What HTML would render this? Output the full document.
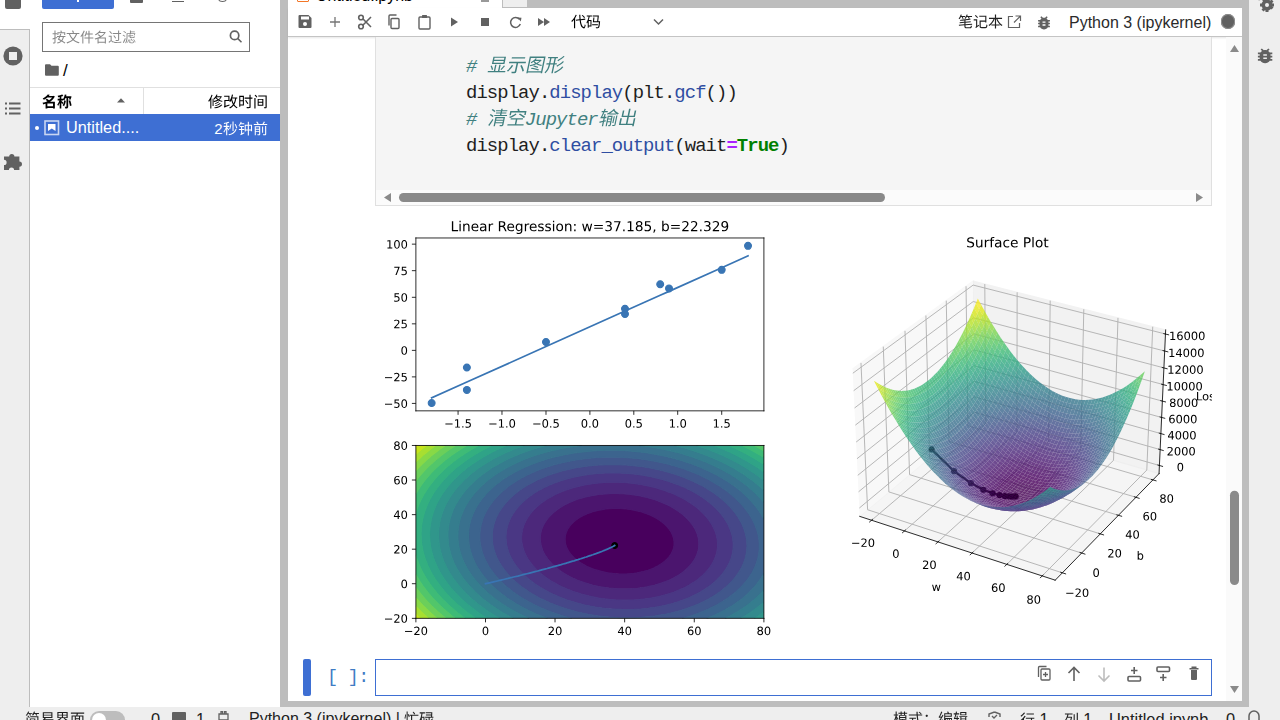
<!DOCTYPE html>
<html><head><meta charset="utf-8">
<style>
*{box-sizing:border-box}
html,body{margin:0;padding:0;width:1280px;height:720px;overflow:hidden;background:#fff;font-family:"Liberation Sans",sans-serif;color:#212121}
.a{position:absolute}
.t{position:absolute;white-space:nowrap;line-height:1}
svg{display:block}
.fig *{stroke-linejoin:round;stroke-linecap:butt}
.cj{display:inline-block;height:1em;vertical-align:-0.12em;fill:currentColor;overflow:visible}
.code{position:absolute;left:466px;font-family:"Liberation Mono",monospace;font-size:18.9px;letter-spacing:-0.92px;line-height:26.45px;white-space:pre;color:#1e1e1e}
.code .cj{font-size:19px}
.cm{color:#408080;font-style:italic}
.pr{color:#2f4ea2}
.op{color:#aa22ff;font-weight:bold}
.kw{color:#008000;font-weight:bold}
</style></head><body>
<svg width="0" height="0" style="position:absolute"><defs><path id="gb540d" d="M236 -503C274 -473 320 -435 359 -400C256 -350 143 -313 28 -290C50 -264 78 -213 90 -180C140 -192 189 -206 238 -222V89H358V46H735V89H859V-361H534C672 -449 787 -564 857 -709L774 -757L754 -751H460C480 -776 499 -801 517 -827L382 -855C322 -761 211 -660 47 -588C74 -568 112 -522 130 -493C218 -538 292 -588 355 -643H675C623 -574 553 -513 471 -461C427 -499 373 -540 329 -571ZM735 -63H358V-252H735Z"/><path id="gb79f0" d="M481 -447C463 -328 427 -206 375 -130C402 -117 450 -88 471 -70C525 -156 568 -292 592 -427ZM774 -427C813 -317 851 -172 862 -77L972 -112C958 -208 920 -348 877 -459ZM519 -847C496 -733 455 -618 400 -539V-567H287V-708C335 -719 381 -733 422 -748L356 -844C276 -810 153 -780 43 -762C55 -736 70 -696 74 -671C107 -675 143 -680 178 -686V-567H43V-455H164C129 -357 74 -250 19 -185C37 -158 62 -111 73 -79C110 -129 147 -199 178 -275V90H287V-314C312 -275 337 -233 350 -205L415 -301C398 -324 314 -409 287 -433V-455H400V-504C428 -488 463 -465 481 -451C513 -495 543 -552 569 -616H629V-42C629 -28 624 -24 611 -24C597 -24 553 -24 513 -26C529 4 548 54 553 86C618 86 667 82 701 65C737 46 747 16 747 -41V-616H829C816 -584 802 -551 788 -522L892 -496C919 -562 949 -640 973 -712L898 -731L881 -727H608C617 -759 626 -791 633 -824Z"/><path id="g663e" d="M244 -570H757V-466H244ZM244 -731H757V-628H244ZM171 -791V-405H833V-791ZM820 -330C787 -266 727 -180 682 -126L740 -97C786 -151 842 -230 885 -300ZM124 -297C165 -233 213 -145 236 -93L297 -123C275 -174 224 -260 183 -322ZM571 -365V-39H423V-365H352V-39H40V33H960V-39H643V-365Z"/><path id="g793a" d="M234 -351C191 -238 117 -127 35 -56C54 -46 88 -24 104 -11C183 -88 262 -207 311 -330ZM684 -320C756 -224 832 -94 859 -10L934 -44C904 -129 826 -255 753 -349ZM149 -766V-692H853V-766ZM60 -523V-449H461V-19C461 -3 455 1 437 2C418 3 352 3 284 0C296 23 308 56 311 79C400 79 459 78 494 66C530 53 542 31 542 -18V-449H941V-523Z"/><path id="g56fe" d="M375 -279C455 -262 557 -227 613 -199L644 -250C588 -276 487 -309 407 -325ZM275 -152C413 -135 586 -95 682 -61L715 -117C618 -149 445 -188 310 -203ZM84 -796V80H156V38H842V80H917V-796ZM156 -29V-728H842V-29ZM414 -708C364 -626 278 -548 192 -497C208 -487 234 -464 245 -452C275 -472 306 -496 337 -523C367 -491 404 -461 444 -434C359 -394 263 -364 174 -346C187 -332 203 -303 210 -285C308 -308 413 -345 508 -396C591 -351 686 -317 781 -296C790 -314 809 -340 823 -353C735 -369 647 -396 569 -432C644 -481 707 -538 749 -606L706 -631L695 -628H436C451 -647 465 -666 477 -686ZM378 -563 385 -570H644C608 -531 560 -496 506 -465C455 -494 411 -527 378 -563Z"/><path id="g5f62" d="M846 -824C784 -743 670 -658 574 -610C593 -596 615 -574 628 -557C730 -613 842 -703 916 -795ZM875 -548C808 -461 687 -371 584 -319C603 -304 625 -281 638 -266C745 -325 866 -422 943 -520ZM898 -278C823 -153 681 -42 532 19C552 35 574 61 586 79C740 8 883 -111 968 -250ZM404 -708V-449H243V-708ZM41 -449V-379H171C167 -230 145 -83 37 36C55 46 81 70 93 86C213 -45 238 -211 242 -379H404V79H478V-379H586V-449H478V-708H573V-778H58V-708H172V-449Z"/><path id="g6e05" d="M82 -772C137 -742 207 -695 241 -662L287 -721C252 -752 181 -796 126 -823ZM35 -506C93 -475 166 -427 201 -394L246 -453C209 -486 135 -531 78 -559ZM66 21 134 66C182 -28 240 -154 282 -261L222 -305C175 -190 111 -57 66 21ZM431 -212H793V-134H431ZM431 -268V-342H793V-268ZM575 -840V-762H319V-704H575V-640H343V-585H575V-516H281V-458H950V-516H649V-585H888V-640H649V-704H913V-762H649V-840ZM361 -400V79H431V-77H793V-5C793 7 788 11 774 12C760 13 712 13 662 11C671 29 680 57 684 76C755 76 800 76 828 64C856 53 864 33 864 -4V-400Z"/><path id="g7a7a" d="M564 -537C666 -484 802 -405 869 -357L919 -415C848 -462 710 -537 611 -587ZM384 -590C307 -523 203 -455 85 -413L129 -348C246 -398 356 -474 436 -544ZM77 -22V46H927V-22H538V-275H825V-343H182V-275H459V-22ZM424 -824C440 -792 459 -752 473 -718H76V-492H150V-649H849V-517H926V-718H565C550 -755 524 -807 502 -846Z"/><path id="g8f93" d="M734 -447V-85H793V-447ZM861 -484V-5C861 6 857 9 846 10C833 10 793 10 747 9C757 27 765 54 767 71C826 71 866 70 890 60C915 49 922 31 922 -5V-484ZM71 -330C79 -338 108 -344 140 -344H219V-206C152 -190 90 -176 42 -167L59 -96L219 -137V79H285V-154L368 -176L362 -239L285 -221V-344H365V-413H285V-565H219V-413H132C158 -483 183 -566 203 -652H367V-720H217C225 -756 231 -792 236 -827L166 -839C162 -800 157 -759 150 -720H47V-652H137C119 -569 100 -501 91 -475C77 -430 65 -398 48 -393C56 -376 67 -344 71 -330ZM659 -843C593 -738 469 -639 348 -583C366 -568 386 -545 397 -527C424 -541 451 -557 477 -574V-532H847V-581C872 -566 899 -551 926 -537C935 -557 956 -581 974 -596C869 -641 774 -698 698 -783L720 -816ZM506 -594C562 -635 615 -683 659 -734C710 -678 765 -633 826 -594ZM614 -406V-327H477V-406ZM415 -466V76H477V-130H614V1C614 10 612 12 604 13C594 13 568 13 537 12C546 30 554 57 556 74C599 74 630 74 651 63C672 52 677 33 677 1V-466ZM477 -269H614V-187H477Z"/><path id="g51fa" d="M104 -341V21H814V78H895V-341H814V-54H539V-404H855V-750H774V-477H539V-839H457V-477H228V-749H150V-404H457V-54H187V-341Z"/><path id="g6309" d="M772 -379C755 -284 723 -210 675 -151C621 -180 567 -209 516 -234C538 -277 562 -327 584 -379ZM417 -210C482 -178 553 -139 623 -99C557 -45 470 -9 358 16C371 32 389 64 395 81C519 49 615 4 688 -61C773 -10 850 41 900 82L954 24C901 -16 824 -65 739 -114C794 -182 831 -269 853 -379H959V-447H612C631 -497 649 -547 663 -594L587 -605C573 -556 553 -501 531 -447H355V-379H502C474 -315 444 -256 417 -210ZM383 -712V-517H454V-645H873V-518H945V-712H711C701 -752 684 -803 668 -845L593 -831C606 -795 620 -750 630 -712ZM177 -840V-639H42V-568H177V-319L30 -277L48 -204L177 -244V-7C177 8 171 12 158 12C145 13 104 13 58 12C68 32 79 62 81 80C147 80 188 78 214 67C240 55 249 35 249 -7V-267L377 -309L367 -376L249 -340V-568H357V-639H249V-840Z"/><path id="g6587" d="M423 -823C453 -774 485 -707 497 -666L580 -693C566 -734 531 -799 501 -847ZM50 -664V-590H206C265 -438 344 -307 447 -200C337 -108 202 -40 36 7C51 25 75 60 83 78C250 24 389 -48 502 -146C615 -46 751 28 915 73C928 52 950 20 967 4C807 -36 671 -107 560 -201C661 -304 738 -432 796 -590H954V-664ZM504 -253C410 -348 336 -462 284 -590H711C661 -455 592 -344 504 -253Z"/><path id="g4ef6" d="M317 -341V-268H604V80H679V-268H953V-341H679V-562H909V-635H679V-828H604V-635H470C483 -680 494 -728 504 -775L432 -790C409 -659 367 -530 309 -447C327 -438 359 -420 373 -409C400 -451 425 -504 446 -562H604V-341ZM268 -836C214 -685 126 -535 32 -437C45 -420 67 -381 75 -363C107 -397 137 -437 167 -480V78H239V-597C277 -667 311 -741 339 -815Z"/><path id="g540d" d="M263 -529C314 -494 373 -446 417 -406C300 -344 171 -299 47 -273C61 -256 79 -224 86 -204C141 -217 197 -233 252 -253V79H327V27H773V79H849V-340H451C617 -429 762 -553 844 -713L794 -744L781 -740H427C451 -768 473 -797 492 -826L406 -843C347 -747 233 -636 69 -559C87 -546 111 -519 122 -501C217 -550 296 -609 361 -671H733C674 -583 587 -508 487 -445C440 -486 374 -536 321 -572ZM773 -42H327V-271H773Z"/><path id="g8fc7" d="M79 -774C135 -722 199 -649 227 -602L290 -646C259 -693 193 -763 137 -813ZM381 -477C432 -415 493 -327 521 -275L584 -313C555 -365 492 -449 441 -510ZM262 -465H50V-395H188V-133C143 -117 91 -72 37 -14L89 57C140 -12 189 -71 222 -71C245 -71 277 -37 319 -11C389 33 473 43 597 43C693 43 870 38 941 34C942 11 955 -27 964 -47C867 -37 716 -28 599 -28C487 -28 402 -36 336 -76C302 -96 281 -116 262 -128ZM720 -837V-660H332V-589H720V-192C720 -174 713 -169 693 -168C673 -167 603 -167 530 -170C541 -148 553 -115 557 -93C651 -93 712 -94 747 -107C783 -119 796 -141 796 -192V-589H935V-660H796V-837Z"/><path id="g6ee4" d="M528 -198V-18C528 46 548 62 627 62C643 62 752 62 768 62C833 62 851 35 857 -74C840 -79 815 -87 803 -97C799 -4 794 8 762 8C738 8 649 8 633 8C596 8 590 4 590 -19V-198ZM448 -197C433 -130 406 -41 369 12L421 35C457 -20 483 -111 499 -180ZM616 -240C655 -193 699 -128 717 -85L765 -114C747 -156 703 -220 662 -266ZM803 -197C852 -130 899 -37 916 21L968 -4C950 -63 900 -152 852 -219ZM88 -767C144 -733 212 -681 246 -645L292 -697C258 -731 189 -780 133 -813ZM42 -500C99 -469 170 -422 205 -390L249 -443C213 -475 140 -519 85 -548ZM63 10 127 51C173 -39 227 -158 268 -259L211 -300C167 -192 105 -65 63 10ZM326 -651V-440C326 -300 316 -103 228 38C242 46 272 71 282 85C378 -67 395 -290 395 -439V-592H874C862 -557 849 -522 835 -498L890 -483C913 -522 937 -586 958 -642L912 -654L901 -651H639V-714H915V-772H639V-840H567V-651ZM540 -578V-490L432 -481L437 -424L540 -433V-394C540 -326 563 -309 652 -309C671 -309 797 -309 816 -309C884 -309 904 -331 911 -420C893 -424 866 -433 852 -443C848 -376 842 -367 809 -367C782 -367 678 -367 657 -367C614 -367 607 -372 607 -395V-439L795 -456L790 -510L607 -495V-578Z"/><path id="g4fee" d="M698 -386C644 -334 543 -287 454 -260C468 -248 486 -230 496 -215C591 -247 694 -299 755 -362ZM794 -287C726 -216 594 -159 467 -130C482 -116 497 -95 506 -80C641 -117 774 -179 850 -263ZM887 -179C798 -76 614 -12 413 17C428 33 444 59 452 77C664 40 852 -32 952 -151ZM306 -561V-78H370V-561ZM553 -668H832C798 -613 749 -566 692 -528C630 -570 584 -619 553 -668ZM565 -841C523 -733 451 -629 370 -562C387 -552 415 -530 428 -518C458 -546 488 -579 517 -616C545 -574 584 -532 633 -494C554 -452 462 -424 371 -407C384 -393 400 -366 407 -350C507 -371 605 -404 690 -454C756 -412 836 -378 930 -356C939 -373 958 -402 972 -416C887 -432 813 -459 750 -492C827 -548 890 -620 928 -712L885 -734L871 -731H590C607 -761 621 -792 634 -823ZM235 -834C187 -679 107 -526 20 -426C33 -407 53 -367 59 -349C92 -388 123 -432 153 -481V80H224V-614C255 -678 282 -747 304 -815Z"/><path id="g6539" d="M602 -585H808C787 -454 755 -343 706 -251C657 -345 622 -455 598 -574ZM76 -770V-696H357V-484H89V-103C89 -66 73 -53 58 -46C71 -27 83 10 88 32C111 13 148 -6 439 -117C436 -134 431 -166 430 -188L165 -93V-410H429L424 -404C440 -392 470 -363 482 -350C508 -385 532 -425 553 -469C581 -362 616 -264 662 -181C602 -97 522 -32 416 16C431 32 453 66 461 84C563 33 643 -31 706 -111C761 -32 830 32 915 75C927 55 950 27 968 12C879 -29 808 -94 751 -177C817 -286 859 -420 886 -585H952V-655H626C643 -710 658 -768 670 -827L596 -840C565 -676 510 -517 431 -413V-770Z"/><path id="g65f6" d="M474 -452C527 -375 595 -269 627 -208L693 -246C659 -307 590 -409 536 -485ZM324 -402V-174H153V-402ZM324 -469H153V-688H324ZM81 -756V-25H153V-106H394V-756ZM764 -835V-640H440V-566H764V-33C764 -13 756 -6 736 -6C714 -4 640 -4 562 -7C573 15 585 49 590 70C690 70 754 69 790 56C826 44 840 22 840 -33V-566H962V-640H840V-835Z"/><path id="g95f4" d="M91 -615V80H168V-615ZM106 -791C152 -747 204 -684 227 -644L289 -684C265 -726 211 -785 164 -827ZM379 -295H619V-160H379ZM379 -491H619V-358H379ZM311 -554V-98H690V-554ZM352 -784V-713H836V-11C836 2 832 6 819 7C806 7 765 8 723 6C733 25 743 57 747 75C808 75 851 75 878 63C904 50 913 31 913 -11V-784Z"/><path id="g79d2" d="M493 -670C478 -561 452 -445 416 -368C433 -362 465 -347 479 -337C515 -418 545 -540 563 -657ZM775 -662C822 -576 869 -462 887 -387L955 -412C936 -487 889 -598 839 -684ZM839 -351C766 -154 609 -41 360 11C376 28 393 57 401 77C664 14 830 -112 909 -329ZM633 -840V-221H705V-840ZM372 -826C297 -793 165 -763 53 -745C61 -729 71 -704 74 -687C117 -693 164 -700 210 -709V-558H43V-488H201C161 -373 93 -243 30 -172C42 -154 60 -124 68 -103C118 -164 170 -263 210 -363V78H284V-385C317 -336 355 -274 371 -242L416 -301C397 -328 311 -439 284 -468V-488H425V-558H284V-725C333 -737 380 -751 418 -766Z"/><path id="g949f" d="M653 -556V-318H516V-556ZM727 -556H865V-318H727ZM653 -838V-629H448V-184H516V-245H653V81H727V-245H865V-190H937V-629H727V-838ZM180 -837C150 -744 96 -654 36 -595C48 -579 68 -541 75 -525C110 -561 143 -606 173 -656H415V-725H210C224 -755 237 -787 248 -818ZM60 -344V-275H205V-73C205 -26 171 4 152 17C165 30 184 57 192 73C208 57 237 40 427 -59C421 -75 415 -104 413 -124L277 -56V-275H418V-344H277V-479H394V-547H112V-479H205V-344Z"/><path id="g524d" d="M604 -514V-104H674V-514ZM807 -544V-14C807 1 802 5 786 5C769 6 715 6 654 4C665 24 677 56 681 76C758 77 809 75 839 63C870 51 881 30 881 -13V-544ZM723 -845C701 -796 663 -730 629 -682H329L378 -700C359 -740 316 -799 278 -841L208 -816C244 -775 281 -721 300 -682H53V-613H947V-682H714C743 -723 775 -773 803 -819ZM409 -301V-200H187V-301ZM409 -360H187V-459H409ZM116 -523V75H187V-141H409V-7C409 6 405 10 391 10C378 11 332 11 281 9C291 28 302 57 307 76C374 76 419 75 446 63C474 52 482 32 482 -6V-523Z"/><path id="g4ee3" d="M715 -783C774 -733 844 -663 877 -618L935 -658C901 -703 829 -771 769 -819ZM548 -826C552 -720 559 -620 568 -528L324 -497L335 -426L576 -456C614 -142 694 67 860 79C913 82 953 30 975 -143C960 -150 927 -168 912 -183C902 -67 886 -8 857 -9C750 -20 684 -200 650 -466L955 -504L944 -575L642 -537C632 -626 626 -724 623 -826ZM313 -830C247 -671 136 -518 21 -420C34 -403 57 -365 65 -348C111 -389 156 -439 199 -494V78H276V-604C317 -668 354 -737 384 -807Z"/><path id="g7801" d="M410 -205V-137H792V-205ZM491 -650C484 -551 471 -417 458 -337H478L863 -336C844 -117 822 -28 796 -2C786 8 776 10 758 9C740 9 695 9 647 4C659 23 666 52 668 73C716 76 762 76 788 74C818 72 837 65 856 43C892 7 915 -98 938 -368C939 -379 940 -401 940 -401H816C832 -525 848 -675 856 -779L803 -785L791 -781H443V-712H778C770 -624 757 -502 745 -401H537C546 -475 556 -569 561 -645ZM51 -787V-718H173C145 -565 100 -423 29 -328C41 -308 58 -266 63 -247C82 -272 100 -299 116 -329V34H181V-46H365V-479H182C208 -554 229 -635 245 -718H394V-787ZM181 -411H299V-113H181Z"/><path id="g7b14" d="M58 -159 65 -93 426 -124V-44C426 47 457 71 570 71C595 71 773 71 799 71C894 71 917 38 928 -78C906 -83 876 -94 859 -106C852 -14 844 4 795 4C756 4 604 4 574 4C512 4 501 -5 501 -44V-131L944 -169L937 -234L501 -197V-302L853 -332L846 -394L501 -365V-456C630 -470 753 -489 849 -512L807 -573C646 -533 367 -503 127 -488C134 -471 143 -444 145 -426C235 -431 332 -439 426 -448V-358L107 -331L114 -268L426 -295V-190ZM184 -845C153 -744 99 -645 36 -579C54 -569 85 -549 100 -538C133 -577 165 -626 194 -681H245C271 -634 297 -577 308 -541L374 -566C364 -597 343 -641 321 -681H476V-745H224C236 -772 247 -799 257 -827ZM578 -845C549 -746 495 -653 429 -592C447 -582 479 -561 493 -549C527 -584 560 -630 589 -681H661C683 -643 706 -599 715 -568L781 -592C773 -617 756 -650 737 -681H935V-745H620C632 -772 642 -799 651 -827Z"/><path id="g8bb0" d="M124 -769C179 -720 249 -652 280 -608L335 -661C300 -703 230 -769 176 -815ZM200 61V60C214 41 242 20 408 -98C400 -113 389 -143 384 -163L280 -92V-526H46V-453H206V-93C206 -44 175 -10 157 4C171 17 192 45 200 61ZM419 -770V-695H816V-442H438V-57C438 41 474 65 586 65C611 65 790 65 816 65C925 65 951 20 962 -143C940 -148 908 -161 889 -175C884 -33 874 -7 812 -7C773 -7 621 -7 591 -7C527 -7 515 -16 515 -56V-370H816V-318H891V-770Z"/><path id="g672c" d="M460 -839V-629H65V-553H367C294 -383 170 -221 37 -140C55 -125 80 -98 92 -79C237 -178 366 -357 444 -553H460V-183H226V-107H460V80H539V-107H772V-183H539V-553H553C629 -357 758 -177 906 -81C920 -102 946 -131 965 -146C826 -226 700 -384 628 -553H937V-629H539V-839Z"/><path id="g7b80" d="M107 -454V78H180V-454ZM152 -539C194 -502 242 -448 264 -413L322 -454C299 -489 250 -540 207 -577ZM320 -387V-41H688V-387ZM207 -843C174 -748 116 -657 49 -598C66 -589 96 -568 111 -556C147 -592 183 -638 214 -689H274C297 -648 320 -599 330 -566L396 -593C387 -619 369 -655 350 -689H493V-752H248C259 -776 269 -800 278 -825ZM596 -841C571 -755 525 -673 468 -618C487 -609 517 -588 530 -576C558 -606 586 -645 610 -688H687C717 -646 746 -595 758 -561L823 -590C812 -617 790 -653 767 -688H930V-751H641C651 -775 660 -800 668 -825ZM620 -189V-99H385V-189ZM385 -329H620V-245H385ZM350 -538V-470H820V-11C820 4 816 8 800 9C785 10 732 10 676 8C686 26 696 55 700 74C775 74 824 73 855 63C885 51 894 32 894 -10V-538Z"/><path id="g6613" d="M260 -573H754V-473H260ZM260 -731H754V-633H260ZM186 -794V-410H297C233 -318 137 -235 39 -179C56 -167 85 -140 98 -126C152 -161 208 -206 260 -257H399C332 -150 232 -55 124 6C141 18 169 45 181 60C295 -15 408 -127 483 -257H618C570 -137 493 -31 402 38C418 49 449 73 461 85C557 6 642 -116 696 -257H817C801 -85 784 -13 763 7C753 17 744 19 726 19C708 19 662 19 613 13C625 32 632 60 633 79C683 82 732 82 757 80C786 78 806 71 826 52C856 20 876 -66 895 -291C897 -302 898 -325 898 -325H322C345 -352 366 -381 384 -410H829V-794Z"/><path id="g754c" d="M311 -271V-212C311 -137 294 -40 118 26C134 40 159 67 169 86C364 8 388 -114 388 -210V-271ZM231 -578H461V-469H231ZM536 -578H768V-469H536ZM231 -744H461V-637H231ZM536 -744H768V-637H536ZM629 -271V78H706V-269C769 -226 840 -191 911 -169C922 -188 945 -217 962 -233C843 -264 723 -328 646 -406H845V-808H157V-406H357C280 -327 160 -260 45 -227C62 -211 84 -184 95 -164C227 -211 366 -301 449 -406H559C597 -356 647 -310 703 -271Z"/><path id="g9762" d="M389 -334H601V-221H389ZM389 -395V-506H601V-395ZM389 -160H601V-43H389ZM58 -774V-702H444C437 -661 426 -614 416 -576H104V80H176V27H820V80H896V-576H493L532 -702H945V-774ZM176 -43V-506H320V-43ZM820 -43H670V-506H820Z"/><path id="g5fd9" d="M175 -840V79H243V-840ZM80 -647C73 -566 55 -456 28 -390L87 -369C113 -442 132 -558 137 -639ZM251 -654C281 -594 312 -513 323 -464L380 -492C368 -539 336 -617 305 -676ZM573 -806C613 -760 658 -696 677 -655L743 -691C722 -733 676 -794 635 -838ZM372 -633V-561H469V16H935V-51H545V-561H961V-633Z"/><path id="g788c" d="M418 -347C465 -308 518 -253 542 -216L594 -257C570 -294 515 -348 468 -384ZM441 -800V-735H815L811 -648H462V-588H808L803 -494H409V-427H641V-237C544 -172 441 -106 374 -67L416 -8C481 -52 563 -110 641 -167V-2C641 9 638 12 626 12C614 12 577 13 535 11C544 31 554 59 557 78C615 78 654 76 679 66C704 54 711 35 711 -2V-186C766 -104 840 -36 925 1C936 -18 956 -43 972 -56C894 -84 823 -137 770 -202C828 -242 896 -296 949 -345L890 -382C852 -341 792 -287 739 -246C728 -262 719 -279 711 -296V-427H959V-494H875C881 -590 886 -711 888 -799L835 -803L826 -800ZM46 -789V-720H162C139 -547 100 -384 28 -278C42 -262 66 -228 74 -212C92 -240 109 -270 124 -303V19H188V-60H364V-496H191C209 -567 224 -642 235 -720H395V-789ZM188 -430H300V-127H188Z"/><path id="g6a21" d="M472 -417H820V-345H472ZM472 -542H820V-472H472ZM732 -840V-757H578V-840H507V-757H360V-693H507V-618H578V-693H732V-618H805V-693H945V-757H805V-840ZM402 -599V-289H606C602 -259 598 -232 591 -206H340V-142H569C531 -65 459 -12 312 20C326 35 345 63 352 80C526 38 607 -34 647 -140C697 -30 790 45 920 80C930 61 950 33 966 18C853 -6 767 -61 719 -142H943V-206H666C671 -232 676 -260 679 -289H893V-599ZM175 -840V-647H50V-577H175V-576C148 -440 90 -281 32 -197C45 -179 63 -146 72 -124C110 -183 146 -274 175 -372V79H247V-436C274 -383 305 -319 318 -286L366 -340C349 -371 273 -496 247 -535V-577H350V-647H247V-840Z"/><path id="g5f0f" d="M709 -791C761 -755 823 -701 853 -665L905 -712C875 -747 811 -798 760 -833ZM565 -836C565 -774 567 -713 570 -653H55V-580H575C601 -208 685 82 849 82C926 82 954 31 967 -144C946 -152 918 -169 901 -186C894 -52 883 4 855 4C756 4 678 -241 653 -580H947V-653H649C646 -712 645 -773 645 -836ZM59 -24 83 50C211 22 395 -20 565 -60L559 -128L345 -82V-358H532V-431H90V-358H270V-67Z"/><path id="gff1a" d="M250 -486C290 -486 326 -515 326 -560C326 -606 290 -636 250 -636C210 -636 174 -606 174 -560C174 -515 210 -486 250 -486ZM250 4C290 4 326 -26 326 -71C326 -117 290 -146 250 -146C210 -146 174 -117 174 -71C174 -26 210 4 250 4Z"/><path id="g7f16" d="M40 -54 58 15C140 -18 245 -61 346 -103L332 -163C223 -121 114 -79 40 -54ZM61 -423C75 -430 98 -435 205 -450C167 -386 132 -335 116 -316C87 -278 66 -252 45 -248C53 -230 64 -196 68 -182C87 -194 118 -204 339 -255C336 -271 333 -298 334 -317L167 -282C238 -374 307 -486 364 -597L303 -632C286 -593 265 -554 245 -517L133 -505C190 -593 246 -706 287 -815L215 -840C179 -719 112 -587 91 -554C71 -520 55 -496 38 -491C46 -473 57 -438 61 -423ZM624 -350V-202H541V-350ZM675 -350H746V-202H675ZM481 -412V72H541V-143H624V47H675V-143H746V46H797V-143H871V7C871 14 868 16 861 17C854 17 836 17 814 16C822 32 829 56 831 73C867 73 890 71 908 62C926 52 930 35 930 8V-413L871 -412ZM797 -350H871V-202H797ZM605 -826C621 -798 637 -762 648 -732H414V-515C414 -361 405 -139 314 21C329 28 360 50 372 63C465 -99 482 -335 483 -498H920V-732H729C717 -765 697 -811 675 -846ZM483 -668H850V-561H483Z"/><path id="g8f91" d="M551 -751H819V-650H551ZM482 -808V-594H892V-808ZM81 -332C89 -340 119 -346 153 -346H244V-202L40 -167L56 -94L244 -132V76H313V-146L427 -169L423 -234L313 -214V-346H405V-414H313V-568H244V-414H148C176 -483 204 -565 228 -650H412V-722H247C255 -756 263 -791 269 -825L196 -840C191 -801 183 -761 174 -722H47V-650H157C136 -570 115 -504 105 -479C88 -435 75 -403 58 -398C66 -380 77 -346 81 -332ZM815 -472V-386H560V-472ZM400 -76 412 -8 815 -40V80H885V-46L959 -52L960 -115L885 -110V-472H953V-535H423V-472H491V-82ZM815 -329V-242H560V-329ZM815 -185V-105L560 -86V-185Z"/><path id="g884c" d="M435 -780V-708H927V-780ZM267 -841C216 -768 119 -679 35 -622C48 -608 69 -579 79 -562C169 -626 272 -724 339 -811ZM391 -504V-432H728V-17C728 -1 721 4 702 5C684 6 616 6 545 3C556 25 567 56 570 77C668 77 725 77 759 66C792 53 804 30 804 -16V-432H955V-504ZM307 -626C238 -512 128 -396 25 -322C40 -307 67 -274 78 -259C115 -289 154 -325 192 -364V83H266V-446C308 -496 346 -548 378 -600Z"/><path id="gff0c" d="M157 107C262 70 330 -12 330 -120C330 -190 300 -235 245 -235C204 -235 169 -210 169 -163C169 -116 203 -92 244 -92L261 -94C256 -25 212 22 135 54Z"/><path id="g5217" d="M642 -724V-164H716V-724ZM848 -835V-17C848 -1 842 4 826 4C810 5 758 5 703 3C713 24 725 56 728 76C805 76 853 74 882 63C912 51 924 29 924 -18V-835ZM181 -302C232 -267 294 -218 333 -181C265 -85 178 -17 79 22C95 37 115 66 124 85C336 -10 491 -205 541 -552L495 -566L482 -563H257C273 -611 287 -662 299 -714H571V-786H61V-714H224C189 -561 133 -419 53 -326C70 -315 99 -290 111 -276C158 -335 198 -409 232 -494H459C440 -400 411 -317 373 -247C334 -281 273 -326 224 -357Z"/></defs></svg>
<!-- left tab bar -->
<div class="a" style="left:0;top:0;width:30px;height:707px;background:#eeeeee;border-right:1px solid #bdbdbd"></div>
<div class="a" style="left:0;top:0;width:30px;height:30px;background:#fff;border-bottom:1px solid #bdbdbd"></div>
<div class="a" style="left:0;top:29px;width:30px;height:1px;background:#bdbdbd"></div>
<svg class="a" style="left:0;top:0" width="29" height="180" viewBox="0 0 29 180">
  <path d="M5 -4h16v11a2 2 0 0 1-2 2h-12a2 2 0 0 1-2-2z" fill="#616161"/>
  <circle cx="13" cy="56" r="9.6" fill="#616161"/>
  <rect x="9" y="52" width="8" height="8" fill="#eeeeee"/>
  <g fill="#616161"><rect x="5" y="102.5" width="2" height="2"/><rect x="5" y="107.5" width="2" height="2"/><rect x="5" y="112.5" width="2" height="2"/>
  <rect x="9" y="102.5" width="11.5" height="2"/><rect x="9" y="107.5" width="11.5" height="2"/><rect x="9" y="112.5" width="11.5" height="2"/></g>
  <path d="M4 156.5h5.2a2.6 2.6 0 1 1 5.2 0h5v5a2.6 2.6 0 1 1 0 5.2v3.3h-5.3a2.6 2.6 0 1 0-5.2 0h-4.9v-5a2.6 2.6 0 1 0 0-5.2z" fill="#616161"/>
</svg>

<!-- file browser panel -->
<div class="a" style="left:30px;top:0;width:250px;height:707px;background:#fff"></div>
<div class="a" style="left:42px;top:-4px;width:72px;height:13px;background:#3e6fd3;border-radius:2px"></div>
<div class="a" style="left:129.5px;top:0;width:13px;height:2.5px;background:#616161;border-radius:0 0 1px 1px"></div>
<div class="a" style="left:172px;top:0.8px;width:11.5px;height:1.6px;background:#616161"></div>
<div class="a" style="left:77px;top:0;width:1.6px;height:1.6px;background:#fff"></div>
<div class="a" style="left:217.5px;top:-5px;width:9px;height:7px;border:1.6px solid #616161;border-radius:50%"></div>
<div class="a" style="left:42px;top:22px;width:208px;height:30px;border:1px solid #757575;background:#fff"></div>
<div class="t" style="left:52px;top:30px;font-size:14px;color:#888"><svg class="cj" viewBox="0 -880 6000 1000" style="width:6.000em"><use href="#g6309" x="0"/><use href="#g6587" x="1000"/><use href="#g4ef6" x="2000"/><use href="#g540d" x="3000"/><use href="#g8fc7" x="4000"/><use href="#g6ee4" x="5000"/></svg></div>
<svg class="a" style="left:229px;top:29px" width="15" height="15" viewBox="0 0 15 15"><circle cx="5.6" cy="6.4" r="4.2" fill="none" stroke="#616161" stroke-width="1.7"/><path d="M8.6 9.4l3.9 3.9" stroke="#616161" stroke-width="1.5"/></svg>
<svg class="a" style="left:45px;top:64px" width="14" height="12" viewBox="0 0 14 12"><path d="M0 1.2a1 1 0 0 1 1-1h4l1.5 1.6h6.3a1 1 0 0 1 1 1v7.9a1 1 0 0 1-1 1h-11.8a1 1 0 0 1-1-1z" fill="#616161"/></svg>
<div class="t" style="left:63px;top:62px;font-size:17px;color:#000">/</div>
<div class="a" style="left:30px;top:87px;width:250px;height:1px;background:#e0e0e0"></div>
<div class="a" style="left:143px;top:88px;width:1px;height:26px;background:#e0e0e0"></div>
<div class="t" style="left:42px;top:94px;font-size:15px;font-weight:bold;color:#000"><svg class="cj" viewBox="0 -880 2000 1000" style="width:2.000em"><use href="#gb540d" x="0"/><use href="#gb79f0" x="1000"/></svg></div>
<svg class="a" style="left:116px;top:97px" width="10" height="6" viewBox="0 0 10 6"><path d="M1 5.5L5 1.2L9 5.5z" fill="#616161"/></svg>
<div class="t" style="right:1012.5px;top:94px;font-size:15px;color:#000"><svg class="cj" viewBox="0 -880 4000 1000" style="width:4.000em"><use href="#g4fee" x="0"/><use href="#g6539" x="1000"/><use href="#g65f6" x="2000"/><use href="#g95f4" x="3000"/></svg></div>
<div class="a" style="left:30px;top:114px;width:250px;height:27px;background:#3e6fd3"></div>
<div class="a" style="left:34.5px;top:125.5px;width:4.5px;height:4.5px;border-radius:50%;background:#fff"></div>
<svg class="a" style="left:44px;top:120px" width="16" height="16" viewBox="0 0 16 16"><rect x="1" y="1" width="13.5" height="13.5" fill="none" stroke="#c9d6f2" stroke-width="1.6"/><path d="M4 4h7.5v7l-3.7-2.6L4 11z" fill="#fff"/></svg>
<div class="t" style="left:66px;top:119.3px;font-size:16.3px;color:#fff">Untitled....</div>
<div class="t" style="right:1012.5px;top:120.5px;font-size:15px;color:#fff">2<svg class="cj" viewBox="0 -880 3000 1000" style="width:3.000em"><use href="#g79d2" x="0"/><use href="#g949f" x="1000"/><use href="#g524d" x="2000"/></svg></div>

<!-- splitter -->
<div class="a" style="left:280px;top:0;width:8px;height:707px;background:#bdbdbd"></div>

<!-- tab bar -->
<div class="a" style="left:288px;top:0;width:954px;height:8px;background:#bdbdbd"></div>
<div class="a" style="left:288px;top:0;width:214px;height:8px;background:#fff"></div>
<div class="a" style="left:502px;top:0;width:26px;height:8px;background:#bdbdbd"></div>
<div class="a" style="left:503px;top:0;width:24px;height:7px;background:#eeeeee"></div>
<div class="a" style="left:297px;top:-10px;width:12px;height:12px;border:1.5px solid #f37626;border-radius:1px"></div>
<div class="t" style="left:316px;top:-12px;font-size:16px;color:#000">Untitled.ipynb</div>
<div class="a" style="left:481px;top:0;width:8px;height:2px;background:#999"></div>

<!-- toolbar -->
<div class="a" style="left:288px;top:8px;width:954px;height:29px;background:#fff;border-bottom:1px solid #c4c4c4;box-shadow:0 1px 2px rgba(0,0,0,0.10)"></div>
<svg class="a" style="left:288px;top:7.4px" width="420" height="28" viewBox="0 0 420 28">
  <g fill="#616161">
    <path d="M11.5 8h9l3 3v9a1 1 0 0 1-1 1h-11a1 1 0 0 1-1-1v-11a1 1 0 0 1 1-1z"/>
  </g>
  <rect x="13" y="9.5" width="8" height="3" fill="#fff"/>
  <circle cx="17" cy="17" r="2" fill="#fff"/>
  <path d="M47 10v10M42 15h10" stroke="#757575" stroke-width="1.3"/>
  <g stroke="#616161" fill="none" stroke-width="1.6">
    <circle cx="73" cy="10.5" r="2.3"/><circle cx="73" cy="19.5" r="2.3"/>
    <path d="M74.8 11.8L83 20M74.8 18.2L83 10"/>
  </g>
  <g fill="none" stroke="#616161" stroke-width="1.4">
    <rect x="103" y="11.5" width="8" height="10" rx="1"/>
    <path d="M101 18.5v-9.5a1 1 0 0 1 1-1h6.5"/>
    <rect x="131" y="10" width="11" height="12" rx="1"/>
  </g>
  <rect x="134" y="8" width="5" height="3" rx="0.5" fill="#616161"/>
  <path d="M163 10.5v9l7-4.5z" fill="#616161"/>
  <rect x="193" y="11" width="8" height="8" fill="#616161"/>
  <path d="M231.5 12.3a5 5 0 1 0 0.8 4.8" fill="none" stroke="#616161" stroke-width="1.5"/>
  <path d="M229.5 10.5l4 0.3l-0.7 3.8z" fill="#616161"/>
  <path d="M250 11v8l6-4z M256 11v8l6-4z" fill="#616161"/>
  <path d="M366 12.5l4.5 4.5l4.5-4.5" fill="none" stroke="#616161" stroke-width="1.5"/>
</svg>
<div class="t" style="left:571px;top:14px;font-size:15px;color:#000"><svg class="cj" viewBox="0 -880 2000 1000" style="width:2.000em"><use href="#g4ee3" x="0"/><use href="#g7801" x="1000"/></svg></div>
<div class="t" style="left:958px;top:14px;font-size:15px;color:#212121"><svg class="cj" viewBox="0 -880 3000 1000" style="width:3.000em"><use href="#g7b14" x="0"/><use href="#g8bb0" x="1000"/><use href="#g672c" x="2000"/></svg></div>
<svg class="a" style="left:1007px;top:15px" width="15" height="14" viewBox="0 0 15 14"><path d="M6 1.5H1.5v11h11V8" fill="none" stroke="#616161" stroke-width="1.2"/><path d="M8.5 1H13.5v5M13.5 1L7 7.5" fill="none" stroke="#616161" stroke-width="1.2"/></svg>
<svg class="a" style="left:1035px;top:13.5px" width="18" height="17" viewBox="0 0 24 23"><path d="M20 8h-2.81c-.45-.78-1.07-1.45-1.82-1.96L17 4.41 15.59 3l-2.17 2.17C12.96 5.06 12.49 5 12 5c-.49 0-.96.06-1.41.17L8.41 3 7 4.41l1.62 1.63C7.88 6.55 7.26 7.22 6.81 8H4v2h2.09c-.05.33-.09.66-.09 1v1H4v2h2v1c0 .34.04.67.09 1H4v2h2.81c1.04 1.79 2.97 3 5.19 3s4.15-1.21 5.19-3H20v-2h-2.09c.05-.33.09-.66.09-1v-1h2v-2h-2v-1c0-.34-.04-.67-.09-1H20V8zm-6 8h-4v-2h4v2zm0-4h-4v-2h4v2z" fill="#616161"/></svg>
<div class="t" style="left:1069px;top:15px;font-size:16px;color:#2a2a2a">Python 3 (ipykernel)</div>
<div class="a" style="left:1220.8px;top:14.4px;width:14.4px;height:14.4px;border-radius:50%;background:#616161;box-shadow:inset 0 0 0 1px #8e8e8e"></div>

<!-- notebook scroll area -->
<div class="a" style="left:1226px;top:37px;width:16px;height:664px;background:#fafafa"></div>
<svg class="a" style="left:1226px;top:37px" width="16" height="664" viewBox="0 0 16 664">
  <path d="M4 15L8.5 8L13 15z" fill="#8a8a8a"/>
  <rect x="4" y="453.7" width="9" height="94.3" rx="4.5" fill="#8a8a8a"/>
  <path d="M4 649L8.5 656L13 649z" fill="#8a8a8a"/>
</svg>

<!-- code editor -->
<div class="a" style="left:375px;top:37px;width:837px;height:169px;background:#f5f5f5;border:1px solid #e0e0e0;border-top:none"></div>
<div class="a" style="left:376px;top:190px;width:835px;height:15px;background:#fbfbfb"></div>
<svg class="a" style="left:376px;top:190px" width="835" height="15" viewBox="0 0 835 15">
  <path d="M8 7.5L15 3v9z" fill="#8a8a8a"/>
  <rect x="23" y="3" width="486" height="9" rx="4.5" fill="#8a8a8a"/>
  <path d="M827 7.5L820 3v9z" fill="#8a8a8a"/>
</svg>
<div class="code" style="top:53.7px"><span class="cm"># <svg class="cj" viewBox="0 -880 4000 1000" style="width:4.000em"><g transform="skewX(-12)"><use href="#g663e" x="0"/><use href="#g793a" x="1000"/><use href="#g56fe" x="2000"/><use href="#g5f62" x="3000"/></g></svg></span></div>
<div class="code" style="top:80.1px">display.<span class="pr">display</span>(plt.<span class="pr">gcf</span>())</div>
<div class="code" style="top:106.6px"><span class="cm"># <svg class="cj" viewBox="0 -880 2000 1000" style="width:2.000em"><g transform="skewX(-12)"><use href="#g6e05" x="0"/><use href="#g7a7a" x="1000"/></g></svg>Jupyter<svg class="cj" viewBox="0 -880 2000 1000" style="width:2.000em"><g transform="skewX(-12)"><use href="#g8f93" x="0"/><use href="#g51fa" x="1000"/></g></svg></span></div>
<div class="code" style="top:133px">display.<span class="pr">clear_output</span>(wait<span class="op">=</span><span class="kw">True</span>)</div>

<!-- figure -->
<div class="a" style="left:375px;top:206px;width:837px;height:444px;overflow:hidden;background:#fff">
<div class="a fig" style="left:0;top:0;transform:translate(-82.6px,-27.25px);width:987.84px;height:493.92px"><svg width="987.84" height="493.92" viewBox="0 0 864 432"><defs></defs><g><g><path d="M0 432L864 432L864 0L0 0z" style="fill: #ffffff"/></g><g><g><path d="M108 203L412.4 203L412.4 51.8L108 51.8z" style="fill: #ffffff"/></g><g><defs><path id="md227ce05fe" d="M0 3C0.8 3 1.6 2.7 2.1 2.1C2.7 1.6 3 0.8 3 0C3 -0.8 2.7 -1.6 2.1 -2.1C1.6 -2.7 0.8 -3 0 -3C-0.8 -3 -1.6 -2.7 -2.1 -2.1C-2.7 -1.6 -3 -0.8 -3 0C-3 0.8 -2.7 1.6 -2.1 2.1C-1.6 2.7 -0.8 3 0 3z" style="stroke: #3975b4"/></defs><g clip-path="url(#p1d80104ca5)"><use href="#md227ce05fe" x="121.8" y="196.2" style="fill: #3975b4; stroke: #3975b4"/><use href="#md227ce05fe" x="152.6" y="165.1" style="fill: #3975b4; stroke: #3975b4"/><use href="#md227ce05fe" x="152.6" y="184.7" style="fill: #3975b4; stroke: #3975b4"/><use href="#md227ce05fe" x="221.8" y="142.8" style="fill: #3975b4; stroke: #3975b4"/><use href="#md227ce05fe" x="290.9" y="113.7" style="fill: #3975b4; stroke: #3975b4"/><use href="#md227ce05fe" x="290.9" y="118.3" style="fill: #3975b4; stroke: #3975b4"/><use href="#md227ce05fe" x="321.7" y="92.3" style="fill: #3975b4; stroke: #3975b4"/><use href="#md227ce05fe" x="329.4" y="95.9" style="fill: #3975b4; stroke: #3975b4"/><use href="#md227ce05fe" x="375.5" y="79.7" style="fill: #3975b4; stroke: #3975b4"/><use href="#md227ce05fe" x="398.5" y="58.7" style="fill: #3975b4; stroke: #3975b4"/></g></g><g><g><g><defs><path id="maeb5e95414" d="M0 0L0 3.5" style="stroke: #000000; stroke-width: 0.72"/></defs><g><use href="#maeb5e95414" x="144.9" y="203" style="stroke: #000000; stroke-width: 0.72"/></g></g><g><!-- −1.5 --><g transform="translate(132.751156 217.638437) scale(0.1 -0.1)"><defs><path id="DejaVuSans-2212" d="M678 2272L4684 2272L4684 1741L678 1741L678 2272z" transform="scale(0.015625)"/><path id="DejaVuSans-31" d="M794 531L1825 531L1825 4091L703 3866L703 4441L1819 4666L2450 4666L2450 531L3481 531L3481 0L794 0L794 531z" transform="scale(0.015625)"/><path id="DejaVuSans-2e" d="M684 794L1344 794L1344 0L684 0L684 794z" transform="scale(0.015625)"/><path id="DejaVuSans-35" d="M691 4666L3169 4666L3169 4134L1269 4134L1269 2991Q1406 3038 1543 3061Q1681 3084 1819 3084Q2600 3084 3056 2656Q3513 2228 3513 1497Q3513 744 3044 326Q2575 -91 1722 -91Q1428 -91 1123 -41Q819 9 494 109L494 744Q775 591 1075 516Q1375 441 1709 441Q2250 441 2565 725Q2881 1009 2881 1497Q2881 1984 2565 2268Q2250 2553 1709 2553Q1456 2553 1204 2497Q953 2441 691 2322L691 4666z" transform="scale(0.015625)"/></defs><use href="#DejaVuSans-2212"/><use href="#DejaVuSans-31" transform="translate(83.789062 0)"/><use href="#DejaVuSans-2e" transform="translate(147.412109 0)"/><use href="#DejaVuSans-35" transform="translate(179.199219 0)"/></g></g></g><g><g><g><use href="#maeb5e95414" x="183.3" y="203" style="stroke: #000000; stroke-width: 0.72"/></g></g><g><!-- −1.0 --><g transform="translate(171.180908 217.638437) scale(0.1 -0.1)"><defs><path id="DejaVuSans-30" d="M2034 4250Q1547 4250 1301 3770Q1056 3291 1056 2328Q1056 1369 1301 889Q1547 409 2034 409Q2525 409 2770 889Q3016 1369 3016 2328Q3016 3291 2770 3770Q2525 4250 2034 4250zM2034 4750Q2819 4750 3233 4129Q3647 3509 3647 2328Q3647 1150 3233 529Q2819 -91 2034 -91Q1250 -91 836 529Q422 1150 422 2328Q422 3509 836 4129Q1250 4750 2034 4750z" transform="scale(0.015625)"/></defs><use href="#DejaVuSans-2212"/><use href="#DejaVuSans-31" transform="translate(83.789062 0)"/><use href="#DejaVuSans-2e" transform="translate(147.412109 0)"/><use href="#DejaVuSans-30" transform="translate(179.199219 0)"/></g></g></g><g><g><g><use href="#maeb5e95414" x="221.8" y="203" style="stroke: #000000; stroke-width: 0.72"/></g></g><g><!-- −0.5 --><g transform="translate(209.61066 217.638437) scale(0.1 -0.1)"><use href="#DejaVuSans-2212"/><use href="#DejaVuSans-30" transform="translate(83.789062 0)"/><use href="#DejaVuSans-2e" transform="translate(147.412109 0)"/><use href="#DejaVuSans-35" transform="translate(179.199219 0)"/></g></g></g><g><g><g><use href="#maeb5e95414" x="260.2" y="203" style="stroke: #000000; stroke-width: 0.72"/></g></g><g><!-- 0.0 --><g transform="translate(252.230256 217.638437) scale(0.1 -0.1)"><use href="#DejaVuSans-30"/><use href="#DejaVuSans-2e" transform="translate(63.623047 0)"/><use href="#DejaVuSans-30" transform="translate(95.410156 0)"/></g></g></g><g><g><g><use href="#maeb5e95414" x="298.6" y="203" style="stroke: #000000; stroke-width: 0.72"/></g></g><g><!-- 0.5 --><g transform="translate(290.660008 217.638437) scale(0.1 -0.1)"><use href="#DejaVuSans-30"/><use href="#DejaVuSans-2e" transform="translate(63.623047 0)"/><use href="#DejaVuSans-35" transform="translate(95.410156 0)"/></g></g></g><g><g><g><use href="#maeb5e95414" x="337" y="203" style="stroke: #000000; stroke-width: 0.72"/></g></g><g><!-- 1.0 --><g transform="translate(329.08976 217.638437) scale(0.1 -0.1)"><use href="#DejaVuSans-31"/><use href="#DejaVuSans-2e" transform="translate(63.623047 0)"/><use href="#DejaVuSans-30" transform="translate(95.410156 0)"/></g></g></g><g><g><g><use href="#maeb5e95414" x="375.5" y="203" style="stroke: #000000; stroke-width: 0.72"/></g></g><g><!-- 1.5 --><g transform="translate(367.519512 217.638437) scale(0.1 -0.1)"><use href="#DejaVuSans-31"/><use href="#DejaVuSans-2e" transform="translate(63.623047 0)"/><use href="#DejaVuSans-35" transform="translate(95.410156 0)"/></g></g></g></g><g><g><g><defs><path id="m084f3fd2f2" d="M0 0L-3.5 0" style="stroke: #000000; stroke-width: 0.72"/></defs><g><use href="#m084f3fd2f2" x="108" y="196.5" style="stroke: #000000; stroke-width: 0.72"/></g></g><g><!-- −50 --><g transform="translate(79.895313 200.33799) scale(0.1 -0.1)"><use href="#DejaVuSans-2212"/><use href="#DejaVuSans-35" transform="translate(83.789062 0)"/><use href="#DejaVuSans-30" transform="translate(147.412109 0)"/></g></g></g><g><g><g><use href="#m084f3fd2f2" x="108" y="173.3" style="stroke: #000000; stroke-width: 0.72"/></g></g><g><!-- −25 --><g transform="translate(79.895313 177.119317) scale(0.1 -0.1)"><defs><path id="DejaVuSans-32" d="M1228 531L3431 531L3431 0L469 0L469 531Q828 903 1448 1529Q2069 2156 2228 2338Q2531 2678 2651 2914Q2772 3150 2772 3378Q2772 3750 2511 3984Q2250 4219 1831 4219Q1534 4219 1204 4116Q875 4013 500 3803L500 4441Q881 4594 1212 4672Q1544 4750 1819 4750Q2544 4750 2975 4387Q3406 4025 3406 3419Q3406 3131 3298 2873Q3191 2616 2906 2266Q2828 2175 2409 1742Q1991 1309 1228 531z" transform="scale(0.015625)"/></defs><use href="#DejaVuSans-2212"/><use href="#DejaVuSans-32" transform="translate(83.789062 0)"/><use href="#DejaVuSans-35" transform="translate(147.412109 0)"/></g></g></g><g><g><g><use href="#m084f3fd2f2" x="108" y="150.1" style="stroke: #000000; stroke-width: 0.72"/></g></g><g><!-- 0 --><g transform="translate(94.6375 153.900644) scale(0.1 -0.1)"><use href="#DejaVuSans-30"/></g></g></g><g><g><g><use href="#m084f3fd2f2" x="108" y="126.9" style="stroke: #000000; stroke-width: 0.72"/></g></g><g><!-- 25 --><g transform="translate(88.275 130.681971) scale(0.1 -0.1)"><use href="#DejaVuSans-32"/><use href="#DejaVuSans-35" transform="translate(63.623047 0)"/></g></g></g><g><g><g><use href="#m084f3fd2f2" x="108" y="103.7" style="stroke: #000000; stroke-width: 0.72"/></g></g><g><!-- 50 --><g transform="translate(88.275 107.463297) scale(0.1 -0.1)"><use href="#DejaVuSans-35"/><use href="#DejaVuSans-30" transform="translate(63.623047 0)"/></g></g></g><g><g><g><use href="#m084f3fd2f2" x="108" y="80.4" style="stroke: #000000; stroke-width: 0.72"/></g></g><g><!-- 75 --><g transform="translate(88.275 84.244624) scale(0.1 -0.1)"><defs><path id="DejaVuSans-37" d="M525 4666L3525 4666L3525 4397L1831 0L1172 0L2766 4134L525 4134L525 4666z" transform="scale(0.015625)"/></defs><use href="#DejaVuSans-37"/><use href="#DejaVuSans-35" transform="translate(63.623047 0)"/></g></g></g><g><g><g><use href="#m084f3fd2f2" x="108" y="57.2" style="stroke: #000000; stroke-width: 0.72"/></g></g><g><!-- 100 --><g transform="translate(81.9125 61.025951) scale(0.1 -0.1)"><use href="#DejaVuSans-31"/><use href="#DejaVuSans-30" transform="translate(63.623047 0)"/><use href="#DejaVuSans-30" transform="translate(127.246094 0)"/></g></g></g></g><g><path d="M121.8 191.6L152.6 177.8L152.6 177.8L221.8 146.8L290.9 115.7L290.9 115.7L321.7 101.9L329.4 98.5L375.5 77.8L398.5 67.4" clip-path="url(#p1d80104ca5)" style="fill: none; stroke: #3975b4; stroke-width: 1.5; stroke-linecap: square"/></g><g><path d="M108 203L108 51.8" style="fill: none; stroke: #000000; stroke-width: 0.72; stroke-linejoin: miter; stroke-linecap: square"/></g><g><path d="M412.4 203L412.4 51.8" style="fill: none; stroke: #000000; stroke-width: 0.72; stroke-linejoin: miter; stroke-linecap: square"/></g><g><path d="M108 203L412.4 203" style="fill: none; stroke: #000000; stroke-width: 0.72; stroke-linejoin: miter; stroke-linecap: square"/></g><g><path d="M108 51.8L412.4 51.8" style="fill: none; stroke: #000000; stroke-width: 0.72; stroke-linejoin: miter; stroke-linecap: square"/></g><g><!-- Linear Regression: w=37.185, b=22.329 --><g transform="translate(138.309631 45.84) scale(0.12 -0.12)"><defs><path id="DejaVuSans-4c" d="M628 4666L1259 4666L1259 531L3531 531L3531 0L628 0L628 4666z" transform="scale(0.015625)"/><path id="DejaVuSans-69" d="M603 3500L1178 3500L1178 0L603 0L603 3500zM603 4863L1178 4863L1178 4134L603 4134L603 4863z" transform="scale(0.015625)"/><path id="DejaVuSans-6e" d="M3513 2113L3513 0L2938 0L2938 2094Q2938 2591 2744 2837Q2550 3084 2163 3084Q1697 3084 1428 2787Q1159 2491 1159 1978L1159 0L581 0L581 3500L1159 3500L1159 2956Q1366 3272 1645 3428Q1925 3584 2291 3584Q2894 3584 3203 3211Q3513 2838 3513 2113z" transform="scale(0.015625)"/><path id="DejaVuSans-65" d="M3597 1894L3597 1613L953 1613Q991 1019 1311 708Q1631 397 2203 397Q2534 397 2845 478Q3156 559 3463 722L3463 178Q3153 47 2828 -22Q2503 -91 2169 -91Q1331 -91 842 396Q353 884 353 1716Q353 2575 817 3079Q1281 3584 2069 3584Q2775 3584 3186 3129Q3597 2675 3597 1894zM3022 2063Q3016 2534 2758 2815Q2500 3097 2075 3097Q1594 3097 1305 2825Q1016 2553 972 2059L3022 2063z" transform="scale(0.015625)"/><path id="DejaVuSans-61" d="M2194 1759Q1497 1759 1228 1600Q959 1441 959 1056Q959 750 1161 570Q1363 391 1709 391Q2188 391 2477 730Q2766 1069 2766 1631L2766 1759L2194 1759zM3341 1997L3341 0L2766 0L2766 531Q2569 213 2275 61Q1981 -91 1556 -91Q1019 -91 701 211Q384 513 384 1019Q384 1609 779 1909Q1175 2209 1959 2209L2766 2209L2766 2266Q2766 2663 2505 2880Q2244 3097 1772 3097Q1472 3097 1187 3025Q903 2953 641 2809L641 3341Q956 3463 1253 3523Q1550 3584 1831 3584Q2591 3584 2966 3190Q3341 2797 3341 1997z" transform="scale(0.015625)"/><path id="DejaVuSans-72" d="M2631 2963Q2534 3019 2420 3045Q2306 3072 2169 3072Q1681 3072 1420 2755Q1159 2438 1159 1844L1159 0L581 0L581 3500L1159 3500L1159 2956Q1341 3275 1631 3429Q1922 3584 2338 3584Q2397 3584 2469 3576Q2541 3569 2628 3553L2631 2963z" transform="scale(0.015625)"/><path id="DejaVuSans-20" transform="scale(0.015625)"/><path id="DejaVuSans-52" d="M2841 2188Q3044 2119 3236 1894Q3428 1669 3622 1275L4263 0L3584 0L2988 1197Q2756 1666 2539 1819Q2322 1972 1947 1972L1259 1972L1259 0L628 0L628 4666L2053 4666Q2853 4666 3247 4331Q3641 3997 3641 3322Q3641 2881 3436 2590Q3231 2300 2841 2188zM1259 4147L1259 2491L2053 2491Q2509 2491 2742 2702Q2975 2913 2975 3322Q2975 3731 2742 3939Q2509 4147 2053 4147L1259 4147z" transform="scale(0.015625)"/><path id="DejaVuSans-67" d="M2906 1791Q2906 2416 2648 2759Q2391 3103 1925 3103Q1463 3103 1205 2759Q947 2416 947 1791Q947 1169 1205 825Q1463 481 1925 481Q2391 481 2648 825Q2906 1169 2906 1791zM3481 434Q3481 -459 3084 -895Q2688 -1331 1869 -1331Q1566 -1331 1297 -1286Q1028 -1241 775 -1147L775 -588Q1028 -725 1275 -790Q1522 -856 1778 -856Q2344 -856 2625 -561Q2906 -266 2906 331L2906 616Q2728 306 2450 153Q2172 0 1784 0Q1141 0 747 490Q353 981 353 1791Q353 2603 747 3093Q1141 3584 1784 3584Q2172 3584 2450 3431Q2728 3278 2906 2969L2906 3500L3481 3500L3481 434z" transform="scale(0.015625)"/><path id="DejaVuSans-73" d="M2834 3397L2834 2853Q2591 2978 2328 3040Q2066 3103 1784 3103Q1356 3103 1142 2972Q928 2841 928 2578Q928 2378 1081 2264Q1234 2150 1697 2047L1894 2003Q2506 1872 2764 1633Q3022 1394 3022 966Q3022 478 2636 193Q2250 -91 1575 -91Q1294 -91 989 -36Q684 19 347 128L347 722Q666 556 975 473Q1284 391 1588 391Q1994 391 2212 530Q2431 669 2431 922Q2431 1156 2273 1281Q2116 1406 1581 1522L1381 1569Q847 1681 609 1914Q372 2147 372 2553Q372 3047 722 3315Q1072 3584 1716 3584Q2034 3584 2315 3537Q2597 3491 2834 3397z" transform="scale(0.015625)"/><path id="DejaVuSans-6f" d="M1959 3097Q1497 3097 1228 2736Q959 2375 959 1747Q959 1119 1226 758Q1494 397 1959 397Q2419 397 2687 759Q2956 1122 2956 1747Q2956 2369 2687 2733Q2419 3097 1959 3097zM1959 3584Q2709 3584 3137 3096Q3566 2609 3566 1747Q3566 888 3137 398Q2709 -91 1959 -91Q1206 -91 779 398Q353 888 353 1747Q353 2609 779 3096Q1206 3584 1959 3584z" transform="scale(0.015625)"/><path id="DejaVuSans-3a" d="M750 794L1409 794L1409 0L750 0L750 794zM750 3309L1409 3309L1409 2516L750 2516L750 3309z" transform="scale(0.015625)"/><path id="DejaVuSans-77" d="M269 3500L844 3500L1563 769L2278 3500L2956 3500L3675 769L4391 3500L4966 3500L4050 0L3372 0L2619 2869L1863 0L1184 0L269 3500z" transform="scale(0.015625)"/><path id="DejaVuSans-3d" d="M678 2906L4684 2906L4684 2381L678 2381L678 2906zM678 1631L4684 1631L4684 1100L678 1100L678 1631z" transform="scale(0.015625)"/><path id="DejaVuSans-33" d="M2597 2516Q3050 2419 3304 2112Q3559 1806 3559 1356Q3559 666 3084 287Q2609 -91 1734 -91Q1441 -91 1130 -33Q819 25 488 141L488 750Q750 597 1062 519Q1375 441 1716 441Q2309 441 2620 675Q2931 909 2931 1356Q2931 1769 2642 2001Q2353 2234 1838 2234L1294 2234L1294 2753L1863 2753Q2328 2753 2575 2939Q2822 3125 2822 3475Q2822 3834 2567 4026Q2313 4219 1838 4219Q1578 4219 1281 4162Q984 4106 628 3988L628 4550Q988 4650 1302 4700Q1616 4750 1894 4750Q2613 4750 3031 4423Q3450 4097 3450 3541Q3450 3153 3228 2886Q3006 2619 2597 2516z" transform="scale(0.015625)"/><path id="DejaVuSans-38" d="M2034 2216Q1584 2216 1326 1975Q1069 1734 1069 1313Q1069 891 1326 650Q1584 409 2034 409Q2484 409 2743 651Q3003 894 3003 1313Q3003 1734 2745 1975Q2488 2216 2034 2216zM1403 2484Q997 2584 770 2862Q544 3141 544 3541Q544 4100 942 4425Q1341 4750 2034 4750Q2731 4750 3128 4425Q3525 4100 3525 3541Q3525 3141 3298 2862Q3072 2584 2669 2484Q3125 2378 3379 2068Q3634 1759 3634 1313Q3634 634 3220 271Q2806 -91 2034 -91Q1263 -91 848 271Q434 634 434 1313Q434 1759 690 2068Q947 2378 1403 2484zM1172 3481Q1172 3119 1398 2916Q1625 2713 2034 2713Q2441 2713 2670 2916Q2900 3119 2900 3481Q2900 3844 2670 4047Q2441 4250 2034 4250Q1625 4250 1398 4047Q1172 3844 1172 3481z" transform="scale(0.015625)"/><path id="DejaVuSans-2c" d="M750 794L1409 794L1409 256L897 -744L494 -744L750 256L750 794z" transform="scale(0.015625)"/><path id="DejaVuSans-62" d="M3116 1747Q3116 2381 2855 2742Q2594 3103 2138 3103Q1681 3103 1420 2742Q1159 2381 1159 1747Q1159 1113 1420 752Q1681 391 2138 391Q2594 391 2855 752Q3116 1113 3116 1747zM1159 2969Q1341 3281 1617 3432Q1894 3584 2278 3584Q2916 3584 3314 3078Q3713 2572 3713 1747Q3713 922 3314 415Q2916 -91 2278 -91Q1894 -91 1617 61Q1341 213 1159 525L1159 0L581 0L581 4863L1159 4863L1159 2969z" transform="scale(0.015625)"/><path id="DejaVuSans-39" d="M703 97L703 672Q941 559 1184 500Q1428 441 1663 441Q2288 441 2617 861Q2947 1281 2994 2138Q2813 1869 2534 1725Q2256 1581 1919 1581Q1219 1581 811 2004Q403 2428 403 3163Q403 3881 828 4315Q1253 4750 1959 4750Q2769 4750 3195 4129Q3622 3509 3622 2328Q3622 1225 3098 567Q2575 -91 1691 -91Q1453 -91 1209 -44Q966 3 703 97zM1959 2075Q2384 2075 2632 2365Q2881 2656 2881 3163Q2881 3666 2632 3958Q2384 4250 1959 4250Q1534 4250 1286 3958Q1038 3666 1038 3163Q1038 2656 1286 2365Q1534 2075 1959 2075z" transform="scale(0.015625)"/></defs><use href="#DejaVuSans-4c"/><use href="#DejaVuSans-69" transform="translate(55.712891 0)"/><use href="#DejaVuSans-6e" transform="translate(83.496094 0)"/><use href="#DejaVuSans-65" transform="translate(146.875 0)"/><use href="#DejaVuSans-61" transform="translate(208.398438 0)"/><use href="#DejaVuSans-72" transform="translate(269.677734 0)"/><use href="#DejaVuSans-20" transform="translate(310.791016 0)"/><use href="#DejaVuSans-52" transform="translate(342.578125 0)"/><use href="#DejaVuSans-65" transform="translate(407.560547 0)"/><use href="#DejaVuSans-67" transform="translate(469.083984 0)"/><use href="#DejaVuSans-72" transform="translate(532.560547 0)"/><use href="#DejaVuSans-65" transform="translate(571.423828 0)"/><use href="#DejaVuSans-73" transform="translate(632.947266 0)"/><use href="#DejaVuSans-73" transform="translate(685.046875 0)"/><use href="#DejaVuSans-69" transform="translate(737.146484 0)"/><use href="#DejaVuSans-6f" transform="translate(764.929688 0)"/><use href="#DejaVuSans-6e" transform="translate(826.111328 0)"/><use href="#DejaVuSans-3a" transform="translate(889.490234 0)"/><use href="#DejaVuSans-20" transform="translate(923.181641 0)"/><use href="#DejaVuSans-77" transform="translate(954.96875 0)"/><use href="#DejaVuSans-3d" transform="translate(1036.755859 0)"/><use href="#DejaVuSans-33" transform="translate(1120.544922 0)"/><use href="#DejaVuSans-37" transform="translate(1184.167969 0)"/><use href="#DejaVuSans-2e" transform="translate(1247.791016 0)"/><use href="#DejaVuSans-31" transform="translate(1279.578125 0)"/><use href="#DejaVuSans-38" transform="translate(1343.201172 0)"/><use href="#DejaVuSans-35" transform="translate(1406.824219 0)"/><use href="#DejaVuSans-2c" transform="translate(1470.447266 0)"/><use href="#DejaVuSans-20" transform="translate(1502.234375 0)"/><use href="#DejaVuSans-62" transform="translate(1534.021484 0)"/><use href="#DejaVuSans-3d" transform="translate(1597.498047 0)"/><use href="#DejaVuSans-32" transform="translate(1681.287109 0)"/><use href="#DejaVuSans-32" transform="translate(1744.910156 0)"/><use href="#DejaVuSans-2e" transform="translate(1808.533203 0)"/><use href="#DejaVuSans-33" transform="translate(1840.320312 0)"/><use href="#DejaVuSans-32" transform="translate(1903.943359 0)"/><use href="#DejaVuSans-39" transform="translate(1967.566406 0)"/></g></g></g><g><g><path d="M108 384.5L412.4 384.5L412.4 233.3L108 233.3z" style="fill: #ffffff"/></g><g><path d="M277.1 344.8L280.2 345.2L283.2 345.5L286.3 345.7L289.4 345.7L292.5 345.6L295.5 345.4L298.6 345.1L301 344.8L301.7 344.7L304.8 344L307.8 343.3L308 343.2L310.9 342.4L312.8 341.7L314 341.3L316.5 340.2L317.1 339.9L319.5 338.7L320.1 338.3L322 337.1L323.2 336.4L324.2 335.6L326.1 334.1L326.3 333.9L327.7 332.6L329.1 331L329.4 330.7L330.2 329.5L331.2 328L332 326.4L332.4 325.6L332.7 324.9L333.2 323.4L333.6 321.9L333.8 320.3L333.8 318.8L333.8 317.3L333.6 315.8L333.3 314.2L332.8 312.7L332.4 311.7L332.2 311.2L331.5 309.6L330.6 308.1L329.5 306.6L329.4 306.4L328.3 305.1L326.9 303.5L326.3 302.9L325.3 302L323.5 300.5L323.2 300.3L321.4 299L320.1 298.1L319 297.4L317.1 296.3L316.3 295.9L314 294.7L313.2 294.4L310.9 293.4L309.4 292.8L307.8 292.3L304.9 291.3L304.8 291.3L301.7 290.5L298.6 289.8L298.6 289.8L295.5 289.3L292.5 288.9L289.4 288.6L286.3 288.4L283.2 288.3L280.2 288.4L277.1 288.6L274 288.9L270.9 289.4L268.6 289.8L267.9 289.9L264.8 290.7L262.6 291.3L261.7 291.6L258.6 292.7L258.2 292.8L255.6 294L254.8 294.4L252.5 295.6L251.9 295.9L249.5 297.4L249.4 297.5L247.5 299L246.3 299.9L245.7 300.5L244.2 302L243.3 303L242.9 303.5L241.8 305.1L240.8 306.6L240.2 307.8L240.1 308.1L239.5 309.6L239 311.2L238.7 312.7L238.5 314.2L238.5 315.8L238.6 317.3L238.8 318.8L239.2 320.3L239.7 321.9L240.2 323L240.4 323.4L241.2 324.9L242.1 326.4L243.2 328L243.3 328.1L244.5 329.5L246 331L246.3 331.4L247.6 332.6L249.4 334L249.5 334.1L251.7 335.6L252.5 336.1L254.2 337.1L255.6 337.9L257 338.7L258.6 339.5L260.3 340.2L261.7 340.8L264.3 341.7L264.8 341.9L267.9 342.8L269.4 343.2L270.9 343.6L274 344.3L276.7 344.8z" clip-path="url(#p754749531e)" style="fill: #48005d; stroke: #48005d; stroke-width: 1"/><path d="M283.2 358.5L286.3 358.7L289.4 358.7L292.5 358.7L295.5 358.6L297.4 358.5L298.6 358.4L301.7 358.2L304.8 357.8L307.8 357.3L309.9 357L310.9 356.8L314 356.1L316.8 355.5L317.1 355.4L320.1 354.5L322 353.9L323.2 353.5L326.3 352.4L326.3 352.4L329.4 351.1L329.9 350.9L332.4 349.7L333 349.4L335.5 348L335.8 347.8L338.3 346.3L338.6 346.1L340.5 344.8L341.7 343.9L342.5 343.2L344.3 341.7L344.7 341.4L346 340.2L347.4 338.7L347.8 338.3L348.8 337.1L349.9 335.6L350.9 334.3L351 334.1L351.9 332.6L352.7 331L353.4 329.5L354 328.2L354 328L354.5 326.4L354.9 324.9L355.2 323.4L355.4 321.9L355.5 320.3L355.5 318.8L355.4 317.3L355.2 315.8L355 314.2L354.6 312.7L354.2 311.2L354 310.6L353.6 309.6L352.9 308.1L352.2 306.6L351.3 305.1L350.9 304.3L350.4 303.5L349.3 302L348.1 300.5L347.8 300.1L346.8 299L345.4 297.4L344.7 296.8L343.8 295.9L342.1 294.4L341.7 294L340.3 292.8L338.6 291.6L338.2 291.3L336 289.8L335.5 289.5L333.5 288.3L332.4 287.6L330.9 286.7L329.4 285.9L327.9 285.2L326.3 284.4L324.6 283.7L323.2 283.1L320.8 282.2L320.1 281.9L317.1 280.8L316.5 280.6L314 279.8L311.4 279.1L310.9 279L307.8 278.2L304.9 277.6L304.8 277.5L301.7 277L298.6 276.5L295.5 276.1L295.2 276L292.5 275.8L289.4 275.5L286.3 275.4L283.2 275.3L280.2 275.3L277.1 275.4L274 275.6L270.9 275.9L269.3 276L267.9 276.2L264.8 276.7L261.7 277.2L259.9 277.6L258.6 277.8L255.6 278.6L253.7 279.1L252.5 279.4L249.4 280.4L248.8 280.6L246.3 281.5L244.8 282.2L243.3 282.8L241.4 283.7L240.2 284.2L238.3 285.2L237.1 285.9L235.7 286.7L234 287.7L233.3 288.3L231.1 289.8L231 289.9L229.2 291.3L227.9 292.4L227.4 292.8L225.9 294.4L224.8 295.5L224.4 295.9L223.2 297.4L222 299L221.8 299.4L221 300.5L220.2 302L219.4 303.5L218.7 305.1L218.7 305.1L218.1 306.6L217.7 308.1L217.3 309.6L217.1 311.2L216.9 312.7L216.8 314.2L216.9 315.8L217 317.3L217.2 318.8L217.5 320.3L217.9 321.9L218.4 323.4L218.7 324.2L218.9 324.9L219.6 326.4L220.4 328L221.3 329.5L221.8 330.2L222.3 331L223.4 332.6L224.6 334.1L224.8 334.3L226 335.6L227.4 337.1L227.9 337.6L229.1 338.7L230.8 340.2L231 340.3L232.7 341.7L234 342.7L234.8 343.2L237.1 344.8L237.1 344.8L239.7 346.3L240.2 346.6L242.4 347.8L243.3 348.3L245.5 349.4L246.3 349.7L249 350.9L249.4 351.1L252.5 352.3L252.9 352.4L255.6 353.3L257.4 353.9L258.6 354.3L261.7 355.2L262.9 355.5L264.8 355.9L267.9 356.6L270.1 357L270.9 357.1L274 357.6L277.1 358L280.2 358.3L282.8 358.5zM276.7 344.8L274 344.3L270.9 343.6L269.4 343.2L267.9 342.8L264.8 341.9L264.3 341.7L261.7 340.8L260.3 340.2L258.6 339.5L257 338.7L255.6 337.9L254.2 337.1L252.5 336.1L251.7 335.6L249.5 334.1L249.4 334L247.6 332.6L246.3 331.4L246 331L244.5 329.5L243.3 328.1L243.2 328L242.1 326.4L241.2 324.9L240.4 323.4L240.2 323L239.7 321.9L239.2 320.3L238.8 318.8L238.6 317.3L238.5 315.8L238.5 314.2L238.7 312.7L239 311.2L239.5 309.6L240.1 308.1L240.2 307.8L240.8 306.6L241.8 305.1L242.9 303.5L243.3 303L244.2 302L245.7 300.5L246.3 299.9L247.5 299L249.4 297.5L249.5 297.4L251.9 295.9L252.5 295.6L254.8 294.4L255.6 294L258.2 292.8L258.6 292.7L261.7 291.6L262.6 291.3L264.8 290.7L267.9 289.9L268.6 289.8L270.9 289.4L274 288.9L277.1 288.6L280.2 288.4L283.2 288.3L286.3 288.4L289.4 288.6L292.5 288.9L295.5 289.3L298.6 289.8L298.6 289.8L301.7 290.5L304.8 291.3L304.9 291.3L307.8 292.3L309.4 292.8L310.9 293.4L313.2 294.4L314 294.7L316.3 295.9L317.1 296.3L319 297.4L320.1 298.1L321.4 299L323.2 300.3L323.5 300.5L325.3 302L326.3 302.9L326.9 303.5L328.3 305.1L329.4 306.4L329.5 306.6L330.6 308.1L331.5 309.6L332.2 311.2L332.4 311.7L332.8 312.7L333.3 314.2L333.6 315.8L333.8 317.3L333.8 318.8L333.8 320.3L333.6 321.9L333.2 323.4L332.7 324.9L332.4 325.6L332 326.4L331.2 328L330.2 329.5L329.4 330.7L329.1 331L327.7 332.6L326.3 333.9L326.1 334.1L324.2 335.6L323.2 336.4L322 337.1L320.1 338.3L319.5 338.7L317.1 339.9L316.5 340.2L314 341.3L312.8 341.7L310.9 342.4L308 343.2L307.8 343.3L304.8 344L301.7 344.7L301 344.8L298.6 345.1L295.5 345.4L292.5 345.6L289.4 345.7L286.3 345.7L283.2 345.5L280.2 345.2L277.1 344.8z" clip-path="url(#p754749531e)" style="fill: #4b156e; stroke: #4b156e; stroke-width: 1"/><path d="M277.1 367.9L280.2 368.2L283.2 368.4L286.3 368.5L289.4 368.6L292.5 368.6L295.5 368.5L298.6 368.4L301.7 368.2L304.8 367.9L307 367.7L307.8 367.6L310.9 367.2L314 366.7L316.9 366.2L317.1 366.1L320.1 365.5L323.2 364.7L323.6 364.6L326.3 363.9L329 363.1L329.4 363L332.4 362L333.5 361.6L335.5 360.8L337.5 360L338.6 359.6L340.9 358.5L341.7 358.2L344.1 357L344.7 356.6L346.9 355.5L347.8 354.9L349.4 353.9L350.9 353L351.8 352.4L354 350.9L354 350.9L355.9 349.4L357 348.4L357.7 347.8L359.4 346.3L360.1 345.6L360.9 344.8L362.3 343.2L363.2 342.3L363.6 341.7L364.8 340.2L365.9 338.7L366.2 338.1L366.9 337.1L367.7 335.6L368.5 334.1L369.2 332.6L369.3 332.4L369.8 331L370.4 329.5L370.8 328L371.2 326.4L371.5 324.9L371.7 323.4L371.8 321.9L371.9 320.3L371.8 318.8L371.7 317.3L371.6 315.8L371.3 314.2L371 312.7L370.6 311.2L370.1 309.6L369.6 308.1L369.3 307.5L368.9 306.6L368.2 305.1L367.4 303.5L366.6 302L366.2 301.5L365.6 300.5L364.5 299L363.4 297.4L363.2 297.1L362.2 295.9L360.8 294.4L360.1 293.6L359.4 292.8L357.8 291.3L357 290.5L356.2 289.8L354.4 288.3L354 287.9L352.5 286.7L350.9 285.5L350.4 285.2L348.2 283.7L347.8 283.4L345.8 282.2L344.7 281.5L343.2 280.6L341.7 279.7L340.5 279.1L338.6 278.1L337.4 277.6L335.5 276.7L334.1 276L332.4 275.3L330.5 274.5L329.4 274.1L326.4 273L326.3 272.9L323.2 271.9L321.8 271.5L320.1 271L317.1 270.1L316.5 269.9L314 269.3L310.9 268.6L310 268.4L307.8 268L304.8 267.4L301.7 266.9L301.2 266.9L298.6 266.5L295.5 266.2L292.5 265.9L289.4 265.7L286.3 265.6L283.2 265.5L280.2 265.5L277.1 265.5L274 265.7L270.9 265.8L267.9 266.1L264.8 266.4L261.7 266.8L261.5 266.9L258.6 267.3L255.6 267.9L253 268.4L252.5 268.5L249.4 269.3L246.8 269.9L246.3 270.1L243.3 271L241.8 271.5L240.2 272L237.4 273L237.1 273.1L234 274.4L233.7 274.5L231 275.7L230.3 276L227.9 277.3L227.3 277.6L224.8 279L224.6 279.1L222.1 280.6L221.8 280.8L219.8 282.2L218.7 283L217.7 283.7L215.8 285.2L215.6 285.4L214 286.7L212.5 288.1L212.4 288.3L210.9 289.8L209.5 291.3L209.5 291.4L208.3 292.8L207.2 294.4L206.4 295.5L206.1 295.9L205.2 297.4L204.3 299L203.6 300.5L203.3 301L202.9 302L202.3 303.5L201.8 305.1L201.4 306.6L201.1 308.1L200.8 309.6L200.6 311.2L200.5 312.7L200.5 314.2L200.5 315.8L200.6 317.3L200.8 318.8L201.1 320.3L201.5 321.9L201.9 323.4L202.4 324.9L203 326.4L203.3 327.2L203.6 328L204.4 329.5L205.2 331L206.1 332.6L206.4 333L207.1 334.1L208.2 335.6L209.3 337.1L209.5 337.3L210.6 338.7L212 340.2L212.5 340.8L213.4 341.7L215 343.2L215.6 343.8L216.7 344.8L218.6 346.3L218.7 346.4L220.5 347.8L221.8 348.7L222.6 349.4L224.8 350.8L224.9 350.9L227.3 352.4L227.9 352.7L230 353.9L231 354.5L232.9 355.5L234 356.1L236 357L237.1 357.5L239.4 358.5L240.2 358.9L243.1 360L243.3 360.1L246.3 361.2L247.4 361.6L249.4 362.2L252.2 363.1L252.5 363.2L255.6 364L257.9 364.6L258.6 364.8L261.7 365.5L264.8 366.1L264.9 366.2L267.9 366.7L270.9 367.1L274 367.6L275.1 367.7zM282.8 358.5L280.2 358.3L277.1 358L274 357.6L270.9 357.1L270.1 357L267.9 356.6L264.8 355.9L262.9 355.5L261.7 355.2L258.6 354.3L257.4 353.9L255.6 353.3L252.9 352.4L252.5 352.3L249.4 351.1L249 350.9L246.3 349.7L245.5 349.4L243.3 348.3L242.4 347.8L240.2 346.6L239.7 346.3L237.1 344.8L237.1 344.8L234.8 343.2L234 342.7L232.7 341.7L231 340.3L230.8 340.2L229.1 338.7L227.9 337.6L227.4 337.1L226 335.6L224.8 334.3L224.6 334.1L223.4 332.6L222.3 331L221.8 330.2L221.3 329.5L220.4 328L219.6 326.4L218.9 324.9L218.7 324.2L218.4 323.4L217.9 321.9L217.5 320.3L217.2 318.8L217 317.3L216.9 315.8L216.8 314.2L216.9 312.7L217.1 311.2L217.3 309.6L217.7 308.1L218.1 306.6L218.7 305.1L218.7 305.1L219.4 303.5L220.2 302L221 300.5L221.8 299.4L222 299L223.2 297.4L224.4 295.9L224.8 295.5L225.9 294.4L227.4 292.8L227.9 292.4L229.2 291.3L231 289.9L231.1 289.8L233.3 288.3L234 287.7L235.7 286.7L237.1 285.9L238.3 285.2L240.2 284.2L241.4 283.7L243.3 282.8L244.8 282.2L246.3 281.5L248.8 280.6L249.4 280.4L252.5 279.4L253.7 279.1L255.6 278.6L258.6 277.8L259.9 277.6L261.7 277.2L264.8 276.7L267.9 276.2L269.3 276L270.9 275.9L274 275.6L277.1 275.4L280.2 275.3L283.2 275.3L286.3 275.4L289.4 275.5L292.5 275.8L295.2 276L295.5 276.1L298.6 276.5L301.7 277L304.8 277.5L304.9 277.6L307.8 278.2L310.9 279L311.4 279.1L314 279.8L316.5 280.6L317.1 280.8L320.1 281.9L320.8 282.2L323.2 283.1L324.6 283.7L326.3 284.4L327.9 285.2L329.4 285.9L330.9 286.7L332.4 287.6L333.5 288.3L335.5 289.5L336 289.8L338.2 291.3L338.6 291.6L340.3 292.8L341.7 294L342.1 294.4L343.8 295.9L344.7 296.8L345.4 297.4L346.8 299L347.8 300.1L348.1 300.5L349.3 302L350.4 303.5L350.9 304.3L351.3 305.1L352.2 306.6L352.9 308.1L353.6 309.6L354 310.6L354.2 311.2L354.6 312.7L355 314.2L355.2 315.8L355.4 317.3L355.5 318.8L355.5 320.3L355.4 321.9L355.2 323.4L354.9 324.9L354.5 326.4L354 328L354 328.2L353.4 329.5L352.7 331L351.9 332.6L351 334.1L350.9 334.3L349.9 335.6L348.8 337.1L347.8 338.3L347.4 338.7L346 340.2L344.7 341.4L344.3 341.7L342.5 343.2L341.7 343.9L340.5 344.8L338.6 346.1L338.3 346.3L335.8 347.8L335.5 348L333 349.4L332.4 349.7L329.9 350.9L329.4 351.1L326.3 352.4L326.3 352.4L323.2 353.5L322 353.9L320.1 354.5L317.1 355.4L316.8 355.5L314 356.1L310.9 356.8L309.9 357L307.8 357.3L304.8 357.8L301.7 358.2L298.6 358.4L297.4 358.5L295.5 358.6L292.5 358.7L289.4 358.7L286.3 358.7L283.2 358.5z" clip-path="url(#p754749531e)" style="fill: #4c287b; stroke: #4c287b; stroke-width: 1"/><path d="M270.9 375.5L274 375.9L277.1 376.2L280.2 376.4L283.2 376.6L286.3 376.7L289.4 376.8L292.5 376.8L295.5 376.8L298.6 376.7L301.7 376.5L304.8 376.3L307.8 376L310.9 375.7L313.9 375.3L314 375.3L317.1 374.8L320.1 374.3L322.8 373.8L323.2 373.7L326.3 373L329.4 372.3L329.5 372.3L332.4 371.5L335 370.7L335.5 370.6L338.6 369.6L339.6 369.2L341.7 368.5L343.8 367.7L344.7 367.3L347.5 366.2L347.8 366L350.8 364.6L350.9 364.6L353.9 363.1L354 363L356.6 361.6L357 361.4L359.2 360L360.1 359.5L361.6 358.5L363.2 357.4L363.8 357L365.9 355.5L366.2 355.2L367.8 353.9L369.3 352.6L369.6 352.4L371.2 350.9L372.4 349.7L372.7 349.4L374.2 347.8L375.5 346.3L375.5 346.3L376.7 344.8L377.9 343.2L378.5 342.3L378.9 341.7L379.9 340.2L380.7 338.7L381.5 337.1L381.6 337L382.3 335.6L382.9 334.1L383.5 332.6L384 331L384.4 329.5L384.7 328.3L384.8 328L385.1 326.4L385.3 324.9L385.4 323.4L385.5 321.9L385.6 320.3L385.5 318.8L385.4 317.3L385.2 315.8L385 314.2L384.7 312.7L384.7 312.6L384.4 311.2L383.9 309.6L383.4 308.1L382.9 306.6L382.2 305.1L381.6 303.7L381.5 303.5L380.8 302L379.9 300.5L379 299L378.5 298.2L378 297.4L377 295.9L375.8 294.4L375.5 293.9L374.6 292.8L373.3 291.3L372.4 290.3L371.9 289.8L370.4 288.3L369.3 287.2L368.8 286.7L367.1 285.2L366.2 284.5L365.3 283.7L363.4 282.2L363.2 282L361.4 280.6L360.1 279.7L359.2 279.1L357 277.6L356.9 277.6L354.5 276L354 275.7L351.9 274.5L350.9 274L349.1 273L347.8 272.3L346 271.5L344.7 270.8L342.8 269.9L341.7 269.4L339.3 268.4L338.6 268.1L335.5 266.9L335.4 266.9L332.4 265.8L331.1 265.4L329.4 264.8L326.4 263.8L326.3 263.8L323.2 262.9L320.9 262.3L320.1 262.1L317.1 261.4L314.4 260.8L314 260.7L310.9 260.1L307.8 259.5L306.1 259.2L304.8 259L301.7 258.6L298.6 258.2L295.5 257.9L293.1 257.7L292.5 257.7L289.4 257.5L286.3 257.3L283.2 257.3L280.2 257.2L277.1 257.3L274 257.4L270.9 257.5L267.9 257.7L267.8 257.7L264.8 258L261.7 258.3L258.6 258.7L255.6 259.2L255.1 259.2L252.5 259.7L249.4 260.3L247.1 260.8L246.3 260.9L243.3 261.7L240.9 262.3L240.2 262.5L237.1 263.4L235.8 263.8L234 264.4L231.3 265.4L231 265.5L227.9 266.6L227.3 266.9L224.8 267.9L223.7 268.4L221.8 269.3L220.5 269.9L218.7 270.9L217.5 271.5L215.6 272.5L214.8 273L212.5 274.4L212.3 274.5L210 276L209.5 276.4L207.8 277.6L206.4 278.7L205.8 279.1L204 280.6L203.3 281.2L202.2 282.2L200.6 283.7L200.2 284.1L199.1 285.2L197.7 286.7L197.2 287.4L196.4 288.3L195.2 289.8L194.1 291.3L194.1 291.4L193.1 292.8L192.2 294.4L191.3 295.9L191 296.5L190.6 297.4L189.9 299L189.2 300.5L188.7 302L188.2 303.5L187.9 304.6L187.8 305.1L187.5 306.6L187.2 308.1L187 309.6L186.9 311.2L186.8 312.7L186.8 314.2L186.9 315.8L187 317.3L187.2 318.8L187.4 320.3L187.7 321.9L187.9 322.6L188.1 323.4L188.6 324.9L189.1 326.4L189.7 328L190.3 329.5L191 330.9L191 331L191.9 332.6L192.7 334.1L193.6 335.6L194.1 336.3L194.7 337.1L195.8 338.7L196.9 340.2L197.2 340.5L198.2 341.7L199.5 343.2L200.2 344L200.9 344.8L202.5 346.3L203.3 347.1L204.1 347.8L205.8 349.4L206.4 349.8L207.6 350.9L209.5 352.3L209.6 352.4L211.7 353.9L212.5 354.6L213.9 355.5L215.6 356.6L216.2 357L218.7 358.5L218.7 358.5L221.4 360L221.8 360.2L224.3 361.6L224.8 361.9L227.3 363.1L227.9 363.4L230.7 364.6L231 364.8L234 366L234.3 366.2L237.1 367.2L238.3 367.7L240.2 368.4L242.7 369.2L243.3 369.4L246.3 370.3L247.7 370.7L249.4 371.2L252.5 372L253.5 372.3L255.6 372.8L258.6 373.4L260.4 373.8L261.7 374L264.8 374.6L267.9 375.1L269.7 375.3zM275.1 367.7L274 367.6L270.9 367.1L267.9 366.7L264.9 366.2L264.8 366.1L261.7 365.5L258.6 364.8L257.9 364.6L255.6 364L252.5 363.2L252.2 363.1L249.4 362.2L247.4 361.6L246.3 361.2L243.3 360.1L243.1 360L240.2 358.9L239.4 358.5L237.1 357.5L236 357L234 356.1L232.9 355.5L231 354.5L230 353.9L227.9 352.7L227.3 352.4L224.9 350.9L224.8 350.8L222.6 349.4L221.8 348.7L220.5 347.8L218.7 346.4L218.6 346.3L216.7 344.8L215.6 343.8L215 343.2L213.4 341.7L212.5 340.8L212 340.2L210.6 338.7L209.5 337.3L209.3 337.1L208.2 335.6L207.1 334.1L206.4 333L206.1 332.6L205.2 331L204.4 329.5L203.6 328L203.3 327.2L203 326.4L202.4 324.9L201.9 323.4L201.5 321.9L201.1 320.3L200.8 318.8L200.6 317.3L200.5 315.8L200.5 314.2L200.5 312.7L200.6 311.2L200.8 309.6L201.1 308.1L201.4 306.6L201.8 305.1L202.3 303.5L202.9 302L203.3 301L203.6 300.5L204.3 299L205.2 297.4L206.1 295.9L206.4 295.5L207.2 294.4L208.3 292.8L209.5 291.4L209.5 291.3L210.9 289.8L212.4 288.3L212.5 288.1L214 286.7L215.6 285.4L215.8 285.2L217.7 283.7L218.7 283L219.8 282.2L221.8 280.8L222.1 280.6L224.6 279.1L224.8 279L227.3 277.6L227.9 277.3L230.3 276L231 275.7L233.7 274.5L234 274.4L237.1 273.1L237.4 273L240.2 272L241.8 271.5L243.3 271L246.3 270.1L246.8 269.9L249.4 269.3L252.5 268.5L253 268.4L255.6 267.9L258.6 267.3L261.5 266.9L261.7 266.8L264.8 266.4L267.9 266.1L270.9 265.8L274 265.7L277.1 265.5L280.2 265.5L283.2 265.5L286.3 265.6L289.4 265.7L292.5 265.9L295.5 266.2L298.6 266.5L301.2 266.9L301.7 266.9L304.8 267.4L307.8 268L310 268.4L310.9 268.6L314 269.3L316.5 269.9L317.1 270.1L320.1 271L321.8 271.5L323.2 271.9L326.3 272.9L326.4 273L329.4 274.1L330.5 274.5L332.4 275.3L334.1 276L335.5 276.7L337.4 277.6L338.6 278.1L340.5 279.1L341.7 279.7L343.2 280.6L344.7 281.5L345.8 282.2L347.8 283.4L348.2 283.7L350.4 285.2L350.9 285.5L352.5 286.7L354 287.9L354.4 288.3L356.2 289.8L357 290.5L357.8 291.3L359.4 292.8L360.1 293.6L360.8 294.4L362.2 295.9L363.2 297.1L363.4 297.4L364.5 299L365.6 300.5L366.2 301.5L366.6 302L367.4 303.5L368.2 305.1L368.9 306.6L369.3 307.5L369.6 308.1L370.1 309.6L370.6 311.2L371 312.7L371.3 314.2L371.6 315.8L371.7 317.3L371.8 318.8L371.9 320.3L371.8 321.9L371.7 323.4L371.5 324.9L371.2 326.4L370.8 328L370.4 329.5L369.8 331L369.3 332.4L369.2 332.6L368.5 334.1L367.7 335.6L366.9 337.1L366.2 338.1L365.9 338.7L364.8 340.2L363.6 341.7L363.2 342.3L362.3 343.2L360.9 344.8L360.1 345.6L359.4 346.3L357.7 347.8L357 348.4L355.9 349.4L354 350.9L354 350.9L351.8 352.4L350.9 353L349.4 353.9L347.8 354.9L346.9 355.5L344.7 356.6L344.1 357L341.7 358.2L340.9 358.5L338.6 359.6L337.5 360L335.5 360.8L333.5 361.6L332.4 362L329.4 363L329 363.1L326.3 363.9L323.6 364.6L323.2 364.7L320.1 365.5L317.1 366.1L316.9 366.2L314 366.7L310.9 367.2L307.8 367.6L307 367.7L304.8 367.9L301.7 368.2L298.6 368.4L295.5 368.5L292.5 368.6L289.4 368.6L286.3 368.5L283.2 368.4L280.2 368.2L277.1 367.9z" clip-path="url(#p754749531e)" style="fill: #4a3784; stroke: #4a3784; stroke-width: 1"/><path d="M274 383.1L277.1 383.4L280.2 383.6L283.2 383.8L286.3 384L289.4 384L292.5 384.1L295.5 384L298.6 384L301.7 383.8L304.8 383.7L307.8 383.4L310.9 383.1L312.6 383L314 382.8L317.1 382.4L320.1 381.9L323.2 381.4L323.2 381.4L326.3 380.9L329.4 380.2L330.8 379.9L332.4 379.5L335.5 378.7L336.9 378.4L338.6 377.9L341.7 377L342.1 376.8L344.7 376L346.7 375.3L347.8 374.9L350.8 373.8L350.9 373.8L354 372.5L354.5 372.3L357 371.1L357.9 370.7L360.1 369.7L361 369.2L363.2 368.1L363.9 367.7L366.2 366.3L366.6 366.2L369.1 364.6L369.3 364.5L371.4 363.1L372.4 362.4L373.6 361.6L375.5 360.1L375.6 360L377.5 358.5L378.5 357.6L379.3 357L381 355.5L381.6 354.9L382.6 353.9L384 352.4L384.7 351.7L385.4 350.9L386.7 349.4L387.8 348L387.9 347.8L389 346.3L390.1 344.8L390.8 343.6L391.1 343.2L391.9 341.7L392.8 340.2L393.5 338.7L393.9 337.8L394.2 337.1L394.8 335.6L395.4 334.1L395.9 332.6L396.3 331L396.6 329.5L397 328L397 327.7L397.2 326.4L397.4 324.9L397.5 323.4L397.6 321.9L397.6 320.3L397.5 318.8L397.4 317.3L397.3 315.8L397 314.2L397 314L396.7 312.7L396.4 311.2L396 309.6L395.5 308.1L395 306.6L394.5 305.1L393.9 303.8L393.8 303.5L393.1 302L392.4 300.5L391.5 299L390.8 297.8L390.7 297.4L389.7 295.9L388.7 294.4L387.8 293.1L387.6 292.8L386.4 291.3L385.2 289.8L384.7 289.2L383.9 288.3L382.5 286.7L381.6 285.8L381 285.2L379.4 283.7L378.5 282.8L377.8 282.2L376.1 280.6L375.5 280.1L374.2 279.1L372.4 277.6L372.3 277.6L370.2 276L369.3 275.4L368.1 274.5L366.2 273.3L365.8 273L363.4 271.5L363.2 271.3L360.8 269.9L360.1 269.5L358.1 268.4L357 267.8L355.2 266.9L354 266.3L352 265.4L350.9 264.8L348.7 263.8L347.8 263.4L345.1 262.3L344.7 262.1L341.7 260.9L341.2 260.8L338.6 259.8L337 259.2L335.5 258.7L332.4 257.8L332.3 257.7L329.4 256.8L327 256.2L326.3 256L323.2 255.2L321 254.7L320.1 254.5L317.1 253.8L314 253.2L313.7 253.1L310.9 252.6L307.8 252.1L304.8 251.7L304.1 251.6L301.7 251.3L298.6 251L295.5 250.7L292.5 250.4L289.4 250.2L286.3 250.1L285.3 250.1L283.2 250L280.2 250L277.1 250L274 250.1L274 250.1L270.9 250.2L267.9 250.4L264.8 250.6L261.7 250.9L258.6 251.2L255.6 251.6L255.6 251.6L252.5 252.1L249.4 252.6L246.4 253.1L246.3 253.1L243.3 253.8L240.2 254.5L239.4 254.7L237.1 255.2L234 256.1L233.6 256.2L231 257L228.7 257.7L227.9 258L224.8 259L224.2 259.2L221.8 260.2L220.3 260.8L218.7 261.4L216.7 262.3L215.6 262.8L213.4 263.8L212.5 264.3L210.4 265.4L209.5 265.8L207.6 266.9L206.4 267.5L204.9 268.4L203.3 269.4L202.5 269.9L200.2 271.4L200.2 271.5L198.1 273L197.2 273.7L196.1 274.5L194.2 276L194.1 276.2L192.5 277.6L191 278.9L190.8 279.1L189.3 280.6L187.9 282L187.8 282.2L186.5 283.7L185.2 285.2L184.9 285.7L184 286.7L183 288.3L181.9 289.8L181.8 290L181 291.3L180.1 292.8L179.3 294.4L178.7 295.6L178.6 295.9L177.9 297.4L177.3 299L176.8 300.5L176.3 302L175.9 303.5L175.6 304.8L175.6 305.1L175.3 306.6L175.1 308.1L174.9 309.6L174.8 311.2L174.8 312.7L174.8 314.2L174.8 315.8L175 317.3L175.2 318.8L175.4 320.3L175.6 321.5L175.7 321.9L176.1 323.4L176.5 324.9L177 326.4L177.5 328L178.1 329.5L178.7 331L178.7 331L179.5 332.6L180.3 334.1L181.1 335.6L181.8 336.8L182 337.1L183 338.7L184 340.2L184.9 341.3L185.1 341.7L186.3 343.2L187.6 344.8L187.9 345.2L188.9 346.3L190.3 347.8L191 348.5L191.8 349.4L193.4 350.9L194.1 351.5L195.1 352.4L196.9 353.9L197.2 354.2L198.7 355.5L200.2 356.6L200.7 357L202.8 358.5L203.3 358.9L205 360L206.4 361L207.3 361.6L209.5 362.9L209.8 363.1L212.4 364.6L212.5 364.7L215.2 366.2L215.6 366.4L218.2 367.7L218.7 367.9L221.4 369.2L221.8 369.4L224.8 370.7L224.8 370.8L227.9 372L228.5 372.3L231 373.2L232.5 373.8L234 374.4L236.8 375.3L237.1 375.4L240.2 376.4L241.7 376.8L243.3 377.3L246.3 378.1L247.2 378.4L249.4 378.9L252.5 379.6L253.6 379.9L255.6 380.3L258.6 380.9L261.5 381.4L261.7 381.5L264.8 382L267.9 382.4L270.9 382.8L272.4 383zM269.7 375.3L267.9 375.1L264.8 374.6L261.7 374L260.4 373.8L258.6 373.4L255.6 372.8L253.5 372.3L252.5 372L249.4 371.2L247.7 370.7L246.3 370.3L243.3 369.4L242.7 369.2L240.2 368.4L238.3 367.7L237.1 367.2L234.3 366.2L234 366L231 364.8L230.7 364.6L227.9 363.4L227.3 363.1L224.8 361.9L224.3 361.6L221.8 360.2L221.4 360L218.7 358.5L218.7 358.5L216.2 357L215.6 356.6L213.9 355.5L212.5 354.6L211.7 353.9L209.6 352.4L209.5 352.3L207.6 350.9L206.4 349.8L205.8 349.4L204.1 347.8L203.3 347.1L202.5 346.3L200.9 344.8L200.2 344L199.5 343.2L198.2 341.7L197.2 340.5L196.9 340.2L195.8 338.7L194.7 337.1L194.1 336.3L193.6 335.6L192.7 334.1L191.9 332.6L191 331L191 330.9L190.3 329.5L189.7 328L189.1 326.4L188.6 324.9L188.1 323.4L187.9 322.6L187.7 321.9L187.4 320.3L187.2 318.8L187 317.3L186.9 315.8L186.8 314.2L186.8 312.7L186.9 311.2L187 309.6L187.2 308.1L187.5 306.6L187.8 305.1L187.9 304.6L188.2 303.5L188.7 302L189.2 300.5L189.9 299L190.6 297.4L191 296.5L191.3 295.9L192.2 294.4L193.1 292.8L194.1 291.4L194.1 291.3L195.2 289.8L196.4 288.3L197.2 287.4L197.7 286.7L199.1 285.2L200.2 284.1L200.6 283.7L202.2 282.2L203.3 281.2L204 280.6L205.8 279.1L206.4 278.7L207.8 277.6L209.5 276.4L210 276L212.3 274.5L212.5 274.4L214.8 273L215.6 272.5L217.5 271.5L218.7 270.9L220.5 269.9L221.8 269.3L223.7 268.4L224.8 267.9L227.3 266.9L227.9 266.6L231 265.5L231.3 265.4L234 264.4L235.8 263.8L237.1 263.4L240.2 262.5L240.9 262.3L243.3 261.7L246.3 260.9L247.1 260.8L249.4 260.3L252.5 259.7L255.1 259.2L255.6 259.2L258.6 258.7L261.7 258.3L264.8 258L267.8 257.7L267.9 257.7L270.9 257.5L274 257.4L277.1 257.3L280.2 257.2L283.2 257.3L286.3 257.3L289.4 257.5L292.5 257.7L293.1 257.7L295.5 257.9L298.6 258.2L301.7 258.6L304.8 259L306.1 259.2L307.8 259.5L310.9 260.1L314 260.7L314.4 260.8L317.1 261.4L320.1 262.1L320.9 262.3L323.2 262.9L326.3 263.8L326.4 263.8L329.4 264.8L331.1 265.4L332.4 265.8L335.4 266.9L335.5 266.9L338.6 268.1L339.3 268.4L341.7 269.4L342.8 269.9L344.7 270.8L346 271.5L347.8 272.3L349.1 273L350.9 274L351.9 274.5L354 275.7L354.5 276L356.9 277.6L357 277.6L359.2 279.1L360.1 279.7L361.4 280.6L363.2 282L363.4 282.2L365.3 283.7L366.2 284.5L367.1 285.2L368.8 286.7L369.3 287.2L370.4 288.3L371.9 289.8L372.4 290.3L373.3 291.3L374.6 292.8L375.5 293.9L375.8 294.4L377 295.9L378 297.4L378.5 298.2L379 299L379.9 300.5L380.8 302L381.5 303.5L381.6 303.7L382.2 305.1L382.9 306.6L383.4 308.1L383.9 309.6L384.4 311.2L384.7 312.6L384.7 312.7L385 314.2L385.2 315.8L385.4 317.3L385.5 318.8L385.6 320.3L385.5 321.9L385.4 323.4L385.3 324.9L385.1 326.4L384.8 328L384.7 328.3L384.4 329.5L384 331L383.5 332.6L382.9 334.1L382.3 335.6L381.6 337L381.5 337.1L380.7 338.7L379.9 340.2L378.9 341.7L378.5 342.3L377.9 343.2L376.7 344.8L375.5 346.3L375.5 346.3L374.2 347.8L372.7 349.4L372.4 349.7L371.2 350.9L369.6 352.4L369.3 352.6L367.8 353.9L366.2 355.2L365.9 355.5L363.8 357L363.2 357.4L361.6 358.5L360.1 359.5L359.2 360L357 361.4L356.6 361.6L354 363L353.9 363.1L350.9 364.6L350.8 364.6L347.8 366L347.5 366.2L344.7 367.3L343.8 367.7L341.7 368.5L339.6 369.2L338.6 369.6L335.5 370.6L335 370.7L332.4 371.5L329.5 372.3L329.4 372.3L326.3 373L323.2 373.7L322.8 373.8L320.1 374.3L317.1 374.8L314 375.3L313.9 375.3L310.9 375.7L307.8 376L304.8 376.3L301.7 376.5L298.6 376.7L295.5 376.8L292.5 376.8L289.4 376.8L286.3 376.7L283.2 376.6L280.2 376.4L277.1 376.2L274 375.9L270.9 375.5z" clip-path="url(#p754749531e)" style="fill: #464789; stroke: #464789; stroke-width: 1"/><path d="M240.2 383.5L243.3 384.3L244 384.5L246.3 384.5L249.4 384.5L252.5 384.5L255.6 384.5L258.6 384.5L261.7 384.5L264.8 384.5L267.9 384.5L270.9 384.5L274 384.5L277.1 384.5L280.2 384.5L283.2 384.5L286.3 384.5L289.4 384.5L292.5 384.5L295.5 384.5L298.6 384.5L301.7 384.5L304.8 384.5L307.8 384.5L310.9 384.5L314 384.5L317.1 384.5L320.1 384.5L323.2 384.5L326.3 384.5L329.4 384.5L332.4 384.5L335.5 384.5L338.6 384.5L341.3 384.5L341.7 384.4L344.7 383.5L346.6 383L347.8 382.6L350.9 381.6L351.3 381.4L354 380.5L355.6 379.9L357 379.3L359.4 378.4L360.1 378.1L363 376.8L363.2 376.7L366.2 375.3L366.2 375.3L369.3 373.8L369.3 373.8L372.1 372.3L372.4 372.1L374.7 370.7L375.5 370.3L377.2 369.2L378.5 368.3L379.5 367.7L381.6 366.2L381.7 366.2L383.8 364.6L384.7 363.9L385.7 363.1L387.6 361.6L387.8 361.4L389.3 360L390.8 358.6L390.9 358.5L392.5 357L393.9 355.5L393.9 355.5L395.3 353.9L396.6 352.4L397 351.9L397.8 350.9L398.9 349.4L400 347.8L400.1 347.7L400.9 346.3L401.9 344.8L402.7 343.2L403.1 342.4L403.5 341.7L404.2 340.2L404.9 338.7L405.5 337.1L406 335.6L406.2 335.1L406.5 334.1L407 332.6L407.3 331L407.6 329.5L407.9 328L408.1 326.4L408.3 324.9L408.4 323.4L408.4 321.9L408.4 320.3L408.4 318.8L408.2 317.3L408.1 315.8L407.9 314.2L407.6 312.7L407.3 311.2L406.9 309.6L406.5 308.1L406.2 307.3L406 306.6L405.4 305.1L404.8 303.5L404.2 302L403.5 300.5L403.1 299.7L402.7 299L401.9 297.4L401 295.9L400.1 294.4L400.1 294.3L399.1 292.8L398 291.3L397 289.9L396.9 289.8L395.7 288.3L394.5 286.7L393.9 286.1L393.2 285.2L391.8 283.7L390.8 282.7L390.3 282.2L388.7 280.6L387.8 279.7L387.1 279.1L385.4 277.6L384.7 277L383.6 276L381.7 274.5L381.6 274.5L379.7 273L378.5 272.1L377.6 271.5L375.5 270L375.4 269.9L373.1 268.4L372.4 268L370.6 266.9L369.3 266.1L368.1 265.4L366.2 264.3L365.3 263.8L363.2 262.7L362.5 262.3L360.1 261.1L359.4 260.8L357 259.6L356.1 259.2L354 258.3L352.7 257.7L350.9 257L348.9 256.2L347.8 255.7L344.9 254.7L344.7 254.6L341.7 253.5L340.5 253.1L338.6 252.5L335.7 251.6L335.5 251.5L332.4 250.7L330.3 250.1L329.4 249.8L326.3 249.1L324.2 248.6L323.2 248.3L320.1 247.7L317.1 247L317 247L314 246.5L310.9 246L307.8 245.5L307.8 245.5L304.8 245.1L301.7 244.7L298.6 244.4L295.5 244.1L293.4 244L292.5 243.9L289.4 243.7L286.3 243.6L283.2 243.5L280.2 243.5L277.1 243.5L274 243.5L270.9 243.6L267.9 243.8L264.9 244L264.8 244L261.7 244.2L258.6 244.5L255.6 244.9L252.5 245.3L250.8 245.5L249.4 245.7L246.3 246.2L243.3 246.8L242 247L240.2 247.4L237.1 248.1L235 248.6L234 248.8L231 249.6L229.2 250.1L227.9 250.4L224.8 251.4L224.1 251.6L221.8 252.4L219.6 253.1L218.7 253.4L215.6 254.6L215.5 254.7L212.5 255.8L211.7 256.2L209.5 257.2L208.3 257.7L206.4 258.6L205.1 259.2L203.3 260.2L202.1 260.8L200.2 261.8L199.4 262.3L197.2 263.6L196.8 263.8L194.3 265.4L194.1 265.5L192.1 266.9L191 267.6L189.9 268.4L187.9 269.9L187.9 269.9L186 271.5L184.9 272.4L184.2 273L182.5 274.5L181.8 275.2L180.9 276L179.4 277.6L178.7 278.3L178 279.1L176.6 280.6L175.6 281.8L175.4 282.2L174.2 283.7L173.1 285.2L172.6 286L172 286.7L171.1 288.3L170.2 289.8L169.5 291.1L169.3 291.3L168.6 292.8L167.9 294.4L167.2 295.9L166.6 297.4L166.4 298.1L166.1 299L165.7 300.5L165.3 302L164.9 303.5L164.6 305.1L164.4 306.6L164.2 308.1L164 309.6L163.9 311.2L163.9 312.7L163.9 314.2L164 315.8L164.1 317.3L164.3 318.8L164.6 320.3L164.9 321.9L165.2 323.4L165.6 324.9L166 326.4L166.4 327.6L166.5 328L167.1 329.5L167.7 331L168.4 332.6L169.1 334.1L169.5 334.9L169.9 335.6L170.7 337.1L171.6 338.7L172.5 340.2L172.6 340.2L173.6 341.7L174.7 343.2L175.6 344.6L175.8 344.8L177 346.3L178.3 347.8L178.7 348.3L179.6 349.4L181.1 350.9L181.8 351.6L182.6 352.4L184.1 353.9L184.9 354.6L185.8 355.5L187.5 357L187.9 357.3L189.4 358.5L191 359.8L191.3 360L193.3 361.6L194.1 362.1L195.5 363.1L197.2 364.3L197.7 364.6L200 366.2L200.2 366.3L202.5 367.7L203.3 368.1L205.2 369.2L206.4 369.9L207.9 370.7L209.5 371.5L210.9 372.3L212.5 373.1L214 373.8L215.6 374.5L217.3 375.3L218.7 375.9L220.9 376.8L221.8 377.2L224.7 378.4L224.8 378.4L227.9 379.6L228.9 379.9L231 380.6L233.4 381.4L234 381.6L237.1 382.6L238.4 383zM272.4 383L270.9 382.8L267.9 382.4L264.8 382L261.7 381.5L261.5 381.4L258.6 380.9L255.6 380.3L253.6 379.9L252.5 379.6L249.4 378.9L247.2 378.4L246.3 378.1L243.3 377.3L241.7 376.8L240.2 376.4L237.1 375.4L236.8 375.3L234 374.4L232.5 373.8L231 373.2L228.5 372.3L227.9 372L224.8 370.8L224.8 370.7L221.8 369.4L221.4 369.2L218.7 367.9L218.2 367.7L215.6 366.4L215.2 366.2L212.5 364.7L212.4 364.6L209.8 363.1L209.5 362.9L207.3 361.6L206.4 361L205 360L203.3 358.9L202.8 358.5L200.7 357L200.2 356.6L198.7 355.5L197.2 354.2L196.9 353.9L195.1 352.4L194.1 351.5L193.4 350.9L191.8 349.4L191 348.5L190.3 347.8L188.9 346.3L187.9 345.2L187.6 344.8L186.3 343.2L185.1 341.7L184.9 341.3L184 340.2L183 338.7L182 337.1L181.8 336.8L181.1 335.6L180.3 334.1L179.5 332.6L178.7 331L178.7 331L178.1 329.5L177.5 328L177 326.4L176.5 324.9L176.1 323.4L175.7 321.9L175.6 321.5L175.4 320.3L175.2 318.8L175 317.3L174.8 315.8L174.8 314.2L174.8 312.7L174.8 311.2L174.9 309.6L175.1 308.1L175.3 306.6L175.6 305.1L175.6 304.8L175.9 303.5L176.3 302L176.8 300.5L177.3 299L177.9 297.4L178.6 295.9L178.7 295.6L179.3 294.4L180.1 292.8L181 291.3L181.8 290L181.9 289.8L183 288.3L184 286.7L184.9 285.7L185.2 285.2L186.5 283.7L187.8 282.2L187.9 282L189.3 280.6L190.8 279.1L191 278.9L192.5 277.6L194.1 276.2L194.2 276L196.1 274.5L197.2 273.7L198.1 273L200.2 271.5L200.2 271.4L202.5 269.9L203.3 269.4L204.9 268.4L206.4 267.5L207.6 266.9L209.5 265.8L210.4 265.4L212.5 264.3L213.4 263.8L215.6 262.8L216.7 262.3L218.7 261.4L220.3 260.8L221.8 260.2L224.2 259.2L224.8 259L227.9 258L228.7 257.7L231 257L233.6 256.2L234 256.1L237.1 255.2L239.4 254.7L240.2 254.5L243.3 253.8L246.3 253.1L246.4 253.1L249.4 252.6L252.5 252.1L255.6 251.6L255.6 251.6L258.6 251.2L261.7 250.9L264.8 250.6L267.9 250.4L270.9 250.2L274 250.1L274 250.1L277.1 250L280.2 250L283.2 250L285.3 250.1L286.3 250.1L289.4 250.2L292.5 250.4L295.5 250.7L298.6 251L301.7 251.3L304.1 251.6L304.8 251.7L307.8 252.1L310.9 252.6L313.7 253.1L314 253.2L317.1 253.8L320.1 254.5L321 254.7L323.2 255.2L326.3 256L327 256.2L329.4 256.8L332.3 257.7L332.4 257.8L335.5 258.7L337 259.2L338.6 259.8L341.2 260.8L341.7 260.9L344.7 262.1L345.1 262.3L347.8 263.4L348.7 263.8L350.9 264.8L352 265.4L354 266.3L355.2 266.9L357 267.8L358.1 268.4L360.1 269.5L360.8 269.9L363.2 271.3L363.4 271.5L365.8 273L366.2 273.3L368.1 274.5L369.3 275.4L370.2 276L372.3 277.6L372.4 277.6L374.2 279.1L375.5 280.1L376.1 280.6L377.8 282.2L378.5 282.8L379.4 283.7L381 285.2L381.6 285.8L382.5 286.7L383.9 288.3L384.7 289.2L385.2 289.8L386.4 291.3L387.6 292.8L387.8 293.1L388.7 294.4L389.7 295.9L390.7 297.4L390.8 297.8L391.5 299L392.4 300.5L393.1 302L393.8 303.5L393.9 303.8L394.5 305.1L395 306.6L395.5 308.1L396 309.6L396.4 311.2L396.7 312.7L397 314L397 314.2L397.3 315.8L397.4 317.3L397.5 318.8L397.6 320.3L397.6 321.9L397.5 323.4L397.4 324.9L397.2 326.4L397 327.7L397 328L396.6 329.5L396.3 331L395.9 332.6L395.4 334.1L394.8 335.6L394.2 337.1L393.9 337.8L393.5 338.7L392.8 340.2L391.9 341.7L391.1 343.2L390.8 343.6L390.1 344.8L389 346.3L387.9 347.8L387.8 348L386.7 349.4L385.4 350.9L384.7 351.7L384 352.4L382.6 353.9L381.6 354.9L381 355.5L379.3 357L378.5 357.6L377.5 358.5L375.6 360L375.5 360.1L373.6 361.6L372.4 362.4L371.4 363.1L369.3 364.5L369.1 364.6L366.6 366.2L366.2 366.3L363.9 367.7L363.2 368.1L361 369.2L360.1 369.7L357.9 370.7L357 371.1L354.5 372.3L354 372.5L350.9 373.8L350.8 373.8L347.8 374.9L346.7 375.3L344.7 376L342.1 376.8L341.7 377L338.6 377.9L336.9 378.4L335.5 378.7L332.4 379.5L330.8 379.9L329.4 380.2L326.3 380.9L323.2 381.4L323.2 381.4L320.1 381.9L317.1 382.4L314 382.8L312.6 383L310.9 383.1L307.8 383.4L304.8 383.7L301.7 383.8L298.6 384L295.5 384L292.5 384.1L289.4 384L286.3 384L283.2 383.8L280.2 383.6L277.1 383.4L274 383.1z" clip-path="url(#p754749531e)" style="fill: #41578c; stroke: #41578c; stroke-width: 1"/><path d="M218.7 383L221.8 384.1L222.7 384.5L224.8 384.5L227.9 384.5L231 384.5L234 384.5L237.1 384.5L240.2 384.5L243.3 384.5L244 384.5L243.3 384.3L240.2 383.5L238.4 383L237.1 382.6L234 381.6L233.4 381.4L231 380.6L228.9 379.9L227.9 379.6L224.8 378.4L224.7 378.4L221.8 377.2L220.9 376.8L218.7 375.9L217.3 375.3L215.6 374.5L214 373.8L212.5 373.1L210.9 372.3L209.5 371.5L207.9 370.7L206.4 369.9L205.2 369.2L203.3 368.1L202.5 367.7L200.2 366.3L200 366.2L197.7 364.6L197.2 364.3L195.5 363.1L194.1 362.1L193.3 361.6L191.3 360L191 359.8L189.4 358.5L187.9 357.3L187.5 357L185.8 355.5L184.9 354.6L184.1 353.9L182.6 352.4L181.8 351.6L181.1 350.9L179.6 349.4L178.7 348.3L178.3 347.8L177 346.3L175.8 344.8L175.6 344.6L174.7 343.2L173.6 341.7L172.6 340.2L172.5 340.2L171.6 338.7L170.7 337.1L169.9 335.6L169.5 334.9L169.1 334.1L168.4 332.6L167.7 331L167.1 329.5L166.5 328L166.4 327.6L166 326.4L165.6 324.9L165.2 323.4L164.9 321.9L164.6 320.3L164.3 318.8L164.1 317.3L164 315.8L163.9 314.2L163.9 312.7L163.9 311.2L164 309.6L164.2 308.1L164.4 306.6L164.6 305.1L164.9 303.5L165.3 302L165.7 300.5L166.1 299L166.4 298.1L166.6 297.4L167.2 295.9L167.9 294.4L168.6 292.8L169.3 291.3L169.5 291.1L170.2 289.8L171.1 288.3L172 286.7L172.6 286L173.1 285.2L174.2 283.7L175.4 282.2L175.6 281.8L176.6 280.6L178 279.1L178.7 278.3L179.4 277.6L180.9 276L181.8 275.2L182.5 274.5L184.2 273L184.9 272.4L186 271.5L187.9 269.9L187.9 269.9L189.9 268.4L191 267.6L192.1 266.9L194.1 265.5L194.3 265.4L196.8 263.8L197.2 263.6L199.4 262.3L200.2 261.8L202.1 260.8L203.3 260.2L205.1 259.2L206.4 258.6L208.3 257.7L209.5 257.2L211.7 256.2L212.5 255.8L215.5 254.7L215.6 254.6L218.7 253.4L219.6 253.1L221.8 252.4L224.1 251.6L224.8 251.4L227.9 250.4L229.2 250.1L231 249.6L234 248.8L235 248.6L237.1 248.1L240.2 247.4L242 247L243.3 246.8L246.3 246.2L249.4 245.7L250.8 245.5L252.5 245.3L255.6 244.9L258.6 244.5L261.7 244.2L264.8 244L264.9 244L267.9 243.8L270.9 243.6L274 243.5L277.1 243.5L280.2 243.5L283.2 243.5L286.3 243.6L289.4 243.7L292.5 243.9L293.4 244L295.5 244.1L298.6 244.4L301.7 244.7L304.8 245.1L307.8 245.5L307.8 245.5L310.9 246L314 246.5L317 247L317.1 247L320.1 247.7L323.2 248.3L324.2 248.6L326.3 249.1L329.4 249.8L330.3 250.1L332.4 250.7L335.5 251.5L335.7 251.6L338.6 252.5L340.5 253.1L341.7 253.5L344.7 254.6L344.9 254.7L347.8 255.7L348.9 256.2L350.9 257L352.7 257.7L354 258.3L356.1 259.2L357 259.6L359.4 260.8L360.1 261.1L362.5 262.3L363.2 262.7L365.3 263.8L366.2 264.3L368.1 265.4L369.3 266.1L370.6 266.9L372.4 268L373.1 268.4L375.4 269.9L375.5 270L377.6 271.5L378.5 272.1L379.7 273L381.6 274.5L381.7 274.5L383.6 276L384.7 277L385.4 277.6L387.1 279.1L387.8 279.7L388.7 280.6L390.3 282.2L390.8 282.7L391.8 283.7L393.2 285.2L393.9 286.1L394.5 286.7L395.7 288.3L396.9 289.8L397 289.9L398 291.3L399.1 292.8L400.1 294.3L400.1 294.4L401 295.9L401.9 297.4L402.7 299L403.1 299.7L403.5 300.5L404.2 302L404.8 303.5L405.4 305.1L406 306.6L406.2 307.3L406.5 308.1L406.9 309.6L407.3 311.2L407.6 312.7L407.9 314.2L408.1 315.8L408.2 317.3L408.4 318.8L408.4 320.3L408.4 321.9L408.4 323.4L408.3 324.9L408.1 326.4L407.9 328L407.6 329.5L407.3 331L407 332.6L406.5 334.1L406.2 335.1L406 335.6L405.5 337.1L404.9 338.7L404.2 340.2L403.5 341.7L403.1 342.4L402.7 343.2L401.9 344.8L400.9 346.3L400.1 347.7L400 347.8L398.9 349.4L397.8 350.9L397 351.9L396.6 352.4L395.3 353.9L393.9 355.5L393.9 355.5L392.5 357L390.9 358.5L390.8 358.6L389.3 360L387.8 361.4L387.6 361.6L385.7 363.1L384.7 363.9L383.8 364.6L381.7 366.2L381.6 366.2L379.5 367.7L378.5 368.3L377.2 369.2L375.5 370.3L374.7 370.7L372.4 372.1L372.1 372.3L369.3 373.8L369.3 373.8L366.2 375.3L366.2 375.3L363.2 376.7L363 376.8L360.1 378.1L359.4 378.4L357 379.3L355.6 379.9L354 380.5L351.3 381.4L350.9 381.6L347.8 382.6L346.6 383L344.7 383.5L341.7 384.4L341.3 384.5L341.7 384.5L344.7 384.5L347.8 384.5L350.9 384.5L354 384.5L357 384.5L360.1 384.5L362.6 384.5L363.2 384.3L366.2 383L366.4 383L369.3 381.7L369.8 381.4L372.4 380.2L373.1 379.9L375.5 378.7L376.1 378.4L378.5 377.1L378.9 376.8L381.6 375.3L381.6 375.3L384.1 373.8L384.7 373.4L386.5 372.3L387.8 371.4L388.7 370.7L390.8 369.2L390.8 369.2L392.8 367.7L393.9 366.8L394.7 366.2L396.5 364.6L397 364.2L398.2 363.1L399.8 361.6L400.1 361.3L401.3 360L402.8 358.5L403.1 358.1L404.1 357L405.4 355.5L406.2 354.5L406.6 353.9L407.8 352.4L408.9 350.9L409.3 350.3L409.9 349.4L410.8 347.8L411.7 346.3L412.4 345.1L412.4 344.8L412.4 343.2L412.4 341.7L412.4 340.2L412.4 338.7L412.4 337.1L412.4 335.6L412.4 334.1L412.4 332.6L412.4 331L412.4 329.5L412.4 328L412.4 326.4L412.4 324.9L412.4 323.4L412.4 321.9L412.4 320.3L412.4 318.8L412.4 317.3L412.4 315.8L412.4 314.2L412.4 312.7L412.4 311.2L412.4 309.6L412.4 308.1L412.4 306.6L412.4 305.1L412.4 303.5L412.4 302L412.4 300.5L412.4 299L412.4 297.7L412.2 297.4L411.4 295.9L410.5 294.4L409.6 292.8L409.3 292.4L408.6 291.3L407.6 289.8L406.5 288.3L406.2 287.9L405.3 286.7L404.1 285.2L403.1 284.1L402.8 283.7L401.4 282.2L400.1 280.7L400 280.6L398.5 279.1L397 277.6L397 277.6L395.4 276L393.9 274.7L393.7 274.5L391.9 273L390.8 272.1L390 271.5L388 269.9L387.8 269.7L386 268.4L384.7 267.5L383.8 266.9L381.6 265.4L381.6 265.4L379.2 263.8L378.5 263.4L376.7 262.3L375.5 261.6L374.1 260.8L372.4 259.8L371.3 259.2L369.3 258.2L368.4 257.7L366.2 256.6L365.4 256.2L363.2 255.1L362.1 254.7L360.1 253.8L358.7 253.1L357 252.4L355 251.6L354 251.2L351 250.1L350.9 250L347.8 248.9L346.8 248.6L344.7 247.9L342.2 247L341.7 246.9L338.6 245.9L337.1 245.5L335.5 245.1L332.4 244.2L331.4 244L329.4 243.5L326.3 242.7L324.9 242.4L323.2 242.1L320.1 241.5L317.3 240.9L317.1 240.9L314 240.4L310.9 239.9L307.8 239.4L307.5 239.4L304.8 239L301.7 238.7L298.6 238.4L295.5 238.1L292.5 237.9L291.5 237.9L289.4 237.7L286.3 237.6L283.2 237.5L280.2 237.5L277.1 237.5L274 237.5L270.9 237.6L267.9 237.7L265.6 237.9L264.8 237.9L261.7 238.1L258.6 238.4L255.6 238.7L252.5 239.1L249.9 239.4L249.4 239.5L246.3 239.9L243.3 240.4L240.5 240.9L240.2 241L237.1 241.6L234 242.2L233.1 242.4L231 242.9L227.9 243.7L226.9 244L224.8 244.5L221.8 245.4L221.5 245.5L218.7 246.4L216.7 247L215.6 247.4L212.5 248.5L212.4 248.6L209.5 249.7L208.4 250.1L206.4 250.9L204.8 251.6L203.3 252.3L201.4 253.1L200.2 253.7L198.2 254.7L197.2 255.2L195.3 256.2L194.1 256.8L192.5 257.7L191 258.6L189.9 259.2L187.9 260.5L187.4 260.8L185.1 262.3L184.9 262.5L182.9 263.8L181.8 264.7L180.9 265.4L178.9 266.9L178.7 267L177 268.4L175.6 269.6L175.3 269.9L173.6 271.5L172.6 272.5L172 273L170.5 274.5L169.5 275.6L169.1 276L167.8 277.6L166.5 279.1L166.4 279.2L165.3 280.6L164.2 282.2L163.3 283.4L163.1 283.7L162.1 285.2L161.2 286.7L160.3 288.3L160.3 288.4L159.5 289.8L158.8 291.3L158.1 292.8L157.5 294.4L157.2 295.1L156.9 295.9L156.4 297.4L155.9 299L155.5 300.5L155.1 302L154.8 303.5L154.5 305.1L154.3 306.6L154.1 308.1L154.1 308.6L154 309.6L154 311.2L154 312.7L154 314.2L154.1 315.8L154.1 316.3L154.2 317.3L154.4 318.8L154.6 320.3L154.9 321.9L155.2 323.4L155.6 324.9L156 326.4L156.5 328L157 329.5L157.2 330L157.6 331L158.2 332.6L158.9 334.1L159.6 335.6L160.3 336.9L160.4 337.1L161.2 338.7L162.1 340.2L163.1 341.7L163.3 342.1L164.1 343.2L165.1 344.8L166.2 346.3L166.4 346.5L167.4 347.8L168.7 349.4L169.5 350.3L170 350.9L171.4 352.4L172.6 353.7L172.8 353.9L174.3 355.5L175.6 356.8L175.9 357L177.5 358.5L178.7 359.6L179.3 360L181.1 361.6L181.8 362.1L183 363.1L184.9 364.5L185 364.6L187.1 366.2L187.9 366.8L189.3 367.7L191 368.9L191.6 369.2L194 370.7L194.1 370.8L196.5 372.3L197.2 372.7L199.2 373.8L200.2 374.4L202 375.3L203.3 376L204.9 376.8L206.4 377.6L208 378.4L209.5 379L211.3 379.9L212.5 380.4L214.9 381.4L215.6 381.7L218.6 383z" clip-path="url(#p754749531e)" style="fill: #3c648e; stroke: #3c648e; stroke-width: 1"/><path d="M203.3 383L206.4 384.4L206.5 384.5L209.5 384.5L212.5 384.5L215.6 384.5L218.7 384.5L221.8 384.5L222.7 384.5L221.8 384.1L218.7 383L218.6 383L215.6 381.7L214.9 381.4L212.5 380.4L211.3 379.9L209.5 379L208 378.4L206.4 377.6L204.9 376.8L203.3 376L202 375.3L200.2 374.4L199.2 373.8L197.2 372.7L196.5 372.3L194.1 370.8L194 370.7L191.6 369.2L191 368.9L189.3 367.7L187.9 366.8L187.1 366.2L185 364.6L184.9 364.5L183 363.1L181.8 362.1L181.1 361.6L179.3 360L178.7 359.6L177.5 358.5L175.9 357L175.6 356.8L174.3 355.5L172.8 353.9L172.6 353.7L171.4 352.4L170 350.9L169.5 350.3L168.7 349.4L167.4 347.8L166.4 346.5L166.2 346.3L165.1 344.8L164.1 343.2L163.3 342.1L163.1 341.7L162.1 340.2L161.2 338.7L160.4 337.1L160.3 336.9L159.6 335.6L158.9 334.1L158.2 332.6L157.6 331L157.2 330L157 329.5L156.5 328L156 326.4L155.6 324.9L155.2 323.4L154.9 321.9L154.6 320.3L154.4 318.8L154.2 317.3L154.1 316.3L154.1 315.8L154 314.2L154 312.7L154 311.2L154 309.6L154.1 308.6L154.1 308.1L154.3 306.6L154.5 305.1L154.8 303.5L155.1 302L155.5 300.5L155.9 299L156.4 297.4L156.9 295.9L157.2 295.1L157.5 294.4L158.1 292.8L158.8 291.3L159.5 289.8L160.3 288.4L160.3 288.3L161.2 286.7L162.1 285.2L163.1 283.7L163.3 283.4L164.2 282.2L165.3 280.6L166.4 279.2L166.5 279.1L167.8 277.6L169.1 276L169.5 275.6L170.5 274.5L172 273L172.6 272.5L173.6 271.5L175.3 269.9L175.6 269.6L177 268.4L178.7 267L178.9 266.9L180.9 265.4L181.8 264.7L182.9 263.8L184.9 262.5L185.1 262.3L187.4 260.8L187.9 260.5L189.9 259.2L191 258.6L192.5 257.7L194.1 256.8L195.3 256.2L197.2 255.2L198.2 254.7L200.2 253.7L201.4 253.1L203.3 252.3L204.8 251.6L206.4 250.9L208.4 250.1L209.5 249.7L212.4 248.6L212.5 248.5L215.6 247.4L216.7 247L218.7 246.4L221.5 245.5L221.8 245.4L224.8 244.5L226.9 244L227.9 243.7L231 242.9L233.1 242.4L234 242.2L237.1 241.6L240.2 241L240.5 240.9L243.3 240.4L246.3 239.9L249.4 239.5L249.9 239.4L252.5 239.1L255.6 238.7L258.6 238.4L261.7 238.1L264.8 237.9L265.6 237.9L267.9 237.7L270.9 237.6L274 237.5L277.1 237.5L280.2 237.5L283.2 237.5L286.3 237.6L289.4 237.7L291.5 237.9L292.5 237.9L295.5 238.1L298.6 238.4L301.7 238.7L304.8 239L307.5 239.4L307.8 239.4L310.9 239.9L314 240.4L317.1 240.9L317.3 240.9L320.1 241.5L323.2 242.1L324.9 242.4L326.3 242.7L329.4 243.5L331.4 244L332.4 244.2L335.5 245.1L337.1 245.5L338.6 245.9L341.7 246.9L342.2 247L344.7 247.9L346.8 248.6L347.8 248.9L350.9 250L351 250.1L354 251.2L355 251.6L357 252.4L358.7 253.1L360.1 253.8L362.1 254.7L363.2 255.1L365.4 256.2L366.2 256.6L368.4 257.7L369.3 258.2L371.3 259.2L372.4 259.8L374.1 260.8L375.5 261.6L376.7 262.3L378.5 263.4L379.2 263.8L381.6 265.4L381.6 265.4L383.8 266.9L384.7 267.5L386 268.4L387.8 269.7L388 269.9L390 271.5L390.8 272.1L391.9 273L393.7 274.5L393.9 274.7L395.4 276L397 277.6L397 277.6L398.5 279.1L400 280.6L400.1 280.7L401.4 282.2L402.8 283.7L403.1 284.1L404.1 285.2L405.3 286.7L406.2 287.9L406.5 288.3L407.6 289.8L408.6 291.3L409.3 292.4L409.6 292.8L410.5 294.4L411.4 295.9L412.2 297.4L412.4 297.7L412.4 297.4L412.4 295.9L412.4 294.4L412.4 292.8L412.4 291.3L412.4 289.8L412.4 288.3L412.4 286.7L412.4 285.2L412.4 283.7L412.4 283L411.7 282.2L410.3 280.6L409.3 279.4L409 279.1L407.5 277.6L406.2 276.2L406 276L404.4 274.5L403.1 273.3L402.8 273L401.1 271.5L400.1 270.6L399.3 269.9L397.4 268.4L397 268.1L395.5 266.9L393.9 265.7L393.4 265.4L391.3 263.8L390.8 263.5L389.1 262.3L387.8 261.4L386.8 260.8L384.7 259.5L384.3 259.2L381.8 257.7L381.6 257.6L379.1 256.2L378.5 255.9L376.3 254.7L375.5 254.2L373.4 253.1L372.4 252.7L370.2 251.6L369.3 251.2L367 250.1L366.2 249.8L363.5 248.6L363.2 248.4L360.1 247.1L359.8 247L357 245.9L355.9 245.5L354 244.8L351.6 244L350.9 243.7L347.8 242.7L347.1 242.4L344.7 241.7L342.1 240.9L341.7 240.8L338.6 239.9L336.6 239.4L335.5 239.1L332.4 238.3L330.5 237.9L329.4 237.6L326.3 236.9L323.4 236.3L323.2 236.3L320.1 235.7L317.1 235.2L314.8 234.8L314 234.7L310.9 234.2L307.8 233.8L304.8 233.4L303.4 233.3L301.7 233.3L298.6 233.3L295.5 233.3L292.5 233.3L289.4 233.3L286.3 233.3L283.2 233.3L280.2 233.3L277.1 233.3L274 233.3L270.9 233.3L267.9 233.3L264.8 233.3L261.7 233.3L258.6 233.3L255.6 233.3L252.8 233.3L252.5 233.3L249.4 233.7L246.3 234.1L243.3 234.6L241.7 234.8L240.2 235.1L237.1 235.6L234 236.2L233.4 236.3L231 236.9L227.9 237.6L226.7 237.9L224.8 238.3L221.8 239.1L220.8 239.4L218.7 240L215.6 240.9L215.6 240.9L212.5 241.9L210.9 242.4L209.5 243L206.7 244L206.4 244.1L203.3 245.3L202.7 245.5L200.2 246.5L199.1 247L197.2 247.9L195.7 248.6L194.1 249.3L192.5 250.1L191 250.8L189.5 251.6L187.9 252.5L186.7 253.1L184.9 254.2L184.1 254.7L181.8 256L181.5 256.2L179.2 257.7L178.7 258L176.9 259.2L175.6 260.1L174.8 260.8L172.7 262.3L172.6 262.4L170.8 263.8L169.5 264.9L169 265.4L167.2 266.9L166.4 267.6L165.6 268.4L164 269.9L163.3 270.6L162.5 271.5L161.1 273L160.3 273.9L159.7 274.5L158.4 276L157.2 277.6L157.2 277.6L156.1 279.1L155 280.6L154.1 281.9L154 282.2L153 283.7L152.1 285.2L151.3 286.7L151 287.2L150.5 288.3L149.7 289.8L149.1 291.3L148.4 292.8L148 294.1L147.8 294.4L147.3 295.9L146.8 297.4L146.4 299L146 300.5L145.7 302L145.4 303.5L145.2 305.1L145 306.6L144.9 307.7L144.8 308.1L144.8 309.6L144.7 311.2L144.7 312.7L144.7 314.2L144.8 315.8L144.9 316.6L145 317.3L145.1 318.8L145.4 320.3L145.6 321.9L145.9 323.4L146.3 324.9L146.7 326.4L147.2 328L147.7 329.5L148 330.4L148.2 331L148.8 332.6L149.4 334.1L150.1 335.6L150.9 337.1L151 337.5L151.7 338.7L152.5 340.2L153.4 341.7L154.1 342.9L154.3 343.2L155.3 344.8L156.4 346.3L157.2 347.5L157.5 347.8L158.6 349.4L159.8 350.9L160.3 351.4L161.1 352.4L162.4 353.9L163.3 354.9L163.8 355.5L165.3 357L166.4 358.1L166.8 358.5L168.4 360L169.5 361L170.1 361.6L171.8 363.1L172.6 363.7L173.7 364.6L175.5 366.2L175.6 366.2L177.5 367.7L178.7 368.6L179.6 369.2L181.7 370.7L181.8 370.8L184 372.3L184.9 372.8L186.4 373.8L187.9 374.8L188.8 375.3L191 376.6L191.4 376.8L194.1 378.3L194.1 378.4L197 379.9L197.2 380L200 381.4L200.2 381.5L203.2 383zM363.2 384.5L366.2 384.5L369.3 384.5L372.4 384.5L375.5 384.5L378.5 384.5L378.8 384.5L381.6 383.1L381.9 383L384.7 381.4L384.7 381.4L387.4 379.9L387.8 379.7L390 378.4L390.8 377.8L392.4 376.8L393.9 375.8L394.7 375.3L396.9 373.8L397 373.7L398.9 372.3L400.1 371.4L400.9 370.7L402.8 369.2L403.1 368.9L404.5 367.7L406.2 366.2L406.2 366.2L407.8 364.6L409.3 363.2L409.4 363.1L410.8 361.6L412.2 360L412.4 359.8L412.4 358.5L412.4 357L412.4 355.5L412.4 353.9L412.4 352.4L412.4 350.9L412.4 349.4L412.4 347.8L412.4 346.3L412.4 345.1L411.7 346.3L410.8 347.8L409.9 349.4L409.3 350.3L408.9 350.9L407.8 352.4L406.6 353.9L406.2 354.5L405.4 355.5L404.1 357L403.1 358.1L402.8 358.5L401.3 360L400.1 361.3L399.8 361.6L398.2 363.1L397 364.2L396.5 364.6L394.7 366.2L393.9 366.8L392.8 367.7L390.8 369.2L390.8 369.2L388.7 370.7L387.8 371.4L386.5 372.3L384.7 373.4L384.1 373.8L381.6 375.3L381.6 375.3L378.9 376.8L378.5 377.1L376.1 378.4L375.5 378.7L373.1 379.9L372.4 380.2L369.8 381.4L369.3 381.7L366.4 383L366.2 383L363.2 384.3L362.6 384.5z" clip-path="url(#p754749531e)" style="fill: #39718e; stroke: #39718e; stroke-width: 1"/><path d="M191 383.5L192.9 384.5L194.1 384.5L197.2 384.5L200.2 384.5L203.3 384.5L206.4 384.5L206.5 384.5L206.4 384.4L203.3 383L203.2 383L200.2 381.5L200 381.4L197.2 380L197 379.9L194.1 378.4L194.1 378.3L191.4 376.8L191 376.6L188.8 375.3L187.9 374.8L186.4 373.8L184.9 372.8L184 372.3L181.8 370.8L181.7 370.7L179.6 369.2L178.7 368.6L177.5 367.7L175.6 366.2L175.5 366.2L173.7 364.6L172.6 363.7L171.8 363.1L170.1 361.6L169.5 361L168.4 360L166.8 358.5L166.4 358.1L165.3 357L163.8 355.5L163.3 354.9L162.4 353.9L161.1 352.4L160.3 351.4L159.8 350.9L158.6 349.4L157.5 347.8L157.2 347.5L156.4 346.3L155.3 344.8L154.3 343.2L154.1 342.9L153.4 341.7L152.5 340.2L151.7 338.7L151 337.5L150.9 337.1L150.1 335.6L149.4 334.1L148.8 332.6L148.2 331L148 330.4L147.7 329.5L147.2 328L146.7 326.4L146.3 324.9L145.9 323.4L145.6 321.9L145.4 320.3L145.1 318.8L145 317.3L144.9 316.6L144.8 315.8L144.7 314.2L144.7 312.7L144.7 311.2L144.8 309.6L144.8 308.1L144.9 307.7L145 306.6L145.2 305.1L145.4 303.5L145.7 302L146 300.5L146.4 299L146.8 297.4L147.3 295.9L147.8 294.4L148 294.1L148.4 292.8L149.1 291.3L149.7 289.8L150.5 288.3L151 287.2L151.3 286.7L152.1 285.2L153 283.7L154 282.2L154.1 281.9L155 280.6L156.1 279.1L157.2 277.6L157.2 277.6L158.4 276L159.7 274.5L160.3 273.9L161.1 273L162.5 271.5L163.3 270.6L164 269.9L165.6 268.4L166.4 267.6L167.2 266.9L169 265.4L169.5 264.9L170.8 263.8L172.6 262.4L172.7 262.3L174.8 260.8L175.6 260.1L176.9 259.2L178.7 258L179.2 257.7L181.5 256.2L181.8 256L184.1 254.7L184.9 254.2L186.7 253.1L187.9 252.5L189.5 251.6L191 250.8L192.5 250.1L194.1 249.3L195.7 248.6L197.2 247.9L199.1 247L200.2 246.5L202.7 245.5L203.3 245.3L206.4 244.1L206.7 244L209.5 243L210.9 242.4L212.5 241.9L215.6 240.9L215.6 240.9L218.7 240L220.8 239.4L221.8 239.1L224.8 238.3L226.7 237.9L227.9 237.6L231 236.9L233.4 236.3L234 236.2L237.1 235.6L240.2 235.1L241.7 234.8L243.3 234.6L246.3 234.1L249.4 233.7L252.5 233.3L252.8 233.3L252.5 233.3L249.4 233.3L246.3 233.3L243.3 233.3L240.2 233.3L237.1 233.3L234 233.3L231 233.3L227.9 233.3L224.8 233.3L221.9 233.3L221.8 233.3L218.7 234.1L216.1 234.8L215.6 235L212.5 235.9L211 236.3L209.5 236.8L206.4 237.8L206.3 237.9L203.3 238.9L202 239.4L200.2 240.1L198.1 240.9L197.2 241.3L194.4 242.4L194.1 242.6L191 243.9L190.9 244L187.9 245.4L187.7 245.5L184.9 246.9L184.7 247L181.8 248.6L181.8 248.6L179.1 250.1L178.7 250.3L176.5 251.6L175.6 252.1L174 253.1L172.6 254.1L171.7 254.7L169.5 256.2L169.5 256.2L167.4 257.7L166.4 258.4L165.4 259.2L163.5 260.8L163.3 260.9L161.6 262.3L160.3 263.5L159.9 263.8L158.2 265.4L157.2 266.4L156.7 266.9L155.1 268.4L154.1 269.5L153.7 269.9L152.3 271.5L151 273L151 273L149.8 274.5L148.6 276L148 276.9L147.5 277.6L146.5 279.1L145.5 280.6L144.9 281.5L144.5 282.2L143.6 283.7L142.8 285.2L142 286.7L141.8 287.2L141.3 288.3L140.6 289.8L140 291.3L139.4 292.8L138.9 294.4L138.7 294.8L138.4 295.9L137.9 297.4L137.6 299L137.2 300.5L136.9 302L136.6 303.5L136.4 305.1L136.3 306.6L136.1 308.1L136 309.6L136 311.2L136 312.7L136.1 314.2L136.2 315.8L136.3 317.3L136.5 318.8L136.7 320.3L136.9 321.9L137.2 323.4L137.6 324.9L138 326.4L138.4 328L138.7 329L138.9 329.5L139.4 331L140 332.6L140.6 334.1L141.2 335.6L141.8 336.9L141.9 337.1L142.7 338.7L143.5 340.2L144.3 341.7L144.9 342.7L145.2 343.2L146.2 344.8L147.2 346.3L148 347.5L148.2 347.8L149.3 349.4L150.4 350.9L151 351.7L151.6 352.4L152.9 353.9L154.1 355.4L154.2 355.5L155.6 357L157 358.5L157.2 358.7L158.5 360L160 361.6L160.3 361.8L161.6 363.1L163.3 364.6L163.3 364.6L165.1 366.2L166.4 367.3L166.9 367.7L168.8 369.2L169.5 369.7L170.8 370.7L172.6 372.1L172.8 372.3L175 373.8L175.6 374.2L177.2 375.3L178.7 376.3L179.6 376.8L181.8 378.2L182 378.4L184.5 379.9L184.9 380.1L187.2 381.4L187.9 381.8L190 383zM381.6 384.5L384.7 384.5L387.8 384.5L390.8 384.5L392.4 384.5L393.9 383.6L395 383L397 381.7L397.5 381.4L399.9 379.9L400.1 379.8L402.1 378.4L403.1 377.7L404.3 376.8L406.2 375.4L406.3 375.3L408.3 373.8L409.3 372.9L410.1 372.3L411.9 370.7L412.4 370.3L412.4 369.2L412.4 367.7L412.4 366.2L412.4 364.6L412.4 363.1L412.4 361.6L412.4 360L412.4 359.8L412.2 360L410.8 361.6L409.4 363.1L409.3 363.2L407.8 364.6L406.2 366.2L406.2 366.2L404.5 367.7L403.1 368.9L402.8 369.2L400.9 370.7L400.1 371.4L398.9 372.3L397 373.7L396.9 373.8L394.7 375.3L393.9 375.8L392.4 376.8L390.8 377.8L390 378.4L387.8 379.7L387.4 379.9L384.7 381.4L384.7 381.4L381.9 383L381.6 383.1L378.8 384.5zM412.4 283L412.4 282.2L412.4 280.6L412.4 279.1L412.4 277.6L412.4 276L412.4 274.5L412.4 273L412.4 272.5L411.2 271.5L409.6 269.9L409.3 269.7L407.9 268.4L406.2 267L406.1 266.9L404.2 265.4L403.1 264.5L402.2 263.8L400.2 262.3L400.1 262.2L398.1 260.8L397 260L395.9 259.2L393.9 257.9L393.6 257.7L391.2 256.2L390.8 256L388.7 254.7L387.8 254.1L386 253.1L384.7 252.4L383.3 251.6L381.6 250.7L380.4 250.1L378.5 249.1L377.4 248.6L375.5 247.6L374.2 247L372.4 246.2L370.9 245.5L369.3 244.8L367.4 244L366.2 243.5L363.6 242.4L363.2 242.3L360.1 241.1L359.6 240.9L357 240L355.4 239.4L354 238.9L350.9 237.9L350.8 237.9L347.8 236.9L345.9 236.3L344.7 236L341.7 235.1L340.4 234.8L338.6 234.3L335.5 233.5L334.4 233.3L332.4 233.3L329.4 233.3L326.3 233.3L323.2 233.3L320.1 233.3L317.1 233.3L314 233.3L310.9 233.3L307.8 233.3L304.8 233.3L303.4 233.3L304.8 233.4L307.8 233.8L310.9 234.2L314 234.7L314.8 234.8L317.1 235.2L320.1 235.7L323.2 236.3L323.4 236.3L326.3 236.9L329.4 237.6L330.5 237.9L332.4 238.3L335.5 239.1L336.6 239.4L338.6 239.9L341.7 240.8L342.1 240.9L344.7 241.7L347.1 242.4L347.8 242.7L350.9 243.7L351.6 244L354 244.8L355.9 245.5L357 245.9L359.8 247L360.1 247.1L363.2 248.4L363.5 248.6L366.2 249.8L367 250.1L369.3 251.2L370.2 251.6L372.4 252.7L373.4 253.1L375.5 254.2L376.3 254.7L378.5 255.9L379.1 256.2L381.6 257.6L381.8 257.7L384.3 259.2L384.7 259.5L386.8 260.8L387.8 261.4L389.1 262.3L390.8 263.5L391.3 263.8L393.4 265.4L393.9 265.7L395.5 266.9L397 268.1L397.4 268.4L399.3 269.9L400.1 270.6L401.1 271.5L402.8 273L403.1 273.3L404.4 274.5L406 276L406.2 276.2L407.5 277.6L409 279.1L409.3 279.4L410.3 280.6L411.7 282.2z" clip-path="url(#p754749531e)" style="fill: #357d8e; stroke: #357d8e; stroke-width: 1"/><path d="M178.7 383.2L181 384.5L181.8 384.5L184.9 384.5L187.9 384.5L191 384.5L192.9 384.5L191 383.5L190 383L187.9 381.8L187.2 381.4L184.9 380.1L184.5 379.9L182 378.4L181.8 378.2L179.6 376.8L178.7 376.3L177.2 375.3L175.6 374.2L175 373.8L172.8 372.3L172.6 372.1L170.8 370.7L169.5 369.7L168.8 369.2L166.9 367.7L166.4 367.3L165.1 366.2L163.3 364.6L163.3 364.6L161.6 363.1L160.3 361.8L160 361.6L158.5 360L157.2 358.7L157 358.5L155.6 357L154.2 355.5L154.1 355.4L152.9 353.9L151.6 352.4L151 351.7L150.4 350.9L149.3 349.4L148.2 347.8L148 347.5L147.2 346.3L146.2 344.8L145.2 343.2L144.9 342.7L144.3 341.7L143.5 340.2L142.7 338.7L141.9 337.1L141.8 336.9L141.2 335.6L140.6 334.1L140 332.6L139.4 331L138.9 329.5L138.7 329L138.4 328L138 326.4L137.6 324.9L137.2 323.4L136.9 321.9L136.7 320.3L136.5 318.8L136.3 317.3L136.2 315.8L136.1 314.2L136 312.7L136 311.2L136 309.6L136.1 308.1L136.3 306.6L136.4 305.1L136.6 303.5L136.9 302L137.2 300.5L137.6 299L137.9 297.4L138.4 295.9L138.7 294.8L138.9 294.4L139.4 292.8L140 291.3L140.6 289.8L141.3 288.3L141.8 287.2L142 286.7L142.8 285.2L143.6 283.7L144.5 282.2L144.9 281.5L145.5 280.6L146.5 279.1L147.5 277.6L148 276.9L148.6 276L149.8 274.5L151 273L151 273L152.3 271.5L153.7 269.9L154.1 269.5L155.1 268.4L156.7 266.9L157.2 266.4L158.2 265.4L159.9 263.8L160.3 263.5L161.6 262.3L163.3 260.9L163.5 260.8L165.4 259.2L166.4 258.4L167.4 257.7L169.5 256.2L169.5 256.2L171.7 254.7L172.6 254.1L174 253.1L175.6 252.1L176.5 251.6L178.7 250.3L179.1 250.1L181.8 248.6L181.8 248.6L184.7 247L184.9 246.9L187.7 245.5L187.9 245.4L190.9 244L191 243.9L194.1 242.6L194.4 242.4L197.2 241.3L198.1 240.9L200.2 240.1L202 239.4L203.3 238.9L206.3 237.9L206.4 237.8L209.5 236.8L211 236.3L212.5 235.9L215.6 235L216.1 234.8L218.7 234.1L221.8 233.3L221.9 233.3L221.8 233.3L218.7 233.3L215.6 233.3L212.5 233.3L209.5 233.3L206.4 233.3L203.3 233.3L202.7 233.3L200.2 234.1L198.3 234.8L197.2 235.2L194.3 236.3L194.1 236.4L191 237.7L190.6 237.9L187.9 239L187 239.4L184.9 240.4L183.7 240.9L181.8 241.8L180.6 242.4L178.7 243.4L177.6 244L175.6 245L174.8 245.5L172.6 246.8L172.2 247L169.6 248.6L169.5 248.6L167.2 250.1L166.4 250.6L164.9 251.6L163.3 252.7L162.7 253.1L160.6 254.7L160.3 254.9L158.6 256.2L157.2 257.3L156.7 257.7L154.9 259.2L154.1 259.9L153.1 260.8L151.5 262.3L151 262.7L149.9 263.8L148.4 265.4L148 265.8L146.9 266.9L145.5 268.4L144.9 269.1L144.2 269.9L142.9 271.5L141.8 272.9L141.7 273L140.6 274.5L139.5 276L138.7 277.1L138.5 277.6L137.5 279.1L136.6 280.6L135.7 282.2L135.7 282.2L134.9 283.7L134.1 285.2L133.4 286.7L132.7 288.3L132.6 288.4L132 289.8L131.5 291.3L130.9 292.8L130.4 294.4L130 295.9L129.6 297.4L129.5 297.6L129.2 299L128.9 300.5L128.6 302L128.4 303.5L128.2 305.1L128 306.6L127.9 308.1L127.8 309.6L127.8 311.2L127.8 312.7L127.9 314.2L128 315.8L128.1 317.3L128.3 318.8L128.5 320.3L128.7 321.9L129 323.4L129.4 324.9L129.5 325.6L129.7 326.4L130.2 328L130.6 329.5L131.1 331L131.7 332.6L132.2 334.1L132.6 334.9L132.9 335.6L133.6 337.1L134.3 338.7L135 340.2L135.7 341.4L135.8 341.7L136.7 343.2L137.6 344.8L138.5 346.3L138.7 346.7L139.5 347.8L140.5 349.4L141.6 350.9L141.8 351.1L142.8 352.4L143.9 353.9L144.9 355.1L145.2 355.5L146.5 357L147.8 358.5L148 358.7L149.2 360L150.7 361.6L151 361.9L152.2 363.1L153.8 364.6L154.1 365L155.4 366.2L157.1 367.7L157.2 367.8L158.9 369.2L160.3 370.4L160.7 370.7L162.6 372.3L163.3 372.8L164.6 373.8L166.4 375.1L166.7 375.3L168.8 376.8L169.5 377.3L171.1 378.4L172.6 379.4L173.4 379.9L175.6 381.3L175.8 381.4L178.3 383zM393.9 384.5L397 384.5L400.1 384.5L403.1 384.5L404.3 384.5L406.2 383.3L406.7 383L408.9 381.4L409.3 381.2L411 379.9L412.4 378.9L412.4 378.4L412.4 376.8L412.4 375.3L412.4 373.8L412.4 372.3L412.4 370.7L412.4 370.3L411.9 370.7L410.1 372.3L409.3 372.9L408.3 373.8L406.3 375.3L406.2 375.4L404.3 376.8L403.1 377.7L402.1 378.4L400.1 379.8L399.9 379.9L397.5 381.4L397 381.7L395 383L393.9 383.6L392.4 384.5zM412.4 272.5L412.4 271.5L412.4 269.9L412.4 268.4L412.4 266.9L412.4 265.4L412.4 263.9L412.2 263.8L410.3 262.3L409.3 261.5L408.4 260.8L406.4 259.2L406.2 259.1L404.2 257.7L403.1 257L402 256.2L400.1 254.9L399.7 254.7L397.3 253.1L397 252.9L394.9 251.6L393.9 251L392.3 250.1L390.8 249.3L389.6 248.6L387.8 247.6L386.7 247L384.7 246L383.8 245.5L381.6 244.4L380.7 244L378.5 243L377.4 242.4L375.5 241.6L374 240.9L372.4 240.2L370.4 239.4L369.3 238.9L366.6 237.9L366.2 237.7L363.2 236.6L362.5 236.3L360.1 235.5L358.2 234.8L357 234.4L354 233.4L353.6 233.3L350.9 233.3L347.8 233.3L344.7 233.3L341.7 233.3L338.6 233.3L335.5 233.3L334.4 233.3L335.5 233.5L338.6 234.3L340.4 234.8L341.7 235.1L344.7 236L345.9 236.3L347.8 236.9L350.8 237.9L350.9 237.9L354 238.9L355.4 239.4L357 240L359.6 240.9L360.1 241.1L363.2 242.3L363.6 242.4L366.2 243.5L367.4 244L369.3 244.8L370.9 245.5L372.4 246.2L374.2 247L375.5 247.6L377.4 248.6L378.5 249.1L380.4 250.1L381.6 250.7L383.3 251.6L384.7 252.4L386 253.1L387.8 254.1L388.7 254.7L390.8 256L391.2 256.2L393.6 257.7L393.9 257.9L395.9 259.2L397 260L398.1 260.8L400.1 262.2L400.2 262.3L402.2 263.8L403.1 264.5L404.2 265.4L406.1 266.9L406.2 267L407.9 268.4L409.3 269.7L409.6 269.9L411.2 271.5z" clip-path="url(#p754749531e)" style="fill: #338a8d; stroke: #338a8d; stroke-width: 1"/><path d="M169.5 384L170.2 384.5L172.6 384.5L175.6 384.5L178.7 384.5L181 384.5L178.7 383.2L178.3 383L175.8 381.4L175.6 381.3L173.4 379.9L172.6 379.4L171.1 378.4L169.5 377.3L168.8 376.8L166.7 375.3L166.4 375.1L164.6 373.8L163.3 372.8L162.6 372.3L160.7 370.7L160.3 370.4L158.9 369.2L157.2 367.8L157.1 367.7L155.4 366.2L154.1 365L153.8 364.6L152.2 363.1L151 361.9L150.7 361.6L149.2 360L148 358.7L147.8 358.5L146.5 357L145.2 355.5L144.9 355.1L143.9 353.9L142.8 352.4L141.8 351.1L141.6 350.9L140.5 349.4L139.5 347.8L138.7 346.7L138.5 346.3L137.6 344.8L136.7 343.2L135.8 341.7L135.7 341.4L135 340.2L134.3 338.7L133.6 337.1L132.9 335.6L132.6 334.9L132.2 334.1L131.7 332.6L131.1 331L130.6 329.5L130.2 328L129.7 326.4L129.5 325.6L129.4 324.9L129 323.4L128.7 321.9L128.5 320.3L128.3 318.8L128.1 317.3L128 315.8L127.9 314.2L127.8 312.7L127.8 311.2L127.8 309.6L127.9 308.1L128 306.6L128.2 305.1L128.4 303.5L128.6 302L128.9 300.5L129.2 299L129.5 297.6L129.6 297.4L130 295.9L130.4 294.4L130.9 292.8L131.5 291.3L132 289.8L132.6 288.4L132.7 288.3L133.4 286.7L134.1 285.2L134.9 283.7L135.7 282.2L135.7 282.2L136.6 280.6L137.5 279.1L138.5 277.6L138.7 277.1L139.5 276L140.6 274.5L141.7 273L141.8 272.9L142.9 271.5L144.2 269.9L144.9 269.1L145.5 268.4L146.9 266.9L148 265.8L148.4 265.4L149.9 263.8L151 262.7L151.5 262.3L153.1 260.8L154.1 259.9L154.9 259.2L156.7 257.7L157.2 257.3L158.6 256.2L160.3 254.9L160.6 254.7L162.7 253.1L163.3 252.7L164.9 251.6L166.4 250.6L167.2 250.1L169.5 248.6L169.6 248.6L172.2 247L172.6 246.8L174.8 245.5L175.6 245L177.6 244L178.7 243.4L180.6 242.4L181.8 241.8L183.7 240.9L184.9 240.4L187 239.4L187.9 239L190.6 237.9L191 237.7L194.1 236.4L194.3 236.3L197.2 235.2L198.3 234.8L200.2 234.1L202.7 233.3L200.2 233.3L197.2 233.3L194.1 233.3L191 233.3L187.9 233.3L187.5 233.3L184.9 234.4L183.9 234.8L181.8 235.7L180.4 236.3L178.7 237.1L177.2 237.9L175.6 238.6L174.2 239.4L172.6 240.2L171.3 240.9L169.5 241.9L168.5 242.4L166.4 243.6L165.9 244L163.4 245.5L163.3 245.5L161 247L160.3 247.5L158.7 248.6L157.2 249.6L156.5 250.1L154.4 251.6L154.1 251.8L152.4 253.1L151 254.2L150.5 254.7L148.7 256.2L148 256.8L146.9 257.7L145.2 259.2L144.9 259.5L143.6 260.8L142.1 262.3L141.8 262.5L140.6 263.8L139.2 265.4L138.7 265.8L137.8 266.9L136.5 268.4L135.7 269.5L135.3 269.9L134.1 271.5L133 273L132.6 273.5L131.9 274.5L130.9 276L129.9 277.6L129.5 278.3L129 279.1L128.2 280.6L127.3 282.2L126.6 283.7L126.4 283.9L125.8 285.2L125.2 286.7L124.5 288.3L123.9 289.8L123.4 291.3L123.4 291.3L122.9 292.8L122.4 294.4L122 295.9L121.6 297.4L121.3 299L121 300.5L120.7 302L120.5 303.5L120.3 305.1L120.3 305.1L120.2 306.6L120.1 308.1L120 309.6L120 311.2L120 312.7L120.1 314.2L120.2 315.8L120.3 317.3L120.3 317.4L120.5 318.8L120.7 320.3L120.9 321.9L121.2 323.4L121.5 324.9L121.9 326.4L122.3 328L122.8 329.5L123.2 331L123.4 331.4L123.8 332.6L124.3 334.1L124.9 335.6L125.6 337.1L126.3 338.7L126.4 339L127 340.2L127.8 341.7L128.6 343.2L129.4 344.8L129.5 344.9L130.3 346.3L131.3 347.8L132.3 349.4L132.6 349.8L133.3 350.9L134.4 352.4L135.5 353.9L135.7 354.1L136.7 355.5L137.9 357L138.7 358L139.2 358.5L140.5 360L141.8 361.5L141.9 361.6L143.4 363.1L144.8 364.6L144.9 364.7L146.4 366.2L148 367.7L148 367.7L149.7 369.2L151 370.4L151.4 370.7L153.2 372.3L154.1 373L155 373.8L157 375.3L157.2 375.5L159 376.8L160.3 377.8L161 378.4L163.2 379.9L163.3 380L165.4 381.4L166.4 382.1L167.8 383zM406.2 384.5L409.3 384.5L412.4 384.5L412.4 383L412.4 381.4L412.4 379.9L412.4 378.9L411 379.9L409.3 381.2L408.9 381.4L406.7 383L406.2 383.3L404.3 384.5zM412.4 263.9L412.4 263.8L412.4 262.3L412.4 260.8L412.4 259.2L412.4 257.7L412.4 256.5L412 256.2L409.9 254.7L409.3 254.3L407.7 253.1L406.2 252.2L405.4 251.6L403.1 250.2L403 250.1L400.5 248.6L400.1 248.3L397.9 247L397 246.5L395.2 245.5L393.9 244.8L392.4 244L390.8 243.1L389.5 242.4L387.8 241.6L386.5 240.9L384.7 240.1L383.3 239.4L381.6 238.6L379.9 237.9L378.5 237.3L376.4 236.3L375.5 235.9L372.7 234.8L372.4 234.7L369.3 233.5L368.8 233.3L366.2 233.3L363.2 233.3L360.1 233.3L357 233.3L354 233.3L353.6 233.3L354 233.4L357 234.4L358.2 234.8L360.1 235.5L362.5 236.3L363.2 236.6L366.2 237.7L366.6 237.9L369.3 238.9L370.4 239.4L372.4 240.2L374 240.9L375.5 241.6L377.4 242.4L378.5 243L380.7 244L381.6 244.4L383.8 245.5L384.7 246L386.7 247L387.8 247.6L389.6 248.6L390.8 249.3L392.3 250.1L393.9 251L394.9 251.6L397 252.9L397.3 253.1L399.7 254.7L400.1 254.9L402 256.2L403.1 257L404.2 257.7L406.2 259.1L406.4 259.2L408.4 260.8L409.3 261.5L410.3 262.3L412.2 263.8z" clip-path="url(#p754749531e)" style="fill: #30968b; stroke: #30968b; stroke-width: 1"/><path d="M160.3 384.5L163.3 384.5L166.4 384.5L169.5 384.5L170.2 384.5L169.5 384L167.8 383L166.4 382.1L165.4 381.4L163.3 380L163.2 379.9L161 378.4L160.3 377.8L159 376.8L157.2 375.5L157 375.3L155 373.8L154.1 373L153.2 372.3L151.4 370.7L151 370.4L149.7 369.2L148 367.7L148 367.7L146.4 366.2L144.9 364.7L144.8 364.6L143.4 363.1L141.9 361.6L141.8 361.5L140.5 360L139.2 358.5L138.7 358L137.9 357L136.7 355.5L135.7 354.1L135.5 353.9L134.4 352.4L133.3 350.9L132.6 349.8L132.3 349.4L131.3 347.8L130.3 346.3L129.5 344.9L129.4 344.8L128.6 343.2L127.8 341.7L127 340.2L126.4 339L126.3 338.7L125.6 337.1L124.9 335.6L124.3 334.1L123.8 332.6L123.4 331.4L123.2 331L122.8 329.5L122.3 328L121.9 326.4L121.5 324.9L121.2 323.4L120.9 321.9L120.7 320.3L120.5 318.8L120.3 317.4L120.3 317.3L120.2 315.8L120.1 314.2L120 312.7L120 311.2L120 309.6L120.1 308.1L120.2 306.6L120.3 305.1L120.3 305.1L120.5 303.5L120.7 302L121 300.5L121.3 299L121.6 297.4L122 295.9L122.4 294.4L122.9 292.8L123.4 291.3L123.4 291.3L123.9 289.8L124.5 288.3L125.2 286.7L125.8 285.2L126.4 283.9L126.6 283.7L127.3 282.2L128.2 280.6L129 279.1L129.5 278.3L129.9 277.6L130.9 276L131.9 274.5L132.6 273.5L133 273L134.1 271.5L135.3 269.9L135.7 269.5L136.5 268.4L137.8 266.9L138.7 265.8L139.2 265.4L140.6 263.8L141.8 262.5L142.1 262.3L143.6 260.8L144.9 259.5L145.2 259.2L146.9 257.7L148 256.8L148.7 256.2L150.5 254.7L151 254.2L152.4 253.1L154.1 251.8L154.4 251.6L156.5 250.1L157.2 249.6L158.7 248.6L160.3 247.5L161 247L163.3 245.5L163.4 245.5L165.9 244L166.4 243.6L168.5 242.4L169.5 241.9L171.3 240.9L172.6 240.2L174.2 239.4L175.6 238.6L177.2 237.9L178.7 237.1L180.4 236.3L181.8 235.7L183.9 234.8L184.9 234.4L187.5 233.3L184.9 233.3L181.8 233.3L178.7 233.3L175.6 233.3L174.5 233.3L172.6 234.2L171.3 234.8L169.5 235.7L168.3 236.3L166.4 237.3L165.4 237.9L163.3 239L162.7 239.4L160.3 240.8L160.1 240.9L157.6 242.4L157.2 242.7L155.2 244L154.1 244.7L152.9 245.5L151 246.8L150.8 247L148.7 248.6L148 249.1L146.7 250.1L144.9 251.5L144.7 251.6L142.9 253.1L141.8 254L141.1 254.7L139.4 256.2L138.7 256.8L137.8 257.7L136.2 259.2L135.7 259.8L134.7 260.8L133.2 262.3L132.6 263L131.9 263.8L130.5 265.4L129.5 266.6L129.3 266.9L128.1 268.4L126.9 269.9L126.4 270.6L125.8 271.5L124.7 273L123.7 274.5L123.4 275.1L122.8 276L121.9 277.6L121 279.1L120.3 280.4L120.2 280.6L119.4 282.2L118.7 283.7L118 285.2L117.4 286.7L117.2 287.1L116.8 288.3L116.2 289.8L115.7 291.3L115.2 292.8L114.8 294.4L114.4 295.9L114.1 296.8L114 297.4L113.7 299L113.4 300.5L113.2 302L113 303.5L112.8 305.1L112.7 306.6L112.6 308.1L112.5 309.6L112.5 311.2L112.6 312.7L112.6 314.2L112.7 315.8L112.8 317.3L113 318.8L113.2 320.3L113.5 321.9L113.7 323.4L114.1 324.9L114.1 325.3L114.4 326.4L114.8 328L115.3 329.5L115.7 331L116.2 332.6L116.8 334.1L117.2 335.2L117.4 335.6L118 337.1L118.7 338.7L119.4 340.2L120.1 341.7L120.3 342.1L120.9 343.2L121.7 344.8L122.6 346.3L123.4 347.7L123.5 347.8L124.4 349.4L125.4 350.9L126.4 352.4L126.5 352.4L127.5 353.9L128.7 355.5L129.5 356.6L129.8 357L131.1 358.5L132.3 360L132.6 360.4L133.6 361.6L135 363.1L135.7 363.8L136.4 364.6L137.9 366.2L138.7 367L139.4 367.7L141 369.2L141.8 370L142.6 370.7L144.3 372.3L144.9 372.8L146.1 373.8L147.9 375.3L148 375.4L149.8 376.8L151 377.8L151.7 378.4L153.8 379.9L154.1 380.2L155.9 381.4L157.2 382.4L158 383L160.3 384.5zM412.4 256.5L412.4 256.2L412.4 254.7L412.4 253.1L412.4 251.6L412.4 250.1L412.4 249.8L410.5 248.6L409.3 247.8L408.1 247L406.2 245.8L405.7 245.5L403.1 244L403.1 244L400.4 242.4L400.1 242.3L397.6 240.9L397 240.6L394.7 239.4L393.9 239L391.7 237.9L390.8 237.4L388.5 236.3L387.8 236L385.2 234.8L384.7 234.6L381.8 233.3L381.6 233.3L378.5 233.3L375.5 233.3L372.4 233.3L369.3 233.3L368.8 233.3L369.3 233.5L372.4 234.7L372.7 234.8L375.5 235.9L376.4 236.3L378.5 237.3L379.9 237.9L381.6 238.6L383.3 239.4L384.7 240.1L386.5 240.9L387.8 241.6L389.5 242.4L390.8 243.1L392.4 244L393.9 244.8L395.2 245.5L397 246.5L397.9 247L400.1 248.3L400.5 248.6L403 250.1L403.1 250.2L405.4 251.6L406.2 252.2L407.7 253.1L409.3 254.3L409.9 254.7L412 256.2z" clip-path="url(#p754749531e)" style="fill: #2fa387; stroke: #2fa387; stroke-width: 1"/><path d="M151 384.5L151 384.5L154.1 384.5L157.2 384.5L160.3 384.5L158 383L157.2 382.4L155.9 381.4L154.1 380.2L153.8 379.9L151.7 378.4L151 377.8L149.8 376.8L148 375.4L147.9 375.3L146.1 373.8L144.9 372.8L144.3 372.3L142.6 370.7L141.8 370L141 369.2L139.4 367.7L138.7 367L137.9 366.2L136.4 364.6L135.7 363.8L135 363.1L133.6 361.6L132.6 360.4L132.3 360L131.1 358.5L129.8 357L129.5 356.6L128.7 355.5L127.5 353.9L126.5 352.4L126.4 352.4L125.4 350.9L124.4 349.4L123.5 347.8L123.4 347.7L122.6 346.3L121.7 344.8L120.9 343.2L120.3 342.1L120.1 341.7L119.4 340.2L118.7 338.7L118 337.1L117.4 335.6L117.2 335.2L116.8 334.1L116.2 332.6L115.7 331L115.3 329.5L114.8 328L114.4 326.4L114.1 325.3L114.1 324.9L113.7 323.4L113.5 321.9L113.2 320.3L113 318.8L112.8 317.3L112.7 315.8L112.6 314.2L112.6 312.7L112.5 311.2L112.5 309.6L112.6 308.1L112.7 306.6L112.8 305.1L113 303.5L113.2 302L113.4 300.5L113.7 299L114 297.4L114.1 296.8L114.4 295.9L114.8 294.4L115.2 292.8L115.7 291.3L116.2 289.8L116.8 288.3L117.2 287.1L117.4 286.7L118 285.2L118.7 283.7L119.4 282.2L120.2 280.6L120.3 280.4L121 279.1L121.9 277.6L122.8 276L123.4 275.1L123.7 274.5L124.7 273L125.8 271.5L126.4 270.6L126.9 269.9L128.1 268.4L129.3 266.9L129.5 266.6L130.5 265.4L131.9 263.8L132.6 263L133.2 262.3L134.7 260.8L135.7 259.8L136.2 259.2L137.8 257.7L138.7 256.8L139.4 256.2L141.1 254.7L141.8 254L142.9 253.1L144.7 251.6L144.9 251.5L146.7 250.1L148 249.1L148.7 248.6L150.8 247L151 246.8L152.9 245.5L154.1 244.7L155.2 244L157.2 242.7L157.6 242.4L160.1 240.9L160.3 240.8L162.7 239.4L163.3 239L165.4 237.9L166.4 237.3L168.3 236.3L169.5 235.7L171.3 234.8L172.6 234.2L174.5 233.3L172.6 233.3L169.5 233.3L166.4 233.3L163.3 233.3L162.9 233.3L160.3 234.7L160.1 234.8L157.4 236.3L157.2 236.4L154.8 237.9L154.1 238.3L152.3 239.4L151 240.2L149.9 240.9L148 242.2L147.6 242.4L145.4 244L144.9 244.3L143.3 245.5L141.8 246.6L141.3 247L139.3 248.6L138.7 249L137.5 250.1L135.7 251.6L135.7 251.6L134 253.1L132.6 254.4L132.3 254.7L130.7 256.2L129.5 257.4L129.2 257.7L127.7 259.2L126.4 260.6L126.3 260.8L124.9 262.3L123.6 263.8L123.4 264.1L122.4 265.4L121.2 266.9L120.3 268.1L120 268.4L118.9 269.9L117.9 271.5L117.2 272.5L116.9 273L116 274.5L115 276L114.2 277.6L114.1 277.6L113.4 279.1L112.6 280.6L111.9 282.2L111.2 283.7L111.1 283.9L110.5 285.2L109.9 286.7L109.3 288.3L108.8 289.8L108.3 291.3L108 292.4L108 292.8L108 294.4L108 295.9L108 297.4L108 299L108 300.5L108 302L108 303.5L108 305.1L108 306.6L108 308.1L108 309.6L108 311.2L108 312.7L108 314.2L108 315.8L108 317.3L108 318.8L108 320.3L108 321.9L108 323.4L108 324.9L108 326.4L108 328L108 329.3L108.1 329.5L108.5 331L109 332.6L109.6 334.1L110.1 335.6L110.7 337.1L111.1 338L111.4 338.7L112 340.2L112.8 341.7L113.5 343.2L114.1 344.5L114.3 344.8L115.2 346.3L116 347.8L116.9 349.4L117.2 349.8L117.9 350.9L118.9 352.4L119.9 353.9L120.3 354.5L121 355.5L122.1 357L123.3 358.5L123.4 358.6L124.5 360L125.8 361.6L126.4 362.4L127.1 363.1L128.4 364.6L129.5 365.8L129.9 366.2L131.3 367.7L132.6 369L132.8 369.2L134.4 370.7L135.7 372L136 372.3L137.7 373.8L138.7 374.8L139.4 375.3L141.2 376.8L141.8 377.4L143 378.4L144.9 379.9L144.9 379.9L146.9 381.4L148 382.2L148.9 383zM412.4 249.8L412.4 248.6L412.4 247L412.4 245.5L412.4 244L412.4 243.6L410.4 242.4L409.3 241.8L407.8 240.9L406.2 240L405.1 239.4L403.1 238.3L402.4 237.9L400.1 236.6L399.5 236.3L397 235.1L396.5 234.8L393.9 233.6L393.3 233.3L390.8 233.3L387.8 233.3L384.7 233.3L381.8 233.3L384.7 234.6L385.2 234.8L387.8 236L388.5 236.3L390.8 237.4L391.7 237.9L393.9 239L394.7 239.4L397 240.6L397.6 240.9L400.1 242.3L400.4 242.4L403.1 244L403.1 244L405.7 245.5L406.2 245.8L408.1 247L409.3 247.8L410.5 248.6z" clip-path="url(#p754749531e)" style="fill: #33af80; stroke: #33af80; stroke-width: 1"/><path d="M141.8 384L142.4 384.5L144.9 384.5L148 384.5L151 384.5L151 384.5L151 384.5L148.9 383L148 382.2L146.9 381.4L144.9 379.9L144.9 379.9L143 378.4L141.8 377.4L141.2 376.8L139.4 375.3L138.7 374.8L137.7 373.8L136 372.3L135.7 372L134.4 370.7L132.8 369.2L132.6 369L131.3 367.7L129.9 366.2L129.5 365.8L128.4 364.6L127.1 363.1L126.4 362.4L125.8 361.6L124.5 360L123.4 358.6L123.3 358.5L122.1 357L121 355.5L120.3 354.5L119.9 353.9L118.9 352.4L117.9 350.9L117.2 349.8L116.9 349.4L116 347.8L115.2 346.3L114.3 344.8L114.1 344.5L113.5 343.2L112.8 341.7L112 340.2L111.4 338.7L111.1 338L110.7 337.1L110.1 335.6L109.6 334.1L109 332.6L108.5 331L108.1 329.5L108 329.3L108 329.5L108 331L108 332.6L108 334.1L108 335.6L108 337.1L108 338.7L108 340.2L108 341.7L108 343.2L108 344.8L108 346.3L108 346.3L108.9 347.8L109.8 349.4L110.7 350.9L111.1 351.5L111.6 352.4L112.7 353.9L113.7 355.5L114.1 356.1L114.8 357L115.9 358.5L117.1 360L117.2 360.2L118.3 361.6L119.5 363.1L120.3 364L120.8 364.6L122.2 366.2L123.4 367.5L123.6 367.7L125 369.2L126.4 370.7L126.5 370.7L128.1 372.3L129.5 373.7L129.7 373.8L131.3 375.3L132.6 376.5L133 376.8L134.8 378.4L135.7 379.1L136.6 379.9L138.5 381.4L138.7 381.7L140.4 383zM108.3 291.3L108.8 289.8L109.3 288.3L109.9 286.7L110.5 285.2L111.1 283.9L111.2 283.7L111.9 282.2L112.6 280.6L113.4 279.1L114.1 277.6L114.2 277.6L115 276L116 274.5L116.9 273L117.2 272.5L117.9 271.5L118.9 269.9L120 268.4L120.3 268.1L121.2 266.9L122.4 265.4L123.4 264.1L123.6 263.8L124.9 262.3L126.3 260.8L126.4 260.6L127.7 259.2L129.2 257.7L129.5 257.4L130.7 256.2L132.3 254.7L132.6 254.4L134 253.1L135.7 251.6L135.7 251.6L137.5 250.1L138.7 249L139.3 248.6L141.3 247L141.8 246.6L143.3 245.5L144.9 244.3L145.4 244L147.6 242.4L148 242.2L149.9 240.9L151 240.2L152.3 239.4L154.1 238.3L154.8 237.9L157.2 236.4L157.4 236.3L160.1 234.8L160.3 234.7L162.9 233.3L160.3 233.3L157.2 233.3L154.1 233.3L152.5 233.3L151 234.1L149.9 234.8L148 236L147.4 236.3L145 237.9L144.9 237.9L142.7 239.4L141.8 240L140.5 240.9L138.7 242.1L138.3 242.4L136.3 244L135.7 244.4L134.3 245.5L132.6 246.9L132.4 247L130.6 248.6L129.5 249.5L128.9 250.1L127.2 251.6L126.4 252.3L125.6 253.1L124 254.7L123.4 255.3L122.5 256.2L121 257.7L120.3 258.5L119.7 259.2L118.3 260.8L117.2 262.1L117 262.3L115.8 263.8L114.6 265.4L114.1 266L113.5 266.9L112.4 268.4L111.4 269.9L111.1 270.4L110.4 271.5L109.4 273L108.5 274.5L108 275.4L108 276L108 277.6L108 279.1L108 280.6L108 282.2L108 283.7L108 285.2L108 286.7L108 288.3L108 289.8L108 291.3L108 292.4zM412.4 243.6L412.4 242.4L412.4 240.9L412.4 239.4L412.4 238L412.2 237.9L409.5 236.3L409.3 236.2L406.7 234.8L406.2 234.5L403.8 233.3L403.1 233.3L400.1 233.3L397 233.3L393.9 233.3L393.3 233.3L393.9 233.6L396.5 234.8L397 235.1L399.5 236.3L400.1 236.6L402.4 237.9L403.1 238.3L405.1 239.4L406.2 240L407.8 240.9L409.3 241.8L410.4 242.4z" clip-path="url(#p754749531e)" style="fill: #3ebb77; stroke: #3ebb77; stroke-width: 1"/><path d="M132.6 383.2L134.2 384.5L135.7 384.5L138.7 384.5L141.8 384.5L142.4 384.5L141.8 384L140.4 383L138.7 381.7L138.5 381.4L136.6 379.9L135.7 379.1L134.8 378.4L133 376.8L132.6 376.5L131.3 375.3L129.7 373.8L129.5 373.7L128.1 372.3L126.5 370.7L126.4 370.7L125 369.2L123.6 367.7L123.4 367.5L122.2 366.2L120.8 364.6L120.3 364L119.5 363.1L118.3 361.6L117.2 360.2L117.1 360L115.9 358.5L114.8 357L114.1 356.1L113.7 355.5L112.7 353.9L111.6 352.4L111.1 351.5L110.7 350.9L109.8 349.4L108.9 347.8L108 346.3L108 346.3L108 346.3L108 347.8L108 349.4L108 350.9L108 352.4L108 353.9L108 355.5L108 357L108 357.4L108.8 358.5L109.9 360L111.1 361.5L111.1 361.6L112.3 363.1L113.6 364.6L114.1 365.3L114.9 366.2L116.2 367.7L117.2 368.8L117.6 369.2L119 370.7L120.3 372L120.5 372.3L122 373.8L123.4 375.1L123.6 375.3L125.2 376.8L126.4 377.9L126.9 378.4L128.7 379.9L129.5 380.6L130.5 381.4L132.3 383zM108.5 274.5L109.4 273L110.4 271.5L111.1 270.4L111.4 269.9L112.4 268.4L113.5 266.9L114.1 266L114.6 265.4L115.8 263.8L117 262.3L117.2 262.1L118.3 260.8L119.7 259.2L120.3 258.5L121 257.7L122.5 256.2L123.4 255.3L124 254.7L125.6 253.1L126.4 252.3L127.2 251.6L128.9 250.1L129.5 249.5L130.6 248.6L132.4 247L132.6 246.9L134.3 245.5L135.7 244.4L136.3 244L138.3 242.4L138.7 242.1L140.5 240.9L141.8 240L142.7 239.4L144.9 237.9L145 237.9L147.4 236.3L148 236L149.9 234.8L151 234.1L152.5 233.3L151 233.3L148 233.3L144.9 233.3L142.8 233.3L141.8 233.9L140.4 234.8L138.7 235.9L138 236.3L135.8 237.9L135.7 238L133.7 239.4L132.6 240.2L131.6 240.9L129.6 242.4L129.5 242.5L127.7 244L126.4 245L125.9 245.5L124.1 247L123.4 247.6L122.4 248.6L120.7 250.1L120.3 250.5L119.1 251.6L117.6 253.1L117.2 253.5L116.1 254.7L114.7 256.2L114.1 256.8L113.3 257.7L112 259.2L111.1 260.3L110.7 260.8L109.5 262.3L108.3 263.8L108 264.3L108 265.4L108 266.9L108 268.4L108 269.9L108 271.5L108 273L108 274.5L108 275.4zM412.4 238L412.4 237.9L412.4 236.3L412.4 234.8L412.4 233.3L409.3 233.3L406.2 233.3L403.8 233.3L406.2 234.5L406.7 234.8L409.3 236.2L409.5 236.3L412.2 237.9z" clip-path="url(#p754749531e)" style="fill: #52c66a; stroke: #52c66a; stroke-width: 1"/><path d="M126.4 384.5L129.5 384.5L132.6 384.5L134.2 384.5L132.6 383.2L132.3 383L130.5 381.4L129.5 380.6L128.7 379.9L126.9 378.4L126.4 377.9L125.2 376.8L123.6 375.3L123.4 375.1L122 373.8L120.5 372.3L120.3 372L119 370.7L117.6 369.2L117.2 368.8L116.2 367.7L114.9 366.2L114.1 365.3L113.6 364.6L112.3 363.1L111.1 361.6L111.1 361.5L109.9 360L108.8 358.5L108 357.4L108 358.5L108 360L108 361.6L108 363.1L108 364.6L108 366.2L108 366.4L109.1 367.7L110.5 369.2L111.1 369.9L111.8 370.7L113.3 372.3L114.1 373.2L114.7 373.8L116.3 375.3L117.2 376.3L117.8 376.8L119.5 378.4L120.3 379.2L121.1 379.9L122.8 381.4L123.4 381.9L124.6 383L126.4 384.5zM108.3 263.8L109.5 262.3L110.7 260.8L111.1 260.3L112 259.2L113.3 257.7L114.1 256.8L114.7 256.2L116.1 254.7L117.2 253.5L117.6 253.1L119.1 251.6L120.3 250.5L120.7 250.1L122.4 248.6L123.4 247.6L124.1 247L125.9 245.5L126.4 245L127.7 244L129.5 242.5L129.6 242.4L131.6 240.9L132.6 240.2L133.7 239.4L135.7 238L135.8 237.9L138 236.3L138.7 235.9L140.4 234.8L141.8 233.9L142.8 233.3L141.8 233.3L138.7 233.3L135.7 233.3L133.7 233.3L132.6 234.1L131.5 234.8L129.5 236.2L129.3 236.3L127.2 237.9L126.4 238.5L125.2 239.4L123.4 240.8L123.3 240.9L121.4 242.4L120.3 243.4L119.6 244L117.8 245.5L117.2 246L116.2 247L114.5 248.6L114.1 248.9L113 250.1L111.4 251.6L111.1 252L110 253.1L108.6 254.7L108 255.3L108 256.2L108 257.7L108 259.2L108 260.8L108 262.3L108 263.8L108 264.3z" clip-path="url(#p754749531e)" style="fill: #6bcf5a; stroke: #6bcf5a; stroke-width: 1"/><path d="M120.3 384.5L123.4 384.5L126.4 384.5L124.6 383L123.4 381.9L122.8 381.4L121.1 379.9L120.3 379.2L119.5 378.4L117.8 376.8L117.2 376.3L116.3 375.3L114.7 373.8L114.1 373.2L113.3 372.3L111.8 370.7L111.1 369.9L110.5 369.2L109.1 367.7L108 366.4L108 367.7L108 369.2L108 370.7L108 372.3L108 373.8L108 374.1L109.2 375.3L110.7 376.8L111.1 377.2L112.3 378.4L113.9 379.9L114.1 380.1L115.5 381.4L117.2 382.9L117.2 383L119 384.5zM108.6 254.7L110 253.1L111.1 252L111.4 251.6L113 250.1L114.1 248.9L114.5 248.6L116.2 247L117.2 246L117.8 245.5L119.6 244L120.3 243.4L121.4 242.4L123.3 240.9L123.4 240.8L125.2 239.4L126.4 238.5L127.2 237.9L129.3 236.3L129.5 236.2L131.5 234.8L132.6 234.1L133.7 233.3L132.6 233.3L129.5 233.3L126.4 233.3L125.2 233.3L123.4 234.6L123.1 234.8L121.1 236.3L120.3 236.9L119.1 237.9L117.2 239.4L117.2 239.4L115.4 240.9L114.1 241.9L113.6 242.4L111.9 244L111.1 244.7L110.2 245.5L108.6 247L108 247.6L108 248.6L108 250.1L108 251.6L108 253.1L108 254.7L108 255.3z" clip-path="url(#p754749531e)" style="fill: #88d946; stroke: #88d946; stroke-width: 1"/><path d="M111.1 383.8L111.9 384.5L114.1 384.5L117.2 384.5L119 384.5L117.2 383L117.2 382.9L115.5 381.4L114.1 380.1L113.9 379.9L112.3 378.4L111.1 377.2L110.7 376.8L109.2 375.3L108 374.1L108 375.3L108 376.8L108 378.4L108 379.9L108 380.9L108.5 381.4L110.2 383zM108.6 247L110.2 245.5L111.1 244.7L111.9 244L113.6 242.4L114.1 241.9L115.4 240.9L117.2 239.4L117.2 239.4L119.1 237.9L120.3 236.9L121.1 236.3L123.1 234.8L123.4 234.6L125.2 233.3L123.4 233.3L120.3 233.3L117.2 233.3L117.2 233.3L115.2 234.8L114.1 235.6L113.2 236.3L111.4 237.9L111.1 238.1L109.6 239.4L108 240.7L108 240.9L108 242.4L108 244L108 245.5L108 247L108 247.6z" clip-path="url(#p754749531e)" style="fill: #a8df30; stroke: #a8df30; stroke-width: 1"/><path d="M111.1 384.5L111.9 384.5L111.1 383.8L110.2 383L108.5 381.4L108 380.9L108 381.4L108 383L108 384.5zM109.6 239.4L111.1 238.1L111.4 237.9L113.2 236.3L114.1 235.6L115.2 234.8L117.2 233.3L114.1 233.3L111.1 233.3L109.5 233.3L108 234.5L108 234.8L108 236.3L108 237.9L108 239.4L108 240.7z" clip-path="url(#p754749531e)" style="fill: #c7e41d; stroke: #c7e41d; stroke-width: 1"/><path d="M109.5 233.3L108 233.3L108 234.5z" clip-path="url(#p754749531e)" style="fill: #e8e81c; stroke: #e8e81c; stroke-width: 1"/></g><g><defs><path id="mefebf7f937" d="M0 2.5C0.7 2.5 1.3 2.2 1.8 1.8C2.2 1.3 2.5 0.7 2.5 0C2.5 -0.7 2.2 -1.3 1.8 -1.8C1.3 -2.2 0.7 -2.5 0 -2.5C-0.7 -2.5 -1.3 -2.2 -1.8 -1.8C-2.2 -1.3 -2.5 -0.7 -2.5 0C-2.5 0.7 -2.2 1.3 -1.8 1.8C-1.3 2.2 -0.7 2.5 0 2.5z" style="stroke: #000000"/></defs><g clip-path="url(#p754749531e)"><use href="#mefebf7f937" x="281.9" y="320.8" style="stroke: #000000"/></g></g><g><g><g><g><use href="#maeb5e95414" x="108" y="384.5" style="stroke: #000000; stroke-width: 0.72"/></g></g><g><!-- −20 --><g transform="translate(97.447656 399.078438) scale(0.1 -0.1)"><use href="#DejaVuSans-2212"/><use href="#DejaVuSans-32" transform="translate(83.789062 0)"/><use href="#DejaVuSans-30" transform="translate(147.412109 0)"/></g></g></g><g><g><g><use href="#maeb5e95414" x="168.9" y="384.5" style="stroke: #000000; stroke-width: 0.72"/></g></g><g><!-- 0 --><g transform="translate(165.691477 399.078438) scale(0.1 -0.1)"><use href="#DejaVuSans-30"/></g></g></g><g><g><g><use href="#maeb5e95414" x="229.7" y="384.5" style="stroke: #000000; stroke-width: 0.72"/></g></g><g><!-- 20 --><g transform="translate(223.382955 399.078438) scale(0.1 -0.1)"><use href="#DejaVuSans-32"/><use href="#DejaVuSans-30" transform="translate(63.623047 0)"/></g></g></g><g><g><g><use href="#maeb5e95414" x="290.6" y="384.5" style="stroke: #000000; stroke-width: 0.72"/></g></g><g><!-- 40 --><g transform="translate(284.255682 399.078438) scale(0.1 -0.1)"><defs><path id="DejaVuSans-34" d="M2419 4116L825 1625L2419 1625L2419 4116zM2253 4666L3047 4666L3047 1625L3713 1625L3713 1100L3047 1100L3047 0L2419 0L2419 1100L313 1100L313 1709L2253 4666z" transform="scale(0.015625)"/></defs><use href="#DejaVuSans-34"/><use href="#DejaVuSans-30" transform="translate(63.623047 0)"/></g></g></g><g><g><g><use href="#maeb5e95414" x="351.5" y="384.5" style="stroke: #000000; stroke-width: 0.72"/></g></g><g><!-- 60 --><g transform="translate(345.128409 399.078438) scale(0.1 -0.1)"><defs><path id="DejaVuSans-36" d="M2113 2584Q1688 2584 1439 2293Q1191 2003 1191 1497Q1191 994 1439 701Q1688 409 2113 409Q2538 409 2786 701Q3034 994 3034 1497Q3034 2003 2786 2293Q2538 2584 2113 2584zM3366 4563L3366 3988Q3128 4100 2886 4159Q2644 4219 2406 4219Q1781 4219 1451 3797Q1122 3375 1075 2522Q1259 2794 1537 2939Q1816 3084 2150 3084Q2853 3084 3261 2657Q3669 2231 3669 1497Q3669 778 3244 343Q2819 -91 2113 -91Q1303 -91 875 529Q447 1150 447 2328Q447 3434 972 4092Q1497 4750 2381 4750Q2619 4750 2861 4703Q3103 4656 3366 4563z" transform="scale(0.015625)"/></defs><use href="#DejaVuSans-36"/><use href="#DejaVuSans-30" transform="translate(63.623047 0)"/></g></g></g><g><g><g><use href="#maeb5e95414" x="412.4" y="384.5" style="stroke: #000000; stroke-width: 0.72"/></g></g><g><!-- 80 --><g transform="translate(406.001136 399.078438) scale(0.1 -0.1)"><use href="#DejaVuSans-38"/><use href="#DejaVuSans-30" transform="translate(63.623047 0)"/></g></g></g></g><g><g><g><g><use href="#m084f3fd2f2" x="108" y="384.5" style="stroke: #000000; stroke-width: 0.72"/></g></g><g><!-- −20 --><g transform="translate(79.895313 388.279219) scale(0.1 -0.1)"><use href="#DejaVuSans-2212"/><use href="#DejaVuSans-32" transform="translate(83.789062 0)"/><use href="#DejaVuSans-30" transform="translate(147.412109 0)"/></g></g></g><g><g><g><use href="#m084f3fd2f2" x="108" y="354.2" style="stroke: #000000; stroke-width: 0.72"/></g></g><g><!-- 0 --><g transform="translate(94.6375 358.039219) scale(0.1 -0.1)"><use href="#DejaVuSans-30"/></g></g></g><g><g><g><use href="#m084f3fd2f2" x="108" y="324" style="stroke: #000000; stroke-width: 0.72"/></g></g><g><!-- 20 --><g transform="translate(88.275 327.799219) scale(0.1 -0.1)"><use href="#DejaVuSans-32"/><use href="#DejaVuSans-30" transform="translate(63.623047 0)"/></g></g></g><g><g><g><use href="#m084f3fd2f2" x="108" y="293.8" style="stroke: #000000; stroke-width: 0.72"/></g></g><g><!-- 40 --><g transform="translate(88.275 297.559219) scale(0.1 -0.1)"><use href="#DejaVuSans-34"/><use href="#DejaVuSans-30" transform="translate(63.623047 0)"/></g></g></g><g><g><g><use href="#m084f3fd2f2" x="108" y="263.5" style="stroke: #000000; stroke-width: 0.72"/></g></g><g><!-- 60 --><g transform="translate(88.275 267.319219) scale(0.1 -0.1)"><use href="#DejaVuSans-36"/><use href="#DejaVuSans-30" transform="translate(63.623047 0)"/></g></g></g><g><g><g><use href="#m084f3fd2f2" x="108" y="233.3" style="stroke: #000000; stroke-width: 0.72"/></g></g><g><!-- 80 --><g transform="translate(88.275 237.079219) scale(0.1 -0.1)"><use href="#DejaVuSans-38"/><use href="#DejaVuSans-30" transform="translate(63.623047 0)"/></g></g></g></g><g><path d="M168.9 354.2L172.4 353.4L175.9 352.6L179.2 351.8L182.4 351L185.6 350.3L188.6 349.6L191.6 348.8L194.4 348.1L197.2 347.5L199.9 346.8L202.5 346.1L205.1 345.5L207.5 344.9L209.9 344.3L212.2 343.7L214.5 343.1L216.6 342.5L218.8 341.9L220.8 341.4L222.8 340.9L224.7 340.3L226.6 339.8L228.4 339.3L230.2 338.8L231.9 338.4L233.5 337.9L235.1 337.5L236.7 337L238.2 336.6L239.6 336.2L241.1 335.7L242.4 335.3L243.8 334.9L245.1 334.5L246.3 334.2L247.5 333.8L248.7 333.4L249.9 333.1L251 332.7L252.1 332.4L253.1 332.1L254.1 331.7L255.1 331.4L256 331.1L257 330.8L257.9 330.5L258.7 330.2L259.6 329.9L260.4 329.7L261.2 329.4L262 329.1L262.7 328.9L263.4 328.6L264.1 328.4L264.8 328.1L265.5 327.9L266.1 327.7L266.7 327.4L267.3 327.2L267.9 327L268.5 326.8L269 326.6L269.5 326.4L270.1 326.2L270.6 326L271 325.8L271.5 325.6L272 325.4L272.4 325.2L272.8 325.1L273.2 324.9L273.6 324.7L274 324.6L274.4 324.4L274.8 324.3L275.1 324.1L275.5 324L275.8 323.8L276.1 323.7L276.4 323.5L276.7 323.4L277 323.3L277.3 323.1L277.6 323L277.9 322.9L278.1 322.7L278.4 322.6L278.6 322.5L278.9 322.4L279.1 322.3L279.3 322.2L279.5 322.1L279.7 322L279.9 321.9L280.1 321.8L280.3 321.7L280.5 321.6L280.7 321.5L280.9 321.4L281 321.3L281.2 321.2L281.4 321.1L281.5 321L281.7 320.9L281.8 320.9L281.9 320.8" clip-path="url(#p754749531e)" style="fill: none; stroke: #3975b4; stroke-width: 1.5; stroke-linecap: square"/></g><g><path d="M108 384.5L108 233.3" style="fill: none; stroke: #000000; stroke-width: 0.72; stroke-linejoin: miter; stroke-linecap: square"/></g><g><path d="M412.4 384.5L412.4 233.3" style="fill: none; stroke: #000000; stroke-width: 0.72; stroke-linejoin: miter; stroke-linecap: square"/></g><g><path d="M108 384.5L412.4 384.5" style="fill: none; stroke: #000000; stroke-width: 0.72; stroke-linejoin: miter; stroke-linecap: square"/></g><g><path d="M108 233.3L412.4 233.3" style="fill: none; stroke: #000000; stroke-width: 0.72; stroke-linejoin: miter; stroke-linecap: square"/></g></g><g><path d="M473.2 370.3L777.6 370.3L777.6 66L473.2 66z" style="fill: #ffffff"/></g><g><g><path d="M496.2 295.3L596.7 211L595.3 89.5L490 166.4" style="fill: #f2f2f2; opacity: 0.5; stroke: #f2f2f2; stroke-linejoin: miter"/></g></g><g><g><path d="M596.7 211L758 257.9L763.8 132.2L595.3 89.5" style="fill: #e6e6e6; opacity: 0.5; stroke: #e6e6e6; stroke-linejoin: miter"/></g></g><g><g><path d="M496.2 295.3L667.2 351.1L758 257.9L596.7 211" style="fill: #ececec; opacity: 0.5; stroke: #ececec; stroke-linejoin: miter"/></g></g><g id="grid3d_1"><g><path d="M506.6 298.7L606.5 213.9L605.6 92.1" style="fill: none; stroke: #b0b0b0; stroke-width: 0.8"/><path d="M535.3 308.1L633.7 221.8L633.9 99.3" style="fill: none; stroke: #b0b0b0; stroke-width: 0.8"/><path d="M564.6 317.6L661.4 229.8L662.8 106.6" style="fill: none; stroke: #b0b0b0; stroke-width: 0.8"/><path d="M594.4 327.4L689.5 238L692.2 114.1" style="fill: none; stroke: #b0b0b0; stroke-width: 0.8"/><path d="M624.8 337.3L718.2 246.3L722.1 121.7" style="fill: none; stroke: #b0b0b0; stroke-width: 0.8"/><path d="M655.8 347.4L747.3 254.8L752.5 129.4" style="fill: none; stroke: #b0b0b0; stroke-width: 0.8"/></g></g><g id="grid3d_2"><g><path d="M497.3 161.1L503.1 289.5L673.5 344.7" style="fill: none; stroke: #b0b0b0; stroke-width: 0.8"/><path d="M516.8 146.8L521.7 273.9L690.3 327.4" style="fill: none; stroke: #b0b0b0; stroke-width: 0.8"/><path d="M535.8 133L539.8 258.8L706.7 310.6" style="fill: none; stroke: #b0b0b0; stroke-width: 0.8"/><path d="M554.1 119.6L557.3 244.1L722.5 294.4" style="fill: none; stroke: #b0b0b0; stroke-width: 0.8"/><path d="M571.9 106.6L574.3 229.8L737.8 278.6" style="fill: none; stroke: #b0b0b0; stroke-width: 0.8"/><path d="M589.2 94L590.8 216L752.7 263.4" style="fill: none; stroke: #b0b0b0; stroke-width: 0.8"/></g></g><g id="grid3d_3"><g><path d="M758.3 250.8L596.6 204.2L495.9 288" style="fill: none; stroke: #b0b0b0; stroke-width: 0.8"/><path d="M759 236.9L596.5 190.7L495.2 273.8" style="fill: none; stroke: #b0b0b0; stroke-width: 0.8"/><path d="M759.6 222.9L596.3 177.2L494.5 259.4" style="fill: none; stroke: #b0b0b0; stroke-width: 0.8"/><path d="M760.3 208.8L596.2 163.5L493.8 244.9" style="fill: none; stroke: #b0b0b0; stroke-width: 0.8"/><path d="M760.9 194.5L596 149.6L493.1 230.3" style="fill: none; stroke: #b0b0b0; stroke-width: 0.8"/><path d="M761.6 180L595.9 135.7L492.4 215.5" style="fill: none; stroke: #b0b0b0; stroke-width: 0.8"/><path d="M762.2 165.4L595.7 121.6L491.7 200.5" style="fill: none; stroke: #b0b0b0; stroke-width: 0.8"/><path d="M762.9 150.7L595.5 107.4L490.9 185.4" style="fill: none; stroke: #b0b0b0; stroke-width: 0.8"/><path d="M763.6 135.8L595.4 93L490.2 170.1" style="fill: none; stroke: #b0b0b0; stroke-width: 0.8"/></g></g><g><g><path d="M496.2 295.3L667.2 351.1" style="fill: none; stroke: #000000; stroke-width: 0.72; stroke-linecap: square"/></g><g><g><path d="M507.4 297.9L504.8 300.2" style="fill: none; stroke: #000000; stroke-width: 0.72; stroke-linecap: square"/></g><g><!-- −20 --><g transform="translate(488.494814 321.979182) scale(0.1 -0.1)"><use href="#DejaVuSans-2212"/><use href="#DejaVuSans-32" transform="translate(83.789062 0)"/><use href="#DejaVuSans-30" transform="translate(147.412109 0)"/></g></g></g><g><g><path d="M536.2 307.3L533.6 309.6" style="fill: none; stroke: #000000; stroke-width: 0.72; stroke-linecap: square"/></g><g><!-- 0 --><g transform="translate(524.645116 331.543875) scale(0.1 -0.1)"><use href="#DejaVuSans-30"/></g></g></g><g><g><path d="M565.5 316.9L562.9 319.2" style="fill: none; stroke: #000000; stroke-width: 0.72; stroke-linecap: square"/></g><g><!-- 20 --><g transform="translate(550.772108 341.284391) scale(0.1 -0.1)"><use href="#DejaVuSans-32"/><use href="#DejaVuSans-30" transform="translate(63.623047 0)"/></g></g></g><g><g><path d="M595.3 326.6L592.8 328.9" style="fill: none; stroke: #000000; stroke-width: 0.72; stroke-linecap: square"/></g><g><!-- 40 --><g transform="translate(580.624106 351.205623) scale(0.1 -0.1)"><use href="#DejaVuSans-34"/><use href="#DejaVuSans-30" transform="translate(63.623047 0)"/></g></g></g><g><g><path d="M625.6 336.5L623.2 338.9" style="fill: none; stroke: #000000; stroke-width: 0.72; stroke-linecap: square"/></g><g><!-- 60 --><g transform="translate(611.035134 361.312648) scale(0.1 -0.1)"><use href="#DejaVuSans-36"/><use href="#DejaVuSans-30" transform="translate(63.623047 0)"/></g></g></g><g><g><path d="M656.6 346.6L654.2 349" style="fill: none; stroke: #000000; stroke-width: 0.72; stroke-linecap: square"/></g><g><!-- 80 --><g transform="translate(642.021045 371.610732) scale(0.1 -0.1)"><use href="#DejaVuSans-38"/><use href="#DejaVuSans-30" transform="translate(63.623047 0)"/></g></g></g><g><!-- w --><g transform="translate(559.085213 360.473318) scale(0.1 -0.1)"><use href="#DejaVuSans-77"/></g></g></g><g><g><path d="M758 257.9L667.2 351.1" style="fill: none; stroke: #000000; stroke-width: 0.72; stroke-linecap: square"/></g><g><g><path d="M672 344.2L676.3 345.6" style="fill: none; stroke: #000000; stroke-width: 0.72; stroke-linecap: square"/></g><g><!-- −20 --><g transform="translate(675.798596 365.705274) scale(0.1 -0.1)"><use href="#DejaVuSans-2212"/><use href="#DejaVuSans-32" transform="translate(83.789062 0)"/><use href="#DejaVuSans-30" transform="translate(147.412109 0)"/></g></g></g><g><g><path d="M688.9 326.9L693.2 328.3" style="fill: none; stroke: #000000; stroke-width: 0.72; stroke-linecap: square"/></g><g><!-- 0 --><g transform="translate(699.832679 348.178114) scale(0.1 -0.1)"><use href="#DejaVuSans-30"/></g></g></g><g><g><path d="M705.3 310.2L709.5 311.5" style="fill: none; stroke: #000000; stroke-width: 0.72; stroke-linecap: square"/></g><g><!-- 20 --><g transform="translate(712.788879 331.203748) scale(0.1 -0.1)"><use href="#DejaVuSans-32"/><use href="#DejaVuSans-30" transform="translate(63.623047 0)"/></g></g></g><g><g><path d="M721.1 294L725.3 295.2" style="fill: none; stroke: #000000; stroke-width: 0.72; stroke-linecap: square"/></g><g><!-- 40 --><g transform="translate(728.425267 314.756431) scale(0.1 -0.1)"><use href="#DejaVuSans-34"/><use href="#DejaVuSans-30" transform="translate(63.623047 0)"/></g></g></g><g><g><path d="M736.4 278.2L740.6 279.5" style="fill: none; stroke: #000000; stroke-width: 0.72; stroke-linecap: square"/></g><g><!-- 60 --><g transform="translate(743.583572 298.81199) scale(0.1 -0.1)"><use href="#DejaVuSans-36"/><use href="#DejaVuSans-30" transform="translate(63.623047 0)"/></g></g></g><g><g><path d="M751.3 263L755.4 264.2" style="fill: none; stroke: #000000; stroke-width: 0.72; stroke-linecap: square"/></g><g><!-- 80 --><g transform="translate(758.28539 283.34771) scale(0.1 -0.1)"><use href="#DejaVuSans-38"/><use href="#DejaVuSans-30" transform="translate(63.623047 0)"/></g></g></g><g><!-- b --><g transform="translate(738.424938 333.208548) scale(0.1 -0.1)"><use href="#DejaVuSans-62"/></g></g></g><g><g><path d="M758 257.9L763.8 132.2" style="fill: none; stroke: #000000; stroke-width: 0.72; stroke-linecap: square"/></g><g><g><path d="M757 250.4L761.1 251.6" style="fill: none; stroke: #000000; stroke-width: 0.72; stroke-linecap: square"/></g><g><!-- 0 --><g transform="translate(773.457766 255.820636) scale(0.1 -0.1)"><use href="#DejaVuSans-30"/></g></g></g><g><g><path d="M757.6 236.5L761.7 237.7" style="fill: none; stroke: #000000; stroke-width: 0.72; stroke-linecap: square"/></g><g><!-- 2000 --><g transform="translate(764.637933 241.965999) scale(0.1 -0.1)"><use href="#DejaVuSans-32"/><use href="#DejaVuSans-30" transform="translate(63.623047 0)"/><use href="#DejaVuSans-30" transform="translate(127.246094 0)"/><use href="#DejaVuSans-30" transform="translate(190.869141 0)"/></g></g></g><g><g><path d="M758.2 222.5L762.4 223.7" style="fill: none; stroke: #000000; stroke-width: 0.72; stroke-linecap: square"/></g><g><!-- 4000 --><g transform="translate(765.369011 227.974331) scale(0.1 -0.1)"><use href="#DejaVuSans-34"/><use href="#DejaVuSans-30" transform="translate(63.623047 0)"/><use href="#DejaVuSans-30" transform="translate(127.246094 0)"/><use href="#DejaVuSans-30" transform="translate(190.869141 0)"/></g></g></g><g><g><path d="M758.9 208.4L763 209.5" style="fill: none; stroke: #000000; stroke-width: 0.72; stroke-linecap: square"/></g><g><!-- 6000 --><g transform="translate(766.107356 213.843587) scale(0.1 -0.1)"><use href="#DejaVuSans-36"/><use href="#DejaVuSans-30" transform="translate(63.623047 0)"/><use href="#DejaVuSans-30" transform="translate(127.246094 0)"/><use href="#DejaVuSans-30" transform="translate(190.869141 0)"/></g></g></g><g><g><path d="M759.5 194.1L763.7 195.2" style="fill: none; stroke: #000000; stroke-width: 0.72; stroke-linecap: square"/></g><g><!-- 8000 --><g transform="translate(766.853076 199.571685) scale(0.1 -0.1)"><use href="#DejaVuSans-38"/><use href="#DejaVuSans-30" transform="translate(63.623047 0)"/><use href="#DejaVuSans-30" transform="translate(127.246094 0)"/><use href="#DejaVuSans-30" transform="translate(190.869141 0)"/></g></g></g><g><g><path d="M760.2 179.7L764.4 180.8" style="fill: none; stroke: #000000; stroke-width: 0.72; stroke-linecap: square"/></g><g><!-- 10000 --><g transform="translate(764.425033 185.156498) scale(0.1 -0.1)"><use href="#DejaVuSans-31"/><use href="#DejaVuSans-30" transform="translate(63.623047 0)"/><use href="#DejaVuSans-30" transform="translate(127.246094 0)"/><use href="#DejaVuSans-30" transform="translate(190.869141 0)"/><use href="#DejaVuSans-30" transform="translate(254.492188 0)"/></g></g></g><g><g><path d="M760.8 165.1L765.1 166.2" style="fill: none; stroke: #000000; stroke-width: 0.72; stroke-linecap: square"/></g><g><!-- 12000 --><g transform="translate(765.18584 170.595858) scale(0.1 -0.1)"><use href="#DejaVuSans-31"/><use href="#DejaVuSans-32" transform="translate(63.623047 0)"/><use href="#DejaVuSans-30" transform="translate(127.246094 0)"/><use href="#DejaVuSans-30" transform="translate(190.869141 0)"/><use href="#DejaVuSans-30" transform="translate(254.492188 0)"/></g></g></g><g><g><path d="M761.5 150.3L765.7 151.4" style="fill: none; stroke: #000000; stroke-width: 0.72; stroke-linecap: square"/></g><g><!-- 14000 --><g transform="translate(765.954363 155.887553) scale(0.1 -0.1)"><use href="#DejaVuSans-31"/><use href="#DejaVuSans-34" transform="translate(63.623047 0)"/><use href="#DejaVuSans-30" transform="translate(127.246094 0)"/><use href="#DejaVuSans-30" transform="translate(190.869141 0)"/><use href="#DejaVuSans-30" transform="translate(254.492188 0)"/></g></g></g><g><g><path d="M762.2 135.5L766.4 136.5" style="fill: none; stroke: #000000; stroke-width: 0.72; stroke-linecap: square"/></g><g><!-- 16000 --><g transform="translate(766.730719 141.029323) scale(0.1 -0.1)"><use href="#DejaVuSans-31"/><use href="#DejaVuSans-36" transform="translate(63.623047 0)"/><use href="#DejaVuSans-30" transform="translate(127.246094 0)"/><use href="#DejaVuSans-30" transform="translate(190.869141 0)"/><use href="#DejaVuSans-30" transform="translate(254.492188 0)"/></g></g></g><g><!-- Loss --><g transform="translate(790.269821 193.802137) scale(0.1 -0.1)"><use href="#DejaVuSans-4c"/><use href="#DejaVuSans-6f" transform="translate(53.962891 0)"/><use href="#DejaVuSans-73" transform="translate(115.144531 0)"/><use href="#DejaVuSans-73" transform="translate(167.244141 0)"/></g></g></g><g><g><path d="M559.1 236.7L578.8 255.8L593.4 266.2L604.3 272L612.4 275.1L618.5 276.7L623.1 277.5L626.6 277.8L629.2 277.9L631.1 277.9L632.6 277.7" clip-path="url(#p0b21c5838a)" style="fill: none; stroke: #000000; stroke-width: 2; stroke-linecap: square"/><defs><path id="m7854f9b8ad" d="M0 2.2C0.6 2.2 1.2 2 1.6 1.6C2 1.2 2.2 0.6 2.2 0C2.2 -0.6 2 -1.2 1.6 -1.6C1.2 -2 0.6 -2.2 0 -2.2C-0.6 -2.2 -1.2 -2 -1.6 -1.6C-2 -1.2 -2.2 -0.6 -2.2 0C-2.2 0.6 -2 1.2 -1.6 1.6C-1.2 2 -0.6 2.2 0 2.2z" style="stroke: #000000"/></defs><g clip-path="url(#p0b21c5838a)"><use href="#m7854f9b8ad" x="559.1" y="236.7" style="stroke: #000000"/><use href="#m7854f9b8ad" x="578.8" y="255.8" style="stroke: #000000"/><use href="#m7854f9b8ad" x="593.4" y="266.2" style="stroke: #000000"/><use href="#m7854f9b8ad" x="604.3" y="272" style="stroke: #000000"/><use href="#m7854f9b8ad" x="612.4" y="275.1" style="stroke: #000000"/><use href="#m7854f9b8ad" x="618.5" y="276.7" style="stroke: #000000"/><use href="#m7854f9b8ad" x="623.1" y="277.5" style="stroke: #000000"/><use href="#m7854f9b8ad" x="626.6" y="277.8" style="stroke: #000000"/><use href="#m7854f9b8ad" x="629.2" y="277.9" style="stroke: #000000"/><use href="#m7854f9b8ad" x="631.1" y="277.9" style="stroke: #000000"/><use href="#m7854f9b8ad" x="632.6" y="277.7" style="stroke: #000000"/></g></g><g clip-path="url(#p0b21c5838a)" fill-opacity="0.8"><path d="M632 162.2l2.8 3.4 1.6-4.3-2.8-3.3z" fill="#30a785"/><path d="M634.8 165.6l2.8 3.2 1.6-4.3-2.8-3.2z" fill="#2fa188"/><path d="M629.1 158.7l2.9 3.5 1.6-4.2-2.8-3.5z" fill="#32ad82"/><path d="M637.6 168.8l2.8 3 1.7-4.3-2.9-3z" fill="#2f9b8a"/><path d="M626.3 155.1l2.8 3.6 1.7-4.2-2.9-3.7z" fill="#36b37d"/><path d="M640.4 171.8l2.9 2.8 1.6-4.3-2.8-2.8z" fill="#30958b"/><path d="M623.5 151.2l2.8 3.9 1.6-4.3-2.8-3.8z" fill="#3eb978"/><path d="M643.3 174.6l2.8 2.7 1.6-4.3-2.8-2.7z" fill="#30928c"/><path d="M630.3 166.4l2.9 3.4 1.6-4.2-2.8-3.4z" fill="#2fa088"/><path d="M633.2 169.8l2.8 3.1 1.6-4.1-2.8-3.2z" fill="#2f998a"/><path d="M627.5 162.9l2.8 3.5 1.7-4.2-2.9-3.5z" fill="#30a685"/><path d="M636 172.9l2.8 3.1 1.6-4.2-2.8-3z" fill="#30948c"/><path d="M620.6 147.2l2.9 4 1.6-4.2-2.8-4z" fill="#48c170"/><path d="M646.1 177.3l2.8 2.5 1.7-4.3-2.9-2.5z" fill="#328d8d"/><path d="M624.7 159.2l2.8 3.7 1.6-4.2-2.8-3.6z" fill="#32ad82"/><path d="M638.8 176l2.8 2.8 1.7-4.2-2.9-2.8z" fill="#318f8d"/><path d="M621.8 155.3l2.9 3.9 1.6-4.1-2.8-3.9z" fill="#36b37d"/><path d="M617.8 143l2.8 4.2 1.7-4.2-2.9-4.2z" fill="#55c768"/><path d="M641.6 178.8l2.9 2.7 1.6-4.2-2.8-2.7z" fill="#338a8d"/><path d="M648.9 179.8l2.9 2.4 1.6-4.4-2.8-2.3z" fill="#33898e"/><path d="M631.5 173.8l2.9 3.2 1.6-4.1-2.8-3.1z" fill="#30938c"/><path d="M628.7 170.5l2.8 3.3 1.7-4-2.9-3.4z" fill="#2f998a"/><path d="M619 151.3l2.8 4 1.7-4.1-2.9-4z" fill="#3ebb77"/><path d="M644.5 181.5l2.8 2.5 1.6-4.2-2.8-2.5z" fill="#33868e"/><path d="M634.4 177l2.8 3.1 1.6-4.1-2.8-3.1z" fill="#318e8d"/><path d="M625.9 166.9l2.8 3.6 1.6-4.1-2.8-3.5z" fill="#2fa088"/><path d="M615 138.7l2.8 4.3 1.6-4.2-2.8-4.4z" fill="#66ce5c"/><path d="M637.2 180.1l2.8 2.8 1.6-4.1-2.8-2.8z" fill="#33888e"/><path d="M623 163.2l2.9 3.7 1.6-4-2.8-3.7z" fill="#30a685"/><path d="M651.8 182.2l2.8 2.2 1.6-4.4-2.8-2.2z" fill="#34858e"/><path d="M616.2 147.1l2.8 4.2 1.6-4.1-2.8-4.2z" fill="#49c26f"/><path d="M647.3 184l2.9 2.4 1.6-4.2-2.9-2.4z" fill="#35828e"/><path d="M640 182.9l2.9 2.7 1.6-4.1-2.9-2.7z" fill="#34848e"/><path d="M620.2 159.4l2.8 3.8 1.7-4-2.9-3.9z" fill="#32ae81"/><path d="M612.1 134.1l2.9 4.6 1.6-4.3-2.8-4.5z" fill="#7ad450"/><path d="M642.9 185.6l2.8 2.6 1.6-4.2-2.8-2.5z" fill="#35808e"/><path d="M629.9 177.8l2.8 3.2 1.7-4-2.9-3.2z" fill="#328d8d"/><path d="M627 174.4l2.9 3.4 1.6-4-2.8-3.3z" fill="#30928c"/><path d="M617.3 155.3l2.9 4.1 1.6-4.1-2.8-4z" fill="#37b47c"/><path d="M654.6 184.4l2.9 2 1.6-4.4-2.9-2z" fill="#35828e"/><path d="M632.7 181l2.9 3 1.6-3.9-2.8-3.1z" fill="#33878e"/><path d="M624.2 170.9l2.8 3.5 1.7-3.9-2.8-3.6z" fill="#2f998a"/><path d="M613.3 142.8l2.9 4.3 1.6-4.1-2.8-4.3z" fill="#59c965"/><path d="M650.2 186.4l2.8 2.2 1.6-4.2-2.8-2.2z" fill="#357f8e"/><path d="M635.6 184l2.8 2.9 1.6-4-2.8-2.8z" fill="#35828e"/><path d="M621.4 167.2l2.8 3.7 1.7-4-2.9-3.7z" fill="#2fa188"/><path d="M645.7 188.2l2.8 2.3 1.7-4.1-2.9-2.4z" fill="#367b8e"/><path d="M614.5 151.1l2.8 4.2 1.7-4-2.8-4.2z" fill="#40bc76"/><path d="M638.4 186.9l2.8 2.7 1.7-4-2.9-2.7z" fill="#357d8e"/><path d="M618.5 163.3l2.9 3.9 1.6-4-2.8-3.8z" fill="#30a785"/><path d="M609.3 129.4l2.8 4.7 1.7-4.2-2.9-4.7z" fill="#8fda41"/><path d="M610.5 138.2l2.8 4.6 1.7-4.1-2.9-4.6z" fill="#6bcf5a"/><path d="M657.5 186.4l2.8 1.9 1.6-4.4-2.8-1.9z" fill="#35808e"/><path d="M653 188.6l2.8 2.1 1.7-4.3-2.9-2z" fill="#367b8e"/><path d="M641.2 189.6l2.9 2.6 1.6-4-2.8-2.6z" fill="#37788e"/><path d="M615.7 159.3l2.8 4 1.7-3.9-2.9-4.1z" fill="#33ae81"/><path d="M628.2 181.6l2.9 3.2 1.6-3.8-2.8-3.2z" fill="#33878e"/><path d="M625.4 178.2l2.8 3.4 1.7-3.8-2.9-3.4z" fill="#328d8d"/><path d="M648.5 190.5l2.9 2.3 1.6-4.2-2.8-2.2z" fill="#37778e"/><path d="M611.7 146.8l2.8 4.3 1.7-4-2.9-4.3z" fill="#4dc36d"/><path d="M631.1 184.8l2.8 3.1 1.7-3.9-2.9-3z" fill="#35828e"/><path d="M622.6 174.7l2.8 3.5 1.6-3.8-2.8-3.5z" fill="#30928c"/><path d="M633.9 187.9l2.9 2.9 1.6-3.9-2.8-2.9z" fill="#367c8e"/><path d="M619.7 171l2.9 3.7 1.6-3.8-2.8-3.7z" fill="#2f998a"/><path d="M644.1 192.2l2.8 2.4 1.6-4.1-2.8-2.3z" fill="#38748e"/><path d="M612.9 155l2.8 4.3 1.6-4-2.8-4.2z" fill="#39b67b"/><path d="M636.8 190.8l2.8 2.7 1.6-3.9-2.8-2.7z" fill="#37778e"/><path d="M606.4 124.6l2.9 4.8 1.6-4.2-2.8-4.8z" fill="#a8df30"/><path d="M607.6 133.5l2.9 4.7 1.6-4.1-2.8-4.7z" fill="#7ed54d"/><path d="M655.8 190.7l2.9 1.8 1.6-4.2-2.8-1.9z" fill="#37788e"/><path d="M616.9 167.1l2.8 3.9 1.7-3.8-2.9-3.9z" fill="#2fa288"/><path d="M660.3 188.3l2.9 1.7 1.6-4.4-2.9-1.7z" fill="#357d8e"/><path d="M651.4 192.8l2.8 2 1.6-4.1-2.8-2.1z" fill="#38748e"/><path d="M608.8 142.2l2.9 4.6 1.6-4-2.8-4.6z" fill="#5cca63"/><path d="M639.6 193.5l2.8 2.6 1.7-3.9-2.9-2.6z" fill="#39728e"/><path d="M646.9 194.6l2.8 2.2 1.7-4-2.9-2.3z" fill="#39718e"/><path d="M614.1 163.1l2.8 4 1.6-3.8-2.8-4z" fill="#30a984"/><path d="M610 150.7l2.9 4.3 1.6-3.9-2.8-4.3z" fill="#44be73"/><path d="M626.6 185.4l2.8 3.2 1.7-3.8-2.9-3.2z" fill="#35828e"/><path d="M623.8 182l2.8 3.4 1.6-3.8-2.8-3.4z" fill="#33878e"/><path d="M629.4 188.6l2.9 3.1 1.6-3.8-2.8-3.1z" fill="#367b8e"/><path d="M620.9 178.4l2.9 3.6 1.6-3.8-2.8-3.5z" fill="#318e8d"/><path d="M632.3 191.7l2.8 2.9 1.7-3.8-2.9-2.9z" fill="#37768e"/><path d="M642.4 196.1l2.9 2.4 1.6-3.9-2.8-2.4z" fill="#3a6f8e"/><path d="M618.1 174.7l2.8 3.7 1.7-3.7-2.9-3.7z" fill="#30948c"/><path d="M604.8 128.7l2.8 4.8 1.7-4.1-2.9-4.8z" fill="#97dc3c"/><path d="M654.2 194.8l2.9 1.9 1.6-4.2-2.9-1.8z" fill="#39718e"/><path d="M658.7 192.5l2.8 1.7 1.7-4.2-2.9-1.7z" fill="#37768e"/><path d="M606 137.5l2.8 4.7 1.7-4-2.9-4.7z" fill="#6fd157"/><path d="M611.2 158.8l2.9 4.3 1.6-3.8-2.8-4.3z" fill="#34b07f"/><path d="M603.6 119.5l2.8 5.1 1.7-4.2-2.9-5.1z" fill="#c2e320"/><path d="M635.1 194.6l2.9 2.7 1.6-3.8-2.8-2.7z" fill="#39718e"/><path d="M649.7 196.8l2.9 2 1.6-4-2.8-2z" fill="#3a6e8e"/><path d="M663.2 190l2.8 1.5 1.7-4.4-2.9-1.5z" fill="#367b8e"/><path d="M607.2 146.1l2.8 4.6 1.7-3.9-2.9-4.6z" fill="#52c66a"/><path d="M615.3 170.8l2.8 3.9 1.6-3.7-2.8-3.9z" fill="#2f9b8a"/><path d="M645.3 198.5l2.8 2.2 1.6-3.9-2.8-2.2z" fill="#3b6b8e"/><path d="M638 197.3l2.8 2.6 1.6-3.8-2.8-2.6z" fill="#3a6d8e"/><path d="M608.4 154.4l2.8 4.4 1.7-3.8-2.9-4.3z" fill="#3bb779"/><path d="M612.4 166.7l2.9 4.1 1.6-3.7-2.8-4z" fill="#2fa387"/><path d="M625 189l2.8 3.2 1.6-3.6-2.8-3.2z" fill="#367b8e"/><path d="M622.1 185.6l2.9 3.4 1.6-3.6-2.8-3.4z" fill="#35828e"/><path d="M627.8 192.2l2.8 3.1 1.7-3.6-2.9-3.1z" fill="#37758e"/><path d="M657.1 196.7l2.8 1.7 1.6-4.2-2.8-1.7z" fill="#3a708e"/><path d="M603.1 132.6l2.9 4.9 1.6-4-2.8-4.8z" fill="#86d848"/><path d="M652.6 198.8l2.8 1.9 1.7-4-2.9-1.9z" fill="#3b6b8e"/><path d="M619.3 182l2.8 3.6 1.7-3.6-2.9-3.6z" fill="#33888e"/><path d="M601.9 123.6l2.9 5.1 1.6-4.1-2.8-5.1z" fill="#b0e12b"/><path d="M661.5 194.2l2.9 1.6 1.6-4.3-2.8-1.5z" fill="#38748e"/><path d="M640.8 199.9l2.8 2.4 1.7-3.8-2.9-2.4z" fill="#3c698e"/><path d="M630.6 195.3l2.9 2.9 1.6-3.6-2.8-2.9z" fill="#39708e"/><path d="M604.3 141.4l2.9 4.7 1.6-3.9-2.8-4.7z" fill="#63cd5f"/><path d="M600.7 114.3l2.9 5.2 1.6-4.2-2.8-5.2z" fill="#dfe719"/><path d="M616.4 178.3l2.9 3.7 1.6-3.6-2.8-3.7z" fill="#318f8d"/><path d="M648.1 200.7l2.9 2.1 1.6-4-2.9-2z" fill="#3c688e"/><path d="M609.6 162.5l2.8 4.2 1.7-3.6-2.9-4.3z" fill="#31ab83"/><path d="M666 191.5l2.9 1.4 1.6-4.4-2.8-1.4z" fill="#37798e"/><path d="M633.5 198.2l2.8 2.8 1.7-3.7-2.9-2.7z" fill="#3a6c8e"/><path d="M605.5 149.9l2.9 4.5 1.6-3.7-2.8-4.6z" fill="#48c170"/><path d="M613.6 174.4l2.8 3.9 1.7-3.6-2.8-3.9z" fill="#30958b"/><path d="M643.6 202.3l2.9 2.2 1.6-3.8-2.8-2.2z" fill="#3c648e"/><path d="M636.3 201l2.9 2.6 1.6-3.7-2.8-2.6z" fill="#3c678e"/><path d="M606.7 158.1l2.9 4.4 1.6-3.7-2.8-4.4z" fill="#36b37d"/><path d="M655.4 200.7l2.9 1.8 1.6-4.1-2.8-1.7z" fill="#3c698e"/><path d="M659.9 198.4l2.9 1.6 1.6-4.2-2.9-1.6z" fill="#3a6e8e"/><path d="M610.8 170.3l2.8 4.1 1.7-3.6-2.9-4.1z" fill="#2f9e89"/><path d="M600.3 127.6l2.8 5 1.7-3.9-2.9-5.1z" fill="#9edd37"/><path d="M651 202.8l2.8 1.9 1.6-4-2.8-1.9z" fill="#3c648e"/><path d="M601.5 136.5l2.8 4.9 1.7-3.9-2.9-4.9z" fill="#78d351"/><path d="M599.1 118.4l2.8 5.2 1.7-4.1-2.9-5.2z" fill="#cce51b"/><path d="M623.3 192.5l2.9 3.3 1.6-3.6-2.8-3.2z" fill="#37768e"/><path d="M620.5 189.1l2.8 3.4 1.7-3.5-2.9-3.4z" fill="#367c8e"/><path d="M664.4 195.8l2.9 1.4 1.6-4.3-2.9-1.4z" fill="#39728e"/><path d="M626.2 195.8l2.8 3.1 1.6-3.6-2.8-3.1z" fill="#39708e"/><path d="M602.7 145.2l2.8 4.7 1.7-3.8-2.9-4.7z" fill="#57c867"/><path d="M639.2 203.6l2.8 2.4 1.6-3.7-2.8-2.4z" fill="#3d628e"/><path d="M617.6 185.5l2.9 3.6 1.6-3.5-2.8-3.6z" fill="#35828e"/><path d="M646.5 204.5l2.8 2.1 1.7-3.8-2.9-2.1z" fill="#3e618d"/><path d="M629 198.9l2.8 2.9 1.7-3.6-2.9-2.9z" fill="#3b6b8e"/><path d="M597.9 108.9l2.8 5.4 1.7-4.2-2.9-5.4z" fill="#f6ea25"/><path d="M607.9 166.1l2.9 4.2 1.6-3.6-2.8-4.2z" fill="#2fa586"/><path d="M614.8 181.8l2.8 3.7 1.7-3.5-2.9-3.7z" fill="#33898e"/><path d="M668.9 192.9l2.9 1.2 1.6-4.4-2.9-1.2z" fill="#37788e"/><path d="M603.9 153.6l2.8 4.5 1.7-3.7-2.9-4.5z" fill="#40bc76"/><path d="M631.8 201.8l2.9 2.7 1.6-3.5-2.8-2.8z" fill="#3c668e"/><path d="M642 206l2.9 2.2 1.6-3.7-2.9-2.2z" fill="#3f5e8d"/><path d="M611.9 177.9l2.9 3.9 1.6-3.5-2.8-3.9z" fill="#31918c"/><path d="M658.3 202.5l2.9 1.6 1.6-4.1-2.9-1.6z" fill="#3c678e"/><path d="M653.8 204.7l2.9 1.7 1.6-3.9-2.9-1.8z" fill="#3e618d"/><path d="M634.7 204.5l2.8 2.6 1.7-3.5-2.9-2.6z" fill="#3e618d"/><path d="M662.8 200l2.9 1.4 1.6-4.2-2.9-1.4z" fill="#3a6c8e"/><path d="M598.6 131.4l2.9 5.1 1.6-3.9-2.8-5z" fill="#8fda41"/><path d="M597.4 122.3l2.9 5.3 1.6-4-2.8-5.2z" fill="#bbe225"/><path d="M605.1 161.7l2.8 4.4 1.7-3.6-2.9-4.4z" fill="#32ae81"/><path d="M649.3 206.6l2.9 1.9 1.6-3.8-2.8-1.9z" fill="#3f5e8d"/><path d="M599.8 140.3l2.9 4.9 1.6-3.8-2.8-4.9z" fill="#6bcf5a"/><path d="M609.1 173.8l2.8 4.1 1.7-3.5-2.8-4.1z" fill="#30988b"/><path d="M596.2 113l2.9 5.4 1.6-4.1-2.8-5.4z" fill="#e8e81c"/><path d="M667.3 197.2l2.8 1.2 1.7-4.3-2.9-1.2z" fill="#39718e"/><path d="M601 148.8l2.9 4.8 1.6-3.7-2.8-4.7z" fill="#4dc36d"/><path d="M621.7 196l2.8 3.2 1.7-3.4-2.9-3.3z" fill="#39708e"/><path d="M637.5 207.1l2.9 2.5 1.6-3.6-2.8-2.4z" fill="#3f5c8d"/><path d="M618.8 192.5l2.9 3.5 1.6-3.5-2.8-3.4z" fill="#37778e"/><path d="M644.9 208.2l2.8 2.1 1.6-3.7-2.8-2.1z" fill="#405b8d"/><path d="M624.5 199.2l2.9 3.1 1.6-3.4-2.8-3.1z" fill="#3a6c8e"/><path d="M616 188.9l2.8 3.6 1.7-3.4-2.9-3.6z" fill="#357d8e"/><path d="M627.4 202.3l2.8 2.9 1.6-3.4-2.8-2.9z" fill="#3c668e"/><path d="M606.2 169.6l2.9 4.2 1.7-3.5-2.9-4.2z" fill="#2fa188"/><path d="M602.2 157.1l2.9 4.6 1.6-3.6-2.8-4.5z" fill="#39b67b"/><path d="M613.1 185.2l2.9 3.7 1.6-3.4-2.8-3.7z" fill="#34848e"/><path d="M671.8 194.1l2.8 1 1.7-4.4-2.9-1z" fill="#37778e"/><path d="M656.7 206.4l2.8 1.6 1.7-3.9-2.9-1.6z" fill="#3f5f8d"/><path d="M630.2 205.2l2.9 2.8 1.6-3.5-2.9-2.7z" fill="#3e608d"/><path d="M661.2 204.1l2.8 1.4 1.7-4.1-2.9-1.4z" fill="#3c648e"/><path d="M652.2 208.5l2.9 1.8 1.6-3.9-2.9-1.7z" fill="#405b8d"/><path d="M640.4 209.6l2.8 2.2 1.7-3.6-2.9-2.2z" fill="#41598d"/><path d="M595.7 126.2l2.9 5.2 1.7-3.8-2.9-5.3z" fill="#abe02f"/><path d="M596.9 135.2l2.9 5.1 1.7-3.8-2.9-5.1z" fill="#81d74b"/><path d="M610.3 181.3l2.8 3.9 1.7-3.4-2.9-3.9z" fill="#328c8d"/><path d="M665.7 201.4l2.8 1.2 1.6-4.2-2.8-1.2z" fill="#3b6b8e"/><path d="M647.7 210.3l2.9 2 1.6-3.8-2.9-1.9z" fill="#41588c"/><path d="M594.5 116.9l2.9 5.4 1.7-3.9-2.9-5.4z" fill="#d7e618"/><path d="M598.1 143.9l2.9 4.9 1.7-3.6-2.9-4.9z" fill="#5ecb62"/><path d="M633.1 208l2.8 2.6 1.6-3.5-2.8-2.6z" fill="#405b8d"/><path d="M603.4 165.1l2.8 4.5 1.7-3.5-2.8-4.4z" fill="#30a984"/><path d="M607.4 177.2l2.9 4.1 1.6-3.4-2.8-4.1z" fill="#30938c"/><path d="M670.1 198.4l2.9 1.1 1.6-4.4-2.8-1z" fill="#39708e"/><path d="M599.3 152.4l2.9 4.7 1.7-3.5-2.9-4.8z" fill="#44bf72"/><path d="M643.2 211.8l2.9 2.1 1.6-3.6-2.8-2.1z" fill="#42548c"/><path d="M635.9 210.6l2.8 2.4 1.7-3.4-2.9-2.5z" fill="#41578c"/><path d="M620 199.3l2.9 3.2 1.6-3.3-2.8-3.2z" fill="#3a6d8e"/><path d="M617.2 195.8l2.8 3.5 1.7-3.3-2.9-3.5z" fill="#39728e"/><path d="M622.9 202.5l2.8 3.1 1.7-3.3-2.9-3.1z" fill="#3c678e"/><path d="M655.1 210.3l2.8 1.6 1.6-3.9-2.8-1.6z" fill="#41598d"/><path d="M659.5 208l2.9 1.4 1.6-3.9-2.8-1.4z" fill="#3f5e8d"/><path d="M614.3 192.2l2.9 3.6 1.6-3.3-2.8-3.6z" fill="#37788e"/><path d="M625.7 205.6l2.9 3 1.6-3.4-2.8-2.9z" fill="#3e608d"/><path d="M600.5 160.6l2.9 4.5 1.7-3.4-2.9-4.6z" fill="#35b17f"/><path d="M604.6 172.9l2.8 4.3 1.7-3.4-2.9-4.2z" fill="#2f9b8a"/><path d="M650.6 212.3l2.8 1.7 1.7-3.7-2.9-1.8z" fill="#42548c"/><path d="M664 205.5l2.9 1.2 1.6-4.1-2.8-1.2z" fill="#3d638e"/><path d="M674.6 195.1l2.9 .9 1.7-4.4-2.9-.9z" fill="#37778e"/><path d="M594.1 129.9l2.8 5.3 1.7-3.8-2.9-5.2z" fill="#9cdd39"/><path d="M611.5 188.5l2.8 3.7 1.7-3.3-2.9-3.7z" fill="#35818e"/><path d="M595.3 138.8l2.8 5.1 1.7-3.6-2.9-5.1z" fill="#73d254"/><path d="M628.6 208.6l2.8 2.8 1.7-3.4-2.9-2.8z" fill="#405b8d"/><path d="M592.9 120.8l2.8 5.4 1.7-3.9-2.9-5.4z" fill="#c7e41d"/><path d="M638.7 213l2.9 2.3 1.6-3.5-2.8-2.2z" fill="#43528c"/><path d="M646.1 213.9l2.8 2 1.7-3.6-2.9-2z" fill="#43518b"/><path d="M668.5 202.6l2.9 1.1 1.6-4.2-2.9-1.1z" fill="#3b6a8e"/><path d="M596.5 147.4l2.8 5 1.7-3.6-2.9-4.9z" fill="#54c769"/><path d="M608.6 184.5l2.9 4 1.6-3.3-2.8-3.9z" fill="#33878e"/><path d="M631.4 211.4l2.9 2.6 1.6-3.4-2.8-2.6z" fill="#41568c"/><path d="M601.7 168.5l2.9 4.4 1.6-3.3-2.8-4.5z" fill="#2fa486"/><path d="M597.7 155.8l2.8 4.8 1.7-3.5-2.9-4.7z" fill="#3eb978"/><path d="M641.6 215.3l2.9 2.1 1.6-3.5-2.9-2.1z" fill="#444e8b"/><path d="M605.8 180.4l2.8 4.1 1.7-3.2-2.9-4.1z" fill="#318f8d"/><path d="M673 199.5l2.9 .9 1.6-4.4-2.9-.9z" fill="#3a708e"/><path d="M657.9 211.9l2.9 1.4 1.6-3.9-2.9-1.4z" fill="#41578c"/><path d="M653.4 214l2.9 1.6 1.6-3.7-2.8-1.6z" fill="#43528c"/><path d="M662.4 209.4l2.9 1.3 1.6-4-2.9-1.2z" fill="#3f5c8d"/><path d="M634.3 214l2.8 2.4 1.6-3.4-2.8-2.4z" fill="#43518b"/><path d="M618.4 202.5l2.8 3.3 1.7-3.3-2.9-3.2z" fill="#3c688e"/><path d="M648.9 215.9l2.9 1.8 1.6-3.7-2.8-1.7z" fill="#444e8b"/><path d="M615.5 199l2.9 3.5 1.6-3.2-2.8-3.5z" fill="#3a6e8e"/><path d="M621.2 205.8l2.9 3.1 1.6-3.3-2.8-3.1z" fill="#3e618d"/><path d="M666.9 206.7l2.9 1.1 1.6-4.1-2.9-1.1z" fill="#3d628e"/><path d="M592.4 133.6l2.9 5.2 1.6-3.6-2.8-5.3z" fill="#8dda43"/><path d="M591.2 124.5l2.9 5.4 1.6-3.7-2.8-5.4z" fill="#b8e226"/><path d="M598.9 163.9l2.8 4.6 1.7-3.4-2.9-4.5z" fill="#32ad82"/><path d="M612.7 195.4l2.8 3.6 1.7-3.2-2.9-3.6z" fill="#38748e"/><path d="M624.1 208.9l2.8 2.9 1.7-3.2-2.9-3z" fill="#3f5c8d"/><path d="M602.9 176.2l2.9 4.2 1.6-3.2-2.8-4.3z" fill="#30968b"/><path d="M593.6 142.3l2.9 5.1 1.6-3.5-2.8-5.1z" fill="#68cf5b"/><path d="M637.1 216.4l2.9 2.3 1.6-3.4-2.9-2.3z" fill="#444c8a"/><path d="M609.8 191.7l2.9 3.7 1.6-3.2-2.8-3.7z" fill="#367b8e"/><path d="M677.5 196l2.9 .8 1.6-4.5-2.8-.7z" fill="#37778e"/><path d="M644.5 217.4l2.8 2 1.6-3.5-2.8-2z" fill="#454b8a"/><path d="M626.9 211.8l2.9 2.8 1.6-3.2-2.8-2.8z" fill="#41568c"/><path d="M594.8 150.9l2.9 4.9 1.6-3.4-2.8-5z" fill="#4bc36e"/><path d="M671.4 203.7l2.9 .9 1.6-4.2-2.9-.9z" fill="#3c698e"/><path d="M607 187.7l2.8 4 1.7-3.2-2.9-4z" fill="#34838e"/><path d="M629.8 214.6l2.8 2.6 1.7-3.2-2.9-2.6z" fill="#43518b"/><path d="M656.3 215.6l2.9 1.5 1.6-3.8-2.9-1.4z" fill="#43518b"/><path d="M600.1 171.7l2.8 4.5 1.7-3.3-2.9-4.4z" fill="#2fa088"/><path d="M660.8 213.3l2.9 1.3 1.6-3.9-2.9-1.3z" fill="#41568c"/><path d="M596 159.1l2.9 4.8 1.6-3.3-2.8-4.8z" fill="#38b57c"/><path d="M651.8 217.7l2.9 1.6 1.6-3.7-2.9-1.6z" fill="#444c8a"/><path d="M640 218.7l2.8 2.1 1.7-3.4-2.9-2.1z" fill="#46498a"/><path d="M665.3 210.7l2.9 1.1 1.6-4-2.9-1.1z" fill="#405b8d"/><path d="M604.1 183.6l2.9 4.1 1.6-3.2-2.8-4.1z" fill="#338a8d"/><path d="M675.9 200.4l2.9 .7 1.6-4.3-2.9-.8z" fill="#3a708e"/><path d="M632.6 217.2l2.9 2.5 1.6-3.3-2.8-2.4z" fill="#444c8a"/><path d="M647.3 219.4l2.9 1.8 1.6-3.5-2.9-1.8z" fill="#464789"/><path d="M589.5 128.1l2.9 5.5 1.7-3.7-2.9-5.4z" fill="#a8df30"/><path d="M590.7 137.1l2.9 5.2 1.7-3.5-2.9-5.2z" fill="#7ed54d"/><path d="M669.8 207.8l2.9 .9 1.6-4.1-2.9-.9z" fill="#3d628e"/><path d="M616.7 205.6l2.9 3.3 1.6-3.1-2.8-3.3z" fill="#3d638e"/><path d="M591.9 145.8l2.9 5.1 1.7-3.5-2.9-5.1z" fill="#5ecb62"/><path d="M613.9 202.1l2.8 3.5 1.7-3.1-2.9-3.5z" fill="#3b6a8e"/><path d="M619.6 208.9l2.8 3.1 1.7-3.1-2.9-3.1z" fill="#3f5d8d"/><path d="M597.2 167.1l2.9 4.6 1.6-3.2-2.8-4.6z" fill="#30a885"/><path d="M611 198.5l2.9 3.6 1.6-3.1-2.8-3.6z" fill="#39708e"/><path d="M601.2 179.3l2.9 4.3 1.7-3.2-2.9-4.2z" fill="#30928c"/><path d="M622.4 212l2.9 3 1.6-3.2-2.8-2.9z" fill="#41578c"/><path d="M642.8 220.8l2.9 2 1.6-3.4-2.8-2z" fill="#474589"/><path d="M635.5 219.7l2.8 2.3 1.7-3.3-2.9-2.3z" fill="#464789"/><path d="M593.1 154.2l2.9 4.9 1.7-3.3-2.9-4.9z" fill="#44be73"/><path d="M608.2 194.7l2.8 3.8 1.7-3.1-2.9-3.7z" fill="#37778e"/><path d="M625.3 215l2.8 2.8 1.7-3.2-2.9-2.8z" fill="#43518b"/><path d="M680.4 196.8l2.9 .5 1.6-4.4-2.9-.6z" fill="#37778e"/><path d="M659.2 217.1l2.8 1.3 1.7-3.8-2.9-1.3z" fill="#444e8b"/><path d="M674.3 204.6l2.9 .7 1.6-4.2-2.9-.7z" fill="#3c698e"/><path d="M654.7 219.3l2.8 1.4 1.7-3.6-2.9-1.5z" fill="#454a8a"/><path d="M663.7 214.6l2.8 1.1 1.7-3.9-2.9-1.1z" fill="#42548c"/><path d="M650.2 221.2l2.8 1.6 1.7-3.5-2.9-1.6z" fill="#474589"/><path d="M605.3 190.8l2.9 3.9 1.6-3-2.8-4z" fill="#357f8e"/><path d="M628.1 217.8l2.9 2.6 1.6-3.2-2.8-2.6z" fill="#454b8a"/><path d="M598.4 174.9l2.8 4.4 1.7-3.1-2.8-4.5z" fill="#2f9a8a"/><path d="M594.3 162.3l2.9 4.8 1.7-3.2-2.9-4.8z" fill="#35b17f"/><path d="M668.2 211.8l2.8 .9 1.7-4-2.9-.9z" fill="#405b8d"/><path d="M638.3 222l2.9 2.1 1.6-3.3-2.8-2.1z" fill="#474388"/><path d="M587.8 131.6l2.9 5.5 1.7-3.5-2.9-5.5z" fill="#9cdd39"/><path d="M645.7 222.8l2.8 1.8 1.7-3.4-2.9-1.8z" fill="#474288"/><path d="M589 140.5l2.9 5.3 1.7-3.5-2.9-5.2z" fill="#73d254"/><path d="M602.4 186.6l2.9 4.2 1.7-3.1-2.9-4.1z" fill="#33868e"/><path d="M631 220.4l2.8 2.5 1.7-3.2-2.9-2.5z" fill="#464689"/><path d="M678.8 201.1l2.9 .6 1.6-4.4-2.9-.5z" fill="#39708e"/><path d="M590.2 149.1l2.9 5.1 1.7-3.3-2.9-5.1z" fill="#55c768"/><path d="M672.7 208.7l2.9 .8 1.6-4.2-2.9-.7z" fill="#3d628e"/><path d="M595.5 170.2l2.9 4.7 1.7-3.2-2.9-4.6z" fill="#2fa486"/><path d="M615.1 208.6l2.8 3.3 1.7-3-2.9-3.3z" fill="#3f5f8d"/><path d="M617.9 211.9l2.9 3.1 1.6-3-2.8-3.1z" fill="#41598d"/><path d="M612.2 205.1l2.9 3.5 1.6-3-2.8-3.5z" fill="#3c668e"/><path d="M657.5 220.7l2.9 1.3 1.6-3.6-2.8-1.3z" fill="#46498a"/><path d="M641.2 224.1l2.8 2 1.7-3.3-2.9-2z" fill="#483e87"/><path d="M599.6 182.4l2.8 4.2 1.7-3-2.9-4.3z" fill="#318f8d"/><path d="M662 218.4l2.9 1.1 1.6-3.8-2.8-1.1z" fill="#444d8b"/><path d="M620.8 215l2.8 3 1.7-3-2.9-3z" fill="#43528c"/><path d="M609.3 201.5l2.9 3.6 1.7-3-2.9-3.6z" fill="#3a6d8e"/><path d="M633.8 222.9l2.9 2.3 1.6-3.2-2.8-2.3z" fill="#474288"/><path d="M653 222.8l2.9 1.5 1.6-3.6-2.8-1.4z" fill="#474388"/><path d="M591.4 157.4l2.9 4.9 1.7-3.2-2.9-4.9z" fill="#3ebb77"/><path d="M666.5 215.7l2.9 .9 1.6-3.9-2.8-.9z" fill="#42548c"/><path d="M623.6 218l2.9 2.8 1.6-3-2.8-2.8z" fill="#444c8a"/><path d="M606.5 197.7l2.8 3.8 1.7-3-2.8-3.8z" fill="#38738e"/><path d="M648.5 224.6l2.9 1.6 1.6-3.4-2.8-1.6z" fill="#483e87"/><path d="M677.2 205.3l2.9 .6 1.6-4.2-2.9-.6z" fill="#3b6a8e"/><path d="M683.3 197.3l2.9 .4 1.7-4.5-3-.3z" fill="#37788e"/><path d="M586.2 135l2.8 5.5 1.7-3.4-2.9-5.5z" fill="#8dda43"/><path d="M626.5 220.8l2.8 2.6 1.7-3-2.9-2.6z" fill="#464689"/><path d="M603.6 193.7l2.9 4 1.7-3-2.9-3.9z" fill="#377a8e"/><path d="M596.7 177.9l2.9 4.5 1.6-3.1-2.8-4.4z" fill="#30968b"/><path d="M592.6 165.5l2.9 4.7 1.7-3.1-2.9-4.8z" fill="#32ad82"/><path d="M671 212.7l2.9 .8 1.7-4-2.9-.8z" fill="#405b8d"/><path d="M636.7 225.2l2.8 2.1 1.7-3.2-2.9-2.1z" fill="#493d86"/><path d="M587.4 143.8l2.8 5.3 1.7-3.3-2.9-5.3z" fill="#68cf5b"/><path d="M644 226.1l2.9 1.8 1.6-3.3-2.8-1.8z" fill="#493c86"/><path d="M629.3 223.4l2.9 2.5 1.6-3-2.8-2.5z" fill="#474288"/><path d="M600.8 189.6l2.8 4.1 1.7-2.9-2.9-4.2z" fill="#35828e"/><path d="M588.6 152.3l2.8 5.1 1.7-3.2-2.9-5.1z" fill="#4dc36d"/><path d="M681.7 201.7l2.9 .4 1.6-4.4-2.9-.4z" fill="#39718e"/><path d="M660.4 222l2.9 1.2 1.6-3.7-2.9-1.1z" fill="#464789"/><path d="M655.9 224.3l2.9 1.3 1.6-3.6-2.9-1.3z" fill="#474288"/><path d="M675.6 209.5l2.9 .6 1.6-4.2-2.9-.6z" fill="#3d628e"/><path d="M664.9 219.5l2.9 .9 1.6-3.8-2.9-.9z" fill="#444d8b"/><path d="M593.8 173.3l2.9 4.6 1.7-3-2.9-4.7z" fill="#2fa088"/><path d="M651.4 226.2l2.9 1.5 1.6-3.4-2.9-1.5z" fill="#493c86"/><path d="M639.5 227.3l2.9 2 1.6-3.2-2.8-2z" fill="#493a85"/><path d="M613.4 211.5l2.8 3.3 1.7-2.9-2.8-3.3z" fill="#405b8d"/><path d="M616.2 214.8l2.9 3.1 1.7-2.9-2.9-3.1z" fill="#42548c"/><path d="M610.5 208l2.9 3.5 1.7-2.9-2.9-3.5z" fill="#3e618d"/><path d="M589.8 160.5l2.8 5 1.7-3.2-2.9-4.9z" fill="#39b67b"/><path d="M632.2 225.9l2.8 2.3 1.7-3-2.9-2.3z" fill="#493c86"/><path d="M597.9 185.3l2.9 4.3 1.6-3-2.8-4.2z" fill="#328b8d"/><path d="M619.1 217.9l2.9 3 1.6-2.9-2.8-3z" fill="#444d8b"/><path d="M607.7 204.3l2.8 3.7 1.7-2.9-2.9-3.6z" fill="#3c698e"/><path d="M669.4 216.6l2.9 .8 1.6-3.9-2.9-.8z" fill="#42548c"/><path d="M646.9 227.9l2.9 1.7 1.6-3.4-2.9-1.6z" fill="#493984"/><path d="M622 220.9l2.8 2.8 1.7-2.9-2.9-2.8z" fill="#464789"/><path d="M604.8 200.5l2.9 3.8 1.6-2.8-2.8-3.8z" fill="#3a708e"/><path d="M584.5 138.3l2.9 5.5 1.6-3.3-2.8-5.5z" fill="#81d74b"/><path d="M680.1 205.9l2.9 .5 1.6-4.3-2.9-.4z" fill="#3b6b8e"/><path d="M686.2 197.7l3 .2 1.6-4.4-2.9-.3z" fill="#37798e"/><path d="M591 168.5l2.8 4.8 1.7-3.1-2.9-4.7z" fill="#30a984"/><path d="M585.7 147l2.9 5.3 1.6-3.2-2.8-5.3z" fill="#60cc60"/><path d="M673.9 213.5l2.9 .6 1.7-4-2.9-.6z" fill="#405b8d"/><path d="M635 228.2l2.9 2.2 1.6-3.1-2.8-2.1z" fill="#493984"/><path d="M624.8 223.7l2.9 2.7 1.6-3-2.8-2.6z" fill="#474288"/><path d="M595 180.8l2.9 4.5 1.7-2.9-2.9-4.5z" fill="#30928c"/><path d="M642.4 229.3l2.9 1.8 1.6-3.2-2.9-1.8z" fill="#4a3683"/><path d="M601.9 196.6l2.9 3.9 1.7-2.8-2.9-4z" fill="#37778e"/><path d="M658.8 225.6l2.9 1.1 1.6-3.5-2.9-1.2z" fill="#484187"/><path d="M654.3 227.7l2.9 1.3 1.6-3.4-2.9-1.3z" fill="#493b85"/><path d="M663.3 223.2l2.9 .9 1.6-3.7-2.9-.9z" fill="#464689"/><path d="M586.9 155.4l2.9 5.1 1.6-3.1-2.8-5.1z" fill="#46c071"/><path d="M627.7 226.4l2.8 2.5 1.7-3-2.9-2.5z" fill="#493c86"/><path d="M599.1 192.4l2.8 4.2 1.7-2.9-2.8-4.1z" fill="#35808e"/><path d="M649.8 229.6l2.8 1.5 1.7-3.4-2.9-1.5z" fill="#4a3784"/><path d="M667.8 220.4l2.9 .8 1.6-3.8-2.9-.8z" fill="#444d8b"/><path d="M678.5 210.1l2.9 .4 1.6-4.1-2.9-.5z" fill="#3d638e"/><path d="M684.6 202.1l2.9 .2 1.7-4.4-3-.2z" fill="#39728e"/><path d="M637.9 230.4l2.9 2 1.6-3.1-2.9-2z" fill="#4a3583"/><path d="M592.1 176.2l2.9 4.6 1.7-2.9-2.9-4.6z" fill="#2f9d89"/><path d="M588.1 163.5l2.9 5 1.6-3-2.8-5z" fill="#36b27e"/><path d="M611.7 214.2l2.9 3.4 1.6-2.8-2.8-3.3z" fill="#41578c"/><path d="M645.3 231.1l2.8 1.7 1.7-3.2-2.9-1.7z" fill="#4b3482"/><path d="M630.5 228.9l2.9 2.3 1.6-3-2.8-2.3z" fill="#4a3784"/><path d="M614.6 217.6l2.8 3.1 1.7-2.8-2.9-3.1z" fill="#444f8b"/><path d="M672.3 217.4l2.9 .6 1.6-3.9-2.9-.6z" fill="#42548c"/><path d="M608.9 210.8l2.8 3.4 1.7-2.7-2.9-3.5z" fill="#3f5e8d"/><path d="M596.2 188.1l2.9 4.3 1.7-2.8-2.9-4.3z" fill="#33878e"/><path d="M617.4 220.7l2.9 3 1.7-2.8-2.9-3z" fill="#454a8a"/><path d="M606 207.1l2.9 3.7 1.6-2.8-2.8-3.7z" fill="#3c648e"/><path d="M582.8 141.5l2.9 5.5 1.7-3.2-2.9-5.5z" fill="#78d351"/><path d="M620.3 223.7l2.9 2.9 1.6-2.9-2.8-2.8z" fill="#464488"/><path d="M603.1 203.3l2.9 3.8 1.7-2.8-2.9-3.8z" fill="#3a6d8e"/><path d="M584 150l2.9 5.4 1.7-3.1-2.9-5.3z" fill="#57c867"/><path d="M657.2 229l2.8 1.2 1.7-3.5-2.9-1.1z" fill="#493a85"/><path d="M683 206.4l2.9 .2 1.6-4.3-2.9-.2z" fill="#3a6c8e"/><path d="M661.7 226.7l2.8 1 1.7-3.6-2.9-.9z" fill="#484187"/><path d="M640.8 232.4l2.8 1.8 1.7-3.1-2.9-1.8z" fill="#4b3081"/><path d="M589.3 171.4l2.8 4.8 1.7-2.9-2.8-4.8z" fill="#2fa586"/><path d="M633.4 231.2l2.9 2.2 1.6-3-2.9-2.2z" fill="#4b3482"/><path d="M676.8 214.1l2.9 .5 1.7-4.1-2.9-.4z" fill="#3f5c8d"/><path d="M652.6 231.1l2.9 1.3 1.7-3.4-2.9-1.3z" fill="#4a3583"/><path d="M593.3 183.6l2.9 4.5 1.7-2.8-2.9-4.5z" fill="#31908d"/><path d="M623.2 226.6l2.8 2.6 1.7-2.8-2.9-2.7z" fill="#493d86"/><path d="M666.2 224.1l2.9 .8 1.6-3.7-2.9-.8z" fill="#464689"/><path d="M600.3 199.3l2.8 4 1.7-2.8-2.9-3.9z" fill="#38738e"/><path d="M689.2 197.9l2.9 .1 1.6-4.5-2.9 0z" fill="#367b8e"/><path d="M585.2 158.3l2.9 5.2 1.7-3-2.9-5.1z" fill="#40bc76"/><path d="M648.1 232.8l2.9 1.5 1.6-3.2-2.8-1.5z" fill="#4b3081"/><path d="M670.7 221.2l2.9 .7 1.6-3.9-2.9-.6z" fill="#444d8b"/><path d="M626 229.2l2.9 2.5 1.6-2.8-2.8-2.5z" fill="#493984"/><path d="M597.4 195.1l2.9 4.2 1.6-2.7-2.8-4.2z" fill="#367b8e"/><path d="M636.3 233.4l2.8 2 1.7-3-2.9-2z" fill="#4b2f80"/><path d="M590.5 179l2.8 4.6 1.7-2.8-2.9-4.6z" fill="#30988b"/><path d="M681.4 210.5l2.9 .3 1.6-4.2-2.9-.2z" fill="#3c648e"/><path d="M643.6 234.2l2.9 1.7 1.6-3.1-2.8-1.7z" fill="#4b2e7f"/><path d="M586.4 166.4l2.9 5 1.7-2.9-2.9-5z" fill="#33ae81"/><path d="M687.5 202.3l3 .1 1.6-4.4-2.9-.1z" fill="#38748e"/><path d="M628.9 231.7l2.8 2.4 1.7-2.9-2.9-2.3z" fill="#4b3482"/><path d="M675.2 218l2.9 .5 1.6-3.9-2.9-.5z" fill="#41568c"/><path d="M581.1 144.6l2.9 5.4 1.7-3-2.9-5.5z" fill="#6dd058"/><path d="M610.1 216.9l2.8 3.4 1.7-2.7-2.9-3.4z" fill="#42538c"/><path d="M612.9 220.3l2.9 3.1 1.6-2.7-2.8-3.1z" fill="#444c8a"/><path d="M594.5 190.8l2.9 4.3 1.7-2.7-2.9-4.3z" fill="#34848e"/><path d="M607.2 213.4l2.9 3.5 1.6-2.7-2.8-3.4z" fill="#405a8d"/><path d="M660 230.2l2.9 1 1.6-3.5-2.8-1z" fill="#493984"/><path d="M615.8 223.4l2.8 3 1.7-2.7-2.9-3z" fill="#474589"/><path d="M655.5 232.4l2.9 1.2 1.6-3.4-2.8-1.2z" fill="#4b3482"/><path d="M604.3 209.8l2.9 3.6 1.7-2.6-2.9-3.7z" fill="#3e618d"/><path d="M664.5 227.7l2.9 .8 1.7-3.6-2.9-.8z" fill="#483e87"/><path d="M582.3 153l2.9 5.3 1.7-2.9-2.9-5.4z" fill="#50c56b"/><path d="M651 234.3l2.9 1.3 1.6-3.2-2.9-1.3z" fill="#4b2f80"/><path d="M618.6 226.4l2.9 2.9 1.7-2.7-2.9-2.9z" fill="#483e87"/><path d="M639.1 235.4l2.9 1.8 1.6-3-2.8-1.8z" fill="#4b2b7e"/><path d="M601.5 205.9l2.8 3.9 1.7-2.7-2.9-3.8z" fill="#3c698e"/><path d="M587.6 174.1l2.9 4.9 1.6-2.8-2.8-4.8z" fill="#2fa287"/><path d="M631.7 234.1l2.9 2.2 1.7-2.9-2.9-2.2z" fill="#4b2e7f"/><path d="M669.1 224.9l2.9 .7 1.6-3.7-2.9-.7z" fill="#464689"/><path d="M679.7 214.6l3 .2 1.6-4-2.9-.3z" fill="#3f5d8d"/><path d="M685.9 206.6l2.9 .1 1.7-4.3-3-.1z" fill="#3a6d8e"/><path d="M591.6 186.3l2.9 4.5 1.7-2.7-2.9-4.5z" fill="#328c8d"/><path d="M621.5 229.3l2.9 2.7 1.6-2.8-2.8-2.6z" fill="#493a85"/><path d="M646.5 235.9l2.9 1.5 1.6-3.1-2.9-1.5z" fill="#4b2b7e"/><path d="M583.5 161.2l2.9 5.2 1.7-2.9-2.9-5.2z" fill="#3cb879"/><path d="M598.6 201.9l2.9 4 1.6-2.6-2.8-4z" fill="#39708e"/><path d="M673.6 221.9l2.9 .4 1.6-3.8-2.9-.5z" fill="#444e8b"/><path d="M692.1 198l2.9-.1 1.7-4.5-3 .1z" fill="#357d8e"/><path d="M624.4 232l2.8 2.5 1.7-2.8-2.9-2.5z" fill="#4b3482"/><path d="M634.6 236.3l2.9 2 1.6-2.9-2.8-2z" fill="#4c2a7d"/><path d="M595.7 197.8l2.9 4.1 1.7-2.6-2.9-4.2z" fill="#37788e"/><path d="M642 237.2l2.9 1.7 1.6-3-2.9-1.7z" fill="#4c297c"/><path d="M588.8 181.7l2.8 4.6 1.7-2.7-2.8-4.6z" fill="#30958b"/><path d="M584.7 169.1l2.9 5 1.7-2.7-2.9-5z" fill="#32ac82"/><path d="M658.4 233.6l2.9 1 1.6-3.4-2.9-1z" fill="#4b3482"/><path d="M579.4 147.5l2.9 5.5 1.7-3-2.9-5.4z" fill="#65cd5e"/><path d="M684.3 210.8l2.9 .1 1.6-4.2-2.9-.1z" fill="#3c668e"/><path d="M662.9 231.2l2.9 .8 1.6-3.5-2.9-.8z" fill="#493984"/><path d="M653.9 235.6l2.9 1.2 1.6-3.2-2.9-1.2z" fill="#4b2e7f"/><path d="M627.2 234.5l2.9 2.3 1.6-2.7-2.8-2.4z" fill="#4b2e7f"/><path d="M678.1 218.5l2.9 .3 1.7-4-3-.2z" fill="#41578c"/><path d="M667.4 228.5l2.9 .7 1.7-3.6-2.9-.7z" fill="#484187"/><path d="M690.5 202.4l2.9-.1 1.6-4.4-2.9 .1z" fill="#37768e"/><path d="M608.4 219.5l2.8 3.3 1.7-2.5-2.8-3.4z" fill="#444f8b"/><path d="M592.8 193.4l2.9 4.4 1.7-2.7-2.9-4.3z" fill="#35818e"/><path d="M611.2 222.8l2.9 3.2 1.7-2.6-2.9-3.1z" fill="#46498a"/><path d="M649.4 237.4l2.9 1.4 1.6-3.2-2.9-1.3z" fill="#4c297c"/><path d="M605.5 216l2.9 3.5 1.7-2.6-2.9-3.5z" fill="#41578c"/><path d="M580.6 155.9l2.9 5.3 1.7-2.9-2.9-5.3z" fill="#49c26f"/><path d="M614.1 226l2.9 3 1.6-2.6-2.8-3z" fill="#474288"/><path d="M602.6 212.3l2.9 3.7 1.7-2.6-2.9-3.6z" fill="#3f5e8d"/><path d="M637.5 238.3l2.9 1.8 1.6-2.9-2.9-1.8z" fill="#4b277a"/><path d="M672 225.6l2.9 .5 1.6-3.8-2.9-.4z" fill="#464789"/><path d="M617 229l2.8 2.9 1.7-2.6-2.9-2.9z" fill="#493b85"/><path d="M585.9 176.8l2.9 4.9 1.7-2.7-2.9-4.9z" fill="#2f9f89"/><path d="M630.1 236.8l2.9 2.2 1.6-2.7-2.9-2.2z" fill="#4c2a7d"/><path d="M599.8 208.5l2.8 3.8 1.7-2.5-2.8-3.9z" fill="#3c678e"/><path d="M644.9 238.9l2.8 1.5 1.7-3-2.9-1.5z" fill="#4b277a"/><path d="M682.7 214.8l2.9 .2 1.6-4.1-2.9-.1z" fill="#3f5f8d"/><path d="M581.8 164l2.9 5.1 1.7-2.7-2.9-5.2z" fill="#38b57c"/><path d="M589.9 188.9l2.9 4.5 1.7-2.6-2.9-4.5z" fill="#33898e"/><path d="M619.8 231.9l2.9 2.7 1.7-2.6-2.9-2.7z" fill="#4a3683"/><path d="M688.8 206.7l3-.1 1.6-4.3-2.9 .1z" fill="#3a6f8e"/><path d="M596.9 204.4l2.9 4.1 1.7-2.6-2.9-4z" fill="#3a6e8e"/><path d="M676.5 222.3l2.9 .3 1.6-3.8-2.9-.3z" fill="#444f8b"/><path d="M661.3 234.6l2.9 .8 1.6-3.4-2.9-.8z" fill="#4b3381"/><path d="M656.8 236.8l2.9 1 1.6-3.2-2.9-1z" fill="#4b2d7e"/><path d="M622.7 234.6l2.9 2.5 1.6-2.6-2.8-2.5z" fill="#4b2f80"/><path d="M633 239l2.8 2 1.7-2.7-2.9-2z" fill="#4b277a"/><path d="M640.4 240.1l2.8 1.7 1.7-2.9-2.9-1.7z" fill="#4c2379"/><path d="M665.8 232l2.9 .7 1.6-3.5-2.9-.7z" fill="#493a85"/><path d="M695 197.9l3-.3 1.6-4.5-2.9 .3z" fill="#35808e"/><path d="M652.3 238.8l2.8 1.2 1.7-3.2-2.9-1.2z" fill="#4c287b"/><path d="M577.7 150.4l2.9 5.5 1.7-2.9-2.9-5.5z" fill="#5ecb62"/><path d="M594 200.3l2.9 4.1 1.7-2.5-2.9-4.1z" fill="#37758e"/><path d="M583 171.8l2.9 5 1.7-2.7-2.9-5z" fill="#30a885"/><path d="M587.1 184.2l2.8 4.7 1.7-2.6-2.8-4.6z" fill="#30928c"/><path d="M670.3 229.2l3 .5 1.6-3.6-2.9-.5z" fill="#484187"/><path d="M625.6 237.1l2.8 2.4 1.7-2.7-2.9-2.3z" fill="#4c2a7d"/><path d="M687.2 210.9l3-.1 1.6-4.2-3 .1z" fill="#3c688e"/><path d="M647.7 240.4l2.9 1.4 1.7-3-2.9-1.4z" fill="#4c2379"/><path d="M681 218.8l3 .1 1.6-3.9-2.9-.2z" fill="#41588c"/><path d="M578.9 158.6l2.9 5.4 1.7-2.8-2.9-5.3z" fill="#44bf72"/><path d="M591.1 195.9l2.9 4.4 1.7-2.5-2.9-4.4z" fill="#357f8e"/><path d="M606.7 221.9l2.9 3.4 1.6-2.5-2.8-3.3z" fill="#444c8a"/><path d="M609.6 225.3l2.8 3.2 1.7-2.5-2.9-3.2z" fill="#474589"/><path d="M603.8 218.4l2.9 3.5 1.7-2.4-2.9-3.5z" fill="#42548c"/><path d="M635.8 241l2.9 1.9 1.7-2.8-2.9-1.8z" fill="#4c2278"/><path d="M693.4 202.3l2.9-.2 1.7-4.5-3 .3z" fill="#37788e"/><path d="M612.4 228.5l2.9 3 1.7-2.5-2.9-3z" fill="#483e87"/><path d="M674.9 226.1l2.9 .3 1.6-3.8-2.9-.3z" fill="#46498a"/><path d="M601 214.7l2.8 3.7 1.7-2.4-2.9-3.7z" fill="#3f5c8d"/><path d="M643.2 241.8l2.9 1.6 1.6-3-2.8-1.5z" fill="#4c2077"/><path d="M584.2 179.4l2.9 4.8 1.7-2.5-2.9-4.9z" fill="#2f9b8a"/><path d="M628.4 239.5l2.9 2.2 1.7-2.7-2.9-2.2z" fill="#4b277a"/><path d="M615.3 231.5l2.9 2.9 1.6-2.5-2.8-2.9z" fill="#493984"/><path d="M580.1 166.6l2.9 5.2 1.7-2.7-2.9-5.1z" fill="#36b27e"/><path d="M598.1 210.9l2.9 3.8 1.6-2.4-2.8-3.8z" fill="#3d638e"/><path d="M659.7 237.8l2.9 .9 1.6-3.3-2.9-.8z" fill="#4b2d7e"/><path d="M588.2 191.4l2.9 4.5 1.7-2.5-2.9-4.5z" fill="#33878e"/><path d="M618.2 234.4l2.8 2.7 1.7-2.5-2.9-2.7z" fill="#4b3381"/><path d="M685.6 215l2.9-.1 1.7-4.1-3 .1z" fill="#3e618d"/><path d="M664.2 235.4l2.9 .7 1.6-3.4-2.9-.7z" fill="#4b3482"/><path d="M655.1 240l2.9 1 1.7-3.2-2.9-1z" fill="#4c287b"/><path d="M679.4 222.6l2.9 .2 1.7-3.9-3-.1z" fill="#43518b"/><path d="M595.2 206.9l2.9 4 1.7-2.4-2.9-4.1z" fill="#3a6c8e"/><path d="M691.8 206.6l2.9-.2 1.6-4.3-2.9 .2z" fill="#39718e"/><path d="M668.7 232.7l2.9 .5 1.7-3.5-3-.5z" fill="#493a85"/><path d="M650.6 241.8l2.9 1.2 1.6-3-2.8-1.2z" fill="#4c2278"/><path d="M638.7 242.9l2.9 1.7 1.6-2.8-2.8-1.7z" fill="#4c1f76"/><path d="M631.3 241.7l2.9 2 1.6-2.7-2.8-2z" fill="#4c2077"/><path d="M621 237.1l2.9 2.5 1.7-2.5-2.9-2.5z" fill="#4b2b7e"/><path d="M576 153.1l2.9 5.5 1.7-2.7-2.9-5.5z" fill="#57c867"/><path d="M581.3 174.4l2.9 5 1.7-2.6-2.9-5z" fill="#2fa586"/><path d="M592.3 202.7l2.9 4.2 1.7-2.5-2.9-4.1z" fill="#38738e"/><path d="M585.4 186.7l2.8 4.7 1.7-2.5-2.8-4.7z" fill="#31908d"/><path d="M673.3 229.7l2.9 .3 1.6-3.6-2.9-.3z" fill="#474288"/><path d="M646.1 243.4l2.9 1.3 1.6-2.9-2.9-1.4z" fill="#4c1f76"/><path d="M698 197.6l2.9-.4 1.7-4.5-3 .4z" fill="#35828e"/><path d="M623.9 239.6l2.9 2.4 1.6-2.5-2.8-2.4z" fill="#4b277a"/><path d="M577.2 161.3l2.9 5.3 1.7-2.6-2.9-5.4z" fill="#41bd75"/><path d="M684 218.9l2.9 0 1.6-4-2.9 .1z" fill="#405a8d"/><path d="M690.2 210.8l2.9-.2 1.6-4.2-2.9 .2z" fill="#3b6b8e"/><path d="M634.2 243.7l2.9 1.9 1.6-2.7-2.9-1.9z" fill="#4c1e75"/><path d="M589.4 198.3l2.9 4.4 1.7-2.4-2.9-4.4z" fill="#367b8e"/><path d="M605 224.3l2.9 3.4 1.7-2.4-2.9-3.4z" fill="#454a8a"/><path d="M607.9 227.7l2.9 3.2 1.6-2.4-2.8-3.2z" fill="#474388"/><path d="M677.8 226.4l2.9 .1 1.6-3.7-2.9-.2z" fill="#454a8a"/><path d="M641.6 244.6l2.9 1.6 1.6-2.8-2.9-1.6z" fill="#4c1d74"/><path d="M602.1 220.8l2.9 3.5 1.7-2.4-2.9-3.5z" fill="#43518b"/><path d="M610.8 230.9l2.8 3 1.7-2.4-2.9-3z" fill="#493b85"/><path d="M658 241l2.9 .9 1.7-3.2-2.9-.9z" fill="#4b277a"/><path d="M662.6 238.7l2.9 .7 1.6-3.3-2.9-.7z" fill="#4b2d7e"/><path d="M626.8 242l2.9 2.2 1.6-2.5-2.9-2.2z" fill="#4c2278"/><path d="M599.3 217.1l2.8 3.7 1.7-2.4-2.8-3.7z" fill="#41598d"/><path d="M582.5 181.9l2.9 4.8 1.7-2.5-2.9-4.8z" fill="#30988b"/><path d="M696.3 202.1l3-.5 1.6-4.4-2.9 .4z" fill="#367b8e"/><path d="M653.5 243l2.9 1 1.6-3-2.9-1z" fill="#4c2278"/><path d="M667.1 236.1l2.9 .5 1.6-3.4-2.9-.5z" fill="#4b3482"/><path d="M613.6 233.9l2.9 2.9 1.7-2.4-2.9-2.9z" fill="#4a3583"/><path d="M578.4 169.2l2.9 5.2 1.7-2.6-2.9-5.2z" fill="#33af80"/><path d="M596.4 213.2l2.9 3.9 1.7-2.4-2.9-3.8z" fill="#3e618d"/><path d="M586.5 193.8l2.9 4.5 1.7-2.4-2.9-4.5z" fill="#34848e"/><path d="M649 244.7l2.9 1.2 1.6-2.9-2.9-1.2z" fill="#4c1e75"/><path d="M616.5 236.8l2.9 2.7 1.6-2.4-2.8-2.7z" fill="#4b2e7f"/><path d="M671.6 233.2l3 .3 1.6-3.5-2.9-.3z" fill="#493b85"/><path d="M688.5 214.9l3-.2 1.6-4.1-2.9 .2z" fill="#3d638e"/><path d="M682.3 222.8l3 0 1.6-3.9-2.9 0z" fill="#42538c"/><path d="M637.1 245.6l2.8 1.7 1.7-2.7-2.9-1.7z" fill="#4b1971"/><path d="M593.5 209.2l2.9 4 1.7-2.3-2.9-4z" fill="#3c698e"/><path d="M574.3 155.7l2.9 5.6 1.7-2.7-2.9-5.5z" fill="#52c66a"/><path d="M629.7 244.2l2.8 2.1 1.7-2.6-2.9-2z" fill="#4c1e75"/><path d="M619.4 239.5l2.8 2.6 1.7-2.5-2.9-2.5z" fill="#4c297c"/><path d="M694.7 206.4l3-.4 1.6-4.4-3 .5z" fill="#38748e"/><path d="M644.5 246.2l2.8 1.4 1.7-2.9-2.9-1.3z" fill="#4b1971"/><path d="M579.6 176.8l2.9 5.1 1.7-2.5-2.9-5z" fill="#2fa387"/><path d="M676.2 230l2.9 .2 1.6-3.7-2.9-.1z" fill="#464488"/><path d="M583.6 189.1l2.9 4.7 1.7-2.4-2.8-4.7z" fill="#328d8d"/><path d="M590.6 205l2.9 4.2 1.7-2.3-2.9-4.2z" fill="#39708e"/><path d="M575.4 163.8l3 5.4 1.7-2.6-2.9-5.3z" fill="#3eb978"/><path d="M622.2 242.1l2.9 2.3 1.7-2.4-2.9-2.4z" fill="#4c2379"/><path d="M660.9 241.9l2.9 .7 1.7-3.2-2.9-.7z" fill="#4c287b"/><path d="M656.4 244l2.9 .9 1.6-3-2.9-.9z" fill="#4c2077"/><path d="M686.9 218.9l3-.2 1.6-4-3 .2z" fill="#3f5d8d"/><path d="M632.5 246.3l2.9 1.9 1.7-2.6-2.9-1.9z" fill="#4b1971"/><path d="M665.5 239.4l2.9 .5 1.6-3.3-2.9-.5z" fill="#4b2e7f"/><path d="M700.9 197.2l3-.6 1.6-4.6-2.9 .7z" fill="#33868e"/><path d="M639.9 247.3l2.9 1.6 1.7-2.7-2.9-1.6z" fill="#4b166f"/><path d="M587.7 200.6l2.9 4.4 1.7-2.3-2.9-4.4z" fill="#37798e"/><path d="M651.9 245.9l2.9 1.1 1.6-3-2.9-1z" fill="#4c1d74"/><path d="M693.1 210.6l3-.4 1.6-4.2-3 .4z" fill="#3a6e8e"/><path d="M680.7 226.5l3 0 1.6-3.7-3 0z" fill="#444c8a"/><path d="M603.3 226.5l2.9 3.4 1.7-2.2-2.9-3.4z" fill="#464789"/><path d="M606.2 229.9l2.9 3.2 1.7-2.2-2.9-3.2z" fill="#484187"/><path d="M670 236.6l2.9 .4 1.7-3.5-3-.3z" fill="#4a3583"/><path d="M600.4 223l2.9 3.5 1.7-2.2-2.9-3.5z" fill="#444e8b"/><path d="M609.1 233.1l2.8 3.1 1.7-2.3-2.8-3z" fill="#493984"/><path d="M625.1 244.4l2.9 2.3 1.7-2.5-2.9-2.2z" fill="#4c1e75"/><path d="M580.7 184.2l2.9 4.9 1.8-2.4-2.9-4.8z" fill="#30968b"/><path d="M576.6 171.6l3 5.2 1.7-2.4-2.9-5.2z" fill="#32ad82"/><path d="M597.6 219.3l2.8 3.7 1.7-2.2-2.8-3.7z" fill="#41578c"/><path d="M647.3 247.6l2.9 1.2 1.7-2.9-2.9-1.2z" fill="#4b1870"/><path d="M611.9 236.2l2.9 2.9 1.7-2.3-2.9-2.9z" fill="#4b3381"/><path d="M699.3 201.6l3-.5 1.6-4.5-3 .6z" fill="#357f8e"/><path d="M674.6 233.5l2.9 .2 1.6-3.5-2.9-.2z" fill="#493d86"/><path d="M594.7 215.4l2.9 3.9 1.7-2.2-2.9-3.9z" fill="#3f5f8d"/><path d="M584.8 196l2.9 4.6 1.7-2.3-2.9-4.5z" fill="#35828e"/><path d="M635.4 248.2l2.9 1.7 1.6-2.6-2.8-1.7z" fill="#4b166f"/><path d="M614.8 239.1l2.9 2.7 1.7-2.3-2.9-2.7z" fill="#4b2b7e"/><path d="M572.5 158.3l2.9 5.5 1.8-2.5-2.9-5.6z" fill="#4dc36d"/><path d="M685.3 222.8l2.9-.2 1.7-3.9-3 .2z" fill="#41578c"/><path d="M691.5 214.7l2.9-.4 1.7-4.1-3 .4z" fill="#3c678e"/><path d="M628 246.7l2.9 2 1.6-2.4-2.8-2.1z" fill="#4b1971"/><path d="M642.8 248.9l2.9 1.4 1.6-2.7-2.8-1.4z" fill="#4b156e"/><path d="M591.8 211.4l2.9 4 1.7-2.2-2.9-4z" fill="#3c678e"/><path d="M617.7 241.8l2.9 2.6 1.6-2.3-2.8-2.6z" fill="#4b277a"/><path d="M577.8 179.2l2.9 5 1.8-2.3-2.9-5.1z" fill="#2fa188"/><path d="M679.1 230.2l2.9 0 1.7-3.7-3 0z" fill="#464689"/><path d="M659.3 244.9l2.9 .7 1.6-3-2.9-.7z" fill="#4c2278"/><path d="M663.8 242.6l3 .5 1.6-3.2-2.9-.5z" fill="#4c287b"/><path d="M697.7 206l3-.6 1.6-4.3-3 .5z" fill="#37778e"/><path d="M654.8 247l2.9 .9 1.6-3-2.9-.9z" fill="#4c1d74"/><path d="M581.9 191.3l2.9 4.7 1.7-2.2-2.9-4.7z" fill="#328b8d"/><path d="M573.7 166.2l2.9 5.4 1.8-2.4-3-5.4z" fill="#3ab77a"/><path d="M588.9 207.1l2.9 4.3 1.7-2.2-2.9-4.2z" fill="#3a6f8e"/><path d="M668.4 239.9l2.9 .4 1.6-3.3-2.9-.4z" fill="#4b2f80"/><path d="M620.6 244.4l2.8 2.4 1.7-2.4-2.9-2.3z" fill="#4c2077"/><path d="M650.2 248.8l2.9 1 1.7-2.8-2.9-1.1z" fill="#4b166f"/><path d="M638.3 249.9l2.9 1.6 1.6-2.6-2.9-1.6z" fill="#4b136d"/><path d="M630.9 248.7l2.8 1.9 1.7-2.4-2.9-1.9z" fill="#4b156e"/><path d="M672.9 237l3 .1 1.6-3.4-2.9-.2z" fill="#4a3784"/><path d="M689.9 218.7l2.9-.4 1.6-4-2.9 .4z" fill="#3f5f8d"/><path d="M683.7 226.5l2.9-.2 1.6-3.7-2.9 .2z" fill="#444f8b"/><path d="M586 202.8l2.9 4.3 1.7-2.1-2.9-4.4z" fill="#37778e"/><path d="M645.7 250.3l2.9 1.2 1.6-2.7-2.9-1.2z" fill="#4b136d"/><path d="M601.6 228.7l2.9 3.4 1.7-2.2-2.9-3.4z" fill="#474589"/><path d="M703.9 196.6l3-.8 1.6-4.5-3 .7z" fill="#33898e"/><path d="M604.5 232.1l2.9 3.2 1.7-2.2-2.9-3.2z" fill="#493d86"/><path d="M696.1 210.2l2.9-.6 1.7-4.2-3 .6z" fill="#39708e"/><path d="M623.4 246.8l2.9 2.2 1.7-2.3-2.9-2.3z" fill="#4c1a73"/><path d="M574.9 173.9l2.9 5.3 1.8-2.4-3-5.2z" fill="#31ab83"/><path d="M579 186.4l2.9 4.9 1.7-2.2-2.9-4.9z" fill="#30948c"/><path d="M598.7 225.1l2.9 3.6 1.7-2.2-2.9-3.5z" fill="#444d8b"/><path d="M607.4 235.3l2.9 3.1 1.6-2.2-2.8-3.1z" fill="#4a3683"/><path d="M595.9 221.4l2.8 3.7 1.7-2.1-2.8-3.7z" fill="#42548c"/><path d="M677.5 233.7l2.9 0 1.6-3.5-2.9 0z" fill="#484187"/><path d="M610.3 238.4l2.8 2.9 1.7-2.2-2.9-2.9z" fill="#4b2f80"/><path d="M633.7 250.6l2.9 1.8 1.7-2.5-2.9-1.7z" fill="#4b126c"/><path d="M570.8 160.7l2.9 5.5 1.7-2.4-2.9-5.5z" fill="#48c170"/><path d="M583.1 198.2l2.9 4.6 1.7-2.2-2.9-4.6z" fill="#35818e"/><path d="M593 217.5l2.9 3.9 1.7-2.1-2.9-3.9z" fill="#3f5d8d"/><path d="M641.2 251.5l2.9 1.4 1.6-2.6-2.9-1.4z" fill="#4b106a"/><path d="M613.1 241.3l2.9 2.7 1.7-2.2-2.9-2.7z" fill="#4c297c"/><path d="M662.2 245.6l2.9 .6 1.7-3.1-3-.5z" fill="#4c2278"/><path d="M657.7 247.9l2.9 .7 1.6-3-2.9-.7z" fill="#4c1d74"/><path d="M702.3 201.1l3-.8 1.6-4.5-3 .8z" fill="#35828e"/><path d="M626.3 249l2.9 2.1 1.7-2.4-2.9-2z" fill="#4b166f"/><path d="M688.2 222.6l3-.4 1.6-3.9-2.9 .4z" fill="#41598d"/><path d="M666.8 243.1l2.9 .4 1.6-3.2-2.9-.4z" fill="#4c297c"/><path d="M653.1 249.8l2.9 .9 1.7-2.8-2.9-.9z" fill="#4b166f"/><path d="M590.1 213.5l2.9 4 1.7-2.1-2.9-4z" fill="#3c648e"/><path d="M694.4 214.3l3-.5 1.6-4.2-2.9 .6z" fill="#3b6a8e"/><path d="M576.1 181.4l2.9 5 1.7-2.2-2.9-5z" fill="#2f9f89"/><path d="M616 244l2.9 2.6 1.7-2.2-2.9-2.6z" fill="#4c2379"/><path d="M682 230.2l3-.2 1.6-3.7-2.9 .2z" fill="#46498a"/><path d="M671.3 240.3l2.9 .2 1.7-3.4-3-.1z" fill="#4b3081"/><path d="M572 168.5l2.9 5.4 1.7-2.3-2.9-5.4z" fill="#37b47c"/><path d="M648.6 251.5l2.9 1.1 1.6-2.8-2.9-1z" fill="#4b126c"/><path d="M580.2 193.5l2.9 4.7 1.7-2.2-2.9-4.7z" fill="#33898e"/><path d="M587.2 209.2l2.9 4.3 1.7-2.1-2.9-4.3z" fill="#3a6e8e"/><path d="M636.6 252.4l2.9 1.6 1.7-2.5-2.9-1.6z" fill="#4b0f69"/><path d="M700.7 205.4l2.9-.7 1.7-4.4-3 .8z" fill="#377a8e"/><path d="M618.9 246.6l2.9 2.4 1.6-2.2-2.8-2.4z" fill="#4c1e75"/><path d="M629.2 251.1l2.9 1.9 1.6-2.4-2.8-1.9z" fill="#4b126c"/><path d="M675.9 237.1l2.9 .1 1.6-3.5-2.9 0z" fill="#493a85"/><path d="M644.1 252.9l2.9 1.2 1.6-2.6-2.9-1.2z" fill="#4b0f69"/><path d="M686.6 226.3l3-.3 1.6-3.8-3 .4z" fill="#43528c"/><path d="M692.8 218.3l3-.5 1.6-4-3 .5z" fill="#3d638e"/><path d="M584.3 204.8l2.9 4.4 1.7-2.1-2.9-4.3z" fill="#37758e"/><path d="M573.2 176.2l2.9 5.2 1.7-2.2-2.9-5.3z" fill="#30a885"/><path d="M621.8 249l2.9 2.3 1.6-2.3-2.9-2.2z" fill="#4b1870"/><path d="M577.3 188.6l2.9 4.9 1.7-2.2-2.9-4.9z" fill="#30928c"/><path d="M599.9 230.7l2.9 3.4 1.7-2-2.9-3.4z" fill="#464488"/><path d="M602.8 234.1l2.9 3.3 1.7-2.1-2.9-3.2z" fill="#493b85"/><path d="M597 227.2l2.9 3.5 1.7-2-2.9-3.6z" fill="#454b8a"/><path d="M605.7 237.4l2.9 3 1.7-2-2.9-3.1z" fill="#4a3583"/><path d="M660.6 248.6l2.9 .6 1.6-3-2.9-.6z" fill="#4c1d74"/><path d="M680.4 233.7l3-.1 1.6-3.6-3 .2z" fill="#474388"/><path d="M665.1 246.2l2.9 .4 1.7-3.1-2.9-.4z" fill="#4c2379"/><path d="M699 209.6l3-.7 1.6-4.2-2.9 .7z" fill="#38738e"/><path d="M656 250.7l2.9 .8 1.7-2.9-2.9-.7z" fill="#4b166f"/><path d="M632.1 253l2.9 1.8 1.6-2.4-2.9-1.8z" fill="#4b0f69"/><path d="M594.1 223.4l2.9 3.8 1.7-2.1-2.8-3.7z" fill="#42538c"/><path d="M706.9 195.8l3-.9 1.6-4.6-3 1z" fill="#328d8d"/><path d="M569.1 163l2.9 5.5 1.7-2.3-2.9-5.5z" fill="#44bf72"/><path d="M608.6 240.4l2.9 3 1.6-2.1-2.8-2.9z" fill="#4b2d7e"/><path d="M639.5 254l2.9 1.4 1.7-2.5-2.9-1.4z" fill="#4a0a67"/><path d="M669.7 243.5l2.9 .2 1.6-3.2-2.9-.2z" fill="#4b2b7e"/><path d="M581.4 200.3l2.9 4.5 1.7-2-2.9-4.6z" fill="#357f8e"/><path d="M651.5 252.6l2.9 .9 1.6-2.8-2.9-.9z" fill="#4b126c"/><path d="M591.3 219.5l2.8 3.9 1.8-2-2.9-3.9z" fill="#405b8d"/><path d="M611.5 243.4l2.8 2.7 1.7-2.1-2.9-2.7z" fill="#4c287b"/><path d="M624.7 251.3l2.8 2 1.7-2.2-2.9-2.1z" fill="#4b136d"/><path d="M691.2 222.2l3-.5 1.6-3.9-3 .5z" fill="#3f5c8d"/><path d="M674.2 240.5l3 0 1.6-3.3-2.9-.1z" fill="#4b3482"/><path d="M574.4 183.5l2.9 5.1 1.7-2.2-2.9-5z" fill="#2f9d89"/><path d="M647 254.1l2.9 1.1 1.6-2.6-2.9-1.1z" fill="#4b0d68"/><path d="M588.4 215.4l2.9 4.1 1.7-2-2.9-4z" fill="#3d638e"/><path d="M685 230l2.9-.3 1.7-3.7-3 .3z" fill="#444c8a"/><path d="M705.3 200.3l3-.9 1.6-4.5-3 .9z" fill="#33868e"/><path d="M614.3 246.1l2.9 2.6 1.7-2.1-2.9-2.6z" fill="#4c2077"/><path d="M570.3 170.7l2.9 5.5 1.7-2.3-2.9-5.4z" fill="#36b27e"/><path d="M697.4 213.8l3-.8 1.6-4.1-3 .7z" fill="#3a6e8e"/><path d="M578.5 195.5l2.9 4.8 1.7-2.1-2.9-4.7z" fill="#33878e"/><path d="M635 254.8l2.9 1.5 1.6-2.3-2.9-1.6z" fill="#4a0a67"/><path d="M585.5 211.2l2.9 4.2 1.7-1.9-2.9-4.3z" fill="#3a6c8e"/><path d="M627.5 253.3l2.9 2 1.7-2.3-2.9-1.9z" fill="#4b0f69"/><path d="M678.8 237.2l2.9-.2 1.7-3.4-3 .1z" fill="#493c86"/><path d="M617.2 248.7l2.9 2.4 1.7-2.1-2.9-2.4z" fill="#4c1a73"/><path d="M642.4 255.4l2.9 1.2 1.7-2.5-2.9-1.2z" fill="#490965"/><path d="M703.6 204.7l3-1 1.7-4.3-3 .9z" fill="#357f8e"/><path d="M658.9 251.5l3 .5 1.6-2.8-2.9-.6z" fill="#4b1870"/><path d="M663.5 249.2l2.9 .4 1.6-3-2.9-.4z" fill="#4c1e75"/><path d="M654.4 253.5l2.9 .7 1.6-2.7-2.9-.8z" fill="#4b126c"/><path d="M571.4 178.3l3 5.2 1.7-2.1-2.9-5.2z" fill="#30a685"/><path d="M689.6 226l2.9-.5 1.7-3.8-3 .5z" fill="#41578c"/><path d="M582.6 206.8l2.9 4.4 1.7-2-2.9-4.4z" fill="#38748e"/><path d="M668 246.6l3 .2 1.6-3.1-2.9-.2z" fill="#4b247a"/><path d="M620.1 251.1l2.9 2.3 1.7-2.1-2.9-2.3z" fill="#4b156e"/><path d="M575.5 190.6l3 4.9 1.7-2-2.9-4.9z" fill="#31918c"/><path d="M695.8 217.8l3-.7 1.6-4.1-3 .8z" fill="#3c678e"/><path d="M598.2 232.6l2.9 3.5 1.7-2-2.9-3.4z" fill="#474288"/><path d="M601.1 236.1l2.9 3.2 1.7-1.9-2.9-3.3z" fill="#493a85"/><path d="M683.4 233.6l2.9-.3 1.6-3.6-2.9 .3z" fill="#464689"/><path d="M567.3 165.2l3 5.5 1.7-2.2-2.9-5.5z" fill="#42be74"/><path d="M630.4 255.3l2.9 1.7 1.7-2.2-2.9-1.8z" fill="#4a0a67"/><path d="M595.3 229.1l2.9 3.5 1.7-1.9-2.9-3.5z" fill="#454a8a"/><path d="M604 239.3l2.9 3.1 1.7-2-2.9-3z" fill="#4b3381"/><path d="M649.9 255.2l2.9 .9 1.6-2.6-2.9-.9z" fill="#4b0d68"/><path d="M637.9 256.3l2.9 1.5 1.6-2.4-2.9-1.4z" fill="#490664"/><path d="M672.6 243.7l2.9 0 1.7-3.2-3 0z" fill="#4b2d7e"/><path d="M592.4 225.3l2.9 3.8 1.7-1.9-2.9-3.8z" fill="#43528c"/><path d="M606.9 242.4l2.9 2.9 1.7-1.9-2.9-3z" fill="#4b2b7e"/><path d="M702 208.9l3-.9 1.6-4.3-3 1z" fill="#37778e"/><path d="M579.6 202.2l3 4.6 1.7-2-2.9-4.5z" fill="#357d8e"/><path d="M623 253.4l2.9 2.1 1.6-2.2-2.8-2z" fill="#4b106a"/><path d="M589.5 221.4l2.9 3.9 1.7-1.9-2.8-3.9z" fill="#405a8d"/><path d="M709.9 194.9l3-1.1 1.6-4.6-3 1.1z" fill="#30928c"/><path d="M609.8 245.3l2.8 2.8 1.7-2-2.8-2.7z" fill="#4b247a"/><path d="M645.3 256.6l2.9 1.1 1.7-2.5-2.9-1.1z" fill="#490965"/><path d="M677.2 240.5l2.9-.1 1.6-3.4-2.9 .2z" fill="#4a3683"/><path d="M572.6 185.5l2.9 5.1 1.8-2-2.9-5.1z" fill="#2f9a8a"/><path d="M568.5 172.8l2.9 5.5 1.8-2.1-2.9-5.5z" fill="#34b07f"/><path d="M694.2 221.7l2.9-.7 1.7-3.9-3 .7z" fill="#3e608d"/><path d="M687.9 229.7l3-.5 1.6-3.7-2.9 .5z" fill="#444f8b"/><path d="M586.6 217.3l2.9 4.1 1.8-1.9-2.9-4.1z" fill="#3d628e"/><path d="M612.6 248.1l2.9 2.6 1.7-2-2.9-2.6z" fill="#4c1f76"/><path d="M633.3 257l2.9 1.6 1.7-2.3-2.9-1.5z" fill="#490664"/><path d="M576.7 197.5l2.9 4.7 1.8-1.9-2.9-4.8z" fill="#33868e"/><path d="M661.9 252l2.9 .5 1.6-2.9-2.9-.4z" fill="#4b1971"/><path d="M640.8 257.8l2.9 1.2 1.6-2.4-2.9-1.2z" fill="#490563"/><path d="M708.3 199.4l3-1.1 1.6-4.5-3 1.1z" fill="#338a8d"/><path d="M625.9 255.5l2.9 1.9 1.6-2.1-2.9-2z" fill="#4a0a67"/><path d="M700.4 213l3-.8 1.6-4.2-3 .9z" fill="#39718e"/><path d="M657.3 254.2l2.9 .6 1.7-2.8-3-.5z" fill="#4b126c"/><path d="M681.7 237l3-.3 1.6-3.4-2.9 .3z" fill="#484187"/><path d="M666.4 249.6l3 .2 1.6-3-3-.2z" fill="#4c2077"/><path d="M583.7 213.1l2.9 4.2 1.8-1.9-2.9-4.2z" fill="#3b6b8e"/><path d="M615.5 250.7l2.9 2.4 1.7-2-2.9-2.4z" fill="#4b1971"/><path d="M652.8 256.1l2.9 .8 1.6-2.7-2.9-.7z" fill="#4b0d68"/><path d="M671 246.8l2.9 .1 1.6-3.2-2.9 0z" fill="#4c287b"/><path d="M569.7 180.3l2.9 5.2 1.8-2-3-5.2z" fill="#2fa586"/><path d="M648.2 257.7l2.9 1 1.7-2.6-2.9-.9z" fill="#490664"/><path d="M580.8 208.6l2.9 4.5 1.8-1.9-2.9-4.4z" fill="#38738e"/><path d="M618.4 253.1l2.9 2.3 1.7-2-2.9-2.3z" fill="#4b136d"/><path d="M692.5 225.5l3-.7 1.6-3.8-2.9 .7z" fill="#405a8d"/><path d="M706.6 203.7l3.1-1 1.6-4.4-3 1.1z" fill="#34838e"/><path d="M573.8 192.5l2.9 5 1.8-2-3-4.9z" fill="#31908d"/><path d="M675.5 243.7l3-.1 1.6-3.2-2.9 .1z" fill="#4b3081"/><path d="M636.2 258.6l2.9 1.5 1.7-2.3-2.9-1.5z" fill="#490361"/><path d="M565.6 167.2l2.9 5.6 1.8-2.1-3-5.5z" fill="#40bc76"/><path d="M628.8 257.4l2.8 1.8 1.7-2.2-2.9-1.7z" fill="#490664"/><path d="M686.3 233.3l3-.5 1.6-3.6-3 .5z" fill="#454a8a"/><path d="M599.4 237.9l2.9 3.3 1.7-1.9-2.9-3.2z" fill="#493984"/><path d="M596.5 234.5l2.9 3.4 1.7-1.8-2.9-3.5z" fill="#484187"/><path d="M698.8 217.1l3-.9 1.6-4-3 .8z" fill="#3b6b8e"/><path d="M602.3 241.2l2.9 3.1 1.7-1.9-2.9-3.1z" fill="#4b3081"/><path d="M593.6 230.9l2.9 3.6 1.7-1.9-2.9-3.5z" fill="#46498a"/><path d="M605.2 244.3l2.9 2.9 1.7-1.9-2.9-2.9z" fill="#4c2a7d"/><path d="M643.7 259l2.9 1.1 1.6-2.4-2.9-1.1z" fill="#490361"/><path d="M590.7 227.1l2.9 3.8 1.7-1.8-2.9-3.8z" fill="#43518b"/><path d="M577.9 204l2.9 4.6 1.8-1.8-3-4.6z" fill="#367c8e"/><path d="M621.3 255.4l2.9 2.1 1.7-2-2.9-2.1z" fill="#4b0f69"/><path d="M680.1 240.4l3-.3 1.6-3.4-3 .3z" fill="#493a85"/><path d="M608.1 247.2l2.9 2.8 1.6-1.9-2.8-2.8z" fill="#4c2379"/><path d="M587.8 223.2l2.9 3.9 1.7-1.8-2.9-3.9z" fill="#41598d"/><path d="M705 208l3-1.1 1.7-4.2-3.1 1z" fill="#367c8e"/><path d="M660.2 254.8l3 .4 1.6-2.7-2.9-.5z" fill="#4b136d"/><path d="M570.9 187.4l2.9 5.1 1.7-1.9-2.9-5.1z" fill="#2f998a"/><path d="M664.8 252.5l2.9 .2 1.7-2.9-3-.2z" fill="#4c1a73"/><path d="M566.8 174.8l2.9 5.5 1.7-2-2.9-5.5z" fill="#33af80"/><path d="M655.7 256.9l2.9 .6 1.6-2.7-2.9-.6z" fill="#4b0d68"/><path d="M631.6 259.2l2.9 1.6 1.7-2.2-2.9-1.6z" fill="#490361"/><path d="M712.9 193.8l3-1.3 1.7-4.6-3.1 1.3z" fill="#30968b"/><path d="M611 250l2.8 2.6 1.7-1.9-2.9-2.6z" fill="#4c1e75"/><path d="M690.9 229.2l3-.7 1.6-3.7-3 .7z" fill="#42538c"/><path d="M669.4 249.8l2.9 .1 1.6-3-2.9-.1z" fill="#4c2278"/><path d="M584.9 219.1l2.9 4.1 1.7-1.8-2.9-4.1z" fill="#3e618d"/><path d="M639.1 260.1l2.9 1.2 1.7-2.3-2.9-1.2z" fill="#490260"/><path d="M697.1 221l3-.9 1.7-3.9-3 .9z" fill="#3c648e"/><path d="M651.1 258.7l2.9 .7 1.7-2.5-2.9-.8z" fill="#490664"/><path d="M575 199.3l2.9 4.7 1.7-1.8-2.9-4.7z" fill="#34858e"/><path d="M624.2 257.5l2.9 2 1.7-2.1-2.9-1.9z" fill="#490965"/><path d="M684.7 236.7l3-.5 1.6-3.4-3 .5z" fill="#464488"/><path d="M673.9 246.9l3-.2 1.6-3.1-3 .1z" fill="#4c2a7d"/><path d="M613.8 252.6l2.9 2.4 1.7-1.9-2.9-2.4z" fill="#4b1870"/><path d="M582 214.8l2.9 4.3 1.7-1.8-2.9-4.2z" fill="#3b6a8e"/><path d="M703.4 212.2l3-1.1 1.6-4.2-3 1.1z" fill="#37758e"/><path d="M711.3 198.3l3-1.3 1.6-4.5-3 1.3z" fill="#318f8d"/><path d="M646.6 260.1l2.9 1 1.6-2.4-2.9-1z" fill="#490361"/><path d="M567.9 182.2l3 5.2 1.7-1.9-2.9-5.2z" fill="#2fa486"/><path d="M678.5 243.6l3-.3 1.6-3.2-3 .3z" fill="#4b3482"/><path d="M634.5 260.8l2.9 1.5 1.7-2.2-2.9-1.5z" fill="#48005e"/><path d="M616.7 255l2.9 2.3 1.7-1.9-2.9-2.3z" fill="#4b126c"/><path d="M563.8 169.2l3 5.6 1.7-2-2.9-5.6z" fill="#3eb978"/><path d="M579.1 210.4l2.9 4.4 1.7-1.7-2.9-4.5z" fill="#39728e"/><path d="M572.1 194.3l2.9 5 1.7-1.8-2.9-5z" fill="#318f8d"/><path d="M627.1 259.5l2.9 1.7 1.6-2-2.8-1.8z" fill="#490361"/><path d="M695.5 224.8l3-.8 1.6-3.9-3 .9z" fill="#3f5e8d"/><path d="M689.3 232.8l3-.7 1.6-3.6-3 .7z" fill="#444d8b"/><path d="M642 261.3l2.9 1.2 1.7-2.4-2.9-1.1z" fill="#48005e"/><path d="M597.7 239.6l2.9 3.3 1.7-1.7-2.9-3.3z" fill="#4a3784"/><path d="M594.8 236.2l2.9 3.4 1.7-1.7-2.9-3.4z" fill="#484187"/><path d="M709.7 202.7l3-1.3 1.6-4.4-3 1.3z" fill="#33888e"/><path d="M600.6 242.9l2.9 3.1 1.7-1.7-2.9-3.1z" fill="#4b3081"/><path d="M591.9 232.6l2.9 3.6 1.7-1.7-2.9-3.6z" fill="#464789"/><path d="M663.2 255.2l2.9 .3 1.6-2.8-2.9-.2z" fill="#4b166f"/><path d="M701.8 216.2l3-1 1.6-4.1-3 1.1z" fill="#3a708e"/><path d="M658.6 257.5l2.9 .4 1.7-2.7-3-.4z" fill="#4b0f69"/><path d="M603.5 246l2.9 3 1.7-1.8-2.9-2.9z" fill="#4c297c"/><path d="M683.1 240.1l2.9-.5 1.7-3.4-3 .5z" fill="#493d86"/><path d="M667.7 252.7l3 .1 1.6-2.9-2.9-.1z" fill="#4c1e75"/><path d="M589 228.8l2.9 3.8 1.7-1.7-2.9-3.8z" fill="#444f8b"/><path d="M619.6 257.3l2.9 2.1 1.7-1.9-2.9-2.1z" fill="#4b0d68"/><path d="M576.2 205.8l2.9 4.6 1.7-1.8-2.9-4.6z" fill="#367b8e"/><path d="M654 259.4l3 .6 1.6-2.5-2.9-.6z" fill="#490965"/><path d="M606.4 249l2.9 2.7 1.7-1.7-2.9-2.8z" fill="#4c2278"/><path d="M672.3 249.9l2.9-.1 1.7-3.1-3 .2z" fill="#4b277a"/><path d="M586.1 224.8l2.9 4 1.7-1.7-2.9-3.9z" fill="#41588c"/><path d="M565 176.7l2.9 5.5 1.8-1.9-2.9-5.5z" fill="#33ae81"/><path d="M569.1 189.2l3 5.1 1.7-1.8-2.9-5.1z" fill="#30988b"/><path d="M630 261.2l2.9 1.7 1.6-2.1-2.9-1.6z" fill="#48005e"/><path d="M649.5 261.1l2.9 .8 1.6-2.5-2.9-.7z" fill="#490361"/><path d="M637.4 262.3l2.9 1.2 1.7-2.2-2.9-1.2z" fill="#48005d"/><path d="M708 206.9l3-1.2 1.7-4.3-3 1.3z" fill="#35828e"/><path d="M609.3 251.7l2.8 2.7 1.7-1.8-2.8-2.6z" fill="#4c1d74"/><path d="M583.2 220.7l2.9 4.1 1.7-1.6-2.9-4.1z" fill="#3e608d"/><path d="M693.9 228.5l3-.8 1.6-3.7-3 .8z" fill="#41588c"/><path d="M676.9 246.7l2.9-.2 1.7-3.2-3 .3z" fill="#4b2e7f"/><path d="M622.5 259.4l2.9 2 1.7-1.9-2.9-2z" fill="#490664"/><path d="M573.2 201l3 4.8 1.7-1.8-2.9-4.7z" fill="#34848e"/><path d="M687.7 236.2l3-.6 1.6-3.5-3 .7z" fill="#464789"/><path d="M700.1 220.1l3-1 1.7-3.9-3 1z" fill="#3c698e"/><path d="M715.9 192.5l3.1-1.4 1.6-4.7-3 1.5z" fill="#2f9b8a"/><path d="M644.9 262.5l2.9 .9 1.7-2.3-2.9-1z" fill="#48005e"/><path d="M612.1 254.4l2.9 2.4 1.7-1.8-2.9-2.4z" fill="#4b166f"/><path d="M580.2 216.5l3 4.2 1.7-1.6-2.9-4.3z" fill="#3c698e"/><path d="M681.5 243.3l2.9-.4 1.6-3.3-2.9 .5z" fill="#4a3784"/><path d="M566.2 183.9l2.9 5.3 1.8-1.8-3-5.2z" fill="#2fa287"/><path d="M632.9 262.9l2.9 1.4 1.6-2-2.9-1.5z" fill="#48005d"/><path d="M706.4 211.1l3-1.2 1.6-4.2-3 1.2z" fill="#377a8e"/><path d="M562 171.1l3 5.6 1.8-1.9-3-5.6z" fill="#3cb879"/><path d="M661.5 257.9l3 .3 1.6-2.7-2.9-.3z" fill="#4b126c"/><path d="M625.4 261.4l2.9 1.8 1.7-2-2.9-1.7z" fill="#490260"/><path d="M615 256.8l2.9 2.3 1.7-1.8-2.9-2.3z" fill="#4b106a"/><path d="M714.3 197l3.1-1.4 1.6-4.5-3.1 1.4z" fill="#30938c"/><path d="M666.1 255.5l2.9 .1 1.7-2.8-3-.1z" fill="#4b1870"/><path d="M570.3 196l2.9 5 1.8-1.7-2.9-5z" fill="#318e8d"/><path d="M640.3 263.5l3 1.2 1.6-2.2-2.9-1.2z" fill="#48005c"/><path d="M657 260l2.9 .5 1.6-2.6-2.9-.4z" fill="#4a0a67"/><path d="M577.3 212l2.9 4.5 1.8-1.7-2.9-4.4z" fill="#39718e"/><path d="M692.3 232.1l3-.8 1.6-3.6-3 .8z" fill="#43528c"/><path d="M670.7 252.8l2.9-.1 1.6-2.9-2.9 .1z" fill="#4c2077"/><path d="M698.5 224l3-1 1.6-3.9-3 1z" fill="#3d628e"/><path d="M652.4 261.9l2.9 .6 1.7-2.5-3-.6z" fill="#490361"/><path d="M596 241.2l2.9 3.3 1.7-1.6-2.9-3.3z" fill="#4a3784"/><path d="M593.1 237.8l2.9 3.4 1.7-1.6-2.9-3.4z" fill="#483e87"/><path d="M598.9 244.5l2.9 3.2 1.7-1.7-2.9-3.1z" fill="#4b2f80"/><path d="M590.2 234.2l2.9 3.6 1.7-1.6-2.9-3.6z" fill="#464789"/><path d="M686 239.6l3-.6 1.7-3.4-3 .6z" fill="#474288"/><path d="M617.9 259.1l2.9 2.2 1.7-1.9-2.9-2.1z" fill="#4a0a67"/><path d="M601.8 247.7l2.9 2.9 1.7-1.6-2.9-3z" fill="#4c297c"/><path d="M675.2 249.8l3-.3 1.6-3-2.9 .2z" fill="#4c297c"/><path d="M587.2 230.4l3 3.8 1.7-1.6-2.9-3.8z" fill="#444f8b"/><path d="M712.7 201.4l3-1.4 1.7-4.4-3.1 1.4z" fill="#328d8d"/><path d="M574.4 207.4l2.9 4.6 1.8-1.6-2.9-4.6z" fill="#377a8e"/><path d="M704.8 215.2l3-1.2 1.6-4.1-3 1.2z" fill="#38738e"/><path d="M647.8 263.4l2.9 .8 1.7-2.3-2.9-.8z" fill="#48005e"/><path d="M563.2 178.5l3 5.4 1.7-1.7-2.9-5.5z" fill="#32ad82"/><path d="M635.8 264.3l2.9 1.3 1.6-2.1-2.9-1.2z" fill="#48005c"/><path d="M628.3 263.2l2.9 1.6 1.7-1.9-2.9-1.7z" fill="#48005d"/><path d="M604.7 250.6l2.8 2.8 1.8-1.7-2.9-2.7z" fill="#4c2278"/><path d="M567.4 190.9l2.9 5.1 1.8-1.7-3-5.1z" fill="#30978b"/><path d="M584.3 226.4l2.9 4 1.8-1.6-2.9-4z" fill="#41588c"/><path d="M679.8 246.5l3-.5 1.6-3.1-2.9 .4z" fill="#4b3381"/><path d="M607.5 253.4l2.9 2.7 1.7-1.7-2.8-2.7z" fill="#4c1a73"/><path d="M643.3 264.7l2.9 .9 1.6-2.2-2.9-.9z" fill="#48005c"/><path d="M620.8 261.3l2.9 1.9 1.7-1.8-2.9-2z" fill="#490563"/><path d="M581.4 222.3l2.9 4.1 1.8-1.6-2.9-4.1z" fill="#3e608d"/><path d="M696.9 227.7l3-1 1.6-3.7-3 1z" fill="#3f5d8d"/><path d="M571.5 202.6l2.9 4.8 1.8-1.6-3-4.8z" fill="#34838e"/><path d="M690.7 235.6l2.9-.8 1.7-3.5-3 .8z" fill="#444c8a"/><path d="M711 205.7l3.1-1.4 1.6-4.3-3 1.4z" fill="#33868e"/><path d="M610.4 256.1l2.9 2.4 1.7-1.7-2.9-2.4z" fill="#4b156e"/><path d="M703.1 219.1l3.1-1.2 1.6-3.9-3 1.2z" fill="#3a6e8e"/><path d="M664.5 258.2l2.9 .1 1.6-2.7-2.9-.1z" fill="#4b136d"/><path d="M659.9 260.5l2.9 .3 1.7-2.6-3-.3z" fill="#4b0d68"/><path d="M578.5 218l2.9 4.3 1.8-1.6-3-4.2z" fill="#3c698e"/><path d="M669 255.6l3-.1 1.6-2.8-2.9 .1z" fill="#4c1d74"/><path d="M655.3 262.5l2.9 .4 1.7-2.4-2.9-.5z" fill="#490563"/><path d="M631.2 264.8l2.9 1.5 1.7-2-2.9-1.4z" fill="#48005c"/><path d="M684.4 242.9l3-.6 1.6-3.3-3 .6z" fill="#493c86"/><path d="M564.4 185.6l3 5.3 1.7-1.7-2.9-5.3z" fill="#2fa287"/><path d="M719 191.1l3-1.7 1.7-4.6-3.1 1.6z" fill="#2fa288"/><path d="M560.3 172.8l2.9 5.7 1.8-1.8-3-5.6z" fill="#3bb779"/><path d="M638.7 265.6l2.9 1.2 1.7-2.1-3-1.2z" fill="#47005a"/><path d="M623.7 263.2l2.9 1.8 1.7-1.8-2.9-1.8z" fill="#48005e"/><path d="M673.6 252.7l3-.2 1.6-3-3 .3z" fill="#4b247a"/><path d="M650.7 264.2l3 .6 1.6-2.3-2.9-.6z" fill="#48005e"/><path d="M613.3 258.5l2.9 2.3 1.7-1.7-2.9-2.3z" fill="#4b0f69"/><path d="M568.5 197.6l3 5 1.7-1.6-2.9-5z" fill="#328d8d"/><path d="M709.4 209.9l3.1-1.4 1.6-4.2-3.1 1.4z" fill="#35808e"/><path d="M575.6 213.5l2.9 4.5 1.7-1.5-2.9-4.5z" fill="#39718e"/><path d="M695.3 231.3l3-1 1.6-3.6-3 1z" fill="#41578c"/><path d="M717.4 195.6l3-1.6 1.6-4.6-3 1.7z" fill="#2f998a"/><path d="M678.2 249.5l3-.4 1.6-3.1-3 .5z" fill="#4b2d7e"/><path d="M646.2 265.6l2.9 .8 1.6-2.2-2.9-.8z" fill="#48005c"/><path d="M594.2 242.7l2.9 3.4 1.8-1.6-2.9-3.3z" fill="#4a3784"/><path d="M591.3 239.3l2.9 3.4 1.8-1.5-2.9-3.4z" fill="#483e87"/><path d="M701.5 223l3-1.2 1.7-3.9-3.1 1.2z" fill="#3c688e"/><path d="M689 239l3-.8 1.6-3.4-2.9 .8z" fill="#464689"/><path d="M597.1 246.1l2.9 3.1 1.8-1.5-2.9-3.2z" fill="#4b2f80"/><path d="M588.4 235.6l2.9 3.7 1.8-1.5-2.9-3.6z" fill="#464789"/><path d="M616.2 260.8l2.9 2.2 1.7-1.7-2.9-2.2z" fill="#490965"/><path d="M600 249.2l2.9 3 1.8-1.6-2.9-2.9z" fill="#4c297c"/><path d="M634.1 266.3l2.9 1.3 1.7-2-2.9-1.3z" fill="#460059"/><path d="M572.6 208.9l3 4.6 1.7-1.5-2.9-4.6z" fill="#377a8e"/><path d="M585.5 231.8l2.9 3.8 1.8-1.4-3-3.8z" fill="#444f8b"/><path d="M626.6 265l2.9 1.7 1.7-1.9-2.9-1.6z" fill="#48005c"/><path d="M561.5 180.1l2.9 5.5 1.8-1.7-3-5.4z" fill="#32ad82"/><path d="M565.6 192.5l2.9 5.1 1.8-1.6-2.9-5.1z" fill="#30978b"/><path d="M602.9 252.2l2.9 2.8 1.7-1.6-2.8-2.8z" fill="#4c2278"/><path d="M707.8 214l3-1.4 1.7-4.1-3.1 1.4z" fill="#37798e"/><path d="M682.8 246l3-.6 1.6-3.1-3 .6z" fill="#4a3784"/><path d="M582.6 227.9l2.9 3.9 1.7-1.4-2.9-4z" fill="#41588c"/><path d="M641.6 266.8l2.9 .9 1.7-2.1-2.9-.9z" fill="#460059"/><path d="M715.7 200l3.1-1.6 1.6-4.4-3 1.6z" fill="#30928c"/><path d="M662.8 260.8l3 .1 1.6-2.6-2.9-.1z" fill="#4b106a"/><path d="M658.2 262.9l3 .3 1.6-2.4-2.9-.3z" fill="#490664"/><path d="M667.4 258.3l3-.1 1.6-2.7-3 .1z" fill="#4b1870"/><path d="M605.8 255l2.9 2.6 1.7-1.5-2.9-2.7z" fill="#4c1a73"/><path d="M619.1 263l2.9 2 1.7-1.8-2.9-1.9z" fill="#490361"/><path d="M579.7 223.7l2.9 4.2 1.7-1.5-2.9-4.1z" fill="#3e608d"/><path d="M653.7 264.8l2.9 .5 1.6-2.4-2.9-.4z" fill="#490260"/><path d="M569.7 204.1l2.9 4.8 1.8-1.5-2.9-4.8z" fill="#34838e"/><path d="M693.6 234.8l3.1-1 1.6-3.5-3 1z" fill="#43518b"/><path d="M672 255.5l2.9-.2 1.7-2.8-3 .2z" fill="#4c1f76"/><path d="M699.9 226.7l3-1.2 1.6-3.7-3 1.2z" fill="#3d628e"/><path d="M608.7 257.6l2.9 2.5 1.7-1.6-2.9-2.4z" fill="#4b156e"/><path d="M629.5 266.7l2.9 1.5 1.7-1.9-2.9-1.5z" fill="#47005a"/><path d="M687.4 242.3l3-.8 1.6-3.3-3 .8z" fill="#474288"/><path d="M714.1 204.3l3-1.6 1.7-4.3-3.1 1.6z" fill="#328c8d"/><path d="M637 267.6l2.9 1.2 1.7-2-2.9-1.2z" fill="#460057"/><path d="M649.1 266.4l2.9 .7 1.7-2.3-3-.6z" fill="#48005c"/><path d="M576.7 219.4l3 4.3 1.7-1.4-2.9-4.3z" fill="#3c698e"/><path d="M562.6 187.2l3 5.3 1.8-1.6-3-5.3z" fill="#2fa288"/><path d="M676.6 252.5l2.9-.5 1.7-2.9-3 .4z" fill="#4c287b"/><path d="M706.2 217.9l3-1.4 1.6-3.9-3 1.4z" fill="#39728e"/><path d="M558.5 174.5l3 5.6 1.7-1.6-2.9-5.7z" fill="#3ab77a"/><path d="M622 265l2.9 1.8 1.7-1.8-2.9-1.8z" fill="#48005e"/><path d="M611.6 260.1l2.9 2.3 1.7-1.6-2.9-2.3z" fill="#4b0f69"/><path d="M566.8 199.1l2.9 5 1.8-1.5-3-5z" fill="#328d8d"/><path d="M644.5 267.7l2.9 .9 1.7-2.2-2.9-.8z" fill="#460059"/><path d="M722 189.4l3.1-1.8 1.7-4.6-3.1 1.8z" fill="#30a785"/><path d="M573.8 214.9l2.9 4.5 1.8-1.4-2.9-4.5z" fill="#39718e"/><path d="M681.2 249.1l3-.6 1.6-3.1-3 .6z" fill="#4b3381"/><path d="M712.5 208.5l3-1.6 1.6-4.2-3 1.6z" fill="#34858e"/><path d="M698.3 230.3l3-1.1 1.6-3.7-3 1.2z" fill="#3f5c8d"/><path d="M692 238.2l3-1 1.7-3.4-3.1 1z" fill="#454b8a"/><path d="M592.5 244.1l2.9 3.4 1.7-1.4-2.9-3.4z" fill="#4a3784"/><path d="M589.6 240.7l2.9 3.4 1.7-1.4-2.9-3.4z" fill="#483e87"/><path d="M632.4 268.2l3 1.3 1.6-1.9-2.9-1.3z" fill="#460057"/><path d="M614.5 262.4l2.9 2.2 1.7-1.6-2.9-2.2z" fill="#490965"/><path d="M595.4 247.5l2.9 3.1 1.7-1.4-2.9-3.1z" fill="#4b2f80"/><path d="M586.7 237l2.9 3.7 1.7-1.4-2.9-3.7z" fill="#464789"/><path d="M704.5 221.8l3.1-1.4 1.6-3.9-3 1.4z" fill="#3a6d8e"/><path d="M624.9 266.8l3 1.6 1.6-1.7-2.9-1.7z" fill="#48005c"/><path d="M661.2 263.2l2.9 .2 1.7-2.5-3-.1z" fill="#4a0a67"/><path d="M665.8 260.9l2.9-.1 1.7-2.6-3 .1z" fill="#4b136d"/><path d="M559.7 181.7l2.9 5.5 1.8-1.6-2.9-5.5z" fill="#32ac82"/><path d="M598.3 250.6l2.9 3 1.7-1.4-2.9-3z" fill="#4c297c"/><path d="M720.4 194l3.1-1.8 1.6-4.6-3.1 1.8z" fill="#2fa088"/><path d="M570.9 210.3l2.9 4.6 1.8-1.4-3-4.6z" fill="#377a8e"/><path d="M656.6 265.3l2.9 .3 1.7-2.4-3-.3z" fill="#490361"/><path d="M639.9 268.8l3 1 1.6-2.1-2.9-.9z" fill="#460057"/><path d="M583.8 233.2l2.9 3.8 1.7-1.4-2.9-3.8z" fill="#444f8b"/><path d="M670.4 258.2l2.9-.2 1.6-2.7-2.9 .2z" fill="#4c1a73"/><path d="M563.8 193.9l3 5.2 1.7-1.5-2.9-5.1z" fill="#30968b"/><path d="M685.8 245.4l3-.7 1.6-3.2-3 .8z" fill="#493b85"/><path d="M601.2 253.6l2.9 2.8 1.7-1.4-2.9-2.8z" fill="#4c2278"/><path d="M652 267.1l3 .5 1.6-2.3-2.9-.5z" fill="#48005d"/><path d="M580.8 229.2l3 4 1.7-1.4-2.9-3.9z" fill="#41588c"/><path d="M674.9 255.3l3-.4 1.6-2.9-2.9 .5z" fill="#4c2379"/><path d="M617.4 264.6l2.9 2 1.7-1.6-2.9-2z" fill="#490361"/><path d="M710.8 212.6l3.1-1.6 1.6-4.1-3 1.6z" fill="#357f8e"/><path d="M604.1 256.4l2.9 2.7 1.7-1.5-2.9-2.6z" fill="#4c1a73"/><path d="M718.8 198.4l3-1.8 1.7-4.4-3.1 1.8z" fill="#30988b"/><path d="M577.9 225.1l2.9 4.1 1.8-1.3-2.9-4.2z" fill="#3e608d"/><path d="M567.9 205.5l3 4.8 1.7-1.4-2.9-4.8z" fill="#34838e"/><path d="M647.4 268.6l3 .6 1.6-2.1-2.9-.7z" fill="#47005a"/><path d="M696.7 233.8l3-1.1 1.6-3.5-3 1.1z" fill="#41578c"/><path d="M627.9 268.4l2.9 1.5 1.6-1.7-2.9-1.5z" fill="#460059"/><path d="M635.4 269.5l2.9 1.2 1.6-1.9-2.9-1.2z" fill="#450056"/><path d="M679.5 252l3-.5 1.7-3-3 .6z" fill="#4b2d7e"/><path d="M702.9 225.5l3.1-1.3 1.6-3.8-3.1 1.4z" fill="#3c688e"/><path d="M607 259.1l2.9 2.5 1.7-1.5-2.9-2.5z" fill="#4b156e"/><path d="M690.4 241.5l3-1 1.6-3.3-3 1z" fill="#464689"/><path d="M556.7 176l3 5.7 1.8-1.6-3-5.6z" fill="#3ab77a"/><path d="M560.9 188.6l2.9 5.3 1.8-1.4-3-5.3z" fill="#2fa288"/><path d="M575 220.7l2.9 4.4 1.8-1.4-3-4.3z" fill="#3c698e"/><path d="M620.3 266.6l3 1.8 1.6-1.6-2.9-1.8z" fill="#48005d"/><path d="M642.9 269.8l2.9 .8 1.6-2-2.9-.9z" fill="#460057"/><path d="M709.2 216.5l3.1-1.5 1.6-4-3.1 1.6z" fill="#37788e"/><path d="M717.1 202.7l3.1-1.7 1.6-4.4-3 1.8z" fill="#30928c"/><path d="M609.9 261.6l2.9 2.3 1.7-1.5-2.9-2.3z" fill="#4b0f69"/><path d="M565 200.5l2.9 5 1.8-1.4-2.9-5z" fill="#328d8d"/><path d="M684.2 248.5l3-.8 1.6-3-3 .7z" fill="#4a3683"/><path d="M664.1 263.4l3-.1 1.6-2.5-2.9 .1z" fill="#4b0f69"/><path d="M659.5 265.6l3 .1 1.6-2.3-2.9-.2z" fill="#490664"/><path d="M572 216.2l3 4.5 1.7-1.3-2.9-4.5z" fill="#39718e"/><path d="M668.7 260.8l3-.2 1.6-2.6-2.9 .2z" fill="#4b166f"/><path d="M630.8 269.9l2.9 1.4 1.7-1.8-3-1.3z" fill="#460057"/><path d="M655 267.6l2.9 .3 1.6-2.3-2.9-.3z" fill="#48005e"/><path d="M612.8 263.9l2.9 2.2 1.7-1.5-2.9-2.2z" fill="#490965"/><path d="M695 237.2l3-1.1 1.7-3.4-3 1.1z" fill="#43518b"/><path d="M701.3 229.2l3-1.4 1.7-3.6-3.1 1.3z" fill="#3e618d"/><path d="M673.3 258l3-.4 1.6-2.7-3 .4z" fill="#4c1f76"/><path d="M725.1 187.6l3.1-2 1.7-4.6-3.1 2z" fill="#32ad82"/><path d="M590.8 245.4l2.9 3.4 1.7-1.3-2.9-3.4z" fill="#4a3784"/><path d="M623.3 268.4l2.9 1.7 1.7-1.7-3-1.6z" fill="#47005a"/><path d="M638.3 270.7l2.9 1 1.7-1.9-3-1z" fill="#450056"/><path d="M587.8 241.9l3 3.5 1.7-1.3-2.9-3.4z" fill="#483e87"/><path d="M593.7 248.8l2.9 3.1 1.7-1.3-2.9-3.1z" fill="#4b2f80"/><path d="M557.9 183.1l3 5.5 1.7-1.4-2.9-5.5z" fill="#32ac82"/><path d="M715.5 206.9l3.1-1.7 1.6-4.2-3.1 1.7z" fill="#328b8d"/><path d="M584.9 238.3l2.9 3.6 1.8-1.2-2.9-3.7z" fill="#464789"/><path d="M650.4 269.2l2.9 .5 1.7-2.1-3-.5z" fill="#47005a"/><path d="M596.6 251.9l2.9 3 1.7-1.3-2.9-3z" fill="#4c297c"/><path d="M569.1 211.6l2.9 4.6 1.8-1.3-2.9-4.6z" fill="#377a8e"/><path d="M688.8 244.7l3-1 1.6-3.2-3 1z" fill="#474288"/><path d="M707.6 220.4l3-1.5 1.7-3.9-3.1 1.5z" fill="#39728e"/><path d="M562 195.3l3 5.2 1.8-1.4-3-5.2z" fill="#30968b"/><path d="M582 234.4l2.9 3.9 1.8-1.3-2.9-3.8z" fill="#444f8b"/><path d="M677.9 254.9l3-.6 1.6-2.8-3 .5z" fill="#4c287b"/><path d="M599.5 254.9l2.9 2.9 1.7-1.4-2.9-2.8z" fill="#4c2278"/><path d="M723.5 192.2l3.1-2 1.6-4.6-3.1 2z" fill="#30a685"/><path d="M579.1 230.4l2.9 4 1.8-1.2-3-4z" fill="#41598d"/><path d="M615.7 266.1l2.9 2 1.7-1.5-2.9-2z" fill="#490361"/><path d="M645.8 270.6l2.9 .6 1.7-2-3-.6z" fill="#460057"/><path d="M602.4 257.8l2.9 2.6 1.7-1.3-2.9-2.7z" fill="#4c1a73"/><path d="M633.7 271.3l2.9 1.1 1.7-1.7-2.9-1.2z" fill="#450056"/><path d="M626.2 270.1l2.9 1.5 1.7-1.7-2.9-1.5z" fill="#460057"/><path d="M566.2 206.7l2.9 4.9 1.8-1.3-3-4.8z" fill="#34838e"/><path d="M682.5 251.5l3-.8 1.7-3-3 .8z" fill="#4b3381"/><path d="M576.1 226.3l3 4.1 1.7-1.2-2.9-4.1z" fill="#3e608d"/><path d="M713.9 211l3-1.7 1.7-4.1-3.1 1.7z" fill="#34848e"/><path d="M699.7 232.7l3-1.3 1.6-3.6-3 1.4z" fill="#3f5c8d"/><path d="M605.3 260.4l2.9 2.5 1.7-1.3-2.9-2.5z" fill="#4b156e"/><path d="M554.9 177.4l3 5.7 1.8-1.4-3-5.7z" fill="#39b67b"/><path d="M693.4 240.5l3-1.1 1.6-3.3-3 1.1z" fill="#444c8a"/><path d="M721.8 196.6l3.1-1.9 1.7-4.5-3.1 2z" fill="#2f9f89"/><path d="M559.1 189.9l2.9 5.4 1.8-1.4-2.9-5.3z" fill="#2fa288"/><path d="M641.2 271.7l2.9 .8 1.7-1.9-2.9-.8z" fill="#450056"/><path d="M706 224.2l3-1.5 1.6-3.8-3 1.5z" fill="#3a6d8e"/><path d="M662.5 265.7l2.9 0 1.7-2.4-3 .1z" fill="#4a0a67"/><path d="M618.6 268.1l3 1.8 1.7-1.5-3-1.8z" fill="#48005d"/><path d="M667.1 263.3l3-.2 1.6-2.5-3 .2z" fill="#4b136d"/><path d="M573.2 221.9l2.9 4.4 1.8-1.2-2.9-4.4z" fill="#3b6a8e"/><path d="M657.9 267.9l2.9 .1 1.7-2.3-3-.1z" fill="#490361"/><path d="M671.7 260.6l3-.4 1.6-2.6-3 .4z" fill="#4c1a73"/><path d="M608.2 262.9l2.9 2.4 1.7-1.4-2.9-2.3z" fill="#4b0f69"/><path d="M687.2 247.7l3-.9 1.6-3.1-3 1z" fill="#493c86"/><path d="M653.3 269.7l2.9 .3 1.7-2.1-2.9-.3z" fill="#48005d"/><path d="M563.2 201.7l3 5 1.7-1.2-2.9-5z" fill="#328d8d"/><path d="M712.3 215l3-1.7 1.6-4-3 1.7z" fill="#357f8e"/><path d="M629.1 271.6l2.9 1.3 1.7-1.6-2.9-1.4z" fill="#450056"/><path d="M676.3 257.6l3-.6 1.6-2.7-3 .6z" fill="#4c2379"/><path d="M570.3 217.4l2.9 4.5 1.8-1.2-3-4.5z" fill="#39718e"/><path d="M720.2 201l3.1-2 1.6-4.3-3.1 1.9z" fill="#30978b"/><path d="M636.6 272.4l2.9 1 1.7-1.7-2.9-1z" fill="#450054"/><path d="M648.7 271.2l3 .5 1.6-2-2.9-.5z" fill="#460059"/><path d="M621.6 269.9l2.9 1.7 1.7-1.5-2.9-1.7z" fill="#47005a"/><path d="M611.1 265.3l2.9 2.2 1.7-1.4-2.9-2.2z" fill="#490965"/><path d="M698 236.1l3.1-1.3 1.6-3.4-3 1.3z" fill="#41578c"/><path d="M556.1 184.4l3 5.5 1.8-1.3-3-5.5z" fill="#32ac82"/><path d="M589 246.6l2.9 3.4 1.8-1.2-2.9-3.4z" fill="#493984"/><path d="M586.1 243.1l2.9 3.5 1.8-1.2-3-3.5z" fill="#484187"/><path d="M704.3 227.8l3.1-1.5 1.6-3.6-3 1.5z" fill="#3c688e"/><path d="M591.9 250l2.9 3.1 1.8-1.2-2.9-3.1z" fill="#4b3081"/><path d="M680.9 254.3l3-.7 1.6-2.9-3 .8z" fill="#4b2d7e"/><path d="M583.2 239.4l2.9 3.7 1.7-1.2-2.9-3.6z" fill="#46498a"/><path d="M691.8 243.7l3-1.1 1.6-3.2-3 1.1z" fill="#464689"/><path d="M594.8 253.1l3 3.1 1.7-1.3-2.9-3z" fill="#4c2a7d"/><path d="M567.3 212.7l3 4.7 1.7-1.2-2.9-4.6z" fill="#367b8e"/><path d="M560.2 196.5l3 5.2 1.8-1.2-3-5.2z" fill="#30978b"/><path d="M644.1 272.5l3 .7 1.6-2-2.9-.6z" fill="#450056"/><path d="M580.2 235.6l3 3.8 1.7-1.1-2.9-3.9z" fill="#43518b"/><path d="M728.2 185.6l3.1-2.1 1.7-4.7-3.1 2.2z" fill="#36b37d"/><path d="M718.6 205.2l3.1-1.9 1.6-4.3-3.1 2z" fill="#31918c"/><path d="M597.8 256.2l2.9 2.8 1.7-1.2-2.9-2.9z" fill="#4c2379"/><path d="M710.6 218.9l3.1-1.7 1.6-3.9-3 1.7z" fill="#37788e"/><path d="M614 267.5l2.9 2 1.7-1.4-2.9-2z" fill="#490361"/><path d="M577.3 231.6l2.9 4 1.8-1.2-2.9-4z" fill="#41598d"/><path d="M632 272.9l2.9 1.2 1.7-1.7-2.9-1.1z" fill="#450054"/><path d="M600.7 259l2.9 2.7 1.7-1.3-2.9-2.6z" fill="#4c1d74"/><path d="M685.5 250.7l3-.9 1.7-3-3 .9z" fill="#4a3784"/><path d="M624.5 271.6l2.9 1.5 1.7-1.5-2.9-1.5z" fill="#460057"/><path d="M665.4 265.7l3-.2 1.7-2.4-3 .2z" fill="#4b0f69"/><path d="M660.8 268l3 0 1.6-2.3-2.9 0z" fill="#490664"/><path d="M670.1 263.1l2.9-.4 1.7-2.5-3 .4z" fill="#4b1870"/><path d="M564.4 207.9l2.9 4.8 1.8-1.1-2.9-4.9z" fill="#34848e"/><path d="M656.2 270l3 .2 1.6-2.2-2.9-.1z" fill="#48005e"/><path d="M726.6 190.2l3.1-2.1 1.6-4.6-3.1 2.1z" fill="#32ad82"/><path d="M574.4 227.4l2.9 4.2 1.8-1.2-3-4.1z" fill="#3e618d"/><path d="M639.5 273.4l3 .9 1.6-1.8-2.9-.8z" fill="#450054"/><path d="M553.1 178.7l3 5.7 1.8-1.3-3-5.7z" fill="#3ab77a"/><path d="M603.6 261.7l2.9 2.5 1.7-1.3-2.9-2.5z" fill="#4b166f"/><path d="M702.7 231.4l3.1-1.5 1.6-3.6-3.1 1.5z" fill="#3d628e"/><path d="M557.3 191.2l2.9 5.3 1.8-1.2-2.9-5.4z" fill="#2fa288"/><path d="M696.4 239.4l3.1-1.3 1.6-3.3-3.1 1.3z" fill="#43528c"/><path d="M674.7 260.2l2.9-.5 1.7-2.7-3 .6z" fill="#4c1f76"/><path d="M716.9 209.3l3.1-1.9 1.7-4.1-3.1 1.9z" fill="#328b8d"/><path d="M651.7 271.7l2.9 .4 1.6-2.1-2.9-.3z" fill="#47005a"/><path d="M616.9 269.5l3 1.8 1.7-1.4-3-1.8z" fill="#48005d"/><path d="M571.4 223l3 4.4 1.7-1.1-2.9-4.4z" fill="#3b6b8e"/><path d="M709 222.7l3.1-1.7 1.6-3.8-3.1 1.7z" fill="#39728e"/><path d="M690.2 246.8l3-1.1 1.6-3.1-3 1.1z" fill="#474288"/><path d="M606.5 264.2l2.9 2.4 1.7-1.3-2.9-2.4z" fill="#4b106a"/><path d="M724.9 194.7l3.1-2.2 1.7-4.4-3.1 2.1z" fill="#2fa586"/><path d="M679.3 257l3-.7 1.6-2.7-3 .7z" fill="#4c297c"/><path d="M561.4 202.9l3 5 1.8-1.2-3-5z" fill="#318e8d"/><path d="M647.1 273.2l2.9 .5 1.7-2-3-.5z" fill="#460057"/><path d="M627.4 273.1l2.9 1.4 1.7-1.6-2.9-1.3z" fill="#450056"/><path d="M634.9 274.1l2.9 1 1.7-1.7-2.9-1z" fill="#450054"/><path d="M568.5 218.5l2.9 4.5 1.8-1.1-2.9-4.5z" fill="#39728e"/><path d="M619.9 271.3l2.9 1.7 1.7-1.4-2.9-1.7z" fill="#47005a"/><path d="M715.3 213.3l3.1-1.9 1.6-4-3.1 1.9z" fill="#34848e"/><path d="M609.4 266.6l2.9 2.2 1.7-1.3-2.9-2.2z" fill="#4a0a67"/><path d="M554.3 185.6l3 5.6 1.8-1.3-3-5.5z" fill="#32ac82"/><path d="M683.9 253.6l3-.9 1.6-2.9-3 .9z" fill="#4b3381"/><path d="M642.5 274.3l2.9 .7 1.7-1.8-3-.7z" fill="#450056"/><path d="M723.3 199l3.1-2.1 1.6-4.4-3.1 2.2z" fill="#2f9f89"/><path d="M701.1 234.8l3-1.5 1.7-3.4-3.1 1.5z" fill="#3f5d8d"/><path d="M587.2 247.7l3 3.3 1.7-1-2.9-3.4z" fill="#493a85"/><path d="M584.3 244.2l2.9 3.5 1.8-1.1-2.9-3.5z" fill="#474288"/><path d="M590.2 251l2.9 3.2 1.7-1.1-2.9-3.1z" fill="#4b3381"/><path d="M694.8 242.6l3-1.3 1.7-3.2-3.1 1.3z" fill="#444c8a"/><path d="M581.4 240.5l2.9 3.7 1.8-1.1-2.9-3.7z" fill="#454a8a"/><path d="M707.4 226.3l3-1.7 1.7-3.6-3.1 1.7z" fill="#3a6e8e"/><path d="M663.8 268l3-.2 1.6-2.3-3 .2z" fill="#4a0a67"/><path d="M558.4 197.7l3 5.2 1.8-1.2-3-5.2z" fill="#30978b"/><path d="M565.5 213.8l3 4.7 1.8-1.1-3-4.7z" fill="#367b8e"/><path d="M593.1 254.2l2.9 3.1 1.8-1.1-3-3.1z" fill="#4c2a7d"/><path d="M659.2 270.2l3 0 1.6-2.2-3 0z" fill="#490361"/><path d="M668.4 265.5l3-.3 1.6-2.5-2.9 .4z" fill="#4b136d"/><path d="M578.5 236.6l2.9 3.9 1.8-1.1-3-3.8z" fill="#43528c"/><path d="M596 257.3l2.9 2.8 1.8-1.1-2.9-2.8z" fill="#4c2379"/><path d="M612.3 268.8l2.9 2 1.7-1.3-2.9-2z" fill="#490563"/><path d="M630.3 274.5l2.9 1.2 1.7-1.6-2.9-1.2z" fill="#450054"/><path d="M654.6 272.1l3 .1 1.6-2-3-.2z" fill="#48005d"/><path d="M673 262.7l3-.5 1.6-2.5-2.9 .5z" fill="#4c1d74"/><path d="M688.5 249.8l3.1-1.1 1.6-3-3 1.1z" fill="#493c86"/><path d="M622.8 273l2.9 1.6 1.7-1.5-2.9-1.5z" fill="#460059"/><path d="M575.5 232.6l3 4 1.7-1-2.9-4z" fill="#405a8d"/><path d="M713.7 217.2l3.1-1.9 1.6-3.9-3.1 1.9z" fill="#357f8e"/><path d="M637.8 275.1l3 .9 1.7-1.7-3-.9z" fill="#450054"/><path d="M721.7 203.3l3.1-2.1 1.6-4.3-3.1 2.1z" fill="#30978b"/><path d="M598.9 260.1l2.9 2.7 1.8-1.1-2.9-2.7z" fill="#4c1e75"/><path d="M731.3 183.5l3.2-2.3 1.6-4.8-3.1 2.4z" fill="#3ebb77"/><path d="M650 273.7l2.9 .3 1.7-1.9-2.9-.4z" fill="#460059"/><path d="M677.6 259.7l3-.7 1.7-2.7-3 .7z" fill="#4b247a"/><path d="M562.6 208.9l2.9 4.9 1.8-1.1-2.9-4.8z" fill="#34858e"/><path d="M551.3 179.9l3 5.7 1.8-1.2-3-5.7z" fill="#3ab77a"/><path d="M572.6 228.4l2.9 4.2 1.8-1-2.9-4.2z" fill="#3d628e"/><path d="M601.8 262.8l3 2.6 1.7-1.2-2.9-2.5z" fill="#4b1870"/><path d="M555.5 192.3l2.9 5.4 1.8-1.2-2.9-5.3z" fill="#2fa287"/><path d="M615.2 270.8l3 1.9 1.7-1.4-3-1.8z" fill="#48005e"/><path d="M699.5 238.1l3-1.4 1.6-3.4-3 1.5z" fill="#41588c"/><path d="M705.8 229.9l3-1.7 1.6-3.6-3 1.7z" fill="#3c698e"/><path d="M729.7 188.1l3.1-2.3 1.7-4.6-3.2 2.3z" fill="#36b37d"/><path d="M645.4 275l2.9 .5 1.7-1.8-2.9-.5z" fill="#450056"/><path d="M682.3 256.3l3-.9 1.6-2.7-3 .9z" fill="#4b2e7f"/><path d="M569.6 224l3 4.4 1.8-1-3-4.4z" fill="#3a6c8e"/><path d="M693.2 245.7l3-1.3 1.6-3.1-3 1.3z" fill="#464789"/><path d="M720 207.4l3.1-2.1 1.7-4.1-3.1 2.1z" fill="#30928c"/><path d="M625.7 274.6l2.9 1.3 1.7-1.4-2.9-1.4z" fill="#450056"/><path d="M604.8 265.4l2.9 2.3 1.7-1.1-2.9-2.4z" fill="#4b126c"/><path d="M633.2 275.7l3 1 1.6-1.6-2.9-1z" fill="#450054"/><path d="M559.6 203.9l3 5 1.8-1-3-5z" fill="#318f8d"/><path d="M712.1 221l3-1.9 1.7-3.8-3.1 1.9z" fill="#37798e"/><path d="M618.2 272.7l2.9 1.7 1.7-1.4-2.9-1.7z" fill="#48005c"/><path d="M566.7 219.5l2.9 4.5 1.8-1-2.9-4.5z" fill="#38738e"/><path d="M728 192.5l3.2-2.3 1.6-4.4-3.1 2.3z" fill="#32ad82"/><path d="M662.2 270.2l2.9-.2 1.7-2.2-3 .2z" fill="#490965"/><path d="M640.8 276l2.9 .7 1.7-1.7-2.9-.7z" fill="#450054"/><path d="M666.8 267.8l3-.3 1.6-2.3-3 .3z" fill="#4b106a"/><path d="M686.9 252.7l3-1.1 1.7-2.9-3.1 1.1z" fill="#493984"/><path d="M657.6 272.2l2.9 0 1.7-2-3 0z" fill="#490260"/><path d="M607.7 267.7l2.9 2.2 1.7-1.1-2.9-2.2z" fill="#4a0a67"/><path d="M552.5 186.7l3 5.6 1.8-1.1-3-5.6z" fill="#32ad82"/><path d="M671.4 265.2l3-.6 1.6-2.4-3 .5z" fill="#4b1971"/><path d="M718.4 211.4l3.1-2.1 1.6-4-3.1 2.1z" fill="#328b8d"/><path d="M652.9 274l3 .2 1.7-2-3-.1z" fill="#48005c"/><path d="M585.5 248.7l2.9 3.3 1.8-1-3-3.3z" fill="#493b85"/><path d="M704.1 233.3l3.1-1.6 1.6-3.5-3 1.7z" fill="#3d638e"/><path d="M582.5 245.1l3 3.6 1.7-1-2.9-3.5z" fill="#474388"/><path d="M588.4 252l2.9 3.2 1.8-1-2.9-3.2z" fill="#4b3482"/><path d="M697.8 241.3l3.1-1.4 1.6-3.2-3 1.4z" fill="#42538c"/><path d="M676 262.2l3-.7 1.6-2.5-3 .7z" fill="#4c2278"/><path d="M556.6 198.7l3 5.2 1.8-1-3-5.2z" fill="#30988b"/><path d="M579.6 241.4l2.9 3.7 1.8-.9-2.9-3.7z" fill="#454b8a"/><path d="M563.7 214.8l3 4.7 1.8-1-3-4.7z" fill="#367c8e"/><path d="M591.3 255.2l3 3.1 1.7-1-2.9-3.1z" fill="#4b2d7e"/><path d="M628.6 275.9l3 1.2 1.6-1.4-2.9-1.2z" fill="#450054"/><path d="M726.4 196.9l3.1-2.3 1.7-4.4-3.2 2.3z" fill="#2fa586"/><path d="M710.4 224.6l3.1-1.8 1.6-3.7-3 1.9z" fill="#38738e"/><path d="M610.6 269.9l2.9 2.1 1.7-1.2-2.9-2z" fill="#490563"/><path d="M576.7 237.5l2.9 3.9 1.8-.9-2.9-3.9z" fill="#42538c"/><path d="M636.2 276.7l2.9 .9 1.7-1.6-3-.9z" fill="#450054"/><path d="M594.3 258.3l2.9 2.8 1.7-1-2.9-2.8z" fill="#4b277a"/><path d="M648.3 275.5l3 .3 1.6-1.8-2.9-.3z" fill="#460057"/><path d="M621.1 274.4l2.9 1.5 1.7-1.3-2.9-1.6z" fill="#460059"/><path d="M691.6 248.7l3-1.2 1.6-3.1-3 1.3z" fill="#474388"/><path d="M680.6 259l3.1-.9 1.6-2.7-3 .9z" fill="#4c2a7d"/><path d="M573.7 233.5l3 4 1.8-.9-3-4z" fill="#3f5c8d"/><path d="M597.2 261.1l2.9 2.8 1.7-1.1-2.9-2.7z" fill="#4c1f76"/><path d="M549.5 181l3 5.7 1.8-1.1-3-5.7z" fill="#3bb779"/><path d="M560.8 209.9l2.9 4.9 1.8-1-2.9-4.9z" fill="#33868e"/><path d="M716.8 215.3l3.1-2 1.6-4-3.1 2.1z" fill="#34858e"/><path d="M643.7 276.7l3 .5 1.6-1.7-2.9-.5z" fill="#450056"/><path d="M570.8 229.3l2.9 4.2 1.8-.9-2.9-4.2z" fill="#3c648e"/><path d="M724.8 201.2l3.1-2.3 1.6-4.3-3.1 2.3z" fill="#2f9f89"/><path d="M553.6 193.3l3 5.4 1.8-1-2.9-5.4z" fill="#2fa387"/><path d="M613.5 272l2.9 1.9 1.8-1.2-3-1.9z" fill="#490260"/><path d="M600.1 263.9l2.9 2.5 1.8-1-3-2.6z" fill="#4b1971"/><path d="M685.3 255.4l3-1 1.6-2.8-3 1.1z" fill="#4a3583"/><path d="M734.5 181.2l3.1-2.6 1.6-4.7-3.1 2.5z" fill="#48c170"/><path d="M702.5 236.7l3.1-1.7 1.6-3.3-3.1 1.6z" fill="#3f5e8d"/><path d="M631.6 277.1l2.9 1.1 1.7-1.5-3-1z" fill="#450054"/><path d="M708.8 228.2l3.1-1.8 1.6-3.6-3.1 1.8z" fill="#3a6f8e"/><path d="M696.2 244.4l3.1-1.4 1.6-3.1-3.1 1.4z" fill="#444e8b"/><path d="M624 275.9l2.9 1.4 1.7-1.4-2.9-1.3z" fill="#460057"/><path d="M665.1 270l3-.3 1.7-2.2-3 .3z" fill="#4b0f69"/><path d="M660.5 272.2l3-.1 1.6-2.1-2.9 .2z" fill="#490563"/><path d="M567.8 224.9l3 4.4 1.8-.9-3-4.4z" fill="#3a6d8e"/><path d="M669.8 267.5l2.9-.6 1.7-2.3-3 .6z" fill="#4b166f"/><path d="M603 266.4l3 2.4 1.7-1.1-2.9-2.3z" fill="#4b136d"/><path d="M557.8 204.8l3 5.1 1.8-1-3-5z" fill="#31908d"/><path d="M655.9 274.2l3 0 1.6-2-2.9 0z" fill="#48005e"/><path d="M639.1 277.6l3 .7 1.6-1.6-2.9-.7z" fill="#450054"/><path d="M732.8 185.8l3.2-2.5 1.6-4.7-3.1 2.6z" fill="#3ebb77"/><path d="M674.4 264.6l3-.7 1.6-2.4-3 .7z" fill="#4c1e75"/><path d="M723.1 205.3l3.2-2.2 1.6-4.2-3.1 2.3z" fill="#30988b"/><path d="M616.4 273.9l3 1.7 1.7-1.2-2.9-1.7z" fill="#48005c"/><path d="M715.1 219.1l3.1-2 1.7-3.8-3.1 2z" fill="#35808e"/><path d="M689.9 251.6l3.1-1.3 1.6-2.8-3 1.2z" fill="#483e87"/><path d="M651.3 275.8l2.9 .2 1.7-1.8-3-.2z" fill="#47005a"/><path d="M564.9 220.3l2.9 4.6 1.8-.9-2.9-4.5z" fill="#37758e"/><path d="M550.6 187.7l3 5.6 1.9-1-3-5.6z" fill="#32ae81"/><path d="M606 268.8l2.9 2.2 1.7-1.1-2.9-2.2z" fill="#4b0d68"/><path d="M679 261.5l3-.9 1.7-2.5-3.1 .9z" fill="#4c287b"/><path d="M731.2 190.2l3.1-2.4 1.7-4.5-3.2 2.5z" fill="#36b37d"/><path d="M626.9 277.3l3 1.2 1.7-1.4-3-1.2z" fill="#450056"/><path d="M646.7 277.2l2.9 .4 1.7-1.8-3-.3z" fill="#460057"/><path d="M583.7 249.5l2.9 3.4 1.8-.9-2.9-3.3z" fill="#493c86"/><path d="M554.8 199.6l3 5.2 1.8-.9-3-5.2z" fill="#2f998a"/><path d="M580.8 246l2.9 3.5 1.8-.8-3-3.6z" fill="#474589"/><path d="M700.9 239.9l3-1.6 1.7-3.3-3.1 1.7z" fill="#405a8d"/><path d="M586.6 252.9l3 3.2 1.7-.9-2.9-3.2z" fill="#4a3683"/><path d="M707.2 231.7l3.1-1.8 1.6-3.5-3.1 1.8z" fill="#3b6a8e"/><path d="M634.5 278.2l2.9 .9 1.7-1.5-2.9-.9z" fill="#450054"/><path d="M561.9 215.6l3 4.7 1.8-.8-3-4.7z" fill="#357f8e"/><path d="M577.8 242.2l3 3.8 1.7-.9-2.9-3.7z" fill="#444d8b"/><path d="M589.6 256.1l2.9 3.1 1.8-.9-3-3.1z" fill="#4b2e7f"/><path d="M721.5 209.3l3.1-2.2 1.7-4-3.2 2.2z" fill="#30928c"/><path d="M683.7 258.1l3-1.1 1.6-2.6-3 1z" fill="#4b3081"/><path d="M608.9 271l2.9 2.1 1.7-1.1-2.9-2.1z" fill="#490664"/><path d="M619.4 275.6l2.9 1.5 1.7-1.2-2.9-1.5z" fill="#47005a"/><path d="M694.6 247.5l3-1.5 1.7-3-3.1 1.4z" fill="#454a8a"/><path d="M574.9 238.3l2.9 3.9 1.8-.8-2.9-3.9z" fill="#41568c"/><path d="M592.5 259.2l2.9 2.8 1.8-.9-2.9-2.8z" fill="#4c287b"/><path d="M713.5 222.8l3.1-2 1.6-3.7-3.1 2z" fill="#377a8e"/><path d="M729.5 194.6l3.2-2.4 1.6-4.4-3.1 2.4z" fill="#32ad82"/><path d="M642.1 278.3l2.9 .5 1.7-1.6-3-.5z" fill="#450056"/><path d="M571.9 234.3l3 4 1.8-.8-3-4z" fill="#3f5d8d"/><path d="M595.4 262l3 2.8 1.7-.9-2.9-2.8z" fill="#4c2077"/><path d="M547.6 182l3 5.7 1.9-1-3-5.7z" fill="#3cb879"/><path d="M663.5 272.1l3-.4 1.6-2-3 .3z" fill="#4a0a67"/><path d="M558.9 210.7l3 4.9 1.8-.8-2.9-4.9z" fill="#33878e"/><path d="M668.1 269.7l3-.5 1.6-2.3-2.9 .6z" fill="#4b136d"/><path d="M658.9 274.2l2.9-.2 1.7-1.9-3 .1z" fill="#490361"/><path d="M688.3 254.4l3-1.3 1.7-2.8-3.1 1.3z" fill="#493b85"/><path d="M611.8 273.1l2.9 1.8 1.7-1-2.9-1.9z" fill="#490361"/><path d="M551.8 194.2l3 5.4 1.8-.9-3-5.4z" fill="#2fa486"/><path d="M569 230.1l2.9 4.2 1.8-.8-2.9-4.2z" fill="#3c668e"/><path d="M672.7 266.9l3-.6 1.7-2.4-3 .7z" fill="#4c1a73"/><path d="M598.4 264.8l2.9 2.5 1.7-.9-2.9-2.5z" fill="#4c1a73"/><path d="M629.9 278.5l2.9 1 1.7-1.3-2.9-1.1z" fill="#450054"/><path d="M719.9 213.3l3.1-2.3 1.6-3.9-3.1 2.2z" fill="#328c8d"/><path d="M654.2 276l3 .1 1.7-1.9-3 0z" fill="#48005d"/><path d="M622.3 277.1l2.9 1.4 1.7-1.2-2.9-1.4z" fill="#460057"/><path d="M705.6 235l3-1.8 1.7-3.3-3.1 1.8z" fill="#3c648e"/><path d="M727.9 198.9l3.1-2.5 1.7-4.2-3.2 2.4z" fill="#30a685"/><path d="M699.3 243l3-1.6 1.6-3.1-3 1.6z" fill="#41568c"/><path d="M677.4 263.9l3-.8 1.6-2.5-3 .9z" fill="#4c2379"/><path d="M637.4 279.1l3 .7 1.7-1.5-3-.7z" fill="#450054"/><path d="M566 225.7l3 4.4 1.8-.8-3-4.4z" fill="#3a6e8e"/><path d="M601.3 267.3l2.9 2.4 1.8-.9-3-2.4z" fill="#4b156e"/><path d="M711.9 226.4l3.1-2 1.6-3.6-3.1 2z" fill="#37758e"/><path d="M649.6 277.6l3 .2 1.6-1.8-2.9-.2z" fill="#460059"/><path d="M737.6 178.6l3.2-2.7 1.6-4.7-3.2 2.7z" fill="#57c867"/><path d="M556 205.6l2.9 5.1 1.9-.8-3-5.1z" fill="#31918c"/><path d="M614.7 274.9l3 1.8 1.7-1.1-3-1.7z" fill="#48005d"/><path d="M693 250.3l3-1.4 1.6-2.9-3 1.5z" fill="#474589"/><path d="M682 260.6l3-1 1.7-2.6-3 1.1z" fill="#4b2d7e"/><path d="M548.8 188.6l3 5.6 1.8-.9-3-5.6z" fill="#33ae81"/><path d="M563.1 221.1l2.9 4.6 1.8-.8-2.9-4.6z" fill="#37768e"/><path d="M604.2 269.7l2.9 2.3 1.8-1-2.9-2.2z" fill="#4b106a"/><path d="M645 278.8l3 .4 1.6-1.6-2.9-.4z" fill="#460057"/><path d="M718.2 217.1l3.2-2.2 1.6-3.9-3.1 2.3z" fill="#33878e"/><path d="M726.3 203.1l3.1-2.5 1.6-4.2-3.1 2.5z" fill="#2fa088"/><path d="M736 183.3l3.1-2.7 1.7-4.7-3.2 2.7z" fill="#49c26f"/><path d="M625.2 278.5l3 1.2 1.7-1.2-3-1.2z" fill="#450056"/><path d="M632.8 279.5l2.9 .9 1.7-1.3-2.9-.9z" fill="#450054"/><path d="M553 200.4l3 5.2 1.8-.8-3-5.2z" fill="#2f9b8a"/><path d="M686.7 257l3-1.2 1.6-2.7-3 1.3z" fill="#4a3784"/><path d="M581.9 250.2l3 3.4 1.7-.7-2.9-3.4z" fill="#483e87"/><path d="M584.9 253.6l2.9 3.3 1.8-.8-3-3.2z" fill="#4a3784"/><path d="M579 246.7l2.9 3.5 1.8-.7-2.9-3.5z" fill="#464789"/><path d="M703.9 238.3l3.1-1.8 1.6-3.3-3 1.8z" fill="#3e608d"/><path d="M560.1 216.3l3 4.8 1.8-.8-3-4.7z" fill="#35808e"/><path d="M617.7 276.7l2.9 1.5 1.7-1.1-2.9-1.5z" fill="#48005c"/><path d="M607.1 272l3 2 1.7-.9-2.9-2.1z" fill="#4a0a67"/><path d="M587.8 256.9l2.9 3 1.8-.7-2.9-3.1z" fill="#4b3081"/><path d="M576 242.9l3 3.8 1.8-.7-3-3.8z" fill="#444e8b"/><path d="M710.3 229.9l3.1-2 1.6-3.5-3.1 2z" fill="#39708e"/><path d="M666.5 271.7l3-.4 1.6-2.1-3 .5z" fill="#4b106a"/><path d="M661.8 274l3-.3 1.7-2-3 .4z" fill="#490965"/><path d="M697.6 246l3.1-1.6 1.6-3-3 1.6z" fill="#43518b"/><path d="M640.4 279.8l2.9 .5 1.7-1.5-2.9-.5z" fill="#450056"/><path d="M734.3 187.8l3.2-2.7 1.6-4.5-3.1 2.7z" fill="#3ebb77"/><path d="M671.1 269.2l3-.7 1.6-2.2-3 .6z" fill="#4b1971"/><path d="M657.2 276.1l3-.2 1.6-1.9-2.9 .2z" fill="#490260"/><path d="M590.7 259.9l3 2.9 1.7-.8-2.9-2.8z" fill="#4c2a7d"/><path d="M573.1 239l2.9 3.9 1.8-.7-2.9-3.9z" fill="#41578c"/><path d="M724.6 207.1l3.2-2.4 1.6-4.1-3.1 2.5z" fill="#2f998a"/><path d="M545.8 182.8l3 5.8 1.8-.9-3-5.7z" fill="#3eb978"/><path d="M675.7 266.3l3.1-.9 1.6-2.3-3 .8z" fill="#4c2077"/><path d="M716.6 220.8l3.1-2.2 1.7-3.7-3.2 2.2z" fill="#35828e"/><path d="M593.7 262.8l2.9 2.8 1.8-.8-3-2.8z" fill="#4c2379"/><path d="M570.1 235l3 4 1.8-.7-3-4z" fill="#3f5f8d"/><path d="M652.6 277.8l3 0 1.6-1.7-3-.1z" fill="#48005c"/><path d="M691.3 253.1l3.1-1.4 1.6-2.8-3 1.4z" fill="#474288"/><path d="M557.1 211.4l3 4.9 1.8-.7-3-4.9z" fill="#33898e"/><path d="M610.1 274l2.9 1.9 1.7-1-2.9-1.8z" fill="#490563"/><path d="M628.2 279.7l2.9 1.1 1.7-1.3-2.9-1z" fill="#450056"/><path d="M550 195l3 5.4 1.8-.8-3-5.4z" fill="#2fa586"/><path d="M732.7 192.2l3.1-2.7 1.7-4.4-3.2 2.7z" fill="#37b47c"/><path d="M680.4 263.1l3-1.1 1.6-2.4-3 1z" fill="#4c2a7d"/><path d="M596.6 265.6l2.9 2.6 1.8-.9-2.9-2.5z" fill="#4c1e75"/><path d="M567.2 230.7l2.9 4.3 1.8-.7-2.9-4.2z" fill="#3c688e"/><path d="M620.6 278.2l2.9 1.4 1.7-1.1-2.9-1.4z" fill="#460059"/><path d="M635.7 280.4l3 .7 1.7-1.3-3-.7z" fill="#450054"/><path d="M648 279.2l2.9 .2 1.7-1.6-3-.2z" fill="#460059"/><path d="M702.3 241.4l3.1-1.8 1.6-3.1-3.1 1.8z" fill="#3f5c8d"/><path d="M708.6 233.2l3.1-2 1.7-3.3-3.1 2z" fill="#3a6c8e"/><path d="M723 211l3.1-2.4 1.7-3.9-3.2 2.4z" fill="#30938c"/><path d="M599.5 268.2l3 2.4 1.7-.9-2.9-2.4z" fill="#4b1870"/><path d="M564.2 226.3l3 4.4 1.8-.6-3-4.4z" fill="#3a708e"/><path d="M685 259.6l3.1-1.2 1.6-2.6-3 1.2z" fill="#4b3482"/><path d="M554.1 206.3l3 5.1 1.8-.7-2.9-5.1z" fill="#30928c"/><path d="M613 275.9l2.9 1.8 1.8-1-3-1.8z" fill="#490260"/><path d="M696 248.9l3.1-1.6 1.6-2.9-3.1 1.6z" fill="#444c8a"/><path d="M715 224.4l3.1-2.2 1.6-3.6-3.1 2.2z" fill="#367c8e"/><path d="M731 196.4l3.2-2.6 1.6-4.3-3.1 2.7z" fill="#32ae81"/><path d="M643.3 280.3l3 .4 1.7-1.5-3-.4z" fill="#460057"/><path d="M547 189.3l3 5.7 1.8-.8-3-5.6z" fill="#34b07f"/><path d="M602.5 270.6l2.9 2.2 1.7-.8-2.9-2.3z" fill="#4b126c"/><path d="M561.2 221.7l3 4.6 1.8-.6-2.9-4.6z" fill="#37788e"/><path d="M740.8 175.9l3.1-2.8 1.7-4.8-3.2 2.9z" fill="#66ce5c"/><path d="M664.8 273.7l3-.5 1.7-1.9-3 .4z" fill="#4b0f69"/><path d="M631.1 280.8l3 .9 1.6-1.3-2.9-.9z" fill="#450056"/><path d="M623.5 279.6l3 1.3 1.7-1.2-3-1.2z" fill="#460057"/><path d="M669.5 271.3l3-.7 1.6-2.1-3 .7z" fill="#4b166f"/><path d="M660.2 275.9l3-.3 1.6-1.9-3 .3z" fill="#490664"/><path d="M689.7 255.8l3.1-1.4 1.6-2.7-3.1 1.4z" fill="#493d86"/><path d="M674.1 268.5l3-.9 1.7-2.2-3.1 .9z" fill="#4c1f76"/><path d="M721.4 214.9l3.1-2.4 1.6-3.9-3.1 2.4z" fill="#318e8d"/><path d="M655.6 277.8l2.9-.1 1.7-1.8-3 .2z" fill="#490260"/><path d="M551.1 201.1l3 5.2 1.9-.7-3-5.2z" fill="#2f9d89"/><path d="M638.7 281.1l2.9 .6 1.7-1.4-2.9-.5z" fill="#450056"/><path d="M615.9 277.7l3 1.5 1.7-1-2.9-1.5z" fill="#48005d"/><path d="M729.4 200.6l3.1-2.6 1.7-4.2-3.2 2.6z" fill="#30a785"/><path d="M580.1 250.9l3 3.4 1.8-.7-3-3.4z" fill="#474288"/><path d="M583.1 254.3l2.9 3.2 1.8-.6-2.9-3.3z" fill="#493a85"/><path d="M577.2 247.3l2.9 3.6 1.8-.7-2.9-3.5z" fill="#454a8a"/><path d="M605.4 272.8l2.9 2.1 1.8-.9-3-2z" fill="#4b0d68"/><path d="M707 236.5l3.1-2 1.6-3.3-3.1 2z" fill="#3c688e"/><path d="M739.1 180.6l3.2-2.9 1.6-4.6-3.1 2.8z" fill="#57c867"/><path d="M558.3 217l2.9 4.7 1.9-.6-3-4.8z" fill="#35828e"/><path d="M586 257.5l3 3.1 1.7-.7-2.9-3z" fill="#4b3482"/><path d="M574.2 243.5l3 3.8 1.8-.6-3-3.8z" fill="#43518b"/><path d="M700.7 244.4l3.1-1.7 1.6-3.1-3.1 1.8z" fill="#41588c"/><path d="M678.8 265.4l3-1 1.6-2.4-3 1.1z" fill="#4c287b"/><path d="M650.9 279.4l3 0 1.7-1.6-3 0z" fill="#48005c"/><path d="M713.4 227.9l3.1-2.2 1.6-3.5-3.1 2.2z" fill="#37778e"/><path d="M589 260.6l2.9 2.9 1.8-.7-3-2.9z" fill="#4b2d7e"/><path d="M571.3 239.6l2.9 3.9 1.8-.6-2.9-3.9z" fill="#405a8d"/><path d="M544 183.6l3 5.7 1.8-.7-3-5.8z" fill="#3ebb77"/><path d="M694.4 251.7l3-1.5 1.7-2.9-3.1 1.6z" fill="#46498a"/><path d="M591.9 263.5l2.9 2.8 1.8-.7-2.9-2.8z" fill="#4b277a"/><path d="M626.5 280.9l2.9 1 1.7-1.1-2.9-1.1z" fill="#460057"/><path d="M568.3 235.5l3 4.1 1.8-.6-3-4z" fill="#3e618d"/><path d="M683.4 262l3-1.2 1.7-2.4-3.1 1.2z" fill="#4b3081"/><path d="M737.5 185.1l3.1-2.8 1.7-4.6-3.2 2.9z" fill="#4bc36e"/><path d="M646.3 280.7l3 .2 1.6-1.5-2.9-.2z" fill="#460059"/><path d="M608.3 274.9l3 1.9 1.7-.9-2.9-1.9z" fill="#490965"/><path d="M555.3 212l3 5 1.8-.7-3-4.9z" fill="#328b8d"/><path d="M727.8 204.7l3.1-2.6 1.6-4.1-3.1 2.6z" fill="#2fa288"/><path d="M634.1 281.7l2.9 .7 1.7-1.3-3-.7z" fill="#450056"/><path d="M548.1 195.6l3 5.5 1.9-.7-3-5.4z" fill="#30a785"/><path d="M719.7 218.6l3.2-2.4 1.6-3.7-3.1 2.4z" fill="#33898e"/><path d="M618.9 279.2l2.9 1.4 1.7-1-2.9-1.4z" fill="#48005c"/><path d="M594.8 266.3l3 2.6 1.7-.7-2.9-2.6z" fill="#4c2077"/><path d="M565.4 231.3l2.9 4.2 1.8-.5-2.9-4.3z" fill="#3b6a8e"/><path d="M688.1 258.4l3-1.4 1.7-2.6-3.1 1.4z" fill="#493b85"/><path d="M735.8 189.5l3.2-2.8 1.6-4.4-3.1 2.8z" fill="#41bd75"/><path d="M641.6 281.7l3 .4 1.7-1.4-3-.4z" fill="#460057"/><path d="M705.4 239.6l3.1-1.9 1.6-3.2-3.1 2z" fill="#3d628e"/><path d="M597.8 268.9l2.9 2.4 1.8-.7-3-2.4z" fill="#4c1a73"/><path d="M663.2 275.6l3-.5 1.6-1.9-3 .5z" fill="#4b0d68"/><path d="M711.7 231.2l3.1-2.1 1.7-3.4-3.1 2.2z" fill="#39728e"/><path d="M667.8 273.2l3-.6 1.7-2-3 .7z" fill="#4b156e"/><path d="M562.4 226.8l3 4.5 1.8-.6-3-4.4z" fill="#39728e"/><path d="M611.3 276.8l2.9 1.7 1.7-.8-2.9-1.8z" fill="#490361"/><path d="M552.3 206.9l3 5.1 1.8-.6-3-5.1z" fill="#30948c"/><path d="M699.1 247.3l3-1.7 1.7-2.9-3.1 1.7z" fill="#42538c"/><path d="M658.5 277.7l3-.3 1.7-1.8-3 .3z" fill="#490563"/><path d="M672.5 270.6l3-.8 1.6-2.2-3 .9z" fill="#4c1d74"/><path d="M726.1 208.6l3.2-2.6 1.6-3.9-3.1 2.6z" fill="#2f9b8a"/><path d="M545.1 190l3 5.6 1.9-.6-3-5.7z" fill="#35b17f"/><path d="M629.4 281.9l3 .9 1.7-1.1-3-.9z" fill="#450056"/><path d="M653.9 279.4l3-.1 1.6-1.6-2.9 .1z" fill="#48005e"/><path d="M718.1 222.2l3.1-2.4 1.7-3.6-3.2 2.4z" fill="#34838e"/><path d="M621.8 280.6l3 1.3 1.7-1-3-1.3z" fill="#460059"/><path d="M677.1 267.6l3-1 1.7-2.2-3 1z" fill="#4b247a"/><path d="M600.7 271.3l3 2.2 1.7-.7-2.9-2.2z" fill="#4b156e"/><path d="M559.4 222.2l3 4.6 1.8-.5-3-4.6z" fill="#377a8e"/><path d="M734.2 193.8l3.2-2.8 1.6-4.3-3.2 2.8z" fill="#39b67b"/><path d="M692.8 254.4l3-1.5 1.6-2.7-3 1.5z" fill="#474589"/><path d="M637 282.4l3 .6 1.6-1.3-2.9-.6z" fill="#450056"/><path d="M649.3 280.9l2.9 .1 1.7-1.6-3 0z" fill="#48005c"/><path d="M681.8 264.4l3-1.2 1.6-2.4-3 1.2z" fill="#4b2e7f"/><path d="M614.2 278.5l2.9 1.6 1.8-.9-3-1.5z" fill="#48005e"/><path d="M549.3 201.6l3 5.3 1.8-.6-3-5.2z" fill="#2f9f89"/><path d="M603.7 273.5l2.9 2.1 1.7-.7-2.9-2.1z" fill="#4b106a"/><path d="M578.3 251.4l3 3.4 1.8-.5-3-3.4z" fill="#474589"/><path d="M581.3 254.8l2.9 3.3 1.8-.6-2.9-3.2z" fill="#493d86"/><path d="M575.4 247.8l2.9 3.6 1.8-.5-2.9-3.6z" fill="#444c8a"/><path d="M556.4 217.5l3 4.7 1.8-.5-2.9-4.7z" fill="#34848e"/><path d="M724.5 212.5l3.1-2.6 1.7-3.9-3.2 2.6z" fill="#30958b"/><path d="M710.1 234.5l3.1-2.2 1.6-3.2-3.1 2.1z" fill="#3a6f8e"/><path d="M703.8 242.7l3.1-2 1.6-3-3.1 1.9z" fill="#3f5f8d"/><path d="M584.2 258.1l3 3.1 1.8-.6-3-3.1z" fill="#4a3683"/><path d="M572.4 244l3 3.8 1.8-.5-3-3.8z" fill="#42548c"/><path d="M732.5 198l3.2-2.8 1.7-4.2-3.2 2.8z" fill="#33af80"/><path d="M644.6 282.1l3 .2 1.7-1.4-3-.2z" fill="#460059"/><path d="M587.2 261.2l2.9 2.9 1.8-.6-2.9-2.9z" fill="#4b2f80"/><path d="M542.1 184.2l3 5.8 1.9-.7-3-5.7z" fill="#41bd75"/><path d="M686.4 260.8l3.1-1.3 1.6-2.5-3 1.4z" fill="#4a3784"/><path d="M569.5 240.1l2.9 3.9 1.8-.5-2.9-3.9z" fill="#3f5c8d"/><path d="M624.8 281.9l2.9 1.1 1.7-1.1-2.9-1z" fill="#460059"/><path d="M716.5 225.7l3.1-2.4 1.6-3.5-3.1 2.4z" fill="#357f8e"/><path d="M697.4 250.2l3.1-1.8 1.6-2.8-3 1.7z" fill="#444f8b"/><path d="M632.4 282.8l2.9 .8 1.7-1.2-2.9-.7z" fill="#460057"/><path d="M590.1 264.1l3 2.8 1.7-.6-2.9-2.8z" fill="#4c297c"/><path d="M606.6 275.6l2.9 2 1.8-.8-3-1.9z" fill="#4a0a67"/><path d="M566.5 236l3 4.1 1.8-.5-3-4.1z" fill="#3c648e"/><path d="M617.1 280.1l3 1.4 1.7-.9-2.9-1.4z" fill="#48005d"/><path d="M553.4 212.5l3 5 1.9-.5-3-5z" fill="#328d8d"/><path d="M546.3 196.2l3 5.4 1.8-.5-3-5.5z" fill="#30a984"/><path d="M666.2 275.1l3-.6 1.6-1.9-3 .6z" fill="#4b136d"/><path d="M661.5 277.4l3-.5 1.7-1.8-3 .5z" fill="#4b0d68"/><path d="M670.8 272.6l3-.8 1.7-2-3 .8z" fill="#4c1a73"/><path d="M593.1 266.9l2.9 2.6 1.8-.6-3-2.6z" fill="#4c2379"/><path d="M640 283l2.9 .4 1.7-1.3-3-.4z" fill="#460059"/><path d="M563.5 231.7l3 4.3 1.8-.5-2.9-4.2z" fill="#3a6d8e"/><path d="M722.9 216.2l3.1-2.6 1.6-3.7-3.1 2.6z" fill="#31918c"/><path d="M656.9 279.3l3-.3 1.6-1.6-3 .3z" fill="#490563"/><path d="M691.1 257l3.1-1.6 1.6-2.5-3 1.5z" fill="#474288"/><path d="M730.9 202.1l3.2-2.8 1.6-4.1-3.2 2.8z" fill="#30aa83"/><path d="M675.5 269.8l3-1 1.6-2.2-3 1z" fill="#4c2379"/><path d="M596 269.5l3 2.4 1.7-.6-2.9-2.4z" fill="#4c1e75"/><path d="M652.2 281l3-.1 1.7-1.6-3 .1z" fill="#48005e"/><path d="M708.5 237.7l3.1-2.2 1.6-3.2-3.1 2.2z" fill="#3b6b8e"/><path d="M609.5 277.6l3 1.7 1.7-.8-2.9-1.7z" fill="#490664"/><path d="M560.5 227.3l3 4.4 1.9-.4-3-4.5z" fill="#38748e"/><path d="M550.4 207.4l3 5.1 1.9-.5-3-5.1z" fill="#30968b"/><path d="M702.1 245.6l3.1-2 1.7-2.9-3.1 2z" fill="#405b8d"/><path d="M680.1 266.6l3.1-1.1 1.6-2.3-3 1.2z" fill="#4b2b7e"/><path d="M627.7 283l3 .9 1.7-1.1-3-.9z" fill="#460059"/><path d="M714.8 229.1l3.2-2.4 1.6-3.4-3.1 2.4z" fill="#377a8e"/><path d="M620.1 281.5l2.9 1.3 1.8-.9-3-1.3z" fill="#48005c"/><path d="M543.2 190.5l3.1 5.7 1.8-.6-3-5.6z" fill="#36b37d"/><path d="M635.3 283.6l3 .6 1.7-1.2-3-.6z" fill="#460057"/><path d="M647.6 282.3l3 .1 1.6-1.4-2.9-.1z" fill="#48005c"/><path d="M599 271.9l2.9 2.3 1.8-.7-3-2.2z" fill="#4b1870"/><path d="M695.8 252.9l3.1-1.8 1.6-2.7-3.1 1.8z" fill="#444c8a"/><path d="M729.3 206l3.1-2.7 1.7-4-3.2 2.8z" fill="#2fa387"/><path d="M557.6 222.6l2.9 4.7 1.9-.5-3-4.6z" fill="#357d8e"/><path d="M684.8 263.2l3.1-1.4 1.6-2.3-3.1 1.3z" fill="#4a3583"/><path d="M721.2 219.8l3.2-2.5 1.6-3.7-3.1 2.6z" fill="#328b8d"/><path d="M612.5 279.3l2.9 1.6 1.7-.8-2.9-1.6z" fill="#490361"/><path d="M547.4 202.1l3 5.3 1.9-.5-3-5.3z" fill="#2fa288"/><path d="M601.9 274.2l2.9 2.1 1.8-.7-2.9-2.1z" fill="#4b136d"/><path d="M642.9 283.4l3 .2 1.7-1.3-3-.2z" fill="#47005a"/><path d="M576.5 251.8l3 3.4 1.8-.4-3-3.4z" fill="#464789"/><path d="M579.5 255.2l2.9 3.3 1.8-.4-2.9-3.3z" fill="#484187"/><path d="M554.6 217.9l3 4.7 1.8-.4-3-4.7z" fill="#33868e"/><path d="M573.6 248.2l2.9 3.6 1.8-.4-2.9-3.6z" fill="#444f8b"/><path d="M689.5 259.5l3.1-1.6 1.6-2.5-3.1 1.6z" fill="#483e87"/><path d="M582.4 258.5l3 3.1 1.8-.4-3-3.1z" fill="#493a85"/><path d="M706.9 240.7l3.1-2.1 1.6-3.1-3.1 2.2z" fill="#3c678e"/><path d="M570.6 244.4l3 3.8 1.8-.4-3-3.8z" fill="#41578c"/><path d="M664.5 276.9l3-.6 1.7-1.8-3 .6z" fill="#4b126c"/><path d="M623 282.8l3 1.1 1.7-.9-2.9-1.1z" fill="#47005a"/><path d="M713.2 232.3l3.2-2.3 1.6-3.3-3.2 2.4z" fill="#37758e"/><path d="M669.2 274.5l3-.8 1.6-1.9-3 .8z" fill="#4b1971"/><path d="M540.2 184.7l3 5.8 1.9-.5-3-5.8z" fill="#44be73"/><path d="M630.7 283.9l2.9 .7 1.7-1-2.9-.8z" fill="#460059"/><path d="M659.9 279l3-.4 1.6-1.7-3 .5z" fill="#4a0a67"/><path d="M585.4 261.6l2.9 3 1.8-.5-2.9-2.9z" fill="#4b3381"/><path d="M727.6 209.9l3.2-2.8 1.6-3.8-3.1 2.7z" fill="#2f9f89"/><path d="M700.5 248.4l3.1-1.9 1.6-2.9-3.1 2z" fill="#41588c"/><path d="M567.6 240.5l3 3.9 1.8-.4-2.9-3.9z" fill="#3f5f8d"/><path d="M673.8 271.8l3.1-1 1.6-2-3 1z" fill="#4c2077"/><path d="M655.2 280.9l3-.3 1.7-1.6-3 .3z" fill="#490563"/><path d="M604.8 276.3l3 1.9 1.7-.6-2.9-2z" fill="#4b106a"/><path d="M615.4 280.9l3 1.4 1.7-.8-3-1.4z" fill="#490260"/><path d="M588.3 264.6l3 2.7 1.8-.4-3-2.8z" fill="#4b2d7e"/><path d="M719.6 223.3l3.2-2.5 1.6-3.5-3.2 2.5z" fill="#33868e"/><path d="M638.3 284.2l2.9 .4 1.7-1.2-2.9-.4z" fill="#460059"/><path d="M544.4 196.6l3 5.5 1.9-.5-3-5.4z" fill="#31ab83"/><path d="M564.7 236.3l2.9 4.2 1.9-.4-3-4.1z" fill="#3c678e"/><path d="M678.5 268.8l3-1.2 1.7-2.1-3.1 1.1z" fill="#4c297c"/><path d="M551.6 212.9l3 5 1.8-.4-3-5z" fill="#31908d"/><path d="M694.2 255.4l3.1-1.7 1.6-2.6-3.1 1.8z" fill="#46498a"/><path d="M591.3 267.3l2.9 2.7 1.8-.5-2.9-2.6z" fill="#4b277a"/><path d="M650.6 282.4l2.9-.1 1.7-1.4-3 .1z" fill="#490260"/><path d="M561.7 232l3 4.3 1.8-.3-3-4.3z" fill="#3a6f8e"/><path d="M683.2 265.5l3-1.4 1.7-2.3-3.1 1.4z" fill="#4b3381"/><path d="M726 213.6l3.2-2.7 1.6-3.8-3.2 2.8z" fill="#30988b"/><path d="M607.8 278.2l2.9 1.8 1.8-.7-3-1.7z" fill="#4a0a67"/><path d="M594.2 270l3 2.4 1.8-.5-3-2.4z" fill="#4c2077"/><path d="M626 283.9l3 .9 1.7-.9-3-.9z" fill="#47005a"/><path d="M645.9 283.6l3 .1 1.7-1.3-3-.1z" fill="#48005d"/><path d="M711.6 235.5l3.1-2.3 1.7-3.2-3.2 2.3z" fill="#39718e"/><path d="M548.6 207.7l3 5.2 1.8-.4-3-5.1z" fill="#2f998a"/><path d="M558.7 227.6l3 4.4 1.8-.3-3-4.4z" fill="#37778e"/><path d="M705.2 243.6l3.1-2.1 1.7-2.9-3.1 2.1z" fill="#3d628e"/><path d="M633.6 284.6l3 .6 1.7-1-3-.6z" fill="#460059"/><path d="M618.4 282.3l2.9 1.3 1.7-.8-2.9-1.3z" fill="#48005e"/><path d="M541.4 190.9l3 5.7 1.9-.4-3.1-5.7z" fill="#39b67b"/><path d="M718 226.7l3.1-2.5 1.7-3.4-3.2 2.5z" fill="#35828e"/><path d="M687.9 261.8l3-1.5 1.7-2.4-3.1 1.6z" fill="#493c86"/><path d="M698.9 251.1l3.1-1.9 1.6-2.7-3.1 1.9z" fill="#42548c"/><path d="M597.2 272.4l2.9 2.3 1.8-.5-2.9-2.3z" fill="#4c1d74"/><path d="M555.7 222.9l3 4.7 1.8-.3-2.9-4.7z" fill="#35808e"/><path d="M641.2 284.6l3 .2 1.7-1.2-3-.2z" fill="#48005c"/><path d="M610.7 280l3 1.6 1.7-.7-2.9-1.6z" fill="#490664"/><path d="M667.5 276.3l3-.8 1.7-1.8-3 .8z" fill="#4b1870"/><path d="M662.9 278.6l3-.6 1.6-1.7-3 .6z" fill="#4b126c"/><path d="M672.2 273.7l3-1 1.7-1.9-3.1 1z" fill="#4c1f76"/><path d="M545.5 202.4l3.1 5.3 1.8-.3-3-5.3z" fill="#2fa387"/><path d="M724.4 217.3l3.1-2.8 1.7-3.6-3.2 2.7z" fill="#30938c"/><path d="M658.2 280.6l3-.5 1.7-1.5-3 .4z" fill="#4a0a67"/><path d="M600.1 274.7l3 2.1 1.7-.5-2.9-2.1z" fill="#4b1870"/><path d="M692.6 257.9l3-1.7 1.7-2.5-3.1 1.7z" fill="#464689"/><path d="M676.9 270.8l3-1.2 1.6-2-3 1.2z" fill="#4c287b"/><path d="M629 284.8l2.9 .8 1.7-1-2.9-.7z" fill="#47005a"/><path d="M621.3 283.6l3 1.1 1.7-.8-3-1.1z" fill="#48005d"/><path d="M574.7 252.1l3 3.4 1.8-.3-3-3.4z" fill="#454b8a"/><path d="M552.7 218.1l3 4.8 1.9-.3-3-4.7z" fill="#33898e"/><path d="M577.7 255.5l2.9 3.3 1.8-.3-2.9-3.3z" fill="#464488"/><path d="M653.5 282.3l3-.3 1.7-1.4-3 .3z" fill="#490563"/><path d="M571.8 248.5l2.9 3.6 1.8-.3-2.9-3.6z" fill="#43528c"/><path d="M580.6 258.8l3 3.2 1.8-.4-3-3.1z" fill="#493c86"/><path d="M538.3 185.1l3.1 5.8 1.8-.4-3-5.8z" fill="#46c071"/><path d="M710 238.6l3.1-2.3 1.6-3.1-3.1 2.3z" fill="#3a6e8e"/><path d="M568.8 244.7l3 3.8 1.8-.3-3-3.8z" fill="#405a8d"/><path d="M703.6 246.5l3.1-2.1 1.6-2.9-3.1 2.1z" fill="#3f5f8d"/><path d="M681.5 267.6l3.1-1.4 1.6-2.1-3 1.4z" fill="#4b3081"/><path d="M583.6 262l3 2.9 1.7-.3-2.9-3z" fill="#4a3683"/><path d="M636.6 285.2l3 .5 1.6-1.1-2.9-.4z" fill="#48005c"/><path d="M716.4 230l3.1-2.5 1.6-3.3-3.1 2.5z" fill="#357d8e"/><path d="M565.8 240.7l3 4 1.8-.3-3-3.9z" fill="#3d628e"/><path d="M613.7 281.6l2.9 1.4 1.8-.7-3-1.4z" fill="#490563"/><path d="M648.9 283.7l3-.1 1.6-1.3-2.9 .1z" fill="#490260"/><path d="M603.1 276.8l2.9 1.9 1.8-.5-3-1.9z" fill="#4b136d"/><path d="M586.6 264.9l2.9 2.8 1.8-.4-3-2.7z" fill="#4b3081"/><path d="M542.5 196.9l3 5.5 1.9-.3-3-5.5z" fill="#32ae81"/><path d="M549.7 213.1l3 5 1.9-.2-3-5z" fill="#30928c"/><path d="M562.8 236.6l3 4.1 1.8-.2-2.9-4.2z" fill="#3b6a8e"/><path d="M697.3 253.7l3.1-1.9 1.6-2.6-3.1 1.9z" fill="#43518b"/><path d="M722.8 220.8l3.1-2.7 1.6-3.6-3.1 2.8z" fill="#318f8d"/><path d="M686.2 264.1l3.1-1.5 1.6-2.3-3 1.5z" fill="#493a85"/><path d="M589.5 267.7l3 2.6 1.7-.3-2.9-2.7z" fill="#4c2a7d"/><path d="M644.2 284.8l3 .1 1.7-1.2-3-.1z" fill="#48005e"/><path d="M559.8 232.3l3 4.3 1.9-.3-3-4.3z" fill="#39718e"/><path d="M624.3 284.7l2.9 1 1.8-.9-3-.9z" fill="#48005d"/><path d="M606 278.7l3 1.8 1.7-.5-2.9-1.8z" fill="#4b106a"/><path d="M631.9 285.6l3 .6 1.7-1-3-.6z" fill="#48005c"/><path d="M592.5 270.3l2.9 2.5 1.8-.4-3-2.4z" fill="#4b247a"/><path d="M616.6 283l3 1.3 1.7-.7-2.9-1.3z" fill="#490361"/><path d="M546.7 208l3 5.1 1.9-.2-3-5.2z" fill="#2f9b8a"/><path d="M665.9 278l3-.8 1.6-1.7-3 .8z" fill="#4b1870"/><path d="M708.3 241.5l3.2-2.3 1.6-2.9-3.1 2.3z" fill="#3b6b8e"/><path d="M690.9 260.3l3.1-1.7 1.6-2.4-3 1.7z" fill="#464488"/><path d="M556.8 227.8l3 4.5 1.9-.3-3-4.4z" fill="#377a8e"/><path d="M714.7 233.2l3.2-2.5 1.6-3.2-3.1 2.5z" fill="#37798e"/><path d="M670.5 275.5l3.1-1 1.6-1.8-3 1z" fill="#4c1f76"/><path d="M661.2 280.1l3-.6 1.7-1.5-3 .6z" fill="#4b126c"/><path d="M539.5 191.2l3 5.7 1.9-.3-3-5.7z" fill="#3bb779"/><path d="M702 249.2l3.1-2.1 1.6-2.7-3.1 2.1z" fill="#3f5c8d"/><path d="M675.2 272.7l3.1-1.2 1.6-1.9-3 1.2z" fill="#4b277a"/><path d="M639.6 285.7l2.9 .2 1.7-1.1-3-.2z" fill="#48005d"/><path d="M656.5 282l3-.4 1.7-1.5-3 .5z" fill="#4a0a67"/><path d="M595.4 272.8l3 2.3 1.7-.4-2.9-2.3z" fill="#4c2077"/><path d="M721.1 224.2l3.2-2.7 1.6-3.4-3.1 2.7z" fill="#338a8d"/><path d="M609 280.5l2.9 1.6 1.8-.5-3-1.6z" fill="#4b0d68"/><path d="M553.8 223.1l3 4.7 1.9-.2-3-4.7z" fill="#35828e"/><path d="M679.9 269.6l3.1-1.3 1.6-2.1-3.1 1.4z" fill="#4b2e7f"/><path d="M651.9 283.6l3-.2 1.6-1.4-3 .3z" fill="#490664"/><path d="M543.7 202.6l3 5.4 1.9-.3-3.1-5.3z" fill="#30a685"/><path d="M695.6 256.2l3.1-1.9 1.7-2.5-3.1 1.9z" fill="#444e8b"/><path d="M627.2 285.7l3 .7 1.7-.8-2.9-.8z" fill="#48005d"/><path d="M598.4 275.1l2.9 2.1 1.8-.4-3-2.1z" fill="#4c1a73"/><path d="M619.6 284.3l3 1.1 1.7-.7-3-1.1z" fill="#490260"/><path d="M684.6 266.2l3.1-1.5 1.6-2.1-3.1 1.5z" fill="#4a3784"/><path d="M634.9 286.2l3 .4 1.7-.9-3-.5z" fill="#48005d"/><path d="M550.8 218.3l3 4.8 1.9-.2-3-4.8z" fill="#328c8d"/><path d="M572.9 252.3l3 3.4 1.8-.2-3-3.4z" fill="#444e8b"/><path d="M647.2 284.9l3-.1 1.7-1.2-3 .1z" fill="#490361"/><path d="M536.4 185.4l3.1 5.8 1.9-.3-3.1-5.8z" fill="#4bc36e"/><path d="M575.9 255.7l2.9 3.3 1.8-.2-2.9-3.3z" fill="#464789"/><path d="M569.9 248.6l3 3.7 1.8-.2-2.9-3.6z" fill="#41578c"/><path d="M578.8 259l3 3.2 1.8-.2-3-3.2z" fill="#474288"/><path d="M566.9 244.8l3 3.8 1.9-.1-3-3.8z" fill="#3f5d8d"/><path d="M713.1 236.3l3.1-2.5 1.7-3.1-3.2 2.5z" fill="#37758e"/><path d="M706.7 244.4l3.2-2.3 1.6-2.9-3.2 2.3z" fill="#3c678e"/><path d="M611.9 282.1l3 1.5 1.7-.6-2.9-1.4z" fill="#490965"/><path d="M581.8 262.2l3 3 1.8-.3-3-2.9z" fill="#493a85"/><path d="M601.3 277.2l3 2 1.7-.5-2.9-1.9z" fill="#4b1870"/><path d="M564 240.8l2.9 4 1.9-.1-3-4z" fill="#3c668e"/><path d="M719.5 227.5l3.2-2.7 1.6-3.3-3.2 2.7z" fill="#34858e"/><path d="M689.3 262.6l3.1-1.7 1.6-2.3-3.1 1.7z" fill="#474288"/><path d="M540.6 197.1l3.1 5.5 1.8-.2-3-5.5z" fill="#34b07f"/><path d="M584.8 265.2l2.9 2.8 1.8-.3-2.9-2.8z" fill="#4a3583"/><path d="M700.4 251.8l3.1-2.1 1.6-2.6-3.1 2.1z" fill="#41598d"/><path d="M642.5 285.9l3 .1 1.7-1.1-3-.1z" fill="#490260"/><path d="M547.8 213.3l3 5 1.9-.2-3-5z" fill="#30948c"/><path d="M561 236.7l3 4.1 1.8-.1-3-4.1z" fill="#3a6d8e"/><path d="M664.2 279.5l3-.8 1.7-1.5-3 .8z" fill="#4b1870"/><path d="M668.9 277.2l3-1 1.7-1.7-3.1 1z" fill="#4c1e75"/><path d="M587.7 268l3 2.6 1.8-.3-3-2.6z" fill="#4b2e7f"/><path d="M622.6 285.4l2.9 1 1.7-.7-2.9-1z" fill="#490260"/><path d="M630.2 286.4l3 .6 1.7-.8-3-.6z" fill="#48005e"/><path d="M659.5 281.6l3.1-.6 1.6-1.5-3 .6z" fill="#4b126c"/><path d="M673.6 274.5l3-1.1 1.7-1.9-3.1 1.2z" fill="#4b247a"/><path d="M558 232.4l3 4.3 1.8-.1-3-4.3z" fill="#38748e"/><path d="M604.3 279.2l2.9 1.8 1.8-.5-3-1.8z" fill="#4b136d"/><path d="M614.9 283.6l3 1.3 1.7-.6-3-1.3z" fill="#490664"/><path d="M654.9 283.4l3-.5 1.6-1.3-3 .4z" fill="#4b0d68"/><path d="M694 258.6l3.1-1.9 1.6-2.4-3.1 1.9z" fill="#454b8a"/><path d="M590.7 270.6l2.9 2.5 1.8-.3-2.9-2.5z" fill="#4c297c"/><path d="M678.3 271.5l3-1.3 1.7-1.9-3.1 1.3z" fill="#4b2d7e"/><path d="M544.8 208.1l3 5.2 1.9-.2-3-5.1z" fill="#2f9f89"/><path d="M637.9 286.6l2.9 .3 1.7-1-2.9-.2z" fill="#48005e"/><path d="M555 227.9l3 4.5 1.8-.1-3-4.5z" fill="#357d8e"/><path d="M537.6 191.4l3 5.7 1.9-.2-3-5.7z" fill="#3ebb77"/><path d="M711.5 239.2l3.1-2.4 1.6-3-3.1 2.5z" fill="#39718e"/><path d="M717.9 230.7l3.1-2.7 1.7-3.2-3.2 2.7z" fill="#35828e"/><path d="M650.2 284.8l3-.2 1.7-1.2-3 .2z" fill="#490965"/><path d="M705.1 247.1l3.1-2.3 1.7-2.7-3.2 2.3z" fill="#3d638e"/><path d="M683 268.3l3-1.5 1.7-2.1-3.1 1.5z" fill="#4a3683"/><path d="M593.6 273.1l3 2.3 1.8-.3-3-2.3z" fill="#4b247a"/><path d="M607.2 281l3 1.6 1.7-.5-2.9-1.6z" fill="#4b106a"/><path d="M552 223.2l3 4.7 1.8-.1-3-4.7z" fill="#33868e"/><path d="M625.5 286.4l3 .8 1.7-.8-3-.7z" fill="#490260"/><path d="M698.7 254.3l3.1-2.1 1.7-2.5-3.1 2.1z" fill="#41578c"/><path d="M645.5 286l3-.1 1.7-1.1-3 .1z" fill="#490563"/><path d="M541.8 202.7l3 5.4 1.9-.1-3-5.4z" fill="#30a984"/><path d="M617.9 284.9l2.9 1.1 1.8-.6-3-1.1z" fill="#490664"/><path d="M687.7 264.7l3-1.7 1.7-2.1-3.1 1.7z" fill="#483e87"/><path d="M633.2 287l3 .5 1.7-.9-3-.4z" fill="#490260"/><path d="M596.6 275.4l2.9 2.1 1.8-.3-2.9-2.1z" fill="#4c1f76"/><path d="M534.5 185.5l3.1 5.9 1.9-.2-3.1-5.8z" fill="#50c56b"/><path d="M549 218.3l3 4.9 1.8-.1-3-4.8z" fill="#318f8d"/><path d="M571.1 252.3l2.9 3.5 1.9-.1-3-3.4z" fill="#42538c"/><path d="M574 255.8l3 3.3 1.8-.1-2.9-3.3z" fill="#444c8a"/><path d="M568.1 248.7l3 3.6 1.8 0-3-3.7z" fill="#405a8d"/><path d="M610.2 282.6l3 1.5 1.7-.5-3-1.5z" fill="#4b0f69"/><path d="M577 259.1l3 3.2 1.8-.1-3-3.2z" fill="#474589"/><path d="M667.2 278.7l3.1-.9 1.6-1.6-3 1z" fill="#4c1e75"/><path d="M565.1 244.8l3 3.9 1.8-.1-3-3.8z" fill="#3e618d"/><path d="M709.9 242.1l3.1-2.5 1.6-2.8-3.1 2.4z" fill="#3a6f8e"/><path d="M662.6 281l3-.8 1.6-1.5-3 .8z" fill="#4b1870"/><path d="M640.8 286.9l3 .1 1.7-1-3-.1z" fill="#490361"/><path d="M692.4 260.9l3.1-1.9 1.6-2.3-3.1 1.9z" fill="#454a8a"/><path d="M716.2 233.8l3.2-2.7 1.6-3.1-3.1 2.7z" fill="#357d8e"/><path d="M671.9 276.2l3.1-1.1 1.6-1.7-3 1.1z" fill="#4b247a"/><path d="M580 262.3l2.9 3 1.9-.1-3-3z" fill="#483e87"/><path d="M599.5 277.5l3 2 1.8-.3-3-2z" fill="#4c1d74"/><path d="M562.1 240.8l3 4 1.8 0-2.9-4z" fill="#3c698e"/><path d="M657.9 282.9l3-.6 1.7-1.3-3.1 .6z" fill="#4b126c"/><path d="M538.7 197.2l3.1 5.5 1.9-.1-3.1-5.5z" fill="#36b37d"/><path d="M676.6 273.4l3.1-1.4 1.6-1.8-3 1.3z" fill="#4b2d7e"/><path d="M703.5 249.7l3.1-2.2 1.6-2.7-3.1 2.3z" fill="#3e608d"/><path d="M582.9 265.3l3 2.8 1.8-.1-2.9-2.8z" fill="#493984"/><path d="M545.9 213.3l3.1 5 1.8 0-3-5z" fill="#30988b"/><path d="M620.8 286l3 1 1.7-.6-2.9-1z" fill="#490563"/><path d="M628.5 287.2l3 .6 1.7-.8-3-.6z" fill="#490361"/><path d="M559.1 236.7l3 4.1 1.9 0-3-4.1z" fill="#39708e"/><path d="M653.2 284.6l3-.4 1.7-1.3-3 .5z" fill="#4b0f69"/><path d="M681.3 270.2l3.1-1.5 1.6-1.9-3 1.5z" fill="#4a3583"/><path d="M585.9 268.1l3 2.6 1.8-.1-3-2.6z" fill="#4b3482"/><path d="M602.5 279.5l3 1.8 1.7-.3-2.9-1.8z" fill="#4b1870"/><path d="M613.2 284.1l2.9 1.3 1.8-.5-3-1.3z" fill="#4b0d68"/><path d="M636.2 287.5l2.9 .3 1.7-.9-2.9-.3z" fill="#490361"/><path d="M556.1 232.3l3 4.4 1.9 0-3-4.3z" fill="#37788e"/><path d="M697.1 256.7l3.1-2 1.6-2.5-3.1 2.1z" fill="#42538c"/><path d="M648.5 285.9l3-.2 1.7-1.1-3 .2z" fill="#4a0a67"/><path d="M588.9 270.7l2.9 2.5 1.8-.1-2.9-2.5z" fill="#4b2e7f"/><path d="M686 266.8l3.1-1.7 1.6-2.1-3 1.7z" fill="#493d86"/><path d="M542.9 208.1l3 5.2 1.9 0-3-5.2z" fill="#2fa287"/><path d="M535.7 191.5l3 5.7 1.9-.1-3-5.7z" fill="#42be74"/><path d="M553.1 227.8l3 4.5 1.9 .1-3-4.5z" fill="#35818e"/><path d="M714.6 236.8l3.2-2.7 1.6-3-3.2 2.7z" fill="#377a8e"/><path d="M708.2 244.8l3.2-2.4 1.6-2.8-3.1 2.5z" fill="#3a6c8e"/><path d="M591.8 273.2l3 2.3 1.8-.1-3-2.3z" fill="#4c297c"/><path d="M605.5 281.3l2.9 1.6 1.8-.3-3-1.6z" fill="#4b156e"/><path d="M643.8 287l3-.1 1.7-1-3 .1z" fill="#490664"/><path d="M623.8 287l3 .8 1.7-.6-3-.8z" fill="#490563"/><path d="M690.7 263l3.1-1.8 1.7-2.2-3.1 1.9z" fill="#464789"/><path d="M631.5 287.8l2.9 .4 1.8-.7-3-.5z" fill="#490563"/><path d="M701.8 252.2l3.2-2.2 1.6-2.5-3.1 2.2z" fill="#3f5e8d"/><path d="M550.1 223.1l3 4.7 1.9 .1-3-4.7z" fill="#33898e"/><path d="M616.1 285.4l3 1.1 1.7-.5-2.9-1.1z" fill="#4a0a67"/><path d="M539.9 202.7l3 5.4 1.9 0-3-5.4z" fill="#32ac82"/><path d="M665.6 280.2l3-.9 1.7-1.5-3.1 .9z" fill="#4c1e75"/><path d="M670.3 277.8l3-1.1 1.7-1.6-3.1 1.1z" fill="#4b247a"/><path d="M594.8 275.5l3 2.2 1.7-.2-2.9-2.1z" fill="#4b247a"/><path d="M660.9 282.3l3-.7 1.7-1.4-3 .8z" fill="#4b1870"/><path d="M675 275.1l3-1.3 1.7-1.8-3.1 1.4z" fill="#4b2b7e"/><path d="M532.6 185.6l3.1 5.9 1.9-.1-3.1-5.9z" fill="#55c768"/><path d="M639.1 287.8l3 .1 1.7-.9-3-.1z" fill="#490664"/><path d="M656.2 284.2l3-.6 1.7-1.3-3 .6z" fill="#4b136d"/><path d="M547.1 218.3l3 4.8 1.9 .1-3-4.9z" fill="#30928c"/><path d="M608.4 282.9l3 1.5 1.8-.3-3-1.5z" fill="#4b136d"/><path d="M569.2 252.3l3 3.5 1.8 0-2.9-3.5z" fill="#41578c"/><path d="M679.7 272l3.1-1.4 1.6-1.9-3.1 1.5z" fill="#4b3482"/><path d="M572.2 255.8l3 3.3 1.8 0-3-3.3z" fill="#444f8b"/><path d="M695.5 259l3.1-2 1.6-2.3-3.1 2z" fill="#43518b"/><path d="M566.2 248.6l3 3.7 1.9 0-3-3.6z" fill="#3f5e8d"/><path d="M575.2 259.1l2.9 3.2 1.9 0-3-3.2z" fill="#454a8a"/><path d="M597.8 277.7l2.9 2 1.8-.2-3-2z" fill="#4c2077"/><path d="M563.2 244.8l3 3.8 1.9 .1-3-3.9z" fill="#3c668e"/><path d="M713 239.6l3.2-2.6 1.6-2.9-3.2 2.7z" fill="#37768e"/><path d="M651.5 285.7l3-.4 1.7-1.1-3 .4z" fill="#4b106a"/><path d="M578.1 262.3l3 3 1.8 0-2.9-3z" fill="#474388"/><path d="M536.8 197.2l3.1 5.5 1.9 0-3.1-5.5z" fill="#39b67b"/><path d="M626.8 287.8l2.9 .6 1.8-.6-3-.6z" fill="#490664"/><path d="M560.2 240.7l3 4.1 1.9 0-3-4z" fill="#3a6d8e"/><path d="M706.6 247.5l3.1-2.5 1.7-2.6-3.2 2.4z" fill="#3c698e"/><path d="M684.4 268.7l3.1-1.6 1.6-2-3.1 1.7z" fill="#493c86"/><path d="M619.1 286.5l3 1 1.7-.5-3-1z" fill="#4a0a67"/><path d="M581.1 265.3l3 2.8 1.8 0-3-2.8z" fill="#493d86"/><path d="M544 213.2l3.1 5.1 1.9 0-3.1-5z" fill="#2f9b8a"/><path d="M557.2 236.6l3 4.1 1.9 .1-3-4.1z" fill="#38748e"/><path d="M634.4 288.2l3 .3 1.7-.7-2.9-.3z" fill="#490664"/><path d="M646.8 286.9l3-.2 1.7-1-3 .2z" fill="#4b0d68"/><path d="M584.1 268.1l3 2.7 1.8-.1-3-2.6z" fill="#4a3784"/><path d="M611.4 284.4l3 1.3 1.7-.3-2.9-1.3z" fill="#4b126c"/><path d="M600.7 279.7l3 1.8 1.8-.2-3-1.8z" fill="#4c1e75"/><path d="M700.2 254.7l3.1-2.3 1.7-2.4-3.2 2.2z" fill="#3f5c8d"/><path d="M689.1 265.1l3.1-1.8 1.6-2.1-3.1 1.8z" fill="#464689"/><path d="M554.2 232.2l3 4.4 1.9 .1-3-4.4z" fill="#367c8e"/><path d="M587.1 270.8l2.9 2.5 1.8-.1-2.9-2.5z" fill="#4b3381"/><path d="M541 208l3 5.2 1.9 .1-3-5.2z" fill="#2fa586"/><path d="M533.8 191.4l3 5.8 1.9 0-3-5.7z" fill="#48c170"/><path d="M642.1 287.9l3-.1 1.7-.9-3 .1z" fill="#4a0a67"/><path d="M551.2 227.7l3 4.5 1.9 .1-3-4.5z" fill="#34848e"/><path d="M668.6 279.3l3.1-1.2 1.6-1.4-3 1.1z" fill="#4b247a"/><path d="M663.9 281.6l3.1-1 1.6-1.3-3 .9z" fill="#4c1f76"/><path d="M622.1 287.5l2.9 .8 1.8-.5-3-.8z" fill="#4a0a67"/><path d="M711.4 242.4l3.1-2.6 1.7-2.8-3.2 2.6z" fill="#38738e"/><path d="M673.3 276.7l3.1-1.3 1.6-1.6-3 1.3z" fill="#4b2b7e"/><path d="M590 273.3l3 2.3 1.8-.1-3-2.3z" fill="#4b2d7e"/><path d="M603.7 281.5l3 1.7 1.7-.3-2.9-1.6z" fill="#4c1a73"/><path d="M693.8 261.2l3.2-2.1 1.6-2.1-3.1 2z" fill="#444f8b"/><path d="M629.7 288.4l3 .5 1.7-.7-2.9-.4z" fill="#490965"/><path d="M659.2 283.6l3.1-.8 1.6-1.2-3 .7z" fill="#4b1971"/><path d="M678 273.8l3.1-1.5 1.7-1.7-3.1 1.4z" fill="#4b3482"/><path d="M614.4 285.7l2.9 1.2 1.8-.4-3-1.1z" fill="#4b106a"/><path d="M705 250l3.1-2.4 1.6-2.6-3.1 2.5z" fill="#3c678e"/><path d="M654.5 285.3l3.1-.6 1.6-1.1-3 .6z" fill="#4b156e"/><path d="M548.2 223l3 4.7 1.9 .1-3-4.7z" fill="#328d8d"/><path d="M538 202.6l3 5.4 1.9 .1-3-5.4z" fill="#33af80"/><path d="M637.4 288.5l3 .1 1.7-.7-3-.1z" fill="#4a0a67"/><path d="M593 275.6l3 2.2 1.8-.1-3-2.2z" fill="#4c297c"/><path d="M682.8 270.6l3-1.7 1.7-1.8-3.1 1.6z" fill="#493b85"/><path d="M530.7 185.5l3.1 5.9 1.9 .1-3.1-5.9z" fill="#5bca64"/><path d="M649.8 286.7l3-.4 1.7-1-3 .4z" fill="#4b126c"/><path d="M606.7 283.2l2.9 1.4 1.8-.2-3-1.5z" fill="#4b1870"/><path d="M698.6 257l3.1-2.3 1.6-2.3-3.1 2.3z" fill="#405a8d"/><path d="M545.2 218.1l3 4.9 1.9 .1-3-4.8z" fill="#30968b"/><path d="M567.4 252.1l2.9 3.5 1.9 .2-3-3.5z" fill="#405b8d"/><path d="M570.3 255.6l3 3.4 1.9 .1-3-3.3z" fill="#42548c"/><path d="M687.5 267.1l3.1-1.9 1.6-1.9-3.1 1.8z" fill="#464488"/><path d="M564.4 248.4l3 3.7 1.8 .2-3-3.7z" fill="#3d628e"/><path d="M573.3 259l3 3.2 1.8 .1-2.9-3.2z" fill="#444e8b"/><path d="M596 277.8l2.9 2 1.8-.1-2.9-2z" fill="#4b247a"/><path d="M625 288.3l3 .6 1.7-.5-2.9-.6z" fill="#4a0a67"/><path d="M561.4 244.6l3 3.8 1.8 .2-3-3.8z" fill="#3b6a8e"/><path d="M576.3 262.2l3 3 1.8 .1-3-3z" fill="#464789"/><path d="M617.3 286.9l3 .9 1.8-.3-3-1z" fill="#4b106a"/><path d="M645.1 287.8l3-.2 1.7-.9-3 .2z" fill="#4b106a"/><path d="M534.9 197l3.1 5.6 1.9 .1-3.1-5.5z" fill="#3eb978"/><path d="M709.7 245l3.2-2.6 1.6-2.6-3.1 2.6z" fill="#39708e"/><path d="M632.7 288.9l3 .3 1.7-.7-3-.3z" fill="#4a0a67"/><path d="M558.4 240.5l3 4.1 1.8 .2-3-4.1z" fill="#39708e"/><path d="M579.3 265.2l3 2.8 1.8 .1-3-2.8z" fill="#474288"/><path d="M542.1 213l3.1 5.1 1.9 .2-3.1-5.1z" fill="#2fa088"/><path d="M692.2 263.3l3.1-2.1 1.7-2.1-3.2 2.1z" fill="#444d8b"/><path d="M555.4 236.3l3 4.2 1.8 .2-3-4.1z" fill="#37788e"/><path d="M609.6 284.6l3 1.4 1.8-.3-3-1.3z" fill="#4b166f"/><path d="M703.3 252.4l3.2-2.4 1.6-2.4-3.1 2.4z" fill="#3d638e"/><path d="M582.3 268l2.9 2.7 1.9 .1-3-2.7z" fill="#493c86"/><path d="M598.9 279.8l3 1.8 1.8-.1-3-1.8z" fill="#4c2278"/><path d="M667 280.6l3-1.1 1.7-1.4-3.1 1.2z" fill="#4b247a"/><path d="M671.7 278.1l3-1.2 1.7-1.5-3.1 1.3z" fill="#4b2b7e"/><path d="M662.3 282.8l3-.9 1.7-1.3-3.1 1z" fill="#4c1f76"/><path d="M640.4 288.6l3 0 1.7-.8-3 .1z" fill="#4b0f69"/><path d="M552.3 231.9l3.1 4.4 1.8 .3-3-4.4z" fill="#35818e"/><path d="M676.4 275.4l3.1-1.5 1.6-1.6-3.1 1.5z" fill="#4b3482"/><path d="M657.6 284.7l3-.7 1.7-1.2-3.1 .8z" fill="#4c1a73"/><path d="M585.2 270.7l3 2.5 1.8 .1-2.9-2.5z" fill="#4a3784"/><path d="M531.8 191.2l3.1 5.8 1.9 .2-3-5.8z" fill="#4dc36d"/><path d="M539.1 207.8l3 5.2 1.9 .2-3-5.2z" fill="#30a984"/><path d="M620.3 287.8l3 .9 1.7-.4-2.9-.8z" fill="#4b106a"/><path d="M681.1 272.3l3.1-1.7 1.6-1.7-3 1.7z" fill="#493b85"/><path d="M628 288.9l3 .5 1.7-.5-3-.5z" fill="#4b0d68"/><path d="M697 259.1l3.1-2.2 1.6-2.2-3.1 2.3z" fill="#41588c"/><path d="M652.8 286.3l3.1-.6 1.7-1-3.1 .6z" fill="#4b166f"/><path d="M549.3 227.4l3 4.5 1.9 .3-3-4.5z" fill="#33888e"/><path d="M601.9 281.6l3 1.7 1.8-.1-3-1.7z" fill="#4c1f76"/><path d="M588.2 273.2l3 2.4 1.8 0-3-2.3z" fill="#4b3381"/><path d="M612.6 286l3 1.1 1.7-.2-2.9-1.2z" fill="#4b156e"/><path d="M635.7 289.2l3 .1 1.7-.7-3-.1z" fill="#4b0f69"/><path d="M708.1 247.6l3.2-2.6 1.6-2.6-3.2 2.6z" fill="#3a6f8e"/><path d="M685.8 268.9l3.1-1.8 1.7-1.9-3.1 1.9z" fill="#464488"/><path d="M648.1 287.6l3.1-.4 1.6-.9-3 .4z" fill="#4b156e"/><path d="M546.3 222.7l3 4.7 1.9 .3-3-4.7z" fill="#31918c"/><path d="M536 202.3l3.1 5.5 1.9 .2-3-5.4z" fill="#36b37d"/><path d="M591.2 275.6l3 2.1 1.8 .1-3-2.2z" fill="#4b2e7f"/><path d="M528.8 185.3l3 5.9 2 .2-3.1-5.9z" fill="#63cd5f"/><path d="M701.7 254.7l3.2-2.4 1.6-2.3-3.2 2.4z" fill="#3e618d"/><path d="M604.9 283.3l3 1.5 1.7-.2-2.9-1.4z" fill="#4c1e75"/><path d="M690.6 265.2l3.1-2 1.6-2-3.1 2.1z" fill="#444c8a"/><path d="M623.3 288.7l3 .6 1.7-.4-3-.6z" fill="#4b106a"/><path d="M643.4 288.6l3.1-.2 1.6-.8-3 .2z" fill="#4b126c"/><path d="M543.3 217.8l3 4.9 1.9 .3-3-4.9z" fill="#2f9a8a"/><path d="M565.5 251.8l3 3.6 1.8 .2-2.9-3.5z" fill="#3e608d"/><path d="M568.5 255.4l3 3.3 1.8 .3-3-3.4z" fill="#41598d"/><path d="M594.2 277.7l2.9 2 1.8 .1-2.9-2z" fill="#4c2a7d"/><path d="M615.6 287.1l3 1 1.7-.3-3-.9z" fill="#4b156e"/><path d="M562.5 248.1l3 3.7 1.9 .3-3-3.7z" fill="#3c678e"/><path d="M631 289.4l3 .3 1.7-.5-3-.3z" fill="#4b106a"/><path d="M571.5 258.7l3 3.2 1.8 .3-3-3.2z" fill="#42538c"/><path d="M670 279.5l3.1-1.3 1.6-1.3-3 1.2z" fill="#4b2d7e"/><path d="M665.3 281.9l3.1-1.1 1.6-1.3-3 1.1z" fill="#4b277a"/><path d="M559.5 244.2l3 3.9 1.9 .3-3-3.8z" fill="#3a6e8e"/><path d="M574.5 261.9l2.9 3.1 1.9 .2-3-3z" fill="#444d8b"/><path d="M533 196.7l3 5.6 2 .3-3.1-5.6z" fill="#42be74"/><path d="M674.7 276.9l3.1-1.5 1.7-1.5-3.1 1.5z" fill="#4b3482"/><path d="M660.6 284l3-1 1.7-1.1-3 .9z" fill="#4c2077"/><path d="M695.3 261.2l3.2-2.2 1.6-2.1-3.1 2.2z" fill="#41578c"/><path d="M556.5 240.2l3 4 1.9 .4-3-4.1z" fill="#38748e"/><path d="M577.4 265l3 2.8 1.9 .2-3-2.8z" fill="#464789"/><path d="M540.2 212.7l3.1 5.1 1.9 .3-3.1-5.1z" fill="#2fa387"/><path d="M607.9 284.8l2.9 1.3 1.8-.1-3-1.4z" fill="#4c1a73"/><path d="M679.5 273.9l3-1.6 1.7-1.7-3.1 1.7z" fill="#493b85"/><path d="M655.9 285.7l3-.7 1.7-1-3 .7z" fill="#4c1d74"/><path d="M638.7 289.3l3-.1 1.7-.6-3 0z" fill="#4b126c"/><path d="M706.5 250l3.2-2.6 1.6-2.4-3.2 2.6z" fill="#3a6d8e"/><path d="M597.1 279.7l3 1.9 1.8 0-3-1.8z" fill="#4c287b"/><path d="M553.5 236l3 4.2 1.9 .3-3-4.2z" fill="#367c8e"/><path d="M580.4 267.8l3 2.7 1.8 .2-2.9-2.7z" fill="#474288"/><path d="M684.2 270.6l3.1-1.8 1.6-1.7-3.1 1.8z" fill="#474388"/><path d="M651.2 287.2l3-.6 1.7-.9-3.1 .6z" fill="#4b1971"/><path d="M550.4 231.6l3.1 4.4 1.9 .3-3.1-4.4z" fill="#34848e"/><path d="M583.4 270.5l3 2.5 1.8 .2-3-2.5z" fill="#493c86"/><path d="M626.3 289.3l3 .5 1.7-.4-3-.5z" fill="#4b126c"/><path d="M618.6 288.1l3 .8 1.7-.2-3-.9z" fill="#4b156e"/><path d="M529.9 191l3.1 5.7 1.9 .3-3.1-5.8z" fill="#54c769"/><path d="M700.1 256.9l3.1-2.4 1.7-2.2-3.2 2.4z" fill="#3e608d"/><path d="M537.2 207.4l3 5.3 1.9 .3-3-5.2z" fill="#32ae81"/><path d="M600.1 281.6l3 1.7 1.8 0-3-1.7z" fill="#4b247a"/><path d="M688.9 267.1l3.2-2.1 1.6-1.8-3.1 2z" fill="#444c8a"/><path d="M634 289.7l3 .1 1.7-.5-3-.1z" fill="#4b126c"/><path d="M547.4 227l3 4.6 1.9 .3-3-4.5z" fill="#328d8d"/><path d="M610.8 286.1l3 1.2 1.8-.2-3-1.1z" fill="#4c1a73"/><path d="M646.5 288.4l3-.4 1.7-.8-3.1 .4z" fill="#4b166f"/><path d="M586.4 273l3 2.4 1.8 .2-3-2.4z" fill="#4a3784"/><path d="M544.4 222.3l3 4.7 1.9 .4-3-4.7z" fill="#30958b"/><path d="M534.1 202l3.1 5.4 1.9 .4-3.1-5.5z" fill="#3ab77a"/><path d="M589.4 275.4l3 2.2 1.8 .1-3-2.1z" fill="#4b3482"/><path d="M693.7 263.2l3.1-2.2 1.7-2-3.2 2.2z" fill="#41568c"/><path d="M641.7 289.2l3.1-.2 1.7-.6-3.1 .2z" fill="#4b166f"/><path d="M704.9 252.3l3.1-2.6 1.7-2.3-3.2 2.6z" fill="#3b6b8e"/><path d="M668.4 280.8l3-1.3 1.7-1.3-3.1 1.3z" fill="#4b2d7e"/><path d="M526.8 185l3.1 6 1.9 .2-3-5.9z" fill="#6bcf5a"/><path d="M603.1 283.3l3 1.5 1.8 0-3-1.5z" fill="#4c2278"/><path d="M663.6 283l3.1-1.1 1.7-1.1-3.1 1.1z" fill="#4c287b"/><path d="M673.1 278.2l3.1-1.4 1.6-1.4-3.1 1.5z" fill="#4b3482"/><path d="M621.6 288.9l2.9 .7 1.8-.3-3-.6z" fill="#4b156e"/><path d="M658.9 285l3.1-.9 1.6-1.1-3 1z" fill="#4c2379"/><path d="M629.3 289.8l3 .3 1.7-.4-3-.3z" fill="#4b136d"/><path d="M677.8 275.4l3.1-1.6 1.6-1.5-3 1.6z" fill="#493b85"/><path d="M613.8 287.3l3 1 1.8-.2-3-1z" fill="#4b1971"/><path d="M541.3 217.3l3.1 5 1.9 .4-3-4.9z" fill="#2f9f89"/><path d="M592.4 277.6l2.9 2 1.8 .1-2.9-2z" fill="#4b2f80"/><path d="M563.6 251.4l3 3.6 1.9 .4-3-3.6z" fill="#3c648e"/><path d="M566.6 255l3 3.4 1.9 .3-3-3.3z" fill="#3f5e8d"/><path d="M654.2 286.6l3-.7 1.7-.9-3 .7z" fill="#4c1f76"/><path d="M560.6 247.7l3 3.7 1.9 .4-3-3.7z" fill="#3a6c8e"/><path d="M569.6 258.4l3 3.2 1.9 .3-3-3.2z" fill="#41588c"/><path d="M682.5 272.3l3.2-1.9 1.6-1.6-3.1 1.8z" fill="#474388"/><path d="M698.5 259l3.1-2.4 1.6-2.1-3.1 2.4z" fill="#3f5e8d"/><path d="M557.6 243.8l3 3.9 1.9 .4-3-3.9z" fill="#39728e"/><path d="M531 196.4l3.1 5.6 1.9 .3-3-5.6z" fill="#48c170"/><path d="M572.6 261.6l3 3 1.8 .4-2.9-3.1z" fill="#43528c"/><path d="M637 289.8l3 0 1.7-.6-3 .1z" fill="#4b166f"/><path d="M606.1 284.8l3 1.3 1.7 0-2.9-1.3z" fill="#4c2077"/><path d="M554.6 239.7l3 4.1 1.9 .4-3-4z" fill="#37798e"/><path d="M575.6 264.6l3 2.9 1.8 .3-3-2.8z" fill="#444c8a"/><path d="M649.5 288l3-.6 1.7-.8-3 .6z" fill="#4c1d74"/><path d="M538.3 212.2l3 5.1 2 .5-3.1-5.1z" fill="#30a885"/><path d="M687.3 268.8l3.1-2 1.7-1.8-3.2 2.1z" fill="#454b8a"/><path d="M595.3 279.6l3 1.9 1.8 .1-3-1.9z" fill="#4b2d7e"/><path d="M551.5 235.5l3.1 4.2 1.9 .5-3-4.2z" fill="#35828e"/><path d="M578.6 267.5l3 2.7 1.8 .3-3-2.7z" fill="#464789"/><path d="M624.5 289.6l3 .5 1.8-.3-3-.5z" fill="#4b166f"/><path d="M616.8 288.3l3 .8 1.8-.2-3-.8z" fill="#4b1971"/><path d="M703.2 254.5l3.2-2.6 1.6-2.2-3.1 2.6z" fill="#3c698e"/><path d="M548.5 231.1l3 4.4 2 .5-3.1-4.4z" fill="#33898e"/><path d="M644.8 289l3-.3 1.7-.7-3 .4z" fill="#4c1a73"/><path d="M581.6 270.2l3 2.5 1.8 .3-3-2.5z" fill="#474388"/><path d="M692.1 265l3.1-2.1 1.6-1.9-3.1 2.2z" fill="#42548c"/><path d="M632.3 290.1l3 .2 1.7-.5-3-.1z" fill="#4b166f"/><path d="M527.9 190.5l3.1 5.9 2 .3-3.1-5.7z" fill="#5bca64"/><path d="M535.2 206.9l3.1 5.3 1.9 .5-3-5.3z" fill="#35b17f"/><path d="M598.3 281.5l3 1.6 1.8 .2-3-1.7z" fill="#4c2a7d"/><path d="M609.1 286.1l3 1.2 1.7 0-3-1.2z" fill="#4c1f76"/><path d="M545.5 226.5l3 4.6 1.9 .5-3-4.6z" fill="#31918c"/><path d="M584.6 272.7l3 2.4 1.8 .3-3-2.4z" fill="#493d86"/><path d="M666.7 281.9l3.1-1.2 1.6-1.2-3 1.3z" fill="#4b2e7f"/><path d="M671.4 279.5l3.1-1.4 1.7-1.3-3.1 1.4z" fill="#4a3583"/><path d="M662 284.1l3-1.1 1.7-1.1-3.1 1.1z" fill="#4c297c"/><path d="M676.2 276.8l3.1-1.6 1.6-1.4-3.1 1.6z" fill="#493b85"/><path d="M640 289.8l3-.2 1.8-.6-3.1 .2z" fill="#4b1971"/><path d="M696.8 261l3.2-2.4 1.6-2-3.1 2.4z" fill="#3f5d8d"/><path d="M657.2 285.9l3.1-.9 1.7-.9-3.1 .9z" fill="#4b247a"/><path d="M680.9 273.8l3.1-1.8 1.7-1.6-3.2 1.9z" fill="#474388"/><path d="M542.4 221.7l3.1 4.8 1.9 .5-3-4.7z" fill="#2f998a"/><path d="M587.6 275.1l2.9 2.2 1.9 .3-3-2.2z" fill="#493a85"/><path d="M532.1 201.5l3.1 5.4 2 .5-3.1-5.4z" fill="#40bc76"/><path d="M619.8 289.1l3 .7 1.7-.2-2.9-.7z" fill="#4c1a73"/><path d="M601.3 283.1l3 1.6 1.8 .1-3-1.5z" fill="#4c287b"/><path d="M524.8 184.6l3.1 5.9 2 .5-3.1-6z" fill="#73d254"/><path d="M627.5 290.1l3.1 .3 1.7-.3-3-.3z" fill="#4b1971"/><path d="M652.5 287.4l3-.7 1.7-.8-3 .7z" fill="#4c2278"/><path d="M612.1 287.3l2.9 1 1.8 0-3-1z" fill="#4c1f76"/><path d="M685.7 270.4l3.1-2 1.6-1.6-3.1 2z" fill="#454b8a"/><path d="M539.4 216.8l3 4.9 2 .6-3.1-5z" fill="#2fa387"/><path d="M590.5 277.3l3 2 1.8 .3-2.9-2z" fill="#4a3683"/><path d="M635.3 290.3l3-.1 1.7-.4-3 0z" fill="#4b1971"/><path d="M701.6 256.6l3.2-2.5 1.6-2.2-3.2 2.6z" fill="#3c688e"/><path d="M564.7 254.5l3 3.4 1.9 .5-3-3.4z" fill="#3d638e"/><path d="M561.7 250.9l3 3.6 1.9 .5-3-3.6z" fill="#3b6a8e"/><path d="M647.8 288.7l3-.6 1.7-.7-3 .6z" fill="#4c1f76"/><path d="M567.7 257.9l3 3.2 1.9 .5-3-3.2z" fill="#3f5d8d"/><path d="M558.7 247.2l3 3.7 1.9 .5-3-3.7z" fill="#3a708e"/><path d="M529.1 195.8l3 5.7 2 .5-3.1-5.6z" fill="#50c56b"/><path d="M690.4 266.8l3.1-2.2 1.7-1.7-3.1 2.1z" fill="#42538c"/><path d="M570.7 261.1l3 3.1 1.9 .4-3-3z" fill="#41588c"/><path d="M555.7 243.3l3 3.9 1.9 .5-3-3.9z" fill="#37768e"/><path d="M604.3 284.7l3 1.3 1.8 .1-3-1.3z" fill="#4b277a"/><path d="M573.7 264.2l3 2.8 1.9 .5-3-2.9z" fill="#43528c"/><path d="M552.7 239.2l3 4.1 1.9 .5-3-4.1z" fill="#357f8e"/><path d="M536.3 211.7l3.1 5.1 1.9 .5-3-5.1z" fill="#32ad82"/><path d="M593.5 279.3l3 1.9 1.8 .3-3-1.9z" fill="#4b3381"/><path d="M622.8 289.8l3 .5 1.7-.2-3-.5z" fill="#4c1d74"/><path d="M643 289.6l3.1-.4 1.7-.5-3 .3z" fill="#4c1e75"/><path d="M576.7 267l3 2.8 1.9 .4-3-2.7z" fill="#444c8a"/><path d="M549.6 234.9l3.1 4.3 1.9 .5-3.1-4.2z" fill="#33868e"/><path d="M615 288.3l3 .9 1.8-.1-3-.8z" fill="#4c1f76"/><path d="M630.6 290.4l3 .2 1.7-.3-3-.2z" fill="#4c1a73"/><path d="M695.2 262.9l3.1-2.4 1.7-1.9-3.2 2.4z" fill="#3f5c8d"/><path d="M669.8 280.7l3-1.5 1.7-1.1-3.1 1.4z" fill="#4a3683"/><path d="M665 283l3.1-1.3 1.7-1-3.1 1.2z" fill="#4b2f80"/><path d="M674.5 278.1l3.1-1.6 1.7-1.3-3.1 1.6z" fill="#493c86"/><path d="M579.7 269.8l3 2.5 1.9 .4-3-2.5z" fill="#464789"/><path d="M660.3 285l3-1.1 1.7-.9-3 1.1z" fill="#4b2b7e"/><path d="M546.6 230.5l3 4.4 1.9 .6-3-4.4z" fill="#318e8d"/><path d="M526 190l3.1 5.8 1.9 .6-3.1-5.9z" fill="#65cd5e"/><path d="M679.3 275.2l3.1-1.8 1.6-1.4-3.1 1.8z" fill="#474388"/><path d="M607.3 286l3 1.2 1.8 .1-3-1.2z" fill="#4b247a"/><path d="M533.3 206.4l3 5.3 2 .5-3.1-5.3z" fill="#39b67b"/><path d="M596.5 281.2l3 1.7 1.8 .2-3-1.6z" fill="#4b2f80"/><path d="M655.5 286.7l3.1-.9 1.7-.8-3.1 .9z" fill="#4c287b"/><path d="M638.3 290.2l3-.2 1.7-.4-3 .2z" fill="#4c1e75"/><path d="M582.7 272.3l3 2.4 1.9 .4-3-2.4z" fill="#464488"/><path d="M543.5 225.9l3.1 4.6 1.9 .6-3-4.6z" fill="#30958b"/><path d="M684 272l3.1-2 1.7-1.6-3.1 2z" fill="#454b8a"/><path d="M700 258.6l3.1-2.5 1.7-2-3.2 2.5z" fill="#3c668e"/><path d="M650.8 288.1l3.1-.7 1.6-.7-3 .7z" fill="#4b247a"/><path d="M618 289.2l3 .6 1.8 0-3-.7z" fill="#4c1f76"/><path d="M625.8 290.3l3 .3 1.8-.2-3.1-.3z" fill="#4c1e75"/><path d="M585.7 274.7l3 2.2 1.8 .4-2.9-2.2z" fill="#483e87"/><path d="M530.2 200.9l3.1 5.5 1.9 .5-3.1-5.4z" fill="#44bf72"/><path d="M688.8 268.4l3.1-2.1 1.6-1.7-3.1 2.2z" fill="#42538c"/><path d="M540.5 221.1l3 4.8 2 .6-3.1-4.8z" fill="#2f9f89"/><path d="M599.5 282.9l3 1.5 1.8 .3-3-1.6z" fill="#4b2e7f"/><path d="M522.9 184l3.1 6 1.9 .5-3.1-5.9z" fill="#7ed54d"/><path d="M610.3 287.2l3 1 1.7 .1-2.9-1z" fill="#4b247a"/><path d="M633.6 290.6l3 0 1.7-.4-3 .1z" fill="#4c1e75"/><path d="M646.1 289.2l3-.5 1.7-.6-3 .6z" fill="#4c2278"/><path d="M588.7 276.9l3 2.1 1.8 .3-3-2z" fill="#493b85"/><path d="M537.4 216.1l3.1 5 1.9 .6-3-4.9z" fill="#30a885"/><path d="M693.5 264.6l3.2-2.3 1.6-1.8-3.1 2.4z" fill="#3f5c8d"/><path d="M562.8 253.9l3 3.4 1.9 .6-3-3.4z" fill="#3c698e"/><path d="M559.8 250.3l3 3.6 1.9 .6-3-3.6z" fill="#3a6f8e"/><path d="M565.8 257.3l3.1 3.2 1.8 .6-3-3.2z" fill="#3d628e"/><path d="M556.8 246.5l3 3.8 1.9 .6-3-3.7z" fill="#37758e"/><path d="M527.1 195.2l3.1 5.7 1.9 .6-3-5.7z" fill="#57c867"/><path d="M602.5 284.4l3 1.4 1.8 .2-3-1.3z" fill="#4b2b7e"/><path d="M668.1 281.7l3.1-1.4 1.6-1.1-3 1.5z" fill="#4a3784"/><path d="M568.9 260.5l3 3.1 1.8 .6-3-3.1z" fill="#3f5d8d"/><path d="M553.8 242.6l3 3.9 1.9 .7-3-3.9z" fill="#367c8e"/><path d="M672.8 279.2l3.1-1.6 1.7-1.1-3.1 1.6z" fill="#493d86"/><path d="M641.3 290l3.1-.3 1.7-.5-3.1 .4z" fill="#4c2278"/><path d="M663.3 283.9l3.1-1.2 1.7-1-3.1 1.3z" fill="#4b3381"/><path d="M621 289.8l3.1 .5 1.7 0-3-.5z" fill="#4c2077"/><path d="M677.6 276.5l3.1-1.8 1.7-1.3-3.1 1.8z" fill="#464488"/><path d="M571.9 263.6l3 2.9 1.8 .5-3-2.8z" fill="#41588c"/><path d="M591.7 279l3 1.8 1.8 .4-3-1.9z" fill="#493984"/><path d="M550.7 238.5l3.1 4.1 1.9 .7-3-4.1z" fill="#34838e"/><path d="M534.4 211l3 5.1 2 .7-3.1-5.1z" fill="#35b17f"/><path d="M658.6 285.8l3.1-1.1 1.6-.8-3 1.1z" fill="#4b2e7f"/><path d="M628.8 290.6l3 .2 1.8-.2-3-.2z" fill="#4c2077"/><path d="M613.3 288.2l3 .9 1.7 .1-3-.9z" fill="#4b247a"/><path d="M698.3 260.5l3.2-2.6 1.6-1.8-3.1 2.5z" fill="#3c668e"/><path d="M574.9 266.5l3 2.7 1.8 .6-3-2.8z" fill="#43528c"/><path d="M682.4 273.4l3.1-2 1.6-1.4-3.1 2z" fill="#454b8a"/><path d="M547.7 234.2l3 4.3 2 .7-3.1-4.3z" fill="#328b8d"/><path d="M653.9 287.4l3-.9 1.7-.7-3.1 .9z" fill="#4c2a7d"/><path d="M636.6 290.6l3-.2 1.7-.4-3 .2z" fill="#4c2278"/><path d="M524 189.4l3.1 5.8 2 .6-3.1-5.8z" fill="#6fd157"/><path d="M577.9 269.2l3 2.6 1.8 .5-3-2.5z" fill="#444d8b"/><path d="M605.5 285.8l3 1.2 1.8 .2-3-1.2z" fill="#4b2b7e"/><path d="M544.7 229.7l3 4.5 1.9 .7-3-4.4z" fill="#30928c"/><path d="M687.1 270l3.2-2.2 1.6-1.5-3.1 2.1z" fill="#42538c"/><path d="M594.7 280.8l3 1.8 1.8 .3-3-1.7z" fill="#4a3683"/><path d="M531.3 205.6l3.1 5.4 1.9 .7-3-5.3z" fill="#3ebb77"/><path d="M649.1 288.7l3.1-.7 1.7-.6-3.1 .7z" fill="#4c287b"/><path d="M580.9 271.8l3 2.4 1.8 .5-3-2.4z" fill="#46498a"/><path d="M541.6 225.1l3.1 4.6 1.9 .8-3.1-4.6z" fill="#2f9b8a"/><path d="M624.1 290.3l3 .4 1.7-.1-3-.3z" fill="#4c2278"/><path d="M691.9 266.3l3.2-2.4 1.6-1.6-3.2 2.3z" fill="#3f5c8d"/><path d="M616.3 289.1l3 .7 1.7 0-3-.6z" fill="#4b247a"/><path d="M644.4 289.7l3-.5 1.7-.5-3 .5z" fill="#4b277a"/><path d="M597.7 282.6l3 1.5 1.8 .3-3-1.5z" fill="#4b3482"/><path d="M583.9 274.2l3 2.2 1.8 .5-3-2.2z" fill="#474589"/><path d="M631.8 290.8l3.1 0 1.7-.2-3 0z" fill="#4c2379"/><path d="M528.2 200.1l3.1 5.5 2 .8-3.1-5.5z" fill="#4dc36d"/><path d="M520.9 183.3l3.1 6.1 2 .6-3.1-6z" fill="#8bd945"/><path d="M538.5 220.3l3.1 4.8 1.9 .8-3-4.8z" fill="#2fa486"/><path d="M608.5 287l3 1 1.8 .2-3-1z" fill="#4c2a7d"/><path d="M671.2 280.3l3.1-1.6 1.6-1.1-3.1 1.6z" fill="#483e87"/><path d="M666.4 282.7l3.1-1.4 1.7-1-3.1 1.4z" fill="#493984"/><path d="M696.7 262.3l3.2-2.6 1.6-1.8-3.2 2.6z" fill="#3c648e"/><path d="M675.9 277.6l3.1-1.8 1.7-1.1-3.1 1.8z" fill="#474589"/><path d="M661.7 284.7l3-1.2 1.7-.8-3.1 1.2z" fill="#4a3583"/><path d="M586.9 276.4l3 2.1 1.8 .5-3-2.1z" fill="#474288"/><path d="M639.6 290.4l3.1-.4 1.7-.3-3.1 .3z" fill="#4b277a"/><path d="M535.5 215.3l3 5 2 .8-3.1-5z" fill="#32ad82"/><path d="M680.7 274.7l3.1-2 1.7-1.3-3.1 2z" fill="#444c8a"/><path d="M656.9 286.5l3.1-1 1.7-.8-3.1 1.1z" fill="#4b3081"/><path d="M600.7 284.1l3 1.4 1.8 .3-3-1.4z" fill="#4b3381"/><path d="M560.9 253.1l3 3.4 1.9 .8-3-3.4z" fill="#3a6e8e"/><path d="M557.9 249.5l3 3.6 1.9 .8-3-3.6z" fill="#38738e"/><path d="M525.1 194.5l3.1 5.6 2 .8-3.1-5.7z" fill="#60cc60"/><path d="M563.9 256.5l3.1 3.3 1.9 .7-3.1-3.2z" fill="#3c688e"/><path d="M554.9 245.7l3 3.8 1.9 .8-3-3.8z" fill="#377a8e"/><path d="M619.3 289.8l3 .5 1.8 0-3.1-.5z" fill="#4b277a"/><path d="M567 259.8l3 3.1 1.9 .7-3-3.1z" fill="#3d628e"/><path d="M627.1 290.7l3 .2 1.7-.1-3-.2z" fill="#4b247a"/><path d="M685.5 271.4l3.1-2.2 1.7-1.4-3.2 2.2z" fill="#42538c"/><path d="M551.8 241.8l3.1 3.9 1.9 .8-3-3.9z" fill="#35828e"/><path d="M652.2 288l3-.9 1.7-.6-3 .9z" fill="#4b2d7e"/><path d="M611.5 288l3 .9 1.8 .2-3-.9z" fill="#4c2a7d"/><path d="M589.9 278.5l3 1.9 1.8 .4-3-1.8z" fill="#483e87"/><path d="M570 262.9l3 2.9 1.9 .7-3-2.9z" fill="#3f5d8d"/><path d="M548.8 237.7l3 4.1 2 .8-3.1-4.1z" fill="#33888e"/><path d="M532.4 210.2l3.1 5.1 1.9 .8-3-5.1z" fill="#39b67b"/><path d="M634.9 290.8l3-.2 1.7-.2-3 .2z" fill="#4b277a"/><path d="M573 265.8l3 2.8 1.9 .6-3-2.7z" fill="#41598d"/><path d="M690.3 267.8l3.1-2.4 1.7-1.5-3.2 2.4z" fill="#3f5c8d"/><path d="M545.8 233.4l3 4.3 1.9 .8-3-4.3z" fill="#31908d"/><path d="M647.4 289.2l3.1-.8 1.7-.4-3.1 .7z" fill="#4b2b7e"/><path d="M603.7 285.5l3 1.2 1.8 .3-3-1.2z" fill="#4b3081"/><path d="M522 188.6l3.1 5.9 2 .7-3.1-5.8z" fill="#7ad450"/><path d="M576 268.6l3 2.5 1.9 .7-3-2.6z" fill="#42538c"/><path d="M592.9 280.4l3 1.7 1.8 .5-3-1.8z" fill="#493c86"/><path d="M542.7 228.9l3.1 4.5 1.9 .8-3-4.5z" fill="#30978b"/><path d="M529.3 204.8l3.1 5.4 2 .8-3.1-5.4z" fill="#44bf72"/><path d="M695.1 263.9l3.1-2.5 1.7-1.7-3.2 2.6z" fill="#3c648e"/><path d="M622.3 290.3l3 .3 1.8 .1-3-.4z" fill="#4c287b"/><path d="M579 271.1l3 2.4 1.9 .7-3-2.4z" fill="#444f8b"/><path d="M614.5 288.9l3 .7 1.8 .2-3-.7z" fill="#4c2a7d"/><path d="M642.7 290l3-.5 1.7-.3-3 .5z" fill="#4c2a7d"/><path d="M539.6 224.2l3.1 4.7 2 .8-3.1-4.6z" fill="#2fa188"/><path d="M669.5 281.3l3.1-1.6 1.7-1-3.1 1.6z" fill="#484187"/><path d="M630.1 290.9l3 0 1.8-.1-3.1 0z" fill="#4c287b"/><path d="M674.3 278.7l3.1-1.8 1.6-1.1-3.1 1.8z" fill="#464689"/><path d="M664.7 283.5l3.1-1.4 1.7-.8-3.1 1.4z" fill="#493b85"/><path d="M595.9 282.1l3 1.5 1.8 .5-3-1.5z" fill="#493a85"/><path d="M679 275.8l3.2-1.9 1.6-1.2-3.1 2z" fill="#444d8b"/><path d="M660 285.5l3.1-1.3 1.6-.7-3 1.2z" fill="#4a3784"/><path d="M606.7 286.7l3 1 1.8 .3-3-1z" fill="#4b3081"/><path d="M582 273.5l3 2.3 1.9 .6-3-2.2z" fill="#454b8a"/><path d="M526.2 199.3l3.1 5.5 2 .8-3.1-5.5z" fill="#57c867"/><path d="M518.9 182.5l3.1 6.1 2 .8-3.1-6.1z" fill="#97dc3c"/><path d="M536.6 219.4l3 4.8 2 .9-3.1-4.8z" fill="#30a984"/><path d="M683.8 272.7l3.2-2.2 1.6-1.3-3.1 2.2z" fill="#42548c"/><path d="M655.2 287.1l3.1-1.1 1.7-.5-3.1 1z" fill="#4b3482"/><path d="M637.9 290.6l3-.4 1.8-.2-3.1 .4z" fill="#4c2a7d"/><path d="M585 275.8l3 2.1 1.9 .6-3-2.1z" fill="#464789"/><path d="M688.6 269.2l3.2-2.3 1.6-1.5-3.1 2.4z" fill="#3f5c8d"/><path d="M650.5 288.4l3-.8 1.7-.5-3 .9z" fill="#4b3081"/><path d="M533.5 214.4l3.1 5 1.9 .9-3-5z" fill="#35b17f"/><path d="M617.5 289.6l3 .5 1.8 .2-3-.5z" fill="#4b2b7e"/><path d="M598.9 283.6l3 1.4 1.8 .5-3-1.4z" fill="#493984"/><path d="M625.3 290.6l3 .2 1.8 .1-3-.2z" fill="#4c2a7d"/><path d="M559 252.2l3 3.5 1.9 .8-3-3.4z" fill="#38738e"/><path d="M523.1 193.6l3.1 5.7 2 .8-3.1-5.6z" fill="#6dd058"/><path d="M556 248.6l3 3.6 1.9 .9-3-3.6z" fill="#37798e"/><path d="M562 255.7l3.1 3.3 1.9 .8-3.1-3.3z" fill="#3a6e8e"/><path d="M552.9 244.8l3.1 3.8 1.9 .9-3-3.8z" fill="#35818e"/><path d="M609.7 287.7l3 .9 1.8 .3-3-.9z" fill="#4b3081"/><path d="M565.1 259l3 3.1 1.9 .8-3-3.1z" fill="#3c698e"/><path d="M549.9 240.9l3 3.9 2 .9-3.1-3.9z" fill="#33878e"/><path d="M588 277.9l3 1.9 1.9 .6-3-1.9z" fill="#474589"/><path d="M633.1 290.9l3.1-.2 1.7-.1-3 .2z" fill="#4b2b7e"/><path d="M693.4 265.4l3.2-2.5 1.6-1.5-3.1 2.5z" fill="#3c648e"/><path d="M645.7 289.5l3.1-.7 1.7-.4-3.1 .8z" fill="#4b2f80"/><path d="M568.1 262.1l3 2.9 1.9 .8-3-2.9z" fill="#3d638e"/><path d="M530.4 209.2l3.1 5.2 2 .9-3.1-5.1z" fill="#3ebb77"/><path d="M546.8 236.7l3.1 4.2 1.9 .9-3-4.1z" fill="#318e8d"/><path d="M571.1 265l3 2.8 1.9 .8-3-2.8z" fill="#3f5e8d"/><path d="M601.9 285l3 1.3 1.8 .4-3-1.2z" fill="#4a3784"/><path d="M543.8 232.4l3 4.3 2 1-3-4.3z" fill="#30958b"/><path d="M667.8 282.1l3.1-1.6 1.7-.8-3.1 1.6z" fill="#474388"/><path d="M520 187.7l3.1 5.9 2 .9-3.1-5.9z" fill="#86d848"/><path d="M672.6 279.7l3.1-1.8 1.7-1-3.1 1.8z" fill="#464789"/><path d="M591 279.8l3 1.7 1.9 .6-3-1.7z" fill="#474388"/><path d="M574.1 267.8l3 2.6 1.9 .7-3-2.5z" fill="#405a8d"/><path d="M663.1 284.2l3.1-1.4 1.6-.7-3.1 1.4z" fill="#493d86"/><path d="M640.9 290.2l3.1-.5 1.7-.2-3 .5z" fill="#4b2e7f"/><path d="M677.4 276.9l3.1-1.9 1.7-1.1-3.2 1.9z" fill="#444e8b"/><path d="M620.5 290.1l3.1 .4 1.7 .1-3-.3z" fill="#4b2e7f"/><path d="M540.7 227.9l3.1 4.5 2 1-3.1-4.5z" fill="#2f9e89"/><path d="M527.3 203.9l3.1 5.3 2 1-3.1-5.4z" fill="#4ec46c"/><path d="M612.7 288.6l3 .7 1.8 .3-3-.7z" fill="#4b3081"/><path d="M658.3 286l3.1-1.2 1.7-.6-3.1 1.3z" fill="#493a85"/><path d="M628.3 290.8l3.1 0 1.7 .1-3 0z" fill="#4b2d7e"/><path d="M682.2 273.9l3.1-2.2 1.7-1.2-3.2 2.2z" fill="#41568c"/><path d="M577.1 270.4l3 2.4 1.9 .7-3-2.4z" fill="#41568c"/><path d="M537.7 223.3l3 4.6 2 1-3.1-4.7z" fill="#30a685"/><path d="M653.5 287.6l3.1-1.1 1.7-.5-3.1 1.1z" fill="#4a3784"/><path d="M687 270.5l3.1-2.3 1.7-1.3-3.2 2.3z" fill="#3f5c8d"/><path d="M594 281.5l3.1 1.6 1.8 .5-3-1.5z" fill="#484187"/><path d="M604.9 286.3l3 1 1.8 .4-3-1z" fill="#4a3683"/><path d="M636.2 290.7l3-.3 1.7-.2-3 .4z" fill="#4b2f80"/><path d="M580.1 272.8l3.1 2.2 1.8 .8-3-2.3z" fill="#43528c"/><path d="M516.8 181.6l3.2 6.1 2 .9-3.1-6.1z" fill="#a4de34"/><path d="M524.2 198.3l3.1 5.6 2 .9-3.1-5.5z" fill="#60cc60"/><path d="M534.6 218.4l3.1 4.9 1.9 .9-3-4.8z" fill="#33ae81"/><path d="M648.8 288.8l3-.9 1.7-.3-3 .8z" fill="#4a3583"/><path d="M691.8 266.9l3.1-2.5 1.7-1.5-3.2 2.5z" fill="#3c648e"/><path d="M583.2 275l3 2.1 1.8 .8-3-2.1z" fill="#444e8b"/><path d="M615.7 289.3l3.1 .5 1.7 .3-3-.5z" fill="#4b3381"/><path d="M623.6 290.5l3 .2 1.7 .1-3-.2z" fill="#4b2f80"/><path d="M597.1 283.1l3 1.4 1.8 .5-3-1.4z" fill="#483e87"/><path d="M531.5 213.4l3.1 5 2 1-3.1-5z" fill="#3ab77a"/><path d="M644 289.7l3-.7 1.8-.2-3.1 .7z" fill="#4b3482"/><path d="M607.9 287.3l3 .9 1.8 .4-3-.9z" fill="#4a3683"/><path d="M631.4 290.8l3-.1 1.8 0-3.1 .2z" fill="#4b2f80"/><path d="M521.1 192.6l3.1 5.7 2 1-3.1-5.7z" fill="#78d351"/><path d="M557.1 251.3l3 3.4 1.9 1-3-3.5z" fill="#37798e"/><path d="M554 247.6l3.1 3.7 1.9 .9-3-3.6z" fill="#35808e"/><path d="M560.1 254.7l3 3.3 2 1-3.1-3.3z" fill="#38738e"/><path d="M551 243.8l3 3.8 2 1-3.1-3.8z" fill="#33868e"/><path d="M563.1 258l3.1 3.1 1.9 1-3-3.1z" fill="#3a6f8e"/><path d="M586.2 277.1l3 1.9 1.8 .8-3-1.9z" fill="#454b8a"/><path d="M670.9 280.5l3.2-1.8 1.6-.8-3.1 1.8z" fill="#454a8a"/><path d="M666.2 282.8l3.1-1.6 1.6-.7-3.1 1.6z" fill="#474589"/><path d="M547.9 239.8l3.1 4 1.9 1-3-3.9z" fill="#328d8d"/><path d="M675.7 277.9l3.2-2 1.6-.9-3.1 1.9z" fill="#444f8b"/><path d="M566.2 261.1l3 3 1.9 .9-3-2.9z" fill="#3b6a8e"/><path d="M661.4 284.8l3.1-1.4 1.7-.6-3.1 1.4z" fill="#484187"/><path d="M528.4 208.2l3.1 5.2 2 1-3.1-5.2z" fill="#46c071"/><path d="M544.9 235.7l3 4.1 2 1.1-3.1-4.2z" fill="#30938c"/><path d="M680.5 275l3.2-2.2 1.6-1.1-3.1 2.2z" fill="#41578c"/><path d="M600.1 284.5l3 1.2 1.8 .6-3-1.3z" fill="#493d86"/><path d="M639.2 290.4l3.1-.6 1.7-.1-3.1 .5z" fill="#4b3482"/><path d="M569.2 264.1l3 2.8 1.9 .9-3-2.8z" fill="#3c648e"/><path d="M656.6 286.5l3.1-1.2 1.7-.5-3.1 1.2z" fill="#493d86"/><path d="M541.8 231.3l3.1 4.4 1.9 1-3-4.3z" fill="#2f9b8a"/><path d="M685.3 271.7l3.2-2.3 1.6-1.2-3.1 2.3z" fill="#3f5d8d"/><path d="M618.8 289.8l3 .4 1.8 .3-3.1-.4z" fill="#4b3482"/><path d="M517.9 186.7l3.2 5.9 2 1-3.1-5.9z" fill="#94db3e"/><path d="M589.2 279l3 1.8 1.8 .7-3-1.7z" fill="#46498a"/><path d="M572.2 266.9l3 2.6 1.9 .9-3-2.6z" fill="#3e608d"/><path d="M626.6 290.7l3 0 1.8 .1-3.1 0z" fill="#4b3381"/><path d="M610.9 288.2l3 .7 1.8 .4-3-.7z" fill="#4a3784"/><path d="M651.8 287.9l3.1-1 1.7-.4-3.1 1.1z" fill="#493a85"/><path d="M538.7 226.8l3.1 4.5 2 1.1-3.1-4.5z" fill="#2fa387"/><path d="M525.3 202.8l3.1 5.4 2 1-3.1-5.3z" fill="#57c867"/><path d="M690.1 268.2l3.2-2.5 1.6-1.3-3.1 2.5z" fill="#3c648e"/><path d="M575.2 269.5l3.1 2.4 1.8 .9-3-2.4z" fill="#3f5c8d"/><path d="M634.4 290.7l3.1-.4 1.7 .1-3 .3z" fill="#4b3482"/><path d="M535.7 222.1l3 4.7 2 1.1-3-4.6z" fill="#32ac82"/><path d="M603.1 285.7l3 1.1 1.8 .5-3-1z" fill="#493d86"/><path d="M592.2 280.8l3 1.6 1.9 .7-3.1-1.6z" fill="#464789"/><path d="M647 289l3.1-.8 1.7-.3-3 .9z" fill="#493984"/><path d="M578.3 271.9l3 2.3 1.9 .8-3.1-2.2z" fill="#41598d"/><path d="M514.8 180.5l3.1 6.2 2.1 1-3.2-6.1z" fill="#b3e129"/><path d="M522.2 197.2l3.1 5.6 2 1.1-3.1-5.6z" fill="#6dd058"/><path d="M532.6 217.3l3.1 4.8 2 1.2-3.1-4.9z" fill="#37b47c"/><path d="M621.8 290.2l3 .2 1.8 .3-3-.2z" fill="#4a3683"/><path d="M613.9 288.9l3.1 .6 1.8 .3-3.1-.5z" fill="#493984"/><path d="M642.3 289.8l3-.6 1.7-.2-3 .7z" fill="#493984"/><path d="M669.3 281.2l3.1-1.7 1.7-.8-3.2 1.8z" fill="#444c8a"/><path d="M581.3 274.2l3 2.1 1.9 .8-3-2.1z" fill="#41568c"/><path d="M674.1 278.7l3.1-1.9 1.7-.9-3.2 2z" fill="#43528c"/><path d="M664.5 283.4l3.1-1.6 1.7-.6-3.1 1.6z" fill="#464789"/><path d="M595.2 282.4l3 1.4 1.9 .7-3-1.4z" fill="#474589"/><path d="M629.6 290.7l3.1-.2 1.7 .2-3 .1z" fill="#4a3683"/><path d="M678.9 275.9l3.1-2.1 1.7-1-3.2 2.2z" fill="#41588c"/><path d="M606.1 286.8l3 .9 1.8 .5-3-.9z" fill="#493c86"/><path d="M529.5 212.2l3.1 5.1 2 1.1-3.1-5z" fill="#41bd75"/><path d="M659.7 285.3l3.1-1.4 1.7-.5-3.1 1.4z" fill="#464488"/><path d="M519 191.4l3.2 5.8 2 1.1-3.1-5.7z" fill="#86d848"/><path d="M683.7 272.8l3.1-2.3 1.7-1.1-3.2 2.3z" fill="#3f5e8d"/><path d="M555.1 250.2l3.1 3.4 1.9 1.1-3-3.4z" fill="#35808e"/><path d="M552.1 246.5l3 3.7 2 1.1-3.1-3.7z" fill="#34858e"/><path d="M558.2 253.6l3 3.3 1.9 1.1-3-3.3z" fill="#37798e"/><path d="M549 242.7l3.1 3.8 1.9 1.1-3-3.8z" fill="#328c8d"/><path d="M584.3 276.3l3 1.9 1.9 .8-3-1.9z" fill="#43528c"/><path d="M654.9 286.9l3.1-1.2 1.7-.4-3.1 1.2z" fill="#484187"/><path d="M561.2 256.9l3.1 3.2 1.9 1-3.1-3.1z" fill="#38748e"/><path d="M637.5 290.3l3-.5 1.8 0-3.1 .6z" fill="#493984"/><path d="M546 238.7l3 4 2 1.1-3.1-4z" fill="#30928c"/><path d="M688.5 269.4l3.1-2.5 1.7-1.2-3.2 2.5z" fill="#3c668e"/><path d="M564.3 260.1l3 2.9 1.9 1.1-3-3z" fill="#3a708e"/><path d="M526.4 207l3.1 5.2 2 1.2-3.1-5.2z" fill="#50c56b"/><path d="M598.2 283.8l3.1 1.2 1.8 .7-3-1.2z" fill="#464488"/><path d="M542.9 234.5l3.1 4.2 1.9 1.1-3-4.1z" fill="#2f998a"/><path d="M650.1 288.2l3.1-1.1 1.7-.2-3.1 1z" fill="#483e87"/><path d="M617 289.5l3 .3 1.8 .4-3-.4z" fill="#493a85"/><path d="M567.3 263l3 2.8 1.9 1.1-3-2.8z" fill="#3b6b8e"/><path d="M624.8 290.4l3.1 0 1.7 .3-3 0z" fill="#493984"/><path d="M539.8 230.1l3.1 4.4 2 1.2-3.1-4.4z" fill="#2fa288"/><path d="M587.3 278.2l3 1.8 1.9 .8-3-1.8z" fill="#444f8b"/><path d="M515.9 185.5l3.1 5.9 2.1 1.2-3.2-5.9z" fill="#a4de34"/><path d="M609.1 287.7l3.1 .7 1.7 .5-3-.7z" fill="#493d86"/><path d="M570.3 265.8l3 2.7 1.9 1-3-2.6z" fill="#3c678e"/><path d="M632.7 290.5l3-.3 1.8 .1-3.1 .4z" fill="#493984"/><path d="M523.3 201.6l3.1 5.4 2 1.2-3.1-5.4z" fill="#65cd5e"/><path d="M536.8 225.6l3 4.5 2 1.2-3.1-4.5z" fill="#30a984"/><path d="M645.3 289.2l3.1-.9 1.7-.1-3.1 .8z" fill="#493d86"/><path d="M573.3 268.5l3.1 2.4 1.9 1-3.1-2.4z" fill="#3d628e"/><path d="M601.3 285l3 1.1 1.8 .7-3-1.1z" fill="#464488"/><path d="M590.3 280l3.1 1.6 1.8 .8-3-1.6z" fill="#444d8b"/><path d="M533.7 220.9l3.1 4.7 1.9 1.2-3-4.7z" fill="#35b17f"/><path d="M672.4 279.5l3.1-2 1.7-.7-3.1 1.9z" fill="#42548c"/><path d="M667.6 281.8l3.1-1.7 1.7-.6-3.1 1.7z" fill="#444e8b"/><path d="M677.2 276.8l3.1-2.1 1.7-.9-3.1 2.1z" fill="#405a8d"/><path d="M512.7 179.4l3.2 6.1 2 1.2-3.1-6.2z" fill="#c2e320"/><path d="M576.4 270.9l3 2.3 1.9 1-3-2.3z" fill="#3f5f8d"/><path d="M662.8 283.9l3.1-1.6 1.7-.5-3.1 1.6z" fill="#454b8a"/><path d="M640.5 289.8l3.1-.6 1.7 0-3 .6z" fill="#493c86"/><path d="M520.1 196l3.2 5.6 2 1.2-3.1-5.6z" fill="#7ad450"/><path d="M620 289.8l3 .2 1.8 .4-3-.2z" fill="#493b85"/><path d="M682 273.8l3.2-2.3 1.6-1-3.1 2.3z" fill="#3e608d"/><path d="M612.2 288.4l3 .5 1.8 .6-3.1-.6z" fill="#483e87"/><path d="M658 285.7l3.1-1.4 1.7-.4-3.1 1.4z" fill="#464789"/><path d="M530.6 216l3.1 4.9 2 1.2-3.1-4.8z" fill="#3eb978"/><path d="M627.9 290.4l3-.1 1.8 .2-3.1 .2z" fill="#493b85"/><path d="M579.4 273.2l3 2.1 1.9 1-3-2.1z" fill="#3f5c8d"/><path d="M686.8 270.5l3.2-2.5 1.6-1.1-3.1 2.5z" fill="#3c678e"/><path d="M593.4 281.6l3 1.4 1.8 .8-3-1.4z" fill="#444c8a"/><path d="M604.3 286.1l3 .9 1.8 .7-3-.9z" fill="#464488"/><path d="M653.2 287.1l3.1-1.2 1.7-.2-3.1 1.2z" fill="#474589"/><path d="M527.5 210.9l3.1 5.1 2 1.3-3.1-5.1z" fill="#4bc36e"/><path d="M635.7 290.2l3.1-.5 1.7 .1-3 .5z" fill="#493d86"/><path d="M517 190.2l3.1 5.8 2.1 1.2-3.2-5.8z" fill="#94db3e"/><path d="M582.4 275.3l3.1 1.9 1.8 1-3-1.9z" fill="#41598d"/><path d="M648.4 288.3l3.1-1 1.7-.2-3.1 1.1z" fill="#474388"/><path d="M596.4 283l3 1.2 1.9 .8-3.1-1.2z" fill="#454b8a"/><path d="M615.2 288.9l3 .4 1.8 .5-3-.3z" fill="#484187"/><path d="M623 290l3.1 .1 1.8 .3-3.1 0z" fill="#493d86"/><path d="M524.3 205.7l3.2 5.2 2 1.3-3.1-5.2z" fill="#5cca63"/><path d="M607.3 287l3 .7 1.9 .7-3.1-.7z" fill="#464488"/><path d="M643.6 289.2l3.1-.9 1.7 0-3.1 .9z" fill="#474288"/><path d="M585.5 277.2l3 1.8 1.8 1-3-1.8z" fill="#41578c"/><path d="M630.9 290.3l3.1-.3 1.7 .2-3 .3z" fill="#483e87"/><path d="M513.8 184.2l3.2 6 2 1.2-3.1-5.9z" fill="#b3e129"/><path d="M670.7 280.1l3.1-2 1.7-.6-3.1 2z" fill="#41578c"/><path d="M675.5 277.5l3.2-2.1 1.6-.7-3.1 2.1z" fill="#3f5c8d"/><path d="M665.9 282.3l3.1-1.7 1.7-.5-3.1 1.7z" fill="#43528c"/><path d="M521.2 200.2l3.1 5.5 2.1 1.3-3.1-5.4z" fill="#71d256"/><path d="M680.3 274.7l3.2-2.4 1.7-.8-3.2 2.3z" fill="#3e618d"/><path d="M661.1 284.3l3.1-1.6 1.7-.4-3.1 1.6z" fill="#444e8b"/><path d="M599.4 284.2l3.1 1.1 1.8 .8-3-1.1z" fill="#454a8a"/><path d="M588.5 279l3 1.6 1.9 1-3.1-1.6z" fill="#42548c"/><path d="M638.8 289.7l3.1-.6 1.7 .1-3.1 .6z" fill="#474288"/><path d="M685.2 271.5l3.1-2.5 1.7-1-3.2 2.5z" fill="#3c698e"/><path d="M656.3 285.9l3.1-1.3 1.7-.3-3.1 1.4z" fill="#454b8a"/><path d="M618.2 289.3l3.1 .2 1.7 .5-3-.2z" fill="#474288"/><path d="M510.7 178.1l3.1 6.1 2.1 1.3-3.2-6.1z" fill="#d2e519"/><path d="M610.3 287.7l3.1 .6 1.8 .6-3-.5z" fill="#474589"/><path d="M626.1 290.1l3.1-.2 1.7 .4-3 .1z" fill="#474288"/><path d="M518.1 194.6l3.1 5.6 2.1 1.4-3.2-5.6z" fill="#8bd945"/><path d="M651.5 287.3l3.1-1.2 1.7-.2-3.1 1.2z" fill="#46498a"/><path d="M591.5 280.6l3 1.5 1.9 .9-3-1.4z" fill="#42538c"/><path d="M602.5 285.3l3 .9 1.8 .8-3-.9z" fill="#454a8a"/><path d="M634 290l3-.5 1.8 .2-3.1 .5z" fill="#474388"/><path d="M646.7 288.3l3.1-1 1.7 0-3.1 1z" fill="#464789"/><path d="M514.9 188.8l3.2 5.8 2 1.4-3.1-5.8z" fill="#a5df32"/><path d="M621.3 289.5l3 .1 1.8 .5-3.1-.1z" fill="#464488"/><path d="M613.4 288.3l3 .4 1.8 .6-3-.4z" fill="#464689"/><path d="M594.5 282.1l3.1 1.2 1.8 .9-3-1.2z" fill="#43528c"/><path d="M669 280.6l3.2-1.9 1.6-.6-3.1 2z" fill="#405a8d"/><path d="M673.8 278.1l3.2-2.1 1.7-.6-3.2 2.1z" fill="#3f5e8d"/><path d="M641.9 289.1l3-.9 1.8 .1-3.1 .9z" fill="#464689"/><path d="M664.2 282.7l3.1-1.7 1.7-.4-3.1 1.7z" fill="#41568c"/><path d="M678.7 275.4l3.1-2.3 1.7-.8-3.2 2.4z" fill="#3d638e"/><path d="M629.2 289.9l3-.3 1.8 .4-3.1 .3z" fill="#464488"/><path d="M605.5 286.2l3 .8 1.8 .7-3-.7z" fill="#454b8a"/><path d="M659.4 284.6l3.1-1.6 1.7-.3-3.1 1.6z" fill="#43528c"/><path d="M683.5 272.3l3.2-2.4 1.6-.9-3.1 2.5z" fill="#3b6a8e"/><path d="M511.8 182.8l3.1 6 2.1 1.4-3.2-6z" fill="#c2e320"/><path d="M654.6 286.1l3.1-1.4 1.7-.1-3.1 1.3z" fill="#444e8b"/><path d="M637 289.5l3.1-.7 1.8 .3-3.1 .6z" fill="#464789"/><path d="M597.6 283.3l3 1.1 1.9 .9-3.1-1.1z" fill="#43518b"/><path d="M616.4 288.7l3.1 .2 1.8 .6-3.1-.2z" fill="#46498a"/><path d="M649.8 287.3l3.1-1.2 1.7 0-3.1 1.2z" fill="#444d8b"/><path d="M624.3 289.6l3.1-.2 1.8 .5-3.1 .2z" fill="#464789"/><path d="M608.5 287l3.1 .5 1.8 .8-3.1-.6z" fill="#454b8a"/><path d="M508.6 176.6l3.2 6.2 2 1.4-3.1-6.1z" fill="#e1e719"/><path d="M632.2 289.6l3.1-.5 1.7 .4-3 .5z" fill="#46498a"/><path d="M644.9 288.2l3.1-1 1.8 .1-3.1 1z" fill="#444c8a"/><path d="M600.6 284.4l3.1 .9 1.8 .9-3-.9z" fill="#43518b"/><path d="M672.2 278.7l3.1-2.2 1.7-.5-3.2 2.1z" fill="#3e618d"/><path d="M667.3 281l3.2-2 1.7-.3-3.2 1.9z" fill="#3f5c8d"/><path d="M677 276l3.2-2.3 1.6-.6-3.1 2.3z" fill="#3c668e"/><path d="M662.5 283l3.1-1.8 1.7-.2-3.1 1.7z" fill="#41598d"/><path d="M681.8 273.1l3.2-2.5 1.7-.7-3.2 2.4z" fill="#3a6c8e"/><path d="M619.5 288.9l3 .1 1.8 .6-3-.1z" fill="#454a8a"/><path d="M640.1 288.8l3.1-.8 1.7 .2-3 .9z" fill="#444c8a"/><path d="M611.6 287.5l3 .4 1.8 .8-3-.4z" fill="#444d8b"/><path d="M657.7 284.7l3.1-1.6 1.7-.1-3.1 1.6z" fill="#41568c"/><path d="M627.4 289.4l3-.3 1.8 .5-3 .3z" fill="#454a8a"/><path d="M603.7 285.3l3 .8 1.8 .9-3-.8z" fill="#43528c"/><path d="M652.9 286.1l3.1-1.4 1.7 0-3.1 1.4z" fill="#42538c"/><path d="M635.3 289.1l3.1-.6 1.7 .3-3.1 .7z" fill="#444c8a"/><path d="M648 287.2l3.1-1.2 1.8 .1-3.1 1.2z" fill="#43528c"/><path d="M614.6 287.9l3.1 .3 1.8 .7-3.1-.2z" fill="#444e8b"/><path d="M622.5 289l3.1-.2 1.8 .6-3.1 .2z" fill="#444d8b"/><path d="M606.7 286.1l3.1 .6 1.8 .8-3.1-.5z" fill="#43528c"/><path d="M643.2 288l3.1-1 1.7 .2-3.1 1z" fill="#43518b"/><path d="M630.4 289.1l3.1-.4 1.8 .4-3.1 .5z" fill="#444e8b"/><path d="M670.5 279l3.1-2.1 1.7-.4-3.1 2.2z" fill="#3d638e"/><path d="M675.3 276.5l3.2-2.2 1.7-.6-3.2 2.3z" fill="#3c698e"/><path d="M665.6 281.2l3.2-1.9 1.7-.3-3.2 2z" fill="#3f5f8d"/><path d="M680.2 273.7l3.2-2.5 1.6-.6-3.2 2.5z" fill="#3a6e8e"/><path d="M660.8 283.1l3.1-1.7 1.7-.2-3.1 1.8z" fill="#3f5c8d"/><path d="M638.4 288.5l3.1-.8 1.7 .3-3.1 .8z" fill="#43518b"/><path d="M656 284.7l3.1-1.5 1.7-.1-3.1 1.6z" fill="#405a8d"/><path d="M617.7 288.2l3 0 1.8 .8-3-.1z" fill="#43518b"/><path d="M609.8 286.7l3 .4 1.8 .8-3-.4z" fill="#42538c"/><path d="M625.6 288.8l3.1-.3 1.7 .6-3 .3z" fill="#43518b"/><path d="M651.1 286l3.2-1.4 1.7 .1-3.1 1.4z" fill="#41588c"/><path d="M633.5 288.7l3.1-.7 1.8 .5-3.1 .6z" fill="#43528c"/><path d="M646.3 287l3.1-1.2 1.7 .2-3.1 1.2z" fill="#41578c"/><path d="M612.8 287.1l3.1 .2 1.8 .9-3.1-.3z" fill="#41568c"/><path d="M620.7 288.2l3.1-.1 1.8 .7-3.1 .2z" fill="#42538c"/><path d="M673.6 276.9l3.2-2.2 1.7-.4-3.2 2.2z" fill="#3a6c8e"/><path d="M668.8 279.3l3.2-2.1 1.6-.3-3.1 2.1z" fill="#3c678e"/><path d="M678.5 274.3l3.2-2.5 1.7-.6-3.2 2.5z" fill="#39708e"/><path d="M641.5 287.7l3.1-1.1 1.7 .4-3.1 1z" fill="#41578c"/><path d="M663.9 281.4l3.2-1.9 1.7-.2-3.2 1.9z" fill="#3d638e"/><path d="M628.7 288.5l3.1-.4 1.7 .6-3.1 .4z" fill="#42548c"/><path d="M659.1 283.2l3.1-1.8 1.7 0-3.1 1.7z" fill="#3e608d"/><path d="M654.3 284.6l3.1-1.5 1.7 .1-3.1 1.5z" fill="#3f5e8d"/><path d="M636.6 288l3.1-.8 1.8 .5-3.1 .8z" fill="#41578c"/><path d="M615.9 287.3l3 .1 1.8 .8-3 0z" fill="#41588c"/><path d="M649.4 285.8l3.1-1.4 1.8 .2-3.2 1.4z" fill="#3f5c8d"/><path d="M623.8 288.1l3.1-.3 1.8 .7-3.1 .3z" fill="#41578c"/><path d="M631.8 288.1l3-.7 1.8 .6-3.1 .7z" fill="#41588c"/><path d="M644.6 286.6l3.1-1.1 1.7 .3-3.1 1.2z" fill="#3f5c8d"/><path d="M672 277.2l3.1-2.3 1.7-.2-3.2 2.2z" fill="#3a6f8e"/><path d="M676.8 274.7l3.2-2.5 1.7-.4-3.2 2.5z" fill="#38738e"/><path d="M667.1 279.5l3.2-2.1 1.7-.2-3.2 2.1z" fill="#3b6b8e"/><path d="M662.2 281.4l3.2-1.9 1.7 0-3.2 1.9z" fill="#3c678e"/><path d="M618.9 287.4l3.1-.1 1.8 .8-3.1 .1z" fill="#405a8d"/><path d="M639.7 287.2l3.1-1 1.8 .4-3.1 1.1z" fill="#3f5c8d"/><path d="M657.4 283.1l3.1-1.7 1.7 0-3.1 1.8z" fill="#3c648e"/><path d="M626.9 287.8l3.1-.4 1.8 .7-3.1 .4z" fill="#405a8d"/><path d="M652.5 284.4l3.2-1.5 1.7 .2-3.1 1.5z" fill="#3d628e"/><path d="M634.8 287.4l3.1-.8 1.8 .6-3.1 .8z" fill="#3f5c8d"/><path d="M647.7 285.5l3.1-1.4 1.7 .3-3.1 1.4z" fill="#3e618d"/><path d="M622 287.3l3.1-.3 1.8 .8-3.1 .3z" fill="#3f5d8d"/><path d="M642.8 286.2l3.1-1.2 1.8 .5-3.1 1.1z" fill="#3e608d"/><path d="M630 287.4l3.1-.7 1.7 .7-3 .7z" fill="#3f5e8d"/><path d="M675.1 274.9l3.2-2.4 1.7-.3-3.2 2.5z" fill="#37768e"/><path d="M670.3 277.4l3.1-2.3 1.7-.2-3.1 2.3z" fill="#39718e"/><path d="M665.4 279.5l3.2-2.1 1.7 0-3.2 2.1z" fill="#3a6e8e"/><path d="M660.5 281.4l3.2-1.9 1.7 0-3.2 1.9z" fill="#3b6b8e"/><path d="M637.9 286.6l3.2-1 1.7 .6-3.1 1z" fill="#3e618d"/><path d="M655.7 282.9l3.1-1.7 1.7 .2-3.1 1.7z" fill="#3c698e"/><path d="M625.1 287l3.1-.5 1.8 .9-3.1 .4z" fill="#3e608d"/><path d="M650.8 284.1l3.1-1.5 1.8 .3-3.2 1.5z" fill="#3c678e"/><path d="M633.1 286.7l3.1-.8 1.7 .7-3.1 .8z" fill="#3d628e"/><path d="M645.9 285l3.2-1.3 1.7 .4-3.1 1.4z" fill="#3c678e"/><path d="M673.4 275.1l3.2-2.5 1.7-.1-3.2 2.4z" fill="#37798e"/><path d="M668.6 277.4l3.1-2.2 1.7-.1-3.1 2.3z" fill="#37758e"/><path d="M663.7 279.5l3.2-2.1 1.7 0-3.2 2.1z" fill="#39718e"/><path d="M641.1 285.6l3.1-1.2 1.7 .6-3.1 1.2z" fill="#3c668e"/><path d="M628.2 286.5l3.1-.6 1.8 .8-3.1 .7z" fill="#3d638e"/><path d="M658.8 281.2l3.2-1.9 1.7 .2-3.2 1.9z" fill="#3a708e"/><path d="M653.9 282.6l3.2-1.8 1.7 .4-3.1 1.7z" fill="#3a6e8e"/><path d="M636.2 285.9l3.1-1 1.8 .7-3.2 1z" fill="#3c678e"/><path d="M649.1 283.7l3.1-1.6 1.7 .5-3.1 1.5z" fill="#3a6c8e"/><path d="M631.3 285.9l3.1-.8 1.8 .8-3.1 .8z" fill="#3c688e"/><path d="M644.2 284.4l3.1-1.3 1.8 .6-3.2 1.3z" fill="#3a6c8e"/><path d="M671.7 275.2l3.2-2.5 1.7-.1-3.2 2.5z" fill="#367c8e"/><path d="M666.9 277.4l3.1-2.3 1.7 .1-3.1 2.2z" fill="#37798e"/><path d="M662 279.3l3.2-2.1 1.7 .2-3.2 2.1z" fill="#37758e"/><path d="M639.3 284.9l3.1-1.1 1.8 .6-3.1 1.2z" fill="#3a6c8e"/><path d="M657.1 280.8l3.2-1.9 1.7 .4-3.2 1.9z" fill="#38738e"/><path d="M652.2 282.1l3.2-1.7 1.7 .4-3.2 1.8z" fill="#39718e"/><path d="M634.4 285.1l3.1-1 1.8 .8-3.1 1z" fill="#3a6d8e"/><path d="M647.3 283.1l3.2-1.5 1.7 .5-3.1 1.6z" fill="#39708e"/><path d="M670 275.1l3.3-2.5 1.6 .1-3.2 2.5z" fill="#35818e"/><path d="M642.4 283.8l3.2-1.4 1.7 .7-3.1 1.3z" fill="#39708e"/><path d="M665.2 277.2l3.1-2.3 1.7 .2-3.1 2.3z" fill="#357d8e"/><path d="M660.3 278.9l3.1-2 1.8 .3-3.2 2.1z" fill="#377a8e"/><path d="M655.4 280.4l3.1-1.9 1.8 .4-3.2 1.9z" fill="#37788e"/><path d="M637.5 284.1l3.2-1.2 1.7 .9-3.1 1.1z" fill="#39718e"/><path d="M650.5 281.6l3.1-1.8 1.8 .6-3.2 1.7z" fill="#37768e"/><path d="M645.6 282.4l3.1-1.5 1.8 .7-3.2 1.5z" fill="#37768e"/><path d="M668.3 274.9l3.3-2.5 1.7 .2-3.3 2.5z" fill="#34848e"/><path d="M663.4 276.9l3.2-2.3 1.7 .3-3.1 2.3z" fill="#35828e"/><path d="M640.7 282.9l3.1-1.3 1.8 .8-3.2 1.4z" fill="#37768e"/><path d="M658.5 278.5l3.2-2.1 1.7 .5-3.1 2z" fill="#35808e"/><path d="M653.6 279.8l3.2-1.8 1.7 .5-3.1 1.9z" fill="#357d8e"/><path d="M648.7 280.9l3.2-1.7 1.7 .6-3.1 1.8z" fill="#367c8e"/><path d="M643.8 281.6l3.2-1.5 1.7 .8-3.1 1.5z" fill="#367b8e"/><path d="M666.6 274.6l3.2-2.5 1.8 .3-3.3 2.5z" fill="#33898e"/><path d="M661.7 276.4l3.2-2.2 1.7 .4-3.2 2.3z" fill="#33868e"/><path d="M656.8 278l3.2-2.1 1.7 .5-3.2 2.1z" fill="#34848e"/><path d="M651.9 279.2l3.2-1.9 1.7 .7-3.2 1.8z" fill="#35828e"/><path d="M647 280.1l3.1-1.7 1.8 .8-3.2 1.7z" fill="#35828e"/><path d="M664.9 274.2l3.2-2.5 1.7 .4-3.2 2.5z" fill="#318e8d"/><path d="M660 275.9l3.2-2.3 1.7 .6-3.2 2.2z" fill="#328b8d"/><path d="M655.1 277.3l3.1-2.1 1.8 .7-3.2 2.1z" fill="#33898e"/><path d="M650.1 278.4l3.2-1.9 1.8 .8-3.2 1.9z" fill="#33888e"/><path d="M663.2 273.6l3.2-2.4 1.7 .5-3.2 2.5z" fill="#30928c"/><path d="M658.2 275.2l3.3-2.3 1.7 .7-3.2 2.3z" fill="#31908d"/><path d="M653.3 276.5l3.2-2.1 1.7 .8-3.1 2.1z" fill="#318e8d"/><path d="M661.5 272.9l3.2-2.4 1.7 .7-3.2 2.4z" fill="#30978b"/><path d="M656.5 274.4l3.2-2.3 1.8 .8-3.3 2.3z" fill="#30958b"/><path d="M659.7 272.1l3.2-2.4 1.8 .8-3.2 2.4z" fill="#2f9d89"/></g><g><!-- Surface Plot --><g transform="translate(589.345057 59.978182) scale(0.12 -0.12)"><defs><path id="DejaVuSans-53" d="M3425 4513L3425 3897Q3066 4069 2747 4153Q2428 4238 2131 4238Q1616 4238 1336 4038Q1056 3838 1056 3469Q1056 3159 1242 3001Q1428 2844 1947 2747L2328 2669Q3034 2534 3370 2195Q3706 1856 3706 1288Q3706 609 3251 259Q2797 -91 1919 -91Q1588 -91 1214 -16Q841 59 441 206L441 856Q825 641 1194 531Q1563 422 1919 422Q2459 422 2753 634Q3047 847 3047 1241Q3047 1584 2836 1778Q2625 1972 2144 2069L1759 2144Q1053 2284 737 2584Q422 2884 422 3419Q422 4038 858 4394Q1294 4750 2059 4750Q2388 4750 2728 4690Q3069 4631 3425 4513z" transform="scale(0.015625)"/><path id="DejaVuSans-75" d="M544 1381L544 3500L1119 3500L1119 1403Q1119 906 1312 657Q1506 409 1894 409Q2359 409 2629 706Q2900 1003 2900 1516L2900 3500L3475 3500L3475 0L2900 0L2900 538Q2691 219 2414 64Q2138 -91 1772 -91Q1169 -91 856 284Q544 659 544 1381zM1991 3584L1991 3584z" transform="scale(0.015625)"/><path id="DejaVuSans-66" d="M2375 4863L2375 4384L1825 4384Q1516 4384 1395 4259Q1275 4134 1275 3809L1275 3500L2222 3500L2222 3053L1275 3053L1275 0L697 0L697 3053L147 3053L147 3500L697 3500L697 3744Q697 4328 969 4595Q1241 4863 1831 4863L2375 4863z" transform="scale(0.015625)"/><path id="DejaVuSans-63" d="M3122 3366L3122 2828Q2878 2963 2633 3030Q2388 3097 2138 3097Q1578 3097 1268 2742Q959 2388 959 1747Q959 1106 1268 751Q1578 397 2138 397Q2388 397 2633 464Q2878 531 3122 666L3122 134Q2881 22 2623 -34Q2366 -91 2075 -91Q1284 -91 818 406Q353 903 353 1747Q353 2603 823 3093Q1294 3584 2113 3584Q2378 3584 2631 3529Q2884 3475 3122 3366z" transform="scale(0.015625)"/><path id="DejaVuSans-50" d="M1259 4147L1259 2394L2053 2394Q2494 2394 2734 2622Q2975 2850 2975 3272Q2975 3691 2734 3919Q2494 4147 2053 4147L1259 4147zM628 4666L2053 4666Q2838 4666 3239 4311Q3641 3956 3641 3272Q3641 2581 3239 2228Q2838 1875 2053 1875L1259 1875L1259 0L628 0L628 4666z" transform="scale(0.015625)"/><path id="DejaVuSans-6c" d="M603 4863L1178 4863L1178 0L603 0L603 4863z" transform="scale(0.015625)"/><path id="DejaVuSans-74" d="M1172 4494L1172 3500L2356 3500L2356 3053L1172 3053L1172 1153Q1172 725 1289 603Q1406 481 1766 481L2356 481L2356 0L1766 0Q1100 0 847 248Q594 497 594 1153L594 3053L172 3053L172 3500L594 3500L594 4494L1172 4494z" transform="scale(0.015625)"/></defs><use href="#DejaVuSans-53"/><use href="#DejaVuSans-75" transform="translate(63.476562 0)"/><use href="#DejaVuSans-72" transform="translate(126.855469 0)"/><use href="#DejaVuSans-66" transform="translate(167.96875 0)"/><use href="#DejaVuSans-61" transform="translate(203.173828 0)"/><use href="#DejaVuSans-63" transform="translate(264.453125 0)"/><use href="#DejaVuSans-65" transform="translate(319.433594 0)"/><use href="#DejaVuSans-20" transform="translate(380.957031 0)"/><use href="#DejaVuSans-50" transform="translate(412.744141 0)"/><use href="#DejaVuSans-6c" transform="translate(473.046875 0)"/><use href="#DejaVuSans-6f" transform="translate(500.830078 0)"/><use href="#DejaVuSans-74" transform="translate(562.011719 0)"/></g></g></g></g><defs><clipPath id="p1d80104ca5"><rect x="108" y="51.8" width="304.4" height="151.2"/></clipPath><clipPath id="p754749531e"><rect x="108" y="233.3" width="304.4" height="151.2"/></clipPath><clipPath id="p0b21c5838a"><rect x="473.2" y="66" width="304.4" height="304.4"/></clipPath></defs></svg></div>
</div>

<!-- next cell -->
<div class="a" style="left:303px;top:659px;width:8px;height:37px;background:#3e6fd3;border-radius:2px"></div>
<div class="t" style="left:327px;top:669px;font-family:'Liberation Mono',monospace;font-size:18.4px;letter-spacing:-0.6px;color:#3f7cc4">[ ]:</div>
<div class="a" style="left:375px;top:659px;width:837px;height:37px;border:1px solid #3e6fd3;background:#fff"></div>
<svg class="a" style="left:1030px;top:662px" width="180" height="24" viewBox="0 0 180 24">
  <g fill="none" stroke="#616161" stroke-width="1.3">
    <rect x="11" y="7" width="9" height="11" rx="1"/><path d="M8.5 15V5.5a1 1 0 0 1 1-1h7"/><path d="M15.5 10v5M13 12.5h5"/>
    <path d="M44 19V5.5M38.5 11L44 5.5L49.5 11" stroke-width="1.6"/>
  </g>
  <path d="M74 5.5V19M68.5 13.5L74 19L79.5 13.5" fill="none" stroke="#bdbdbd" stroke-width="1.6"/>
  <g fill="none" stroke="#616161" stroke-width="1.6">
    <rect x="98" y="14.5" width="12.5" height="4.5" rx="1"/><path d="M104.2 5v7M101 8.5h6.5"/>
    <rect x="127" y="5" width="12.5" height="4.5" rx="1"/><path d="M133.2 12v7M130 15.5h6.5"/>
  </g>
  <path d="M159.5 6h9v1.6h-9zM161 8h6v9a1 1 0 0 1-1 1h-4a1 1 0 0 1-1-1z" fill="#616161"/>
  <rect x="161.5" y="4.5" width="5" height="1.8" fill="#616161"/>
</svg>

<!-- bottom splitter -->
<div class="a" style="left:288px;top:701px;width:961px;height:6px;background:#bdbdbd"></div>
<div class="a" style="left:1242px;top:0;width:7px;height:707px;background:#bdbdbd"></div>

<!-- right sidebar -->
<div class="a" style="left:1249px;top:0;width:31px;height:707px;background:#eeeeee"></div>
<svg class="a" style="left:1249px;top:0" width="31" height="70" viewBox="0 0 31 70">
  <g fill="#616161">
    <circle cx="18" cy="5" r="5.5"/>
    <path d="M16.5 -2h3v14h-3zM11 3.5h14v3h-14zM12.5 -0.5l10 10l2-2l-10-10zM12.5 9.5l10-10l2 2l-10 10z"/>
  </g>
  <circle cx="18" cy="5" r="2" fill="#eeeeee"/>
  <circle cx="10.2" cy="-1" r="1.3" fill="#616161"/>
  <path transform="translate(5.3,46) scale(0.9,0.82)" d="M20 8h-2.81c-.45-.78-1.07-1.45-1.82-1.96L17 4.41 15.59 3l-2.17 2.17C12.96 5.06 12.49 5 12 5c-.49 0-.96.06-1.41.17L8.41 3 7 4.41l1.62 1.63C7.88 6.55 7.26 7.22 6.81 8H4v2h2.09c-.05.33-.09.66-.09 1v1H4v2h2v1c0 .34.04.67.09 1H4v2h2.81c1.04 1.79 2.97 3 5.19 3s4.15-1.21 5.19-3H20v-2h-2.09c.05-.33.09-.66.09-1v-1h2v-2h-2v-1c0-.34-.04-.67-.09-1H20V8zm-6 8h-4v-2h4v2zm0-4h-4v-2h4v2z" fill="#616161"/></svg>

<!-- status bar -->
<div class="a" style="left:0;top:707px;width:1280px;height:13px;background:#eeeeee"></div>
<div class="t" style="left:25px;top:711px;font-size:15px;color:#212121"><svg class="cj" viewBox="0 -880 4000 1000" style="width:4.000em"><use href="#g7b80" x="0"/><use href="#g6613" x="1000"/><use href="#g754c" x="2000"/><use href="#g9762" x="3000"/></svg></div>
<div class="a" style="left:90px;top:711px;width:35px;height:18px;border-radius:9px;background:#bdbdbd"></div>
<div class="a" style="left:92px;top:713px;width:14px;height:14px;border-radius:50%;background:#fff"></div>
<div class="t" style="left:151px;top:710.5px;font-size:16.4px;color:#212121">0</div>
<div class="a" style="left:171.5px;top:712px;width:14.5px;height:14px;background:#616161;border-radius:1px"></div>
<div class="t" style="left:196px;top:710.5px;font-size:16.4px;color:#212121">1</div>
<svg class="a" style="left:216px;top:711px" width="15" height="9" viewBox="0 0 15 9"><path d="M3 3h9v6h-9zM5 0.5h1.5v2.5h-1.5zM8.5 0.5h1.5v2.5h-1.5z" fill="none" stroke="#616161" stroke-width="1.3"/></svg>
<div class="t" style="left:249px;top:711px;font-size:16px;color:#212121">Python 3 (ipykernel) | <span style="font-size:15px"><svg class="cj" viewBox="0 -880 2000 1000" style="width:2.000em"><use href="#g5fd9" x="0"/><use href="#g788c" x="1000"/></svg></span></div>
<div class="t" style="left:893px;top:711px;font-size:15px;color:#212121"><svg class="cj" viewBox="0 -880 5000 1000" style="width:5.000em"><use href="#g6a21" x="0"/><use href="#g5f0f" x="1000"/><use href="#gff1a" x="2000"/><use href="#g7f16" x="3000"/><use href="#g8f91" x="4000"/></svg></div>
<svg class="a" style="left:987px;top:711px" width="15" height="9" viewBox="0 0 15 9"><path d="M7.5 1l5.5 2v3M7.5 1l-5.5 2v3" fill="none" stroke="#616161" stroke-width="1.4"/><path d="M5 5l2 2l3-3" fill="none" stroke="#616161" stroke-width="1.3"/></svg>
<div class="t" style="left:1020px;top:711px;font-size:15px;color:#212121"><svg class="cj" viewBox="0 -880 1000 1000" style="width:1.000em"><use href="#g884c" x="0"/></svg><span style="font-size:16.4px"> 1</span><svg class="cj" viewBox="0 -880 2000 1000" style="width:2.000em"><use href="#gff0c" x="0"/><use href="#g5217" x="1000"/></svg><span style="font-size:16.4px"> 1</span></div>
<div class="t" style="left:1109px;top:710.5px;font-size:16.4px;color:#212121">Untitled.ipynb</div>
<div class="t" style="left:1226px;top:710.5px;font-size:16.4px;color:#212121">0</div>
<svg class="a" style="left:1246px;top:710px" width="16" height="10" viewBox="0 0 16 10"><path d="M3 10V6a5 5 0 0 1 10 0v4" fill="none" stroke="#616161" stroke-width="1.5"/></svg>
</body></html>
